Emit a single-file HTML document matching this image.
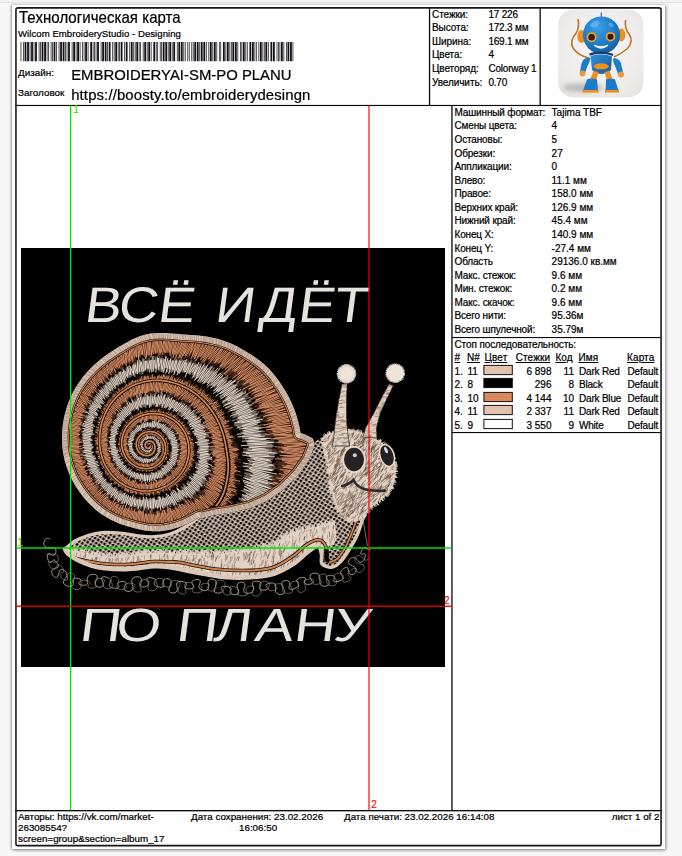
<!DOCTYPE html>
<html lang="ru">
<head>
<meta charset="utf-8">
<title>Технологическая карта</title>
<style>
html,body{margin:0;padding:0}
body{width:682px;height:856px;overflow:hidden;background:#f7f7f7;position:relative;font-family:"Liberation Sans",sans-serif;color:#000}
.topstrip{position:absolute;left:0;top:0;width:682px;height:2px;background:#f2f2f2;border-bottom:0.8px solid #e4e4e4}
.page{position:absolute;left:12px;top:5px;width:653px;height:844px;background:#fff;box-shadow:1px 1px 3px rgba(0,0,0,.45),-1px 0 2px rgba(0,0,0,.32)}
.ln{position:absolute;background:#0a0a0a}
.t{position:absolute;white-space:nowrap;line-height:1;-webkit-text-stroke-width:0.22px}
.u{text-decoration:underline}
svg{position:absolute;left:0;top:0}
</style>
</head>
<body>
<div class="topstrip"></div>
<div class="page"></div>

<svg width="682" height="856" viewBox="0 0 682 856" xmlns="http://www.w3.org/2000/svg">
<rect x="21" y="248" width="424" height="419" fill="#000"/>
<path d="M50.2 539.4C49.8 539.2 48.7 538.1 47.8 538.2C46.9 538.2 45.7 538.6 45 539.6C44.4 540.6 43.6 542.8 43.8 544.2C44.1 545.5 45.2 546.9 46.5 547.5C47.8 548.1 50.2 547.5 51.7 547.7C53.2 547.9 54.6 547.9 55.3 548.6C56 549.3 56 550.7 55.9 551.8C55.8 552.8 55.2 554.4 54.6 554.9C54 555.5 53.1 555.4 52.3 555.2C51.5 554.9 50.6 553.7 49.8 553.5C49.1 553.3 48.3 553.2 47.9 553.9C47.5 554.6 47.3 556.4 47.5 557.7C47.6 559 48.3 560.8 48.8 561.6C49.4 562.4 50.3 562.6 50.9 562.4C51.5 562.3 52 561.2 52.6 560.8C53.1 560.4 53.5 559.8 54.2 560C54.8 560.2 55.7 561.1 56.4 562C57.1 562.9 58.1 564.4 58.4 565.3C58.6 566.2 58.4 566.9 57.8 567.5C57.2 568 55.7 568 54.7 568.5C53.8 569 52.4 569.5 52 570.4C51.5 571.3 51.6 572.8 52.1 573.9C52.5 575 53.8 576.4 54.6 576.9C55.5 577.5 56.6 577.5 57.3 577C58 576.5 58.2 575 58.6 574C59 572.9 59 571.3 59.6 570.5C60.2 569.8 61.1 569.4 62.1 569.5C63.2 569.7 64.8 570.6 65.6 571.5C66.4 572.5 67 573.9 67 575.1C66.9 576.2 66 577.3 65.5 578.4C64.9 579.5 63.7 580.7 63.5 581.7C63.4 582.7 63.7 583.9 64.5 584.7C65.4 585.4 67.4 586.1 68.7 586.3C70 586.4 71.8 586.1 72.6 585.5C73.4 584.9 73.4 583.7 73.4 582.7C73.5 581.7 72.7 580.4 72.9 579.7C73.1 578.9 73.6 578.4 74.5 578.2C75.4 578 77.2 578.2 78.2 578.5C79.2 578.7 80.2 579.1 80.7 579.5C81.2 579.8 81.2 580.2 81 580.6C80.9 581 80.3 581.3 79.9 581.8C79.5 582.2 78.9 582.7 78.8 583.1C78.8 583.6 79 584.2 79.7 584.5C80.5 584.9 82.2 585.4 83.5 585.3C84.7 585.3 86.7 585.1 87.3 584.2C87.9 583.3 86.9 581.3 87.1 580C87.2 578.6 87.6 577.1 88.2 576.2C88.8 575.3 89.6 575 90.6 574.7C91.5 574.4 92.9 574.2 93.9 574.3C95 574.4 96.1 574.8 96.7 575.4C97.2 575.9 97.3 576.8 97.2 577.8C97.1 578.8 96.3 580 95.9 581.1C95.6 582.3 95.1 583.6 95.3 584.5C95.5 585.5 96.3 586.4 97.3 586.8C98.2 587.3 99.9 587.4 100.9 587.1C101.9 586.9 102.9 586.1 103.2 585.2C103.5 584.3 102.9 582.8 102.6 581.7C102.4 580.6 101.5 579.2 101.6 578.4C101.8 577.5 102.5 576.9 103.5 576.7C104.5 576.6 106.5 576.9 107.7 577.5C108.8 578 110 579.1 110.3 580.1C110.7 581 110 582.3 109.8 583.3C109.7 584.3 108.9 585.4 109.3 586.2C109.7 586.9 111 587.6 112.2 587.9C113.5 588.2 115.8 588.3 116.9 588.2C118.1 588 118.9 587.5 119.1 586.9C119.3 586.4 118.3 585.5 118.1 584.8C118 584.1 117.6 583.3 118.1 582.7C118.6 582.2 120.2 581.8 121.3 581.6C122.4 581.4 123.9 581.5 124.7 581.8C125.5 582.1 126 582.6 126 583.2C126.1 583.9 125.4 584.8 125 585.6C124.7 586.5 124 587.6 124 588.5C124.1 589.3 124.6 590.2 125.4 590.7C126.2 591.2 127.9 591.5 129 591.4C130.2 591.2 131.6 590.7 132.2 589.9C132.8 589.1 132.9 587.9 132.8 586.6C132.7 585.4 131.9 583.8 131.9 582.5C131.8 581.2 131.8 579.7 132.4 578.8C133.1 577.8 134.6 577.1 135.8 576.8C137.1 576.6 138.9 576.8 139.9 577.2C140.9 577.7 141.5 578.7 141.7 579.6C141.8 580.6 141.1 581.9 140.9 583C140.7 584 140.1 585.1 140.5 585.8C140.8 586.4 141.8 586.9 142.8 587C143.9 587 145.7 586.7 146.6 586.3C147.6 585.8 148.4 584.9 148.6 584.1C148.7 583.3 148 582.3 147.6 581.5C147.3 580.6 146.4 579.7 146.6 579.1C146.7 578.5 147.3 578.1 148.3 577.8C149.2 577.6 151.1 577.6 152.2 577.9C153.3 578.1 154.6 578.6 155 579.1C155.5 579.7 155.1 580.5 155 581.3C154.8 582 154 583 154.1 583.8C154.3 584.5 154.8 585.4 155.7 585.9C156.7 586.5 158.6 587 159.9 587.2C161.1 587.3 162.6 587.3 163.3 586.9C164 586.6 164.1 585.9 164 585.2C164 584.5 163.2 583.4 163.1 582.5C163 581.7 162.9 580.6 163.5 580C164 579.3 165.4 578.8 166.5 578.7C167.6 578.6 169.2 578.9 170.1 579.5C170.9 580.1 171.3 581.1 171.3 582.2C171.3 583.3 170.4 584.8 169.9 586.1C169.5 587.4 168.7 588.9 168.8 590C168.9 591 169.6 592 170.6 592.5C171.5 593 173.3 593.2 174.3 592.9C175.4 592.6 176.6 591.9 177.1 591C177.6 590.1 177.3 588.7 177.2 587.5C177.1 586.4 176.4 585 176.6 584C176.7 583 177.2 582.2 178.2 581.8C179.1 581.4 180.9 581.3 182.2 581.5C183.5 581.6 185.1 582.2 185.8 582.8C186.5 583.3 186.6 584.2 186.5 584.8C186.4 585.5 185.5 586.3 185.3 586.8C185.2 587.4 185 588 185.6 588.3C186.2 588.7 187.5 588.9 188.7 588.9C189.8 588.9 191.5 588.7 192.3 588.4C193.2 588 193.6 587.3 193.6 586.6C193.7 585.9 192.8 585 192.6 584.1C192.3 583.3 191.7 582.3 192 581.6C192.3 580.9 193.3 580.2 194.3 579.9C195.3 579.6 197.1 579.5 198.1 579.6C199.1 579.8 200.1 580.2 200.4 580.9C200.6 581.5 200.1 582.4 199.8 583.4C199.6 584.3 198.8 585.5 198.9 586.5C199 587.5 199.5 588.6 200.5 589.3C201.4 590 203.3 590.5 204.6 590.5C205.9 590.5 207.4 590.2 208.1 589.4C208.8 588.7 208.7 587.5 208.7 586.3C208.7 585.1 207.9 583.5 208 582.4C208.1 581.3 208.5 580.2 209.3 579.7C210.1 579.2 211.9 579 213 579.4C214.1 579.7 215.6 580.5 216.2 581.5C216.7 582.5 216.4 583.9 216.1 585.1C215.8 586.4 214.6 587.8 214.3 589C214.1 590.1 213.9 591.1 214.4 591.8C215 592.5 216.5 593 217.6 593.1C218.8 593.2 220.4 593 221.2 592.6C222 592.2 222.3 591.4 222.3 590.7C222.3 590.1 221.5 589.1 221.4 588.5C221.3 587.8 221.2 587.2 221.8 586.8C222.4 586.5 223.9 586.3 225.1 586.3C226.3 586.4 228.2 586.6 229.3 587C230.3 587.3 231 587.9 231.2 588.4C231.4 589 230.8 589.7 230.6 590.4C230.4 591 229.8 591.8 230 592.4C230.2 593 230.8 593.7 231.7 594.1C232.6 594.5 234.2 594.8 235.3 594.7C236.4 594.7 237.7 594.4 238.2 593.9C238.8 593.3 238.8 592.5 238.6 591.5C238.5 590.6 237.7 589.4 237.5 588.4C237.2 587.3 236.7 586.2 237 585.2C237.4 584.3 238.5 582.9 239.6 582.5C240.7 582 242.8 582 243.7 582.5C244.6 582.9 244.9 584 245 585.1C245 586.2 244 587.8 243.9 589C243.8 590.2 243.6 591.5 244.3 592.2C245 593 246.5 593.4 247.8 593.4C249.1 593.4 251.1 592.9 252 592.1C253 591.4 253.5 590.2 253.7 589.1C253.8 588 253.1 586.7 252.8 585.6C252.6 584.6 252.1 583.5 252.4 582.8C252.7 582.1 253.6 581.5 254.6 581.3C255.6 581.1 257.4 581.1 258.4 581.4C259.5 581.6 260.5 582.2 260.9 582.8C261.3 583.5 261 584.4 260.7 585.2C260.5 586 259.7 586.9 259.6 587.6C259.5 588.4 259.6 589 260.2 589.4C260.8 589.8 262.2 590 263.3 590.1C264.4 590.1 265.9 589.9 266.7 589.7C267.4 589.4 267.7 588.9 267.7 588.4C267.6 588 266.7 587.3 266.5 586.7C266.2 586.1 265.7 585.4 266.1 584.8C266.5 584.3 267.6 583.7 268.7 583.4C269.9 583.1 271.8 582.8 272.9 583C274.1 583.2 275.2 583.8 275.6 584.5C276.1 585.3 275.7 586.6 275.7 587.8C275.7 588.9 275.2 590.4 275.5 591.5C275.9 592.5 276.8 593.6 277.9 594C278.9 594.5 280.9 594.6 282 594.3C283.1 594 284.2 593.1 284.5 592.2C284.8 591.3 284.2 589.9 283.7 588.7C283.3 587.5 282.1 586 281.8 584.8C281.6 583.7 281.7 582.5 282.4 581.8C283 581 284.6 580.5 285.7 580.5C286.8 580.4 288.3 580.8 288.9 581.4C289.6 582 289.7 583.1 289.7 584.1C289.7 585.1 288.9 586.4 288.9 587.2C289 588 289 588.8 289.7 589.1C290.4 589.4 291.9 589.3 293.1 589.1C294.3 588.8 296 588 296.9 587.4C297.7 586.7 298.3 585.8 298.4 585C298.5 584.2 297.8 583.3 297.6 582.6C297.3 581.8 296.6 581.1 296.8 580.4C296.9 579.7 297.4 579 298.4 578.5C299.3 578 301.4 577.5 302.6 577.4C303.7 577.3 305 577.5 305.4 577.9C305.8 578.3 305.3 579.1 305.1 579.9C304.9 580.6 304.1 581.7 304.3 582.4C304.4 583.1 305 583.8 306 584.1C306.9 584.5 308.7 584.5 309.7 584.3C310.8 584.1 311.9 583.6 312.2 583C312.6 582.3 312.1 581.4 311.7 580.5C311.4 579.6 310.3 578.4 310.1 577.5C309.9 576.5 310 575.4 310.6 574.7C311.3 573.9 312.8 573.3 314 573.1C315.2 572.9 316.9 573.1 317.9 573.7C318.8 574.2 319.4 575.3 319.7 576.5C320 577.6 319.7 579.2 319.8 580.5C319.8 581.8 319.8 583.3 320.3 584.2C320.8 585.2 321.9 585.9 322.9 586.1C324 586.4 325.7 586.2 326.7 585.8C327.8 585.3 328.9 584.5 329.2 583.6C329.4 582.7 328.7 581.5 328.2 580.5C327.7 579.5 326.4 578.6 326.3 577.8C326.2 577.1 326.6 576.4 327.5 576C328.3 575.5 330.3 575.2 331.4 575.3C332.5 575.4 333.7 575.8 334.1 576.4C334.6 577 334.2 578 334.1 578.8C334.1 579.6 333.5 580.6 333.8 581.1C334.2 581.6 335 581.9 336.1 581.8C337.1 581.7 339 581.2 340.1 580.7C341.2 580.2 342.4 579.3 342.8 578.6C343.3 578 343 577.2 342.7 576.5C342.4 575.9 341.4 575.2 341.1 574.5C340.7 573.7 340.4 572.9 340.7 572.1C340.9 571.3 341.5 570.3 342.4 569.5C343.3 568.7 345.1 567.5 346 567.3C346.9 567.1 347.6 567.5 348 568.3C348.4 569 348.1 570.7 348.5 571.7C348.9 572.7 349.4 574 350.2 574.4C351 574.7 352.6 574.5 353.5 574C354.5 573.4 355.7 572.1 356.1 571.1C356.4 570.1 356.1 568.9 355.5 568C354.8 567.1 353.3 566.5 352.2 565.8C351.2 565.1 349.7 564.6 349.1 563.8C348.5 563.1 348.2 562.1 348.5 561.2C348.8 560.3 349.9 559 350.9 558.3C351.9 557.7 353.4 557.2 354.4 557.4C355.4 557.7 356.3 558.9 357.1 559.6C358 560.4 358.7 561.9 359.5 562.2C360.4 562.5 361.6 562.2 362.5 561.5C363.4 560.8 364.4 558.9 364.9 557.8C365.4 556.7 365.5 555.3 365.3 554.7C365.1 554 364.3 554 363.8 553.9C363.2 553.9 362.3 554.3 361.8 554.2C361.3 554.2 360.7 554.3 360.7 553.5C360.8 552.7 361.5 550.6 362.1 549.6C362.7 548.6 363.5 547.6 364.3 547.5C365.1 547.3 365.9 548.3 366.7 548.7C367.6 549.1 368.5 549.7 369.1 549.8C369.8 550 370.4 549.6 370.7 549.5" fill="none" stroke="#c9b6a6" stroke-width="0.8" stroke-linejoin="round"/><path d="M46.4 554.7C46.8 554.7 47.9 554.8 49 554.7C50.2 554.6 51.9 554 53.3 554.1C54.6 554.1 56.3 554.2 57.1 555.1C57.9 556 58.4 558.1 58.3 559.3C58.2 560.6 57.4 562 56.5 562.5C55.7 562.9 54.2 562.1 53.1 561.9C52 561.8 50.6 561.2 49.9 561.5C49.1 561.8 48.6 562.8 48.8 563.8C48.9 564.8 49.7 566.5 50.6 567.4C51.4 568.3 52.8 569.1 53.7 569.1C54.6 569.1 55.4 568.1 56 567.4C56.6 566.8 56.8 565.4 57.3 565C57.9 564.6 58.5 564.5 59.4 565C60.2 565.4 61.5 566.7 62.3 567.6C63.1 568.5 63.9 569.8 64 570.5C64.2 571.2 63.7 571.6 63.2 572C62.7 572.5 61.5 572.6 61 573.2C60.5 573.7 60 574.6 60.2 575.5C60.5 576.4 61.5 577.8 62.5 578.7C63.4 579.5 65 580.4 65.9 580.5C66.7 580.6 67.3 580 67.6 579.2C67.9 578.4 67.4 576.8 67.6 575.8C67.7 574.8 67.8 573.8 68.4 573.4C69.1 572.9 70.3 572.7 71.3 573C72.2 573.2 73.7 574 74.3 574.8C74.8 575.7 74.9 576.9 74.5 578.1C74.2 579.3 72.8 580.8 72.2 582.1C71.7 583.5 70.9 585 71.2 586.2C71.5 587.3 72.8 588.5 74 589C75.2 589.6 77.3 589.7 78.5 589.4C79.7 589.1 80.5 588.1 80.9 587.2C81.4 586.4 81.1 585.2 81.1 584.3C81.1 583.3 80.9 582.4 81.1 581.8C81.3 581.1 81.7 580.6 82.4 580.4C83.1 580.1 84.2 580 85.2 580.1C86.2 580.3 87.7 580.6 88.5 581.1C89.3 581.6 90 582.3 90 583.1C89.9 583.8 88.5 584.8 88.3 585.6C88 586.4 87.7 587.3 88.5 587.7C89.3 588.1 92.1 588.1 93.3 588C94.5 587.9 95 587.6 95.5 587.2C96 586.9 96.1 586.3 96.1 585.7C96.1 585.1 95.5 584.3 95.3 583.6C95.1 582.8 94.6 581.9 94.8 581.2C95 580.5 95.5 579.8 96.4 579.3C97.3 578.8 98.9 578.5 100.1 578.4C101.3 578.3 102.9 578.5 103.6 578.9C104.3 579.3 104.4 580.1 104.4 580.9C104.3 581.7 103.4 582.9 103.3 583.9C103.2 584.9 103.1 586.1 103.7 586.9C104.4 587.7 106 588.5 107.2 588.7C108.5 588.9 110.4 588.7 111.2 588.1C112.1 587.4 112.4 586.1 112.3 584.9C112.3 583.6 111.3 581.8 111.1 580.6C111 579.3 110.9 577.9 111.5 577.2C112.2 576.5 114 576.2 115.1 576.5C116.2 576.7 117.9 577.6 118.4 578.6C118.9 579.6 118.6 581.1 118.3 582.4C118.1 583.7 116.9 585.2 116.9 586.3C116.9 587.4 117.4 588.4 118.3 588.9C119.3 589.4 121.5 589.6 122.8 589.5C124.1 589.4 125.5 588.8 126.1 588.3C126.7 587.8 126.5 587.1 126.4 586.5C126.3 585.9 125.6 585.3 125.6 584.8C125.7 584.3 125.9 583.8 126.6 583.5C127.3 583.2 128.8 583.1 130 583.1C131.1 583.2 132.8 583.4 133.7 583.7C134.5 584.1 135 584.7 135.1 585.3C135.1 585.9 134.4 586.7 134.1 587.5C133.8 588.3 133.2 589.2 133.4 589.9C133.5 590.6 134.3 591.3 135.2 591.6C136.1 592 137.9 592.2 138.9 592C139.9 591.9 140.9 591.4 141.2 590.7C141.5 590 141 588.9 140.7 587.8C140.5 586.7 139.5 585.3 139.5 584.2C139.5 583.1 139.8 581.8 140.7 581C141.5 580.3 143.3 579.7 144.5 579.6C145.7 579.5 147.3 579.9 148.1 580.5C148.8 581.1 148.9 582.3 148.9 583.4C148.9 584.5 148 586 148 587.1C148 588.2 148.1 589.3 148.9 589.9C149.6 590.5 151.3 590.8 152.6 590.7C153.8 590.6 155.6 589.9 156.4 589.2C157.2 588.4 157.5 587.1 157.5 585.9C157.5 584.8 156.5 583.3 156.3 582.3C156.1 581.2 155.7 580.1 156.2 579.5C156.6 578.8 157.9 578.4 159 578.4C160.1 578.3 161.8 578.6 162.7 579.1C163.5 579.5 163.9 580.3 163.9 581C164 581.6 163.1 582.4 162.8 583.1C162.5 583.8 161.9 584.6 162.1 585.1C162.3 585.7 163.1 586.2 164.1 586.5C165.1 586.8 166.9 587 168 587C169.2 587 170.4 586.8 170.9 586.4C171.5 586.1 171.2 585.5 171.2 584.8C171.1 584.2 170.4 583.4 170.5 582.8C170.6 582.1 171 581.4 171.9 581C172.7 580.6 174.5 580.4 175.7 580.5C177 580.6 178.6 581 179.3 581.6C180.1 582.2 180.2 583.2 180.1 584.3C180 585.3 179 586.7 178.7 587.9C178.4 589.1 177.9 590.5 178.3 591.5C178.7 592.5 179.8 593.5 180.8 593.9C181.8 594.3 183.5 594.4 184.4 594.1C185.3 593.8 185.9 592.9 186 591.9C186.2 590.9 185.5 589.4 185.2 588.2C185 586.9 184.4 585.5 184.7 584.5C185 583.6 185.8 582.8 186.9 582.5C187.9 582.2 189.8 582.4 190.9 582.8C192 583.2 193.1 584.2 193.5 585C194 585.9 193.5 587.1 193.3 588C193.2 589 192.3 590.1 192.4 590.8C192.5 591.6 193 592.2 193.9 592.5C194.8 592.9 196.6 593 197.8 592.8C199.1 592.6 200.7 592.2 201.4 591.6C202.2 591 202.3 590.1 202.2 589.2C202.2 588.4 201.3 587.4 201.2 586.6C201.1 585.8 201 585 201.5 584.5C202.1 584 203.4 583.6 204.5 583.5C205.6 583.3 207.3 583.4 208.1 583.6C208.8 583.9 209.2 584.3 209.1 584.9C209.1 585.4 208.1 586.1 207.7 586.8C207.4 587.5 206.8 588.3 207.1 589C207.4 589.7 208.5 590.4 209.6 590.7C210.7 591.1 212.6 591.3 213.7 591C214.7 590.8 215.6 590.2 215.9 589.3C216.3 588.5 215.7 587.1 215.6 586C215.6 584.8 215.2 583.3 215.6 582.4C216.1 581.4 217.3 580.6 218.5 580.3C219.7 580 221.7 580.1 222.8 580.6C223.9 581.2 224.9 582.2 225.2 583.3C225.4 584.5 224.7 586 224.4 587.4C224.1 588.8 223.2 590.3 223.2 591.5C223.3 592.6 223.8 593.7 224.7 594.3C225.6 594.9 227.3 595.2 228.4 595.1C229.4 595 230.6 594.4 231.1 593.7C231.5 593 231.1 591.9 230.9 591C230.7 590.1 229.8 589 229.7 588.3C229.7 587.6 229.8 587 230.5 586.7C231.1 586.5 232.6 586.5 233.7 586.7C234.9 586.9 236.4 587.4 237.2 588C238 588.5 238.4 589.2 238.5 589.9C238.6 590.6 238 591.4 237.8 592.1C237.6 592.8 237.2 593.5 237.4 594C237.7 594.6 238.4 595.1 239.3 595.4C240.2 595.7 241.8 595.9 243 595.9C244.2 595.8 246.1 595.5 246.7 595C247.4 594.4 247 593.5 246.8 592.6C246.7 591.7 245.7 590.5 245.8 589.6C245.9 588.7 246.6 587.7 247.5 587.1C248.4 586.5 250.3 586 251.4 586C252.5 586 253.6 586.4 253.9 587C254.2 587.6 253.7 588.6 253.4 589.6C253.2 590.6 252.3 592 252.3 593C252.3 593.9 252.7 595 253.4 595.5C254.2 596 255.9 596.2 257 596C258.2 595.8 259.7 595.1 260.3 594.2C261 593.4 261 592 261 590.8C260.9 589.6 260 588.1 259.8 586.8C259.6 585.6 259.3 584.3 259.7 583.4C260.2 582.5 261.3 581.8 262.4 581.4C263.6 581.1 265.4 581.1 266.5 581.4C267.6 581.7 268.7 582.4 269.1 583.2C269.5 584 269.2 585.2 269.1 586.1C269 587.1 268.3 588.2 268.4 589C268.5 589.7 269 590.4 269.9 590.6C270.7 590.9 272.4 590.8 273.5 590.6C274.6 590.4 275.9 589.9 276.4 589.4C276.8 588.9 276.6 588.3 276.3 587.7C276 587.1 274.9 586.5 274.6 586C274.4 585.5 274.2 584.9 274.7 584.6C275.3 584.2 276.7 583.8 277.8 583.7C279 583.6 280.7 583.7 281.6 584C282.5 584.4 282.9 585 283 585.8C283.2 586.6 282.4 587.8 282.5 588.8C282.5 589.8 282.4 591 283.1 591.7C283.8 592.5 285.3 593.1 286.6 593.3C287.9 593.5 289.9 593.3 290.9 592.9C291.9 592.5 292.5 591.8 292.6 590.9C292.7 590.1 291.9 588.9 291.5 587.8C291.2 586.8 290.4 585.5 290.5 584.5C290.7 583.5 291.4 582.4 292.3 581.9C293.2 581.3 295 581 296 581.1C297.1 581.3 298.2 581.9 298.6 582.7C299 583.6 298.8 584.9 298.6 586.1C298.5 587.3 297.8 588.8 297.8 589.8C297.9 590.8 298.1 591.7 298.8 592.1C299.4 592.5 300.8 592.6 301.8 592.3C302.9 592 304.4 591.2 305.1 590.4C305.7 589.5 305.9 588.1 305.8 587C305.7 585.9 304.5 584.6 304.3 583.6C304.1 582.6 303.8 581.6 304.4 580.9C305.1 580.2 306.6 579.6 307.9 579.3C309.2 579 311.1 579 312.1 579.1C313.1 579.3 313.6 579.8 313.8 580.4C314 580.9 313.3 581.7 313.2 582.3C313.1 582.9 312.9 583.6 313.4 583.9C313.9 584.3 315.1 584.5 316.2 584.4C317.2 584.4 319 584.1 319.8 583.7C320.7 583.3 321.4 582.7 321.5 582.1C321.5 581.5 320.8 580.8 320.3 580C319.8 579.3 318.9 578.5 318.7 577.7C318.5 577 318.7 576.1 319.3 575.5C319.9 574.9 321.3 574.2 322.3 574C323.3 573.8 324.7 573.8 325.4 574.2C326.2 574.6 326.6 575.3 326.8 576.3C327 577.4 326.4 579 326.5 580.4C326.7 581.7 326.8 583.5 327.7 584.4C328.6 585.3 330.5 585.8 331.9 585.8C333.3 585.7 335.3 585 336.1 584.2C336.9 583.4 336.9 582.1 336.7 581C336.5 579.9 335.2 578.6 334.8 577.6C334.5 576.6 334.1 575.5 334.6 574.8C335 574.1 336.4 573.4 337.6 573.2C338.7 573 340.5 573.1 341.4 573.6C342.3 574 342.9 575 343.1 575.9C343.4 576.9 342.9 578.3 342.9 579.3C342.9 580.2 342.8 581.2 343.2 581.7C343.7 582.2 344.7 582.3 345.6 582.1C346.6 581.9 348 581.3 348.9 580.7C349.8 580.1 350.7 579.3 350.9 578.6C351.1 578 350.3 577.2 349.8 576.5C349.4 575.9 348.1 575.5 348 574.8C347.8 574.1 348.2 573.2 348.8 572.3C349.5 571.4 351.1 570.1 352.1 569.4C353.1 568.7 354.2 568.1 354.9 568.1C355.6 568.1 355.8 568.7 356.1 569.3C356.5 569.9 356.5 571.1 357 571.6C357.5 572.1 358.3 572.6 359.1 572.5C360 572.3 361.4 571.6 362.3 570.8C363.1 570 364.1 568.8 364.2 567.8C364.4 566.8 364 565.8 363 565.1C362.1 564.3 359.8 564 358.5 563.3C357.2 562.7 355.5 562.1 355 561.1C354.5 560.1 354.9 558.2 355.5 557.3C356.1 556.3 357.5 555.3 358.5 555.3C359.6 555.2 360.7 556.4 361.7 557.1C362.7 557.9 363.7 559.3 364.6 559.8C365.5 560.3 366.4 560.3 367.1 560C367.9 559.7 368.7 558.5 369.1 558.2" fill="none" stroke="#a99787" stroke-width="0.6" stroke-linejoin="round"/>
<defs><pattern id="mesh" width="5.4" height="5.2" patternUnits="userSpaceOnUse" patternTransform="rotate(-12)"><path d="M0 0L2.7 2.6L0 5.2M5.4 0L2.7 2.6L5.4 5.2" stroke="#d2beae" stroke-width="1.3" fill="none"/></pattern>
<clipPath id="bodyclip"><path d="M64 549C65.2 546.7 71 543.2 75 541C79 538.8 83.6 536.9 88 535.5C92.4 534.1 96.2 533 101.5 532.6C106.8 532.2 113.6 532.4 120 533C126.4 533.6 134.3 535.4 140 536C145.7 536.6 149 537 154 536.7C159 536.4 164.8 535.6 170 534C175.2 532.4 180 529.9 185 527C190 524.1 195.4 518.8 200 516.5C204.6 514.2 207.2 514.4 212.3 513.4C217.4 512.4 224.6 511.5 230.8 510.3C237 509.1 243.5 508.1 249.3 506.2C255.1 504.3 260.2 502.1 265.7 499C271.2 495.9 277 492 282.1 487.7C287.2 483.4 292.4 478.2 296.5 473.4C300.6 468.6 304.2 463.4 306.8 459C309.4 454.6 310.4 449.7 311.9 446.7C313.4 443.7 314 442.8 316 441C318 439.2 321.3 437.3 324 436C326.7 434.7 328.5 433.8 332 433C335.5 432.2 340.9 431.3 345 431C349.1 430.7 351.9 430.2 356.5 431.3C361.1 432.4 368 435.6 372.6 437.7C377.2 439.8 380.4 441 383.9 444.2C387.4 447.4 391.6 452.7 393.5 457C395.4 461.3 395.5 465.4 395.5 470C395.5 474.6 394.6 480.7 393.5 484.5C392.4 488.3 390.8 489.9 388.7 492.6C386.6 495.3 383.6 498.2 380.6 500.6C377.7 503 373.7 504.6 371 507C368.3 509.4 366.1 512.5 364.5 515C362.9 517.5 362.8 519 361.7 522C360.6 525 359.3 529.8 358 533C356.7 536.2 355.8 538.2 354 541.5C352.2 544.8 349.3 549.4 347 553C344.7 556.6 342.3 560.8 340 563.4C337.7 566 335.3 567.8 333 568.5C330.7 569.2 327.8 568.2 326 567.5C324.2 566.8 322.6 566.1 322 564C321.4 561.9 322.6 557.7 322.5 555C322.4 552.3 322.2 549.5 321.5 548C320.8 546.5 319.8 545.9 318.5 546C317.2 546.1 316 547.2 314 548.5C312 549.8 310.3 551.1 306.7 554C303.1 556.9 298.1 562.2 292.6 565.7C287.2 569.2 281 572.9 274 575C267 577.1 258.2 578 250.4 578.6C242.6 579.2 234.8 579.2 227 578.6C219.2 578 210.4 576.2 203.5 575C196.6 573.8 191 572.6 185.4 571.5C179.8 570.4 175.2 569.2 170 568.5C164.8 567.8 159.3 567.3 154 567.5C148.7 567.7 143.2 569 138 569.5C132.8 570 128.5 570.5 123 570.5C117.5 570.5 110.2 570.1 105 569.5C99.8 568.9 96.5 568.3 92 567C87.5 565.7 82 563.5 78 561.5C74 559.5 70.3 557.1 68 555C65.7 552.9 62.8 551.3 64 549Z"/></clipPath>
<clipPath id="headclip"><path d="M323 438C323.2 435.1 325.5 435.3 327 434.5C328.5 433.7 329 433.6 332 433C335 432.4 340.9 431.3 345 431C349.1 430.7 351.9 430.2 356.5 431.3C361.1 432.4 368 435.6 372.6 437.7C377.2 439.8 380.4 441 383.9 444.2C387.4 447.4 391.6 452.7 393.5 457C395.4 461.3 395.5 465.4 395.5 470C395.5 474.6 394.6 480.7 393.5 484.5C392.4 488.3 390.8 489.9 388.7 492.6C386.6 495.3 383.6 498.2 380.6 500.6C377.7 503 373.7 504.6 371 507C368.3 509.4 366.3 513 364.5 515C362.7 517 362.2 518 360 519C357.8 520 354.2 521.8 351 521C347.8 520.2 343.7 517 341 514C338.3 511 336.7 507.3 335 503C333.3 498.7 332.1 493.5 331 488C329.9 482.5 329.4 476 328.5 470C327.6 464 326.4 457.3 325.5 452C324.6 446.7 322.8 440.9 323 438Z"/></clipPath><clipPath id="footclip"><path d="M62 549.5C64.8 547.7 70 550.1 75 551C80 551.9 86.2 554.1 92 555C97.8 555.9 104.8 556.3 110 556.5C115.2 556.7 118 556.4 123 556C128 555.6 134.8 554.6 140 554C145.2 553.4 149 552.7 154 552.5C159 552.3 164 552.8 170 553C176 553.2 183.3 553.3 190 553.5C196.7 553.7 203.8 554.1 210 554C216.2 553.9 222 553.4 227 553C232 552.6 235.3 552.1 240 551.5C244.7 550.9 250 550.4 255 549.5C260 548.6 265.8 547.5 270 546C274.2 544.5 276.7 542.6 280 540.5C283.3 538.4 285.8 535.4 290 533.5C294.2 531.6 300 530.2 305 529C310 527.8 315.2 527.2 320 526C324.8 524.8 331.3 519.7 334 522C336.7 524.3 337 535.7 336 540C335 544.3 330.3 545.3 328 548C325.7 550.7 323.7 552.3 322 556C320.3 559.7 321.7 566 318 570C314.3 574 312.7 577 300 580C287.3 583 267 587.7 242 588C217 588.3 175.3 583.8 150 582C124.7 580.2 105.3 580.3 90 577C74.7 573.7 62.7 566.6 58 562C53.3 557.4 59.2 551.3 62 549.5Z"/></clipPath></defs>
<path d="M64 549C65.2 546.7 71 543.2 75 541C79 538.8 83.6 536.9 88 535.5C92.4 534.1 96.2 533 101.5 532.6C106.8 532.2 113.6 532.4 120 533C126.4 533.6 134.3 535.4 140 536C145.7 536.6 149 537 154 536.7C159 536.4 164.8 535.6 170 534C175.2 532.4 180 529.9 185 527C190 524.1 195.4 518.8 200 516.5C204.6 514.2 207.2 514.4 212.3 513.4C217.4 512.4 224.6 511.5 230.8 510.3C237 509.1 243.5 508.1 249.3 506.2C255.1 504.3 260.2 502.1 265.7 499C271.2 495.9 277 492 282.1 487.7C287.2 483.4 292.4 478.2 296.5 473.4C300.6 468.6 304.2 463.4 306.8 459C309.4 454.6 310.4 449.7 311.9 446.7C313.4 443.7 314 442.8 316 441C318 439.2 321.3 437.3 324 436C326.7 434.7 328.5 433.8 332 433C335.5 432.2 340.9 431.3 345 431C349.1 430.7 351.9 430.2 356.5 431.3C361.1 432.4 368 435.6 372.6 437.7C377.2 439.8 380.4 441 383.9 444.2C387.4 447.4 391.6 452.7 393.5 457C395.4 461.3 395.5 465.4 395.5 470C395.5 474.6 394.6 480.7 393.5 484.5C392.4 488.3 390.8 489.9 388.7 492.6C386.6 495.3 383.6 498.2 380.6 500.6C377.7 503 373.7 504.6 371 507C368.3 509.4 366.1 512.5 364.5 515C362.9 517.5 362.8 519 361.7 522C360.6 525 359.3 529.8 358 533C356.7 536.2 355.8 538.2 354 541.5C352.2 544.8 349.3 549.4 347 553C344.7 556.6 342.3 560.8 340 563.4C337.7 566 335.3 567.8 333 568.5C330.7 569.2 327.8 568.2 326 567.5C324.2 566.8 322.6 566.1 322 564C321.4 561.9 322.6 557.7 322.5 555C322.4 552.3 322.2 549.5 321.5 548C320.8 546.5 319.8 545.9 318.5 546C317.2 546.1 316 547.2 314 548.5C312 549.8 310.3 551.1 306.7 554C303.1 556.9 298.1 562.2 292.6 565.7C287.2 569.2 281 572.9 274 575C267 577.1 258.2 578 250.4 578.6C242.6 579.2 234.8 579.2 227 578.6C219.2 578 210.4 576.2 203.5 575C196.6 573.8 191 572.6 185.4 571.5C179.8 570.4 175.2 569.2 170 568.5C164.8 567.8 159.3 567.3 154 567.5C148.7 567.7 143.2 569 138 569.5C132.8 570 128.5 570.5 123 570.5C117.5 570.5 110.2 570.1 105 569.5C99.8 568.9 96.5 568.3 92 567C87.5 565.7 82 563.5 78 561.5C74 559.5 70.3 557.1 68 555C65.7 552.9 62.8 551.3 64 549Z" fill="#050303"/>
<g clip-path="url(#bodyclip)">
<path d="M64 549C65.2 546.7 71 543.2 75 541C79 538.8 83.6 536.9 88 535.5C92.4 534.1 96.2 533 101.5 532.6C106.8 532.2 113.6 532.4 120 533C126.4 533.6 134.3 535.4 140 536C145.7 536.6 149 537 154 536.7C159 536.4 164.8 535.6 170 534C175.2 532.4 180 529.9 185 527C190 524.1 195.4 518.8 200 516.5C204.6 514.2 207.2 514.4 212.3 513.4C217.4 512.4 224.6 511.5 230.8 510.3C237 509.1 243.5 508.1 249.3 506.2C255.1 504.3 260.2 502.1 265.7 499C271.2 495.9 277 492 282.1 487.7C287.2 483.4 292.4 478.2 296.5 473.4C300.6 468.6 304.2 463.4 306.8 459C309.4 454.6 310.4 449.7 311.9 446.7C313.4 443.7 314 442.8 316 441C318 439.2 321.3 437.3 324 436C326.7 434.7 328.5 433.8 332 433C335.5 432.2 340.9 431.3 345 431C349.1 430.7 351.9 430.2 356.5 431.3C361.1 432.4 368 435.6 372.6 437.7C377.2 439.8 380.4 441 383.9 444.2C387.4 447.4 391.6 452.7 393.5 457C395.4 461.3 395.5 465.4 395.5 470C395.5 474.6 394.6 480.7 393.5 484.5C392.4 488.3 390.8 489.9 388.7 492.6C386.6 495.3 383.6 498.2 380.6 500.6C377.7 503 373.7 504.6 371 507C368.3 509.4 366.1 512.5 364.5 515C362.9 517.5 362.8 519 361.7 522C360.6 525 359.3 529.8 358 533C356.7 536.2 355.8 538.2 354 541.5C352.2 544.8 349.3 549.4 347 553C344.7 556.6 342.3 560.8 340 563.4C337.7 566 335.3 567.8 333 568.5C330.7 569.2 327.8 568.2 326 567.5C324.2 566.8 322.6 566.1 322 564C321.4 561.9 322.6 557.7 322.5 555C322.4 552.3 322.2 549.5 321.5 548C320.8 546.5 319.8 545.9 318.5 546C317.2 546.1 316 547.2 314 548.5C312 549.8 310.3 551.1 306.7 554C303.1 556.9 298.1 562.2 292.6 565.7C287.2 569.2 281 572.9 274 575C267 577.1 258.2 578 250.4 578.6C242.6 579.2 234.8 579.2 227 578.6C219.2 578 210.4 576.2 203.5 575C196.6 573.8 191 572.6 185.4 571.5C179.8 570.4 175.2 569.2 170 568.5C164.8 567.8 159.3 567.3 154 567.5C148.7 567.7 143.2 569 138 569.5C132.8 570 128.5 570.5 123 570.5C117.5 570.5 110.2 570.1 105 569.5C99.8 568.9 96.5 568.3 92 567C87.5 565.7 82 563.5 78 561.5C74 559.5 70.3 557.1 68 555C65.7 552.9 62.8 551.3 64 549Z" fill="url(#mesh)"/>
<g clip-path="url(#footclip)"><path d="M62 549.5C64.8 547.7 70 550.1 75 551C80 551.9 86.2 554.1 92 555C97.8 555.9 104.8 556.3 110 556.5C115.2 556.7 118 556.4 123 556C128 555.6 134.8 554.6 140 554C145.2 553.4 149 552.7 154 552.5C159 552.3 164 552.8 170 553C176 553.2 183.3 553.3 190 553.5C196.7 553.7 203.8 554.1 210 554C216.2 553.9 222 553.4 227 553C232 552.6 235.3 552.1 240 551.5C244.7 550.9 250 550.4 255 549.5C260 548.6 265.8 547.5 270 546C274.2 544.5 276.7 542.6 280 540.5C283.3 538.4 285.8 535.4 290 533.5C294.2 531.6 300 530.2 305 529C310 527.8 315.2 527.2 320 526C324.8 524.8 331.3 519.7 334 522C336.7 524.3 337 535.7 336 540C335 544.3 330.3 545.3 328 548C325.7 550.7 323.7 552.3 322 556C320.3 559.7 321.7 566 318 570C314.3 574 312.7 577 300 580C287.3 583 267 587.7 242 588C217 588.3 175.3 583.8 150 582C124.7 580.2 105.3 580.3 90 577C74.7 573.7 62.7 566.6 58 562C53.3 557.4 59.2 551.3 62 549.5Z" fill="#e3d3c6"/>
<path d="M185.6 556l2.1 -4.4M202.3 558.1l-0.1 -5M236.5 570.9l-0.3 -4.2M84.9 571.3l0.9 -3M334.3 582.4l1.5 -5.3M103.8 520.5l0.6 -3.2M113.6 535.9l-0.6 -4.8M182.8 574.6l1 -5.5M199.6 562.4l0.6 -4.1M338.2 584.4l2.2 -5.4M148.2 534.3l0.1 -3.3M273.7 545.7l1.7 -4.2M328.5 574.1l-0.5 -3.8M313.8 550.1l2.1 -4.1M79.8 560.2l1.4 -3.8M83 542l2.7 -5.4M93.2 535.4l-0.2 -3.2M282.7 531.7l1 -4.7M113.6 567.6l-0.3 -5.6M92.6 547l0 -4.1M331.7 572.7l0.3 -6.5M117.9 545.8l2.2 -5.1M88.1 583.3l0 -4M276.3 540.7l0.2 -3.3M85.2 558l0.1 -5.4M163 549.2l2.2 -4.4M220.9 575.3l-0.1 -3.6M314.3 572.2l0.1 -3.8M267.1 581.6l-0.1 -6.8M306.8 558.3l0.4 -3.4M70.8 582.5l0.1 -5.8M131.5 572.7l1 -4.1M109.3 566.1l-0.4 -3.9M216.1 574.6l1 -4M317.1 533.1l-0.5 -4M184.9 524.1l-0.1 -4.5M219.9 529.7l0.6 -6.5M333.8 562.6l1.6 -5.1M99.7 523.5l-0.9 -6.6M256.6 582.4l-0.7 -5.5M194.8 568.2l0.4 -7M80 556.1l2.1 -6.3M265.2 566.2l2.3 -6.2M157.2 564.8l2.7 -5.9M175.8 571l2.1 -4.9M234.4 545.1l1.2 -5.3M80.9 561.8l3 -5.8M263.1 545.4l1.7 -5M183.6 574.6l-0.5 -6M68 558.4l0.6 -3.9M254.7 553.1l1.6 -6.5M131.5 521.6l0.3 -5.7M115.5 531.4l2.3 -5.1M183.6 577.9l0.4 -5.7M114.4 548.7l2.4 -6.2M306 544.7l1 -4.2M96.9 552.7l2.4 -5.9M259.1 580.6l0.1 -3.7M186.2 537.9l0 -4.7M235 552.8l0.4 -6.3M335.1 548.5l-0.3 -3.1M303.6 523.2l1.6 -5M146.8 570.4l-0.5 -3.5M186.6 521.4l1.5 -3.7M98.8 523.3l1.2 -4.6M235.2 563.1l2.5 -6.4M251.4 532.6l0.6 -3.7M62.4 550l1.1 -3.5M135.5 542.6l1.5 -4.9M231.7 569.5l0.7 -6.1M312.5 526.2l2.5 -5.3M95.5 550.2l1.7 -6.4M164.3 557.2l2.5 -5.7M323.9 549.5l1 -3.7M261.4 573.2l1.5 -5.7M118.1 578.7l3.2 -6.1M210.1 571.9l0.4 -6.6M299.8 542.7l-0.4 -4.7M213.8 568.7l0.5 -3.1M285.9 523.8l1.3 -3.5M153.9 570.2l-0.2 -3.6M203.5 567l2.2 -5.3M324.1 551l1.5 -3M121.9 554.7l0.3 -5.9M237.9 553.9l2 -4.8M146 545.4l2.5 -6.1M117.2 574.7l2.3 -4.5M219.9 533.3l1 -4.9M228.3 522l2.3 -4.5M171.6 571.7l1.1 -4.9M253 524.5l0.9 -4.6M327.9 579.5l0.1 -4.9M94.3 548.8l2.4 -6.1M193.5 541l-0.1 -5.5M318.5 527.7l1.1 -2.9M113.7 534.6l1.2 -4.1M159.7 560.6l-0.4 -5.9M94.3 552.6l0.1 -3.8M208.3 548.3l0.4 -4.6M208.2 531l-0.1 -5.5M237.7 554.4l2.1 -5M298.9 535.8l2 -5.9M312.6 541.6l0.4 -6.7M120.4 583.5l1.4 -3.2M127 566.2l0.1 -3.4M292.4 546.6l1.2 -3.3M173 563.7l-0.5 -3.8M250.3 577.9l1.6 -3.1M201.1 569.3l1 -5.7M113 524.1l-0.2 -3.1M214.1 552.7l0.8 -3.5M110.4 534.3l2.6 -6.4M319.9 527.5l-0.7 -6.8M189.2 569.4l0.3 -4.9M203.9 547l0.7 -3M256.4 574.4l-0.1 -4.8M267 545.8l-0.1 -3.7M202.2 521.8l2.5 -5.7M256.7 575.3l1.2 -4.5M226.5 553l2.9 -5.5M131.3 579.2l2 -5.8M286.8 546.9l2.7 -5.9M253.8 569.3l1.5 -4.4M262.2 524.9l0.4 -4.9M62.3 543.4l1.4 -5.3M124.4 580.6l1.2 -4.2M244.3 556.7l0.9 -4.5M339.1 562l1.8 -5.8M333.7 522.3l1.5 -5.8M132.1 545.6l-0.4 -3.8M165.1 527.6l0.1 -6.6M212.8 552.9l2.4 -4.7M338 560.4l1.2 -3.1M227.7 569.9l-0.7 -6.7M104.9 550.7l-0.2 -5M230.1 523.9l2.1 -4.2M207.3 558.3l0.4 -4.1M243.3 556.8l0.2 -5.9M142.9 520.5l0 -3.2M103.5 569.6l0.7 -6.6M268 524.2l3.1 -6M80.3 578.4l0.6 -4.9M331.9 536.9l1.3 -6.6M260.9 550.8l2.9 -5.6M228.4 527.7l1.2 -4.7M116.7 523l0.7 -3.4M183.7 562.7l0.6 -4M222.1 547.3l1.8 -4.8M338.7 580.8l1.3 -3.8M90.9 577.7l1.9 -5.2M159.8 537.9l1.5 -5M225.1 560.3l1.2 -3.6M128.3 583.7l2.7 -5.9M71 524.2l0.1 -4.7M234.2 526.2l0.7 -3.2M83.6 564l1.1 -5.4M164.5 550.8l0 -4.4M268.7 573.4l-0.3 -3.5M285.9 559.7l1.3 -3.6M178 536.6l1.6 -4.2M242.9 583.9l0.3 -5.2M268.6 579.2l0.6 -4.4M87.3 575.7l-0.3 -3.3M217.4 551l1.2 -4M277.2 525.7l0 -5.6M82 540.2l1.8 -5.5M139 530.1l0.5 -5.9M161.8 528l1.6 -5M316.2 580.3l2 -4.3M284.7 539.8l0.3 -4.6M321.7 577.5l0.1 -4.4M162.1 543.5l0.5 -4.5M113.7 556.5l1.8 -4.8M294.3 557l-0.2 -6M307 538.5l-0.6 -5M211.1 556.8l2.5 -5M284.6 525.1l1.2 -6M82.5 526.4l2.1 -6.3M83.9 561.6l-0.3 -6M241.7 536.7l0 -6.1M205.8 569.1l0.5 -4.3M330.7 563.6l0.9 -5.1M260.9 565.4l2 -4.2M290.1 563.5l2.4 -5.7M292.2 577.4l2.5 -5M205.8 565.6l1.7 -4.4M176.6 530.7l2.2 -6.6M165.2 531.1l-0.1 -4.7M142 582.2l-0.4 -4.2M91.5 561.2l1.3 -3.5M76.7 550.6l1.5 -6.5M70.2 526.9l-0.1 -3.9M125.5 565.8l0.9 -3.8M111.9 539l-0.2 -6M146.4 555.4l1.8 -4.6M132 576.8l1.8 -4M212.9 581.2l0.6 -3.8M73.1 580.8l1.6 -4.2M207.6 554.5l0.2 -7M244.4 535.6l-0.6 -4.8M163.2 571.6l1.6 -5.2M103.9 530.1l0.3 -4M302.5 554.4l1.8 -6.7M134.8 555.3l-0.3 -6.1M59.2 573.5l2.4 -5.8M82.6 536.9l1 -3.2M193.2 550.4l2.4 -4.8M299.2 539.6l1.6 -4.4M316 525.6l1.4 -3.6M212.3 554.8l-0.3 -6.3M147.4 540l-0.4 -4.2M190.6 566.6l0.5 -5.7M89.1 546.6l1 -6.8M292.6 562.1l-0.6 -4.5M258.3 535.6l1 -4.7M62.3 583.3l1.4 -3.6M232.2 539.2l0.5 -5.1M143.2 542.4l0.6 -5.6M131.1 532.8l1.4 -4.1M323.9 556.1l1.3 -4.1M291.6 525.6l-0.2 -3.4M249.8 565.6l-0.1 -4.6M294.5 557.9l-0.3 -3.9M103.8 527.6l0.4 -3.3M317.3 548.1l1 -5.5M274.5 572.7l0.4 -4.3M175.1 521.9l0.6 -5.8M334.2 571.2l1.5 -5.2M65 542l0.4 -5.6M89.2 545.2l1.1 -6.1M291.2 560.2l-0.2 -6.1M312.6 555.6l0.4 -5M98.5 565.9l2.3 -4.5M260.4 574.9l-0.1 -6.8M235.8 532.6l-0.3 -4M221.2 566l0.5 -6.7M161.3 551.1l-0.4 -6.9M97.4 578.4l1.1 -5.1M215.4 538.1l2.9 -6.3M289.1 559.6l-0.4 -6.3M140.8 578.1l0.1 -5.3M292.3 531.5l0.7 -3.2M67.4 532.5l3.1 -6M243.5 540.5l1.7 -5.7M166.3 557.3l1.1 -2.9M116 550.2l-0.2 -4.5M219.1 531.1l0.8 -4M218.6 540.8l0.8 -3M246.7 529.7l2.4 -4.8M190.9 547.1l1.4 -5.6M271.7 569.6l1.2 -6.9M294.4 575.1l0.6 -4.7M218 578.4l1 -5M180.9 577.5l0.2 -3.2M262.3 578.2l1.7 -5.1M270.1 539.1l0.8 -3.2M94.4 548.9l0.8 -4.5M74.2 564.4l0.8 -3.9M145.7 545l0 -3.3M314.3 583l1.8 -6.2M178 572.5l0 -6M218.9 578.9l-0.5 -6.2M94 553.8l1.3 -2.7M128.2 538.8l0.2 -3.2M310.4 572.4l0.5 -4.4M224.3 524.2l-0.8 -6.5M144.7 553l3 -6.2M192.2 534.6l0.3 -6.7M310.3 532.6l1.7 -4.1M190.9 532.2l2.8 -6.4M116.6 561.7l-0.1 -6.5M73.3 526.8l1.3 -4M311.5 575.3l1.1 -3.4M254.6 579.7l0.5 -3.3M121.9 539.5l1.1 -3.6M109.8 536l1.7 -5.9M163.2 562.8l2.2 -4.9M122.9 539.8l2.4 -5.1M137.8 562.4l-0.6 -6.9M183 553.4l0.6 -3.1M227.9 539.3l0.1 -6.2M83.8 538.1l1.3 -3.8M138.2 556.4l-0.1 -6.6M336.1 523.1l0.9 -5.9M167.4 579.3l0.6 -3.7M215.4 562.1l0.5 -5.6M278.7 554.2l1.1 -6.3M250.8 553l1.6 -3.3M277.8 530.5l0.9 -3.8M182.3 570.4l2.1 -5.8M126.1 552l0 -5.3M199 523.1l1.4 -5.7M220.4 575.7l-0.1 -3.6M64.7 552.1l0.6 -4.7M133.9 572.4l-0.6 -6.6M218.6 554.6l1.4 -3.7M101.2 540l-0.5 -4.2M233.9 554.3l0.1 -5.4M84.8 572.5l-0.1 -4M103.6 565.1l2.3 -5.7M76.9 546.2l0.3 -3.8M331.2 523.7l1 -6M335.7 530.2l0.9 -5.9M70.3 535l1.5 -3.3M169.8 538.7l0.4 -3.3M68.6 584.6l2 -5.6M124 536.1l0.8 -3.9M189 579.8l0.4 -4.3M335 559.4l-0.5 -4.6M241.7 524.6l0.4 -5.8M301.1 558l2 -4.4M169.7 575l0.6 -6.1M120.4 542.8l-0.1 -5.2M105.9 533.5l0 -4.9M145.1 549.1l2.7 -5.1M301.4 532.7l0.3 -3.3M253.5 542.8l0.1 -3.1M110.6 538.1l0.7 -6.7M260.1 537l0.3 -3.6M321.3 543.8l2 -5.6M313.8 521.6l0.3 -4.5M83.1 577.5l0.4 -6.1M205.2 523.5l0.4 -3.9M71.1 529.2l0.7 -3M147.1 546.9l0.7 -3.5M257 537.4l1.8 -5.4M101.1 534l0.2 -5.8M172.7 544.5l1.5 -3.6M141.8 541.7l0 -3.2M66.2 561.4l1.3 -6.1M332.2 540.3l1.9 -6.4M119.6 565.4l1.9 -6.6M302.7 534.6l0.9 -3.2M180 545.4l-0.5 -4.5M151.8 551.6l0.1 -3.6M172.8 551.2l-0.2 -5.7M127 526.3l0.4 -4.7M101.4 557.8l1.5 -5M255.8 521.7l0.5 -4.4M77.9 546.4l-0.5 -5M223.9 550l0.3 -4M65.5 542.6l2.1 -4.8M133.4 563.2l-0.1 -4.9M232 581.7l0.5 -5.3M323.2 570l1.4 -5.3M175 547.8l0.2 -6.3M305.7 543.9l1.3 -2.9M97.9 552.7l0.2 -4.4M333.6 529.5l-0.1 -3.9M250.8 535.6l-0.7 -5.1M169.8 536.1l1 -5.5M212.8 561.1l1.3 -6.2M331 542.6l0.5 -6.5M146.9 566.6l1.7 -5.5M330 573.5l-0.2 -5.5M197.2 556.1l0.4 -4.1M269.7 554.2l0 -4M150.7 531.1l0.6 -3.4M77.9 525.3l-0.4 -5.8M90.7 549.2l1.7 -4.6M104.9 574.9l1.3 -3M130.3 552.6l1.6 -4.3M259.8 536.2l1.3 -4.1M152.3 569.5l2.4 -5.8M218.1 547.5l1.6 -5.2M292.8 571.5l-0.3 -4.5M247.5 534.3l-0.1 -3.1M223.1 579.8l1.6 -3.2M251.9 547.1l1.2 -4.4M321.7 584.2l-0.6 -5.8M93 523.7l0.2 -5.9M338.1 527.2l0.2 -3.1M211.7 551l0.4 -4.2M284 574l0.2 -4.6M231.9 569l2.1 -4M253.7 554.6l1.3 -3.4M108.2 526.7l1.7 -3.6M196.6 527.2l0.2 -3.1M217.9 529.2l1 -4M123.5 550.9l0.4 -4M73.5 524.1l1.7 -3.9M81.4 533.1l1.1 -6.9M116.2 575.8l0.8 -4.6M286.2 545.9l-0.5 -5.2M243.8 561.2l0.2 -6.8M301.6 584.8l0.9 -6.3M263.2 531.1l-0.5 -3.6M93 525.8l0.5 -6M147.1 552.8l-0.5 -3.8M328 521.8l1.2 -6.1M281.5 568.2l0.7 -6.2M291 568.6l1.6 -3M325.5 545.7l1.2 -3.8M314.3 521.4l0.9 -3.8M167.9 544.6l1.7 -6M161.9 560.9l0.3 -4.1M313.6 540.7l-0.3 -4.3M266.8 534l1.7 -4.9M250.6 531.1l-0.3 -3.6M158.4 548.1l-0.7 -5M172.3 541.9l1.3 -6.7M117.1 577.4l0.4 -6M89.9 584.6l0.9 -6.8M120.9 545.9l1.1 -3.5M135.6 563.3l1.9 -3.9M110.5 542.5l1.7 -3.2M237.2 544.1l1 -3.7M231.5 577.3l2.1 -5.1M201.6 557.5l-0.4 -6.3M252.5 549.3l1.3 -4.5M167.1 535.3l1.2 -5.1M203.7 522.4l1.2 -4.6M225.4 557.7l1.6 -3.3M190.6 583.6l1.4 -4M265.9 584.5l0.7 -6.4M95.1 583.3l0.7 -3.9M293.9 562.4l2.7 -5.7M282.6 552.2l1.5 -2.9M303.6 566.7l0.1 -6.2M186.4 554.1l1.5 -3.5M138.5 561.8l-0.5 -5.2M280.4 552.5l0.1 -6.2M298.7 570.6l1.4 -6.5M282.9 529.4l0.3 -3.4M69.1 543l2.5 -5.8M92.5 532.8l0.7 -6.4M233.1 579.2l-0.7 -6.9M116.7 561l2.4 -5.4M115 562.3l0.4 -3M154.6 540.2l1 -4M228.9 564.2l-0.1 -3.5M254.4 549.6l-0.2 -3.5M323.3 558.9l0.3 -3.8M337.8 564.4l1.4 -4.2M147 546.9l-0.3 -5.5M178.6 572.9l0.6 -4.8M201.6 581.2l0.5 -5.8M125.7 558.3l0.3 -6.5M139.5 575l1.4 -4.6M320.6 545.4l1.7 -5.1M185.3 524.2l0.5 -4.1M183.3 582l0.3 -5.8M248 535.4l0.4 -3.5M310.4 536.3l0.5 -4.3M289.1 574.9l1.2 -5M88 577.6l-0.4 -4.4M164.2 566.4l1.2 -4.2M311.8 581.5l-0.7 -5.5M191 543.3l0.6 -4.2M246.3 559.8l3.1 -6.2M336.9 545.9l2.1 -5.2M256.5 584.3l-0.5 -4.8M172.4 563.5l0 -7M118.8 544l-0.2 -4.6M267.8 526.1l-0.2 -5.6M234.4 568.6l0.1 -6.2M264.8 570.1l-0.3 -4.9M63 576l2.9 -5.9M66.3 543l1 -5M91 571l0.3 -5M95 556l-0.2 -3.3M202.7 538.7l1.4 -3.7M175.9 523.9l0 -4.8M215.6 549l1.3 -3.2M296.9 530.2l2.3 -4.5M172.5 560.3l2.7 -6.3M175.9 521.8l-0.3 -6.3M265.7 566.2l-0.2 -5.1M67.8 528.5l0.3 -6.9M240.3 574.6l-0.5 -4.6M82.2 538l-0.5 -6.7M151.2 552.4l1.8 -6.3M324.4 557.6l1.2 -6.5M169.8 539.1l1.3 -3.8M162.6 547.7l0.7 -4.4M180.9 550l-0.7 -6.3M76.8 554l0.9 -4.5M122.1 526.5l0.4 -4.2M194.7 535.1l1.6 -4.7M61.8 545.4l1.4 -2.7M225.9 582.2l0.5 -5.4M162.6 539.9l1.3 -5.2M147.7 552.8l1.1 -5.9M74.8 526l0.1 -4.1M281.9 547.4l1.8 -4.2M140.3 565l-0.6 -6.9M292.6 542.1l0.4 -6.3M281 562.1l-0.6 -6M72.7 561.3l1.4 -6.6M237.5 522.1l2.6 -5.4M221.6 520.6l1.5 -4.4M249.6 582.5l1.4 -3M278.1 548.3l1.5 -4.3M185.5 548.1l-0.3 -4.3M265.9 525.7l-0.4 -6.3M246.7 554.8l-0.2 -3.5M146.1 582.3l1.4 -6.5M118.5 547.7l1.2 -6.2M94.3 575.5l0.5 -3.1M180 545.4l1.9 -6.4M197.9 565.2l0.6 -6.1M89.6 568.2l-0.2 -5.3M116.7 542.4l-0.2 -4.4M225.3 553.9l0.6 -5.3M295.3 543.3l1.1 -4.8M334 540.9l1.2 -3.8M132.7 566.7l0.9 -3.9M77.7 573.7l0.6 -5.8M180.4 560.9l1.5 -6.7M314.4 549.1l0.6 -3.9M270.7 527.7l0.3 -6.4M69.3 565.2l1.1 -5.1M151.9 530.4l2.7 -5.4M284.9 526.1l1.3 -3.6M115.4 553.9l0.8 -3.4M272.8 558.3l2.8 -6.1M251.7 543.9l2.6 -5.3M140.8 574.8l1.3 -3.9M129.4 521.3l0.8 -3.9M142.2 536.6l-0.3 -4.9M136.2 538.8l0.2 -5M303.4 531.2l2.5 -5.9M229.8 555.2l1.6 -4.9M244.1 578.7l1.4 -3.8M74.9 581l0.5 -6.1M125.1 549.9l0.6 -5.9M323.7 552.5l0.9 -4.3M125.3 582.2l-0.5 -6.7M243.3 524.1l1.4 -3.1M217.3 527.5l2 -3.8M303.7 523.5l0.9 -3.1M67 557.1l2.6 -5.1M299.2 569.9l0.6 -3.3M207.1 532l0.8 -4.3M199 532.9l1.4 -4.5M195.6 525.6l0.9 -5.2M332.4 556l-0.2 -4.2M152.5 566l3 -6.2M324.7 580.3l2.6 -6.2M65 552.1l1.3 -5.6M230.8 558.7l1.4 -3M205.6 581.1l-0.4 -3.4M303.5 580.8l-0.4 -3.1M291.8 564.7l1 -5.2M272.3 571.3l-0.5 -3.2M281.5 582.6l1.7 -4.3M154.3 543.2l-0.8 -6M133 557.6l0.8 -4.3M248.9 550.4l0 -6.5M109.1 530.1l0.1 -4.9M279.4 542.1l0.1 -5.6M132.8 554.7l0.1 -6.5M111.6 535l0.2 -4.3M262.5 563.6l1.8 -4.8M82 568.8l0.1 -3.9M175.8 583.6l0.4 -4.4M314.9 583.2l0.4 -3.5M280.9 571.1l0.4 -6.1M165.6 539.3l1.4 -5.8M193.6 572.9l-0.7 -5M165.8 523.8l1.5 -3.2M116.1 577.2l3 -6M155.9 580.5l-0.3 -5.9M324.9 533.2l-0.3 -5.7M306 566.7l2.1 -4.3M164.1 529.1l0.2 -6.8M79.9 531.4l0.3 -3.2M146.1 532.3l-0.3 -5.1M210.4 556.7l1.7 -4.8M325.2 524.9l0 -3.3M145.6 569l2.1 -4.5M104.4 541.2l0.9 -4.1M281.6 582.9l0.8 -5.4M296.9 551.2l-0.1 -6.8M333 521.7l1.5 -4.3M74.6 531.4l-0.2 -5.9M119.3 522.4l0 -6.2M199.5 561.6l0.6 -3.7M64.5 539.5l-0.5 -4M232.8 544.4l0.9 -5.4M147.7 543.3l2.2 -4.9M176.4 554.7l0.6 -4.3M314.4 535.8l2.8 -5.8M306.3 531.8l1.2 -6.8M140.2 530.8l1.2 -3.7M222.5 529.9l1.8 -3.7M86.9 564.6l0.4 -5.2M198.8 579.3l0.8 -4.4M60.4 552.4l0.2 -5.3M237.1 550.1l-0.4 -5M194 560.9l1.9 -3.7M183.3 525.3l1.4 -3.7M292.1 572.4l0.1 -6.6M200.4 548.6l1.4 -6.6M197 552l0.3 -6.4M200.9 541.8l-0.1 -3.9M292 572.4l3.1 -5.9M250.9 572l1.9 -5.9M283.6 531.2l1.5 -3.9M128.7 579.4l-0.6 -5M155.3 571.9l1.6 -6.4M321.4 562.1l-0.6 -5.6M89.8 582.8l1.7 -3.9M110.9 565.7l2.3 -6.6M233.9 527.6l1 -3.1M301.8 570.2l2.3 -6.1M218.7 580.8l1.3 -4.8M167.9 542.4l-0.5 -3.6M282 535.6l1.6 -5.9M254.3 553.1l0.2 -4.1M111.5 562.7l1.9 -6.5M151.7 579.2l1.7 -3.8M325.2 560.4l2.7 -5.4M152.9 538.3l0.9 -4.9M69.4 575.6l1 -4.8M268.5 536.6l-0.1 -5.3M127.7 540.6l-0.3 -3.2M158.3 554.2l2.5 -5M176 546.5l0 -4.9M328.2 528.7l0.8 -5.7M272.6 556.8l1.8 -6.5M312 537.5l1.4 -6.8M207.2 531.6l1.1 -3M102 556.2l0.2 -5.9M262.6 541.1l1.9 -5.3M257.4 548.9l0.5 -3.4M192.3 580.6l1.3 -2.9M79.2 537.5l1.4 -4.5M95.1 548.2l1.3 -5.8M172.1 562.2l1.6 -5.2M73.1 565.1l-0.2 -3.2M192.8 521.3l-0.4 -4.5M189.8 527.6l2.8 -5.7M196.1 559.1l0.4 -6.9M93.6 540.7l0 -6.5M202.1 547.5l0.7 -6.5M131.4 570.9l1.4 -4.6M162.1 548.1l0.6 -4.2M234.5 547.4l0.3 -6.1M186.5 550.5l1.9 -4.4M163.9 578.2l2.8 -5.5M171.7 562.9l1.3 -4M262 581.5l1.5 -5.5M181.8 562.9l0 -6.1M210.7 583.6l0.4 -5.8M64 546.5l1.4 -3.8M231.4 535.6l0.8 -6.9M115.3 579.1l-0.5 -5.3M289.7 574.3l0.6 -5.3M258.5 569.3l1.7 -5M129.9 565.7l1.1 -5.1M335.6 528.8l1.5 -4M263.4 581.5l0.2 -5.3M208 552.4l-0.2 -5.5M310 563.6l0.3 -6.2M177 529.6l1.2 -4.7M207.6 584.8l1.5 -6.7M158.9 568.7l-0.4 -4.2M252.9 564.3l1.7 -4.2M136.3 542.5l0.6 -3M165 562.2l-0.2 -4.2M304.3 579.6l0.1 -3.7M91.9 526.3l2.1 -5.6M133.6 550.8l0.9 -3M289.3 575.9l0 -5.8M255 541.3l1.6 -3.5M192.3 541.2l0.9 -6.2M218.7 558.7l1.8 -3.5M122.5 561.1l-0.3 -6.8M155.1 549.3l0.8 -6.3M316.4 563.5l-0.1 -4.4M256.5 534.8l2.6 -5.9M123.4 544.3l0 -5.9M73.5 565.7l-0.6 -6.3M212.2 556.9l-0.3 -3.2M158.1 584.2l1.5 -6.3M77.9 527.4l-0.7 -5.7M108.6 538.2l1.6 -5.6M150.2 550.5l0.2 -5.2M159.6 543.1l0.1 -4.2M132.9 521.7l0.3 -5.4M134.3 527.5l1.9 -4.5M202.1 540.7l2.4 -5.5M233.6 562.6l1.5 -4.8M175.3 545.4l0.9 -4.8M207 555.2l2.3 -6.2M122.6 521l0.2 -3.1M282.9 559.6l0.1 -3.8M302.4 574.3l1.6 -5.5M268.2 549.7l0.6 -5.2M305.2 584.3l2.7 -5.7M79.7 536.1l2.3 -4.6M203.2 540.2l2 -4.7M336.6 524.2l1.4 -2.7M101.1 544.6l0.9 -3.3M217.1 581.1l0.8 -6M225.8 557.7l-0.1 -4.9M312.1 563.5l0 -4.8M211.6 542.2l1.2 -5.4M64.5 533.9l1 -3.7M80.1 570.2l0.5 -6.8M215.9 526.4l1 -3.9M287.5 565.9l1.1 -3M69.7 571l-0.2 -3.8M67.8 531.8l1.1 -6.7M149.3 536.3l1.4 -3.5M237.1 558.8l1.4 -2.9M216.9 544.4l1.5 -3.7M259.6 533.2l1.2 -6.8M126 538.4l2.4 -5.2M78.4 532l0 -4.2M295.2 565.4l2.6 -5M235 544.9l1.5 -4.7M76.2 552l0.5 -5.1M72.6 521.8l2.1 -4M151.6 530.7l1.5 -6.5M110 553l1.1 -6M218.3 536.2l-0.1 -5.9M82.1 575.2l-0.4 -3.7M190.2 574.9l1.5 -5.8M273.4 567.4l-0.7 -6.3M101.5 529.9l-0.4 -3.1M305.7 544l-0.3 -3.2M296.3 557.9l1.3 -2.9M91.6 538.1l-0.1 -3.4M116.2 560.8l-0.1 -3.7M210.1 544.7l-0.2 -5.3M202 544.4l0.5 -3.1M232.1 531.9l0.2 -3M308.3 558.2l0.6 -5.1M322.9 529.4l0.6 -5.8M163.5 564.7l1.3 -2.9M138.7 539.6l2 -5.8M255.9 579.5l-0.1 -4.6M299.1 570.4l-0.5 -6.9M267.1 576.1l0.5 -5.4M327.7 578.7l1.5 -6.4M338.8 575l1.8 -6.6M99.9 545.6l0.8 -3.4M278.1 524l1 -4M150.4 559.2l-0.1 -4.8M300 583.4l0.1 -4.5M253.5 531.9l1.5 -3.5M216.1 541.2l-0.4 -3M60.4 542.5l0.2 -7M237.9 524l1.2 -3.7M193.5 567.4l2.6 -6.2M177.6 540.4l0.5 -4.2M267.1 549.4l1 -3.5M279.2 582.6l-0.1 -5.5M105.2 522.1l0.4 -3.7M263.6 557.9l1.9 -6.6M76.6 526.7l-0.6 -4.8M290.2 564.9l1.3 -6.3M163.8 526.7l0.8 -3M124.3 521.5l-0.1 -3.3M208.1 529.3l1.5 -6.1M155.6 528.5l1.6 -5.7M306.8 556.6l1.4 -6.3M249.5 583.4l0.2 -6.1M237.5 550.4l-0.6 -4.9M133.3 559l0.9 -5M75.8 529.2l1.4 -5.6M337.2 571.1l0.2 -4.8M201.2 572.8l0.7 -6.6M195.2 545.7l0.7 -4.4M339.7 522.6l0.4 -3.3M249.9 530l-0.2 -4.7M228.3 568.9l0.6 -4.1M163 576.4l0 -3M308.1 550.7l-0.2 -3.5M309.6 568.8l-0.6 -5.7M119.5 548.1l0.8 -3.1M322.1 542.5l-0.3 -6.1M89.9 522.7l1.3 -4.7M312.2 570.2l0 -3.2M228.8 551.4l0.3 -6.7M118.7 562.5l-0.6 -6.7M325.5 560.5l0.4 -5.9M313.3 571.4l-0.6 -5M97.8 555.9l2.9 -5.8M129.6 555.2l0.2 -3.7M268.1 568.9l0.3 -4.7M254.7 566.3l0.5 -3.4M85.9 531.2l1.8 -4.6M240.3 543.2l0.3 -3.7M333.1 559.7l-0.3 -5.8M226.5 559.8l1.8 -5.1M305.1 582.8l0.6 -5.6M164.6 547.1l0.5 -5.6M157.5 543.4l2.4 -5.7M249.1 574.8l0.6 -5.5M130.6 541.3l-0.5 -6.2M317.8 539.1l0.3 -3.5M99.1 560.4l1.4 -3M131.3 569.8l0 -6.5M158.8 550.4l-0.1 -4.2M178.4 537.3l1 -3M238.7 571.2l0.2 -3.8M92.6 525.5l1.9 -5.1M63.7 549.1l1 -4.2M69.5 548.4l0.6 -6.9M159.7 579.5l2.1 -4.9M95.5 572.3l-0.4 -5.2M87 525.7l0.4 -3.6M336.3 558.1l2.8 -6.2M271.7 562.3l1 -6M247 530.4l0.9 -4.6M203.6 566.2l1.5 -5.1M281 572.6l-0.3 -3.6M72.3 530.2l1.9 -3.8M182.5 549.8l0.9 -4M276.8 542.1l2.4 -5.7M60.6 556.3l-0.5 -6.5M78.5 537.6l1.8 -5.1M246.4 546.3l0.7 -3.7M189 536.1l1 -3.3M98 533.3l1 -5.2M60 583.3l1.7 -4.2M103.6 572.5l1.7 -3.3M270.9 572.1l1.7 -3.5M93.7 531.8l0 -6.6M314.9 550.5l-0.3 -4.4M126.6 562.4l1.9 -5.8M182 549.5l0.7 -4.4M186.8 563.9l1.3 -4.1M219 529.5l-0.5 -4.5M160.8 522.4l-0.4 -4.7M324.1 573.7l-0.5 -4.2M163.4 540.6l-0.3 -5.4M295 544.1l-0.1 -3.4M64.2 569.9l0 -5.9M281.5 525.5l-0.1 -4.3M275.2 567.6l0.2 -4.8M158.7 550.1l1.4 -3.8M286.1 580.2l1.6 -6.6M321.8 530.6l1.8 -3.4M285.2 528.1l0.2 -4.8M295 564.9l-0.1 -6.6M302.5 552.7l-0.4 -4.1M140.7 547.2l2.4 -4.8M289.4 525.5l0.1 -5.9M155.5 534.2l-0.3 -3.2M175.2 555.6l0.6 -5.2M140.8 521.2l1.2 -4.2M197.6 543.8l0.1 -3.2M143.1 538.6l-0.2 -3.1M193.7 521.3l1.8 -4.1M184.5 553.3l-0.4 -3.4M279.5 555.8l0.7 -4.3M269.2 553.2l2.2 -5.9M309.6 566.8l1.4 -4.7M208.8 558.1l1.2 -6.2M299.4 523.9l1.8 -5.2M227.8 578.6l-0.5 -4.9M165.2 581.3l-0.2 -5.2M99.9 569.2l1 -5.9M146.2 576.5l-0.5 -3.9M264.6 576.2l1.4 -3.9M82.2 564.9l1 -3.1M322 554.2l-0.6 -4.9M153.3 527.8l2.7 -6.2M94.7 549.4l0.2 -5.7M90.5 541.8l0.6 -4.9M180.4 559.2l2.9 -6.1M314.1 573l0 -4M188.2 561.3l1.1 -4.3M337.9 539.7l-0.4 -3.3M118 566.2l1.2 -2.9M125.2 536.6l2.3 -6.2M132.2 527.6l3.1 -6.1M259.7 551.1l2 -5.7M202.1 538.1l1.1 -5.5M151 562.4l-0.3 -6.9M117.7 535.5l3 -6.1M317.9 574.7l2.4 -5.8M217.7 525.8l2 -6M294.9 523.7l-0.6 -5.9M195.5 577.3l2.2 -4.2M248.5 562.7l1.3 -4.3M237.8 525l2.4 -5.4M284.8 550l-0.1 -4.8M250.7 554.6l-0.2 -3M171.4 535.6l0 -3.9M175.2 565.1l2.4 -5.2M65.1 576.4l1.4 -5.8M231.7 542.3l0.2 -3.3M245 524.6l1.9 -6.4M245.8 560l2.5 -6.4M287.3 582.9l0.5 -3M230.9 561.4l2.1 -5M160.7 520.9l2.1 -5.1M334.7 558.8l2.3 -5.6M336.5 549.7l1.9 -4.2M62.9 542.3l0.6 -6.9M170.1 537.2l1 -3.2M145.7 546l-0.3 -5.4M178.2 572.8l0.5 -6.9M114.8 553.5l0 -3.1M144.3 577.8l0.2 -4.9M206.4 536.6l0.6 -3.2M156.7 539l2.2 -5.7M255 558.8l2.3 -5.5M74.4 529.4l2.1 -6M337.1 570.2l-0.2 -5.3M235 560.1l-0.4 -6.9M201.9 537.2l2.1 -4M79.5 562.8l0.1 -3.9M144.5 559.7l0.3 -5.6M312.1 584.5l2.7 -6.1M131.1 573.4l-0.4 -5.3M80.4 525.9l1.5 -3.1M261.2 554.8l-0.9 -6.1M76.1 577.1l1.8 -4.6M184.5 521.3l0.9 -3M206.8 578.9l1 -3.3M261.7 565.9l0.4 -6.1M221.7 546.5l0.8 -4M140.2 577.9l0.5 -6.1M163.2 533.6l-0.9 -6.8M270.1 582.4l0.7 -3.2M105.1 523.8l1.3 -5.3M327.5 538.9l0 -3.9M100.8 522.1l0.8 -4.6M162.9 582l0.4 -6.3M209.4 527.3l-0.7 -5.4M304.2 523.1l1.2 -3.8M251.8 573.2l1.2 -3.8M102.3 582.9l2.8 -6.1M211.2 524.6l0.6 -6.6M79.1 540.1l-0.7 -6.5M158.9 525.2l0.3 -3.8M180.9 559.1l0.9 -3.3M209.2 524.7l0.9 -6.2M133.5 572.9l0.1 -4.6M281.4 520.7l1.1 -5M259.6 580.5l1.1 -3.7M115.6 551.4l0.2 -5.2M84.9 564l0.4 -3.2M92.5 580.9l2.5 -6M169.2 584l-0.2 -5.9M324 533.1l-0.5 -3.5M82.8 571.8l1.2 -4.8M92.2 560.9l-0.2 -3.5M225.2 562.1l2.2 -5.9M98.5 539.9l-0.2 -5M67.1 576.5l1.8 -6M195.6 579.3l2.4 -5.9M285.5 533.4l0.2 -3.2M273.1 550.1l1.9 -3.7M179.4 576.1l2.7 -5.4M307 579.8l0.2 -5.5M76.7 563.6l2.2 -4.5M101.1 556.8l-0.5 -4.8M81.3 547.5l2.2 -5.5M298.8 548.9l0.4 -3.2M280.7 556.2l0.4 -3.6M188.5 523.7l-0.2 -3.3M178 529.3l2 -5.1M302.8 555.5l-0.2 -4.1M294.4 558.1l1.5 -5.3M73 533.9l0.8 -6.3M324.1 557.4l0.1 -3.2M215.6 545.9l1.6 -3.5M117.7 522.1l-0.8 -6.2M304.3 530.5l-0.7 -5.3M127.8 560l2.5 -5.4M138.3 559.8l0.3 -6M131.4 576.8l1.9 -6.3M156.3 581l0.9 -3.9M241.2 539.4l-0.2 -3.2M231.2 536.5l-0.5 -6.1M99.7 568.5l0.1 -4.5M319.8 574.2l2.6 -6.4M228.4 580.4l1.3 -5.2M150.2 544.2l0.9 -3.9M239.2 575.2l1.2 -3.7M67.3 544.6l0.8 -6.3M212.5 553.7l1.2 -5.1M249.5 555.6l0.8 -3.9M93.2 549.2l2.8 -6.2M141.7 557.1l0.9 -4.7M110.1 570.5l-0.3 -3.9M138.1 532.7l-0.1 -3.3M205.9 531.6l1.4 -5.2M234.4 550.8l1 -4.1M189.9 565l0 -5.9M223.3 582.9l1.3 -5M274.9 538.8l0.4 -4.7M265.8 567.4l-0.2 -6.8M333.7 552.1l2.6 -4.9M168 526.2l-0.7 -5.3M260.4 559.6l1.6 -4.5M267.1 559.2l1.3 -5M247 556.7l-0.5 -5.7M255.9 547.6l2.2 -4.4M106.4 552.6l0.3 -3.6M308.2 531.1l1.1 -3.5M205 585l-0.5 -6.4M60.7 582.7l2 -4.4M238.6 549.6l-0.2 -4.4M183.7 576.2l-0.4 -5.1M191.1 555.9l1.9 -5.1M150.1 581.1l1 -4M213.6 576.3l-0.6 -5.6M196.6 538.4l-0.2 -3.9M182 547l1 -4M232.5 551.2l2.2 -5.8M126 582.6l0.9 -4.3M130.9 566.5l0.8 -5.7M131.6 576.3l0.2 -6.5M182.2 546.1l1.1 -5M212.1 556.6l2.6 -5.4M86.1 582.8l-0.4 -3.2M289.4 537.5l-0.4 -3.7M198.9 573.8l-0.5 -3.6M63.4 523.9l0.3 -5M330.2 562l2.1 -4.9M314.9 563.3l0.1 -4.5M193.2 527.3l2.1 -4.5M115.3 551.4l1.5 -3.8M224.5 525.7l0 -3.7M201.5 564.9l0 -5.8M223.1 568l2 -3.8M338.7 549l0.7 -3.7M83.9 560.9l-0.2 -3.1M83.6 554.7l-0.1 -4.1M274.9 549.4l-0.3 -5.7M338.2 560.4l0.7 -5.1M256.1 573.5l1.4 -3.7M278.6 527.1l-0.3 -5M111.5 557.3l0.3 -6.8M180.3 572.4l2.1 -4.3M275 551.2l0.4 -3.5M243.8 579l1.2 -4.1M206.7 543.8l0.6 -6.1M61.6 550.6l0.6 -3.5M264.8 536.2l0.5 -4M226.6 547.8l1.3 -4.5M279.6 555.7l-0.4 -5M129.7 539.3l2.2 -4.4M266.4 529.7l0.9 -3.4M122.5 529.4l-0.8 -6.6M330.5 544.5l-0.8 -5.9M245 522.5l1.1 -3.1M124.6 569.7l1.3 -3.7M201.7 571.7l1.2 -5M111.8 524.9l-0.1 -5.1M226.2 550l1.4 -5.1M239.8 546.7l1.9 -4.7M305.4 583.9l2.3 -5.7M253.2 555l0.1 -3.4M244.5 536.4l1.3 -5M230 547.6l0 -4.2M255 576.8l0.3 -4.2M184.6 548.4l1.5 -5.8M273.9 573.1l2.1 -6.5M185.1 548.6l1.1 -4.1M291.7 547.2l1.1 -5M161.9 521.1l0.2 -4.9M324.9 529.9l2.9 -6.3M281.9 539.1l-0.8 -6.5M77.9 539.7l2.5 -5.1M290.7 573.9l-0.1 -5M85.9 545.3l1.1 -6.2M141.1 562.7l-0.2 -4M75.7 558l1.3 -5.7M176.7 580.5l1.6 -5M304.5 532.1l0.2 -5.2M227.4 580.7l0.9 -3.1M324.4 550.9l-0.1 -6M235.5 574.7l0.8 -3.9M191.5 550.5l0.4 -5.3M101.9 535.7l-0.2 -3.1M206.7 568.5l0.7 -6.6M230.2 563.4l0.3 -6.6M157.4 575.5l0.1 -6.8M250.7 531.1l1.1 -3.4M167.8 544.4l0.3 -4.4M105.2 546.7l-0.5 -6.2M158.6 567l0.9 -6.8M305 566.2l2.5 -6.2M320.1 546l0.8 -3.2M161.7 540.5l0.8 -2.9M270.9 525.2l0.6 -4.9M295.9 561.3l-0.3 -5.7M125.4 560.9l0.8 -6.8M185.5 538.8l0.4 -6.8M157 536.3l1.1 -5.6M323.2 526l0.4 -5.9M198.2 563.8l0.9 -3.2M74 531.2l0.2 -3.7M140.6 527.8l-0.6 -5.1M272.4 531.2l-0.5 -5.9M81.9 529l0.7 -4.1M279.4 552.6l0.8 -4.4M67.4 573.7l0.7 -6.3M89.3 547.4l0.7 -3.5M79.3 581l3 -6.3M211.8 567.3l1.2 -4.8" stroke="#9c8676" stroke-width="0.7" fill="none"/>
<path d="M192.4 561.7l0.9 -3.3M63 544.7l0.2 -5.4M252.8 558.9l1 -4.9M100.8 549l-0.2 -5.7M76.7 572.9l-0.5 -5M153.8 545.3l1.2 -2.8M76.7 578.2l0.6 -3.2M336.5 580.7l-0.3 -4.3M97.4 539.7l0.9 -3.4M255.2 524l-0.2 -5.4M171.6 547l1 -4.3M166.8 522.8l1.8 -5.6M333.2 562.5l0.3 -4.1M253.4 563l-0.3 -3.7M160.9 552.8l1.6 -4.2M67.6 572.9l0.6 -4.5M121.9 548l0.6 -5.3M88.8 555.7l-0.1 -5.1M70.1 538.1l0.4 -4.9M74.6 549.3l0 -3.8M192.9 582.3l0.9 -5.8M106.8 578.9l0.3 -3.6M269.8 578.3l-0.5 -3.8M275.8 541.4l0 -3M69.8 560.3l2.8 -5.3M200.8 522.2l0.3 -5.4M292.9 561.2l0 -4.6M193.6 561l0.1 -5.8M310.3 531.2l0.2 -5.6M137.5 580.9l0.9 -5M257.2 533.6l0.1 -3.8M251.5 565.2l-0.3 -5.7M177.3 536.4l0.8 -5.9M215.5 560.6l2.5 -5.3M272.3 547.5l1.3 -5.6M280.8 557.2l0.3 -4.1M266.4 556.6l-0.7 -5.1M311.9 571.7l2.4 -5.2M209.6 570.1l0.3 -3.3M157.8 540.3l2.2 -4.6M211.8 560.1l-0.3 -4.6M256.1 545.3l0.1 -4.2M150.7 563.5l-0.2 -3.3M146.7 564.9l1.6 -4.7M322 543.6l-0.5 -4.4M183.7 531.4l1.1 -3.9M126.1 540.3l1.3 -2.7M160.9 538l-0.1 -4.3M121.3 579.3l0.9 -5M104.8 550.4l1.3 -5.4M128.9 549.9l2.1 -5.1M123 554.4l1.4 -3.9M247.5 562.5l2.1 -4.2M250 542.3l1.2 -3.8M199.9 542.8l0.2 -3.4M123.2 554.4l0.1 -3.1M284 538.4l2.1 -4.3M168.1 575.7l1.6 -3.6M94.3 561.3l1.8 -4.5M279.1 546.2l0.9 -3.7M173.7 544.4l0.4 -4.2M286 530.8l0 -3.8M332.2 554.2l-0.6 -5.5M304.4 573.1l0.4 -5.2M144.5 529.3l2.2 -5.1M119.4 576.3l-0.5 -3.9M63.7 531.5l-0.2 -5.1M143.1 532.1l-0.1 -3.9M301.6 559.4l-0.4 -5M209.7 549.1l0.9 -4.9M283.6 552.5l1.1 -4.3M237.3 545.1l0.5 -4.5M259.2 537.8l1.9 -4M298.4 564.4l2.2 -4.5M178.9 546.5l1.3 -5.1M295.1 527.9l-0.3 -3.3M83.8 523.5l-0.5 -3.7M91 564.7l1.4 -5.7M328.3 567.2l1.4 -2.8M123.5 579.1l0.6 -3.6M271.5 547l0.8 -3.9M127 526.4l1.4 -5.7M335.4 568.8l1.8 -3.7M142.9 579.5l1.2 -4.9M63.1 535.2l0.8 -5.1M291.1 568.5l0.3 -4.1M301.2 583.1l0.6 -3.5M234.7 554.1l0.3 -3.7M168 559.5l-0.3 -4.6M326.6 567.8l0.1 -4.3M88.2 566.9l0.9 -3.4M213 558.2l0.9 -4M145.8 542.5l1.9 -3.5M200.8 549.5l-0.1 -4.2M117.2 540.6l0.4 -4M322.5 539.5l0.3 -5M170.8 552.6l0.9 -3.1M248 527.2l0.1 -5.4M337.1 563.3l-0.1 -4.3M139.1 573.6l0 -3.6M238.2 560.9l1 -4.3M327.6 549.2l1.8 -3.8M189.5 543.5l1.6 -5M126.3 553.8l1.4 -4.3M244.8 559.4l1.2 -3.9M144.7 522l2.2 -4.9M168.6 581.5l1.4 -3.1M294.2 546.8l0.2 -3.8M176 523l-0.4 -3.3M146.2 530.9l-0.3 -5.5M165.6 552.2l1.4 -5.6M99.8 535.2l2.2 -5.3M320.7 553.6l0.3 -3.6M314.4 569.6l1.1 -5.3M132.3 553.7l1.4 -3M231.8 532.4l2.1 -5.1M240.6 548.1l-0.6 -4.4M160.8 546.5l-0.5 -5.7M205.1 556.6l2.2 -5.3M213.1 554.7l1.6 -3.8M311.3 521.7l1.6 -4.3M234.3 583.5l0 -4.2M283.4 568.4l1 -5.2M249.1 575.6l1.1 -3.9M140.4 524.8l-0.2 -3.1M332.8 528.7l0.8 -3.3M330.6 554.8l-0.2 -5.5M300.8 582.7l0 -4.2M244.5 538.6l1.1 -5M269.8 572.6l1.3 -3.6M271.6 547.3l-0.1 -3.1M234.4 543.1l-0.4 -4.5M175.7 541.1l1 -4.5M207.5 583l1.6 -3.5M303.5 539.6l1.4 -2.9M148.4 580.1l1.4 -4.9M116.5 527.2l1.4 -2.9M108.2 547.9l1.8 -4.7M339.2 570.7l0.8 -5.7M147.4 523.8l2.5 -5M244.9 550.6l0 -3.7M78.4 526.8l0.9 -5.6M320.4 553l1.2 -4.2M276.1 565.7l2.6 -4.9M249.9 558l-0.1 -4.4M185.4 530l-0.1 -4.2M109 560.9l0.4 -6M251.3 553.1l0.6 -4.1M115.1 581.9l2.1 -4.5M241.7 528.9l0.7 -3.4M150.9 557.4l-0.1 -3.7M263.8 550.6l1.4 -3.2M84.2 580.5l1.2 -4.9M214.7 529.5l2.1 -4M314.5 529.7l0.2 -4.6M129.3 574.6l0.1 -3.2M104.4 537.9l2.5 -5.1M247.8 548l-0.6 -5.5M94.9 533.6l0.7 -5.5M110.6 523.4l1.3 -2.7M265.5 528.8l0.2 -3.6M182 579.1l1.7 -4.3M84.4 531.9l0.2 -5.4M316.3 522.6l0.4 -5.9M102.2 525.9l0.2 -5.7M133.8 566.6l-0.3 -5M106.4 558.8l1.8 -5.3M181.8 583.9l0.7 -5.8M316 583.8l-0.3 -3.8M254.9 577.3l0.1 -5.3M193.7 519.8l-0.3 -3M123.2 580.4l1.6 -5.4M315.8 545.5l1.5 -4.7M253 525.5l1.4 -3.2M183.8 564.6l1.8 -5.2M147 538.6l1 -3M304.4 540.1l0.4 -3.9M259.9 530.7l-0.2 -3.2M96 559.2l1.4 -2.7M189.3 542.8l0.2 -4M90.2 546.7l0.1 -3.2M96.8 580.2l1.8 -5.7M287.9 566.9l0 -3.3M335 563.4l1.1 -3.3M281.8 554.1l-0.3 -3.6M331.1 559.5l-0.3 -3.2M269.8 542.2l0.5 -3.4M109.7 551.6l0.5 -3.5M102.3 548.1l-0.2 -3.2M191.8 523.8l1.7 -5M257.6 581l-0.2 -4.3M175.5 524.1l1.2 -2.9M334.5 562.7l1.5 -2.8M309.4 581.9l1.6 -4.5M240.6 551l1.8 -4.4M212.7 546.2l1.2 -4.6M323.1 570l0.3 -5.1M124.9 551.4l1 -5.1M80.4 529.8l-0.1 -4.9M106.9 555.8l1.7 -3.9M122.3 558.4l0.5 -4.3M109.7 564.7l0.5 -5.9M197.8 564.4l2.5 -5.4M66.2 580.3l-0.4 -5.8M280.1 536.6l1.4 -4.5M186.3 560.6l0.7 -4.9M254 520.8l1.3 -4.9M302.3 554l0.7 -3.4M115.1 578.1l-0.6 -5.7M94.2 544.1l0.8 -3M185 570.9l0.4 -3.5M76.9 581.2l-0.4 -5M238 538.4l1.1 -4.9M117.5 535.3l1.5 -3.3M195.9 549.7l1.9 -5.2M273.5 559.7l0.7 -3.2M220.1 547.7l1.4 -3.9M93.4 544.6l1.7 -4.2M247.2 523.5l0 -3.8M194.7 527.4l1.8 -3.6M59.8 535.7l0.8 -4.8M286.8 526l2.5 -5M204 561.1l0.2 -3.4M62 581.5l1.8 -4M228 550.1l1 -3.2M270.6 531.6l1.1 -4.7M297.5 560.1l-0.2 -5.4M163.7 556.8l2.1 -5.5M89 549.9l0.3 -5.5M170.6 578.3l1.5 -4M273.8 563.4l-0.3 -3.9M97.8 573.2l0.4 -3.9M261 583.7l-0.3 -5.1M123.1 571.1l1.7 -5M222.6 527.4l1.3 -3.1M222.4 581.6l0.1 -4.4M249.1 561.5l0.3 -4.2M311 566.3l-0.2 -5M297.8 558.2l1.6 -3.5M141 575.1l0.1 -3.4M100.8 576.1l1.3 -3.3M267.3 532.1l0.8 -2.9M221.1 568.4l0.9 -4.8M92.2 549.2l1.4 -3.9M267.3 558.8l1.9 -4.9M144.6 572.4l1.6 -4M260.8 546.4l0.9 -3.9M188.3 539.9l2 -4.4M231.6 553.2l0.5 -3.5M240.9 548.8l0.3 -4.5M95.9 561.4l1.4 -3.8M104.7 581.9l1 -3.8M85.3 557.5l0 -5.7M260.5 537.3l0.4 -3.2M122 555.7l1.7 -3.9M329.7 537.1l-0.4 -5.5M165.4 538.3l0.7 -4.8M121 527.2l1.2 -4.8M216.1 530.2l1.7 -3.9M211.9 576.9l-0.2 -4.5" stroke="#4a3a30" stroke-width="0.6" fill="none"/>
</g>
<path d="M69.6 551.8L71.4 547.1M73.6 552.2L75.9 547.7M61.7 550.9L63.6 547.2M70.8 551.9L69.5 546.4M67.9 551.7L68.4 548.4M69.7 551.8L69.3 549.3M65.1 551.3L67.1 546M64.4 551.2L63.3 546M70.5 551.9L69.6 549.1M73.5 552.3L73.1 549.1M74.9 552.5L74.5 546.9M74.1 552.4L75.3 548.2M64.2 551.2L65.9 545.7M74.7 552.4L74.3 546.8M67 551.5L66.4 548.5M62.5 551.1L63.3 547.6M62.1 551L62 546.1M65.9 551.5L66.4 546.1M65.7 551.4L66.9 547.4M63.2 551L61.4 545.4M72.2 552.1L70.6 546.9M72 552.2L72.7 548.4M62.4 551L61.9 548.4M90.6 556.2L92 553.3M90.7 556.2L91.2 550.4M80.4 553.8L82.3 549.9M76.1 552.8L78.5 548.2M88.7 555.7L90.3 553.5M76.1 552.8L77.3 549.3M89.8 555.9L91.8 552.9M84.2 554.7L84.4 551.1M78.1 553.2L77.9 550.4M86.8 555.3L86.4 549.3M75.4 552.6L77 546.9M81.4 554.1L82.5 550.9M88.8 555.8L89.5 551.7M76.2 552.7L75.2 547.1M83.5 554.5L83 549.1M86.9 555.3L88.9 549.9M88.1 555.6L88.6 552.8M77.5 553.1L77.7 547.6M81.9 554.1L85 549M91.3 556.4L92.2 552.4M87.3 555.4L87.5 551.2M81.7 554.1L82.1 551.1M91.3 556.4L93.3 550.8M83.7 554.5L83.2 550.8M78.8 553.4L81.6 548.9M80.5 553.8L82.8 549.1M86.1 555.1L88.3 550.8M81.1 554L81.3 549M82.7 554.3L84.7 549.5M79.5 553.6L81.5 548.1M84.5 554.8L85.2 552.3M96.4 556.9L96.7 552M106.2 557.6L107.8 553.1M97.8 557L99.2 552.4M106.3 557.6L107.7 554.2M106.9 557.6L109.3 553.3M109.1 557.9L109.5 553.6M94.3 556.6L96.8 551.7M100.2 557.2L101.5 552.4M104.7 557.5L105.7 554.6M102.4 557.4L102.5 552.5M102.9 557.4L104 552.3M105.3 557.5L104.7 555M100.2 557.1L99.4 552.4M104.8 557.5L103.3 553M100.9 557.1L99.9 554M94.7 556.7L94 553.1M95.4 556.8L95.5 554.2M98.6 557.1L99.4 552.5M96.8 556.8L94.8 551.5M99.3 557.1L99.3 553.6M94.1 556.7L94 551.3M93 556.5L91.8 552M101.6 557.3L102.1 553.7M109.2 557.9L109.3 552.6M106.7 557.7L106.5 553M94.4 556.7L95 552.2M109 557.9L110 552.1M98.8 556.9L96.9 551.7M93.7 556.6L94.5 552.2M93.9 556.6L95.9 552.3M99 557L98.4 553.1M97.3 556.9L97.2 551M122.4 557.5L122.7 551.8M113.4 557.9L113.2 551.9M114.8 557.7L116.2 554.3M116.5 557.8L116.3 554.3M111.7 557.9L111.3 553.3M113.4 557.8L114.7 552.7M110.5 558L109.5 553.7M122.5 557.5L121.2 552.4M112.9 557.8L114.1 554.9M113.9 557.9L113.6 553.2M118.1 557.7L118.9 553.1M111.9 557.9L110.8 552.9M117.3 557.7L116.5 554.1M117.1 557.7L116.5 553.6M120.3 557.5L118.4 553.4M112.8 557.8L114.1 553.9M122.2 557.4L120.2 553.5M120.1 557.6L120.2 553.6M119.3 557.6L119 552.9M122.1 557.5L121.5 553.7M121.4 557.5L120.7 554.4M120.4 557.5L121.1 554.9M119.4 557.6L118.5 553.7M136.9 555.8L134.5 550.6M131.3 556.5L130.8 552.1M128.7 556.8L128.6 553.8M137.3 555.8L136.4 553.2M136.9 555.9L137 550.6M123 557.4L124.5 552.6M140.7 555.3L138.3 551M137.3 555.8L137.3 552.5M139.8 555.5L137.7 550.9M128.6 556.8L126.2 551.6M134 556.2L132.4 552.5M134.2 556.1L133.1 553.7M130.2 556.6L128.8 554.1M132.5 556.3L133.5 551.3M125.7 557.2L124.6 553.3M132.8 556.2L133.9 552.2M129.3 556.7L129.4 554.1M125.7 557.2L125.2 552.5M138.5 555.7L138.4 551.2M128 556.9L126.5 552.7M136.4 555.9L134.6 552M126.9 557L127.2 553.2M126 557.1L126.1 552.1M125.1 557.2L122.9 552.9M125.6 557.2L124.1 552.9M138.3 555.7L137.2 551.7M136.4 555.9L136.6 553.3M123.5 557.3L124.3 554.4M135.2 556L133.8 553M139.3 555.5L140.1 550.8M142.3 555.2L141.2 550.7M143.3 555.1L143.3 551.5M145.5 554.8L143.9 551.3M151.4 554.2L152.2 549.5M146.2 554.8L145.7 549.4M148.1 554.6L148.6 550.1M146.3 554.7L144.9 552.2M142.5 555.2L143.1 552.6M147.5 554.6L144.8 550.1M146.6 554.8L146.6 549.2M146.7 554.7L144.8 551M142.5 555.2L141.8 552.2M146 554.8L143.8 549.7M144.1 555L142.8 551.8M144.2 555.1L143.8 551.8M140.8 555.4L139.5 549.8M153.1 554.1L153.3 549.2M147.2 554.6L144.8 549.4M149.3 554.5L149.5 551M150.7 554.3L149.6 551.4M141 555.3L139.5 552.4M145.9 554.9L144.6 549.1M144.8 555L143.6 551M150.8 554.3L148.9 549.7M143 555.1L144.3 550.4M163.7 554.2L165.4 550.6M153.7 553.9L154.4 551.3M160.5 554.2L160.6 551.6M170 554.5L169.6 550.2M154.9 553.9L156 551.4M162.4 554.2L160.4 548.7M158 554.1L157.8 551.4M155 554L154.9 550.6M159.4 554.1L158.5 551.6M169.5 554.5L169.6 551.4M160.9 554.1L159.5 550M158.9 554.2L159.1 551.3M168.2 554.4L169.8 550M157.3 554.1L157.5 551.5M161.9 554.2L161.6 549.8M163.4 554.2L165.4 549.5M158.5 554.1L159.7 550.2M157.8 554.1L157.4 551.2M154.9 554L156.5 549M159.5 554.1L158.5 551.3M158 554.1L157.9 551.3M163.7 554.2L162.6 551M165.6 554.3L164.9 551.7M159 554.1L157.9 550.5M160.4 554.2L161.3 550.7M162.6 554.3L163.6 548.7M166.2 554.4L166.1 549.9M166.4 554.3L168.4 549.9M184.8 554.8L183.9 550M186.7 554.8L185.6 551.2M171.6 554.5L171 551.5M184 554.7L182.8 551.5M185.8 554.8L184.2 550.7M171.2 554.5L170.9 551.6M187 554.9L187.7 549.1M174.8 554.6L174.4 550.6M176.5 554.7L176.7 552.1M187 554.8L185.4 550.1M180.3 554.7L180.9 551.7M178.5 554.7L180.1 549.1M171.8 554.4L173.2 551.1M179.3 554.7L179.2 550.7M185.3 554.9L185.6 549.1M189.9 554.9L188.4 550.6M186.8 554.8L185.4 551.1M189.4 555L189.7 552.4M179.7 554.7L179.4 549.2M174.7 554.6L173.9 551.2M180.9 554.7L181.8 551.1M175.1 554.6L174.4 550.9M189.2 554.9L190.9 549.8M182.8 554.7L181.7 551M187.2 554.8L185.6 550.9M173.1 554.6L173.7 551.8M187.6 554.9L188.5 551.8M176 554.6L177.6 550M182.6 554.8L182.1 549.5M170.1 554.5L170.5 550.2M173.9 554.6L173.4 550.8M170.7 554.5L170.4 550.9M179.6 554.7L179.3 549.8M189.1 554.9L191.1 549.9M183.8 554.8L184 550M185.8 554.9L186.2 551.1M203.8 555.3L203.1 551M191.7 555L191.4 552.2M201.3 555.3L202.4 550.2M196.4 555.1L195.4 549.5M204 555.3L204.6 552.6M202.9 555.2L205 549.8M203.4 555.3L204.7 550M202.2 555.3L202.3 552.1M207.3 555.3L208.7 552.3M201.5 555.1L199.9 551.6M197.6 555.2L198.1 552.1M207.8 555.4L208.5 549.8M197.5 555.2L198 552.3M201.2 555.3L200.8 550.3M208 555.4L207.5 552.2M194.8 555L196.5 550.7M193 555L194.2 550.5M194.4 555.1L194.6 552.4M206.3 555.4L207.5 549.9M198.3 555.2L198.5 551.2M208.3 555.4L207.8 551.9M202.5 555.3L201 549.6M190.5 555L190.7 552.1M202.4 555.3L201.7 552.2M201.6 555.3L202.5 550.6M204.6 555.4L204.6 552.6M206.9 555.4L206.1 549.6M206.4 555.3L208.3 550.9M194.1 555L195.7 550.4M199.9 555.2L199.2 552.4M193.5 555L192.8 552.3M201.9 555.3L202.7 552.5M204.3 555.3L205.8 550.2M203.6 555.2L206 550M203 555.2L201.1 549.7M192.4 555L191.8 552.4M216.2 555.1L216.6 551M222.8 554.7L222.4 552M219.8 554.8L218.4 551.3M220 554.9L220.4 551.1M217.9 554.9L219.8 549.4M211 555.4L211.7 550.3M215.1 555.2L214.9 552.3M215.6 555.1L217.1 550.2M216.6 555.1L216.4 551.6M221.8 554.8L221.9 549.5M214.7 555.2L215.6 551.6M219 555L218.7 552.3M214.7 555.1L212.7 550.7M214.7 555.2L214.5 552.4M227 554.5L226.3 550.2M226.2 554.5L225.6 551.8M223.5 554.7L224 552.2M216.5 555.1L215.8 552.6M217.9 555L217.7 551.2M210.4 555.4L211.5 552.3M218.1 554.9L216.4 551.1M214.6 555.2L215.2 549.4M218.9 555L218.5 552.3M223.2 554.7L223.3 550.7M225.3 554.6L225.5 549.8M210.3 555.4L210.8 552.9M216.7 555L217.9 549.6M225 554.5L226.4 550.9M223.4 554.6L221.4 549.4M222.8 554.6L224.1 550.9M240.2 553L239.6 549.8M231 554L229.7 550.1M236.3 553.4L235.1 550.7M233.3 553.8L232.7 551.1M239.2 553L237.1 547.8M226.8 554.4L228.3 549.2M235.3 553.5L234.3 550.7M239.7 552.9L236.8 547.9M229.9 554.1L228.6 550.3M236.6 553.4L237.1 549.6M228.5 554.2L229.8 550.1M236.8 553.3L235.5 550.8M235.7 553.5L234.8 549.8M232.8 553.7L234.1 549.4M230.6 554.1L229.2 549.8M234.7 553.5L232.6 549M234 553.6L231.5 549.3M237.2 553.3L236.8 549.4M235.7 553.4L233.1 548.8M233.8 553.7L233.3 551.1M231.9 553.9L231.2 551.5M232.5 553.8L233.7 549.1M231.7 553.9L232 549.6M253.6 551.1L255.3 545.5M244.2 552.4L244.9 549.4M241.1 552.8L241.3 548.8M247.6 551.9L248.5 548.1M244.3 552.4L244.9 548M242.3 552.7L241.8 549M248.7 551.8L248.2 548.7M241.3 552.8L240.5 550.1M242.7 552.6L240.7 547.1M244 552.4L244.4 547.2M244 552.5L243.8 547.1M246.3 552.1L244.7 547.7M244.2 552.4L243.2 547M254.1 551.1L252.8 548.2M240.9 552.9L240.5 547.8M239.9 553L240.3 550.3M248.2 551.8L245.4 547M248.7 551.8L248.9 548.9M249.7 551.7L248 547.4M255 550.9L253.6 548.4M251 551.4L249.6 549M246.6 552L247.6 547.4M250.8 551.6L250.8 548.8M252.5 551.3L252.8 548.4M244.7 552.2L242.8 549.3M251 551.4L252 547.2M247.5 552L246.4 549.1M259.7 549.9L256.9 544.8M257.2 550.4L255.1 547.3M261.5 549.5L261.1 544.9M258 550.3L257.3 547.4M265.6 548.6L264.9 544.6M269.3 547.7L268.1 544.9M262.2 549.3L262.8 544.9M263.8 549L262.4 544.4M267.4 548.1L265.2 543.2M257.1 550.5L256 547.3M268.5 547.9L268.1 544.5M265.4 548.5L262.3 543.6M267.4 548.1L265.4 545M264.7 548.8L263.9 543.4M256.2 550.7L254.3 545.2M265.2 548.6L263 544.1M261.9 549.3L259.9 546.3M256.4 550.7L254.9 545.9M268.6 547.8L267.6 545.3M257.7 550.4L257.8 544.6M269.3 547.6L266.9 544M262.1 549.2L260.2 546.6M264.3 548.8L262.4 545.8M262.4 549.2L263.4 543.5M262 549.4L262 546.5M257.6 550.3L255.1 546.7M270.2 547.5L269 543.3M272.9 546L272.5 541.6M275 545L273.5 542.1M279.7 542.3L278.3 538.8M279.5 542.4L278.7 538.9M276.5 544L274.1 542.2M280.2 542.1L278 538.6M279.9 542.3L277.7 538.3M273.8 545.6L270.5 541.7M275.3 544.8L273.2 540.1M271.8 546.7L270.8 543.6M277.4 543.5L277.2 540.6M272.5 546.2L270.1 544.2M274.7 545L273.9 540.4M272.8 546.1L269 542.8M276.7 544L274.7 541.3M271.6 546.7L267.9 543.3M278.3 543.2L276.7 539.8M276.7 544L275.9 539.8M280.1 542.1L278 539.4M279.6 542.4L278 539.9M285.4 538.5L280.6 535M287.2 537.3L285.1 532.6M281.1 541.6L277 537.4M289.5 535.7L286.4 532M289.4 535.7L286.1 532.2M287.9 536.7L286.2 532.9M287.3 537.1L283.2 533.9M285.5 538.4L284.6 536.1M289 535.9L284.4 533M286.6 537.6L283.2 535.2M282.5 540.5L280.7 534.9M283.1 540.2L280.6 535.4M285 538.8L281.4 535.6M283.4 539.9L282.3 537.7M286.7 537.7L283.8 533.5M284.9 538.8L283.5 535.6M284.3 539.3L282.6 535M285.7 538.2L281.6 535.5M283.8 539.6L279.5 536.3M281.1 541.5L280.2 539.1M282 540.9L279.5 537.7M302.4 531.3L301.3 527.3M290.5 534.9L290.2 529.6M299.6 532.2L298.6 526.8M301 531.8L300 526.4M290.1 534.9L290.9 529.4M293.6 534L292.5 531.5M292.4 534.2L290.1 531.2M293.8 533.9L293 531.6M295.1 533.5L293.2 528.9M292.4 534.3L292.7 528.4M300.9 531.8L299.7 528.8M297.7 532.6L295.2 529.6M297 532.9L296.4 527.8M303 531.1L302.7 526.2M303.1 531.1L302.9 525.4M296.5 533.1L295.7 528.4M303.7 530.9L302.1 526.2M293.6 534L291.8 530.8M301 531.7L298.3 527.3M298.6 532.5L296.4 527.5M292 534.4L290.2 530.2M293.1 534L290.8 531.3M293.1 534L290.8 530.8M289.9 535L290.4 530.6M302.4 531.2L302.7 527.6M292.2 534.3L290.2 532M291 534.7L290.7 530.1M297.7 532.8L295.9 527.7M319 527.7L318.3 523.2M307.9 529.9L306.9 526.1M317.9 527.9L316.7 524.9M317.5 528L317 525.3M308.5 529.8L307.9 525M306.8 530.2L305.4 525.3M309.7 529.5L310 524M310.4 529.4L308 525.2M312.9 528.9L312.7 526.2M319.6 527.5L316.9 523.6M313.1 528.9L312.1 524.9M307.6 530L306.8 526.6M306.7 530.2L304.7 525.7M309.9 529.5L308.9 526.9M319.8 527.5L317.9 524.5M311 529.2L307.9 524.3M310.2 529.5L310.1 526.2M311.7 529.1L312.1 526.3M310.3 529.5L309.1 524.7M318.7 527.7L317.6 525.3M309.2 529.6L309.4 526.2M312.8 529L312.1 525.3M318 527.9L317 523.6M315.3 528.5L314 524M311.8 529.2L311 526.3M318.6 527.8L317.5 524.4M314.7 528.5L312.6 524.5M327.2 525.4L324 521.4M321.4 527.1L321.8 521.9M321.2 527.2L320.7 524.5M324.9 526L321.9 522.3M327 525.5L325.7 522.7M329.7 524.7L329.8 520.4M331.7 524.1L331.9 519.5M323.1 526.7L321.4 522.9M328.7 525L328.8 522.1M325 526L325.6 520.8M333.1 523.7L333.2 519.9M334.1 523.5L333.9 520.6M330.9 524.4L329 520.8M322.3 526.8L322.7 522.9M325.9 525.9L325.3 522.5M326.6 525.7L325.1 521.3M324 526.4L324 523.7M329.6 524.8L328.7 521.6M328 525.2L328.3 520.9M331.5 524.3L330.1 521M328.4 525L328.7 522M321.3 527.2L319.4 523.4M328.1 525.2L326.8 522.9M334.6 523.3L332 518.8M327.2 525.4L325.7 523.3M323.3 526.6L320.8 521.2" stroke="#e3d3c6" stroke-width="0.8" fill="none"/>
</g>
<path d="M70 556.5C71.7 557 76.3 558.6 80 559.5C83.7 560.4 87.5 561.2 92 562C96.5 562.8 101.8 563.6 107 564C112.2 564.4 117.8 564.6 123 564.5C128.2 564.4 132.8 564 138 563.5C143.2 563 148.7 561.8 154 561.5C159.3 561.2 165.7 561.8 170 562C174.3 562.2 172.5 561.3 180 562.5C187.5 563.7 203.3 567.7 215 569C226.7 570.3 240.6 570.7 250.4 570.4C260.2 570.1 267 569.4 274 567C281 564.6 287.2 560 292.6 556.3C298.1 552.6 302.8 547.3 306.7 544.6C310.6 541.9 313.4 540.6 316 540C318.6 539.4 320.3 539.8 322 541C323.7 542.2 325.2 544.8 326 547C326.8 549.2 326.9 551.7 326.7 554C326.4 556.3 324.9 559.8 324.5 561" fill="none" stroke="#1a0d06" stroke-width="3.6"/>
<path d="M70 556.5C71.7 557 76.3 558.6 80 559.5C83.7 560.4 87.5 561.2 92 562C96.5 562.8 101.8 563.6 107 564C112.2 564.4 117.8 564.6 123 564.5C128.2 564.4 132.8 564 138 563.5C143.2 563 148.7 561.8 154 561.5C159.3 561.2 165.7 561.8 170 562C174.3 562.2 172.5 561.3 180 562.5C187.5 563.7 203.3 567.7 215 569C226.7 570.3 240.6 570.7 250.4 570.4C260.2 570.1 267 569.4 274 567C281 564.6 287.2 560 292.6 556.3C298.1 552.6 302.8 547.3 306.7 544.6C310.6 541.9 313.4 540.6 316 540C318.6 539.4 320.3 539.8 322 541C323.7 542.2 325.2 544.8 326 547C326.8 549.2 326.9 551.7 326.7 554C326.4 556.3 324.9 559.8 324.5 561" fill="none" stroke="#cf8652" stroke-width="2"/>
<path d="M329 562.5C330.3 561.9 334.3 561.4 337 559C339.7 556.6 342.7 552 345 548C347.3 544 349.2 539.3 351 535C352.8 530.7 354.3 525.8 356 522C357.7 518.2 360.2 513.7 361 512" fill="none" stroke="#1a0d06" stroke-width="3.2"/>
<path d="M329 562.5C330.3 561.9 334.3 561.4 337 559C339.7 556.6 342.7 552 345 548C347.3 544 349.2 539.3 351 535C352.8 530.7 354.3 525.8 356 522C357.7 518.2 360.2 513.7 361 512" fill="none" stroke="#cf8652" stroke-width="1.8"/>
<path d="M318.5 544.8C317.8 545.2 316 546 314 547.3C312 548.6 310.3 549.9 306.7 552.8C303.1 555.7 298.1 561 292.6 564.5C287.2 568 281 571.6 274 573.8C267 575.9 258.2 576.8 250.4 577.4C242.6 578 234.8 578 227 577.4C219.2 576.8 210.4 575 203.5 573.8C196.6 572.6 191 571.4 185.4 570.3C179.8 569.2 175.2 568 170 567.3C164.8 566.6 159.3 566.1 154 566.3C148.7 566.5 143.2 567.8 138 568.3C132.8 568.8 128.5 569.3 123 569.3C117.5 569.3 110.2 568.9 105 568.3C99.8 567.7 96.5 567.1 92 565.8C87.5 564.5 82 562.3 78 560.3C74 558.3 70.2 555.7 68 553.8C65.8 551.9 65.5 549.8 65 549" fill="none" stroke="#dcc8b9" stroke-width="4.4" stroke-linejoin="round" stroke-linecap="round"/>
<path d="M65 549C66.7 547.7 71.2 543.2 75 541C78.8 538.8 83.6 536.9 88 535.5C92.4 534.1 96.2 533 101.5 532.6C106.8 532.2 113.6 532.4 120 533C126.4 533.6 134.3 535.4 140 536C145.7 536.6 149 537 154 536.7C159 536.4 164.8 535.6 170 534C175.2 532.4 180 529.9 185 527C190 524.1 197.5 518.2 200 516.5" fill="none" stroke="#dcc8b9" stroke-width="3.2" stroke-linejoin="round" stroke-linecap="round"/>
<path d="M364.5 515C364 516.2 362.8 519 361.7 522C360.6 525 359.3 529.8 358 533C356.7 536.2 355.8 538.2 354 541.5C352.2 544.8 349.3 549.5 347 553C344.7 556.5 342.3 560.1 340 562.4C337.7 564.7 335.2 566.3 333 567C330.8 567.7 328.4 567.2 326.5 566.5C324.6 565.8 322.3 564.9 321.5 563C320.7 561.1 321.8 557.4 321.5 555C321.2 552.6 320.2 549.6 320 548.5" fill="none" stroke="#dcc8b9" stroke-width="3.4" stroke-linejoin="round" stroke-linecap="round"/>
<path d="M324.2 548.5L328.5 550L329 563L324.6 561Z" fill="#000"/>
<path d="M323 438C323.2 435.1 325.5 435.3 327 434.5C328.5 433.7 329 433.6 332 433C335 432.4 340.9 431.3 345 431C349.1 430.7 351.9 430.2 356.5 431.3C361.1 432.4 368 435.6 372.6 437.7C377.2 439.8 380.4 441 383.9 444.2C387.4 447.4 391.6 452.7 393.5 457C395.4 461.3 395.5 465.4 395.5 470C395.5 474.6 394.6 480.7 393.5 484.5C392.4 488.3 390.8 489.9 388.7 492.6C386.6 495.3 383.6 498.2 380.6 500.6C377.7 503 373.7 504.6 371 507C368.3 509.4 366.3 513 364.5 515C362.7 517 362.2 518 360 519C357.8 520 354.2 521.8 351 521C347.8 520.2 343.7 517 341 514C338.3 511 336.7 507.3 335 503C333.3 498.7 332.1 493.5 331 488C329.9 482.5 329.4 476 328.5 470C327.6 464 326.4 457.3 325.5 452C324.6 446.7 322.8 440.9 323 438Z" fill="#e4d4c6"/>
<g clip-path="url(#headclip)">
<path d="M307.5 441.8l3.2 -5.6M319.2 442.2l2.5 -6.3M320 501.9l2.5 -2.7M354.2 475.3l4.1 -6.9M314.3 431.4l4.2 -2.7M324 463.8l3.7 -6.8M325.1 451.5l3.6 -4.4M392.9 512l1.9 -3.6M382.6 528.2l1.3 -6.5M384.9 495.1l2.5 -6.5M372.3 448.5l2.7 -3M310.6 463.2l2.2 -4.4M362.9 512l6.7 -4.2M396.6 507.2l1.7 -3.5M362.9 482.7l2.4 -2.5M323.3 520.7l4.2 -5M314 468.9l5.1 -3.5M395.4 450.2l3.8 -5.9M346.9 506.7l2.2 -2.8M316.4 526.2l1.1 -3.8M336 499.5l4.3 -3.3M351.8 507.5l2 -4.4M362.8 492.1l0.7 -3.5M317.7 501.9l5.5 -5.6M374.1 455.6l5.9 -5.3M338.3 431l2.1 -3.9M322.8 435.9l2 -7M311.8 490l1.4 -3.7M381 459.8l1.7 -5M368.5 480.9l4 -3M353.4 501l3.6 -5.5M349.1 444.4l1.9 -6.6M373 522.5l4.1 -4.2M322.3 514.1l1.4 -4.9M319.6 467.6l2.2 -4.6M370.7 484.3l2.6 -6.4M373.5 512l1.2 -5.9M387.4 456.7l2.4 -6.6M338.8 468.9l3.8 -3.1M324.4 451.9l3 -5.8M340.7 505.6l1 -4.1M362 478.1l4.4 -6.3M332.4 448.4l1.1 -5.3M334.5 475.9l0.5 -3M340.6 505.7l3.2 -6.9M358.6 468.9l3.1 -2.7M361.1 512.8l2.8 -3.7M315.8 486.6l1.6 -4.6M354.9 522.3l3.9 -4M383.7 461l3.1 -5.6M356.1 452.8l3.6 -6.1M329 501l1.7 -7.6M366.6 461.5l6 -3.6M311.3 455.6l4.5 -6.6M320 434.1l1.4 -2.9M343.8 482.3l2 -3.1M308.7 509l2.9 -4.6M348.1 497.2l5.8 -4.1M372.9 462.8l1.1 -3.3M383 436.5l4.7 -5.9M335 469.4l4 -6.6M368.9 513.5l1.4 -6.5M346 469.5l5.2 -4.2M387.8 501.8l4.2 -2.9M357.1 506.5l2 -3.1M359.2 514.5l2.9 -2.2M340.5 453.9l3.5 -6.9M344.9 461.1l2.1 -4.8M367.6 463.5l1.4 -3.9M330.3 520l2.1 -6.4M316.4 508.2l2.7 -6.3M346 439l1.8 -6.8M355.3 478.5l3 -5.7M349.9 435.8l2.9 -3.5M382.8 483l2.7 -2.4M368.7 490.1l5.9 -4.5M356 487.5l3.2 -2.9M355.2 507.3l3.7 -4.4M384.4 525.1l1.3 -3.1M360.9 444l4.6 -2.8M354.6 509.2l3 -2.2M347.8 447.2l2 -3.1M385.1 466.1l3.7 -6.5M380.3 463.5l3.6 -5.2M323.4 442.5l3 -2.3M370.2 502.1l3 -3.6M384.3 508.7l1.8 -7.3M364.7 458l1.1 -3.3M380.1 512.8l1.8 -3.5M313.9 470.1l1.4 -3M334.2 510.9l1.2 -4.9M353.9 445.5l0.7 -3.3M318.3 525.5l5.2 -3.9M387.6 463.3l2.8 -6.8M361.4 520.7l2.4 -4.5M371.9 516.5l1.4 -4.1M306.8 484.5l4.9 -3.2M320.2 497l2.4 -2.6M388.9 494.6l2.7 -3.9M321.5 475.7l2 -3.7M362.9 495l6.6 -4.2M348.7 500.5l2.5 -4.5M358.5 526.8l1.1 -5.2M336 508.3l4.5 -2.9M313.1 488.7l4.1 -5M375.8 476.1l4.2 -5.4M307.7 454.3l5.5 -5.6M391 456.8l3.8 -2.3M347.2 445.5l3.2 -3.8M368.8 524.8l1.8 -6M361.4 458.6l1.6 -7.5M369.6 492.9l2 -7.2M342.3 475.7l3.2 -4.1M391.4 476.3l4.8 -4.9M390.2 448.1l3.5 -6.9M361.1 465.6l2.9 -2.1M328.9 436.7l3.7 -3.9M334.1 474.1l2.5 -6M375.1 466.4l2.6 -1.9M358.1 445.8l1.6 -5.6M315.1 437.6l1.4 -4.7M381.8 459.6l1.9 -6.6M381.1 527.5l0.8 -3.7M344.8 528.1l4.5 -5.9M326.7 475.6l2.9 -3M352.5 510.9l5 -4.1M381.2 527.2l2.7 -3.2M325.6 435.2l4.9 -3.3M360.5 515.3l3.5 -3.5M359.8 438.2l1.8 -4.4M377.9 494.7l3.2 -3.8M339.1 468l1 -4.7M388.8 510.4l2.1 -5.1M373.6 450.2l2.8 -5.2M324.2 520.8l1.4 -7.3M366.7 470.3l3 -6.7M371.3 450.2l1.5 -3.1M363.2 472.5l2.8 -5.9M328 444.3l5.7 -4.8M378 485.3l5.3 -5.1M309.9 460.3l3.1 -5.9M336.7 506.4l3 -7.1M344.8 488.5l4.7 -5.3M357.2 451.2l3.1 -4.9M312.9 512.7l3.3 -6.9M339.7 522.9l3.6 -3.4M370.4 430.9l1.5 -5.7M333.8 469.8l3.8 -3.8M361.7 501.8l2.8 -2.2M382 502.4l1.2 -3.2M322.9 439.9l5 -6.2M350.5 458.8l2.5 -7.5M355.1 452.8l4.2 -2.9M395.9 479.9l1.5 -3.6M308 510.8l3 -6M381.8 470.1l3.8 -5.4M365.1 465.7l1.5 -4.2M307.6 492.8l4.6 -5.1M345.3 502.6l4.5 -5.7M356.2 495.5l2.6 -3.1M313 510.3l3.9 -4M388.2 447.7l4 -3.8M317.1 442.6l0.8 -3.9M377.3 477.5l1.2 -5.3M394.4 507.6l2.3 -4.9M340 451.8l2.1 -2.3M348.3 521l4.7 -4.2M381.3 524.8l3.1 -7.1M387.6 479.1l1.6 -5.4M351.5 528.7l2.5 -6.1M374.8 490.3l3.1 -6.9M328.7 513.7l4.6 -3.3M312.2 456.6l0.9 -3.8M338.8 485.3l2.5 -2.1M373.9 439.8l2.2 -2.1M338.8 519.8l2.6 -1.9M342.1 520.1l1.7 -5M330.5 458.5l2.1 -3M319.6 525.6l4.5 -4M318.2 443.3l4 -4.6M307.9 524.4l2.1 -3.8M363.9 520.1l2.6 -4.9M309.3 476l6.3 -4.4M337.5 513.5l3.9 -2.3M381.8 457.5l6.4 -3.9M393.1 470.3l4.6 -4.7M358 435.6l4.8 -5.1M363.2 518.1l5.3 -3.3M339.4 479.7l1.3 -3.9M394 474.4l4.1 -6.2M378.3 434.8l2.9 -4.9M327 505.7l4.8 -5.5M318.9 448.9l2.4 -5.1M330.1 479.8l1.5 -2.9M380.1 482.7l4.6 -3.2M383.2 490.9l4.4 -6.3M338 526.8l4.9 -6M314.9 484.1l3.1 -6.4M389.2 513.7l1.7 -2.9M393.4 450.1l4.7 -3.7M372.9 499.6l1.8 -4.6M339.8 499.8l5.5 -5.7M355.7 464.8l1.4 -5M361.2 497.4l0.8 -3.9M363.7 506l3.1 -2M371.5 474.4l4.1 -5M343.3 488.3l2.6 -1.6M355.9 527.2l3.4 -2.5M377 520l2.9 -5M333.5 528.8l2.1 -6.1M395 525.1l4.1 -3.1M391.2 514.1l2.5 -4.2M336 461.8l3.2 -4M392.6 430.1l3.3 -3.9M395.4 527.9l4.8 -4.6M340.8 499.7l2.7 -6.6M358.9 453l1.7 -4.6M338.2 494.5l1.7 -2.7M334 474.4l6.6 -3.9M362.8 524.4l1.2 -3.8M320.4 455.7l2.3 -5.2M386.7 465l2.4 -4.8M391.4 478.8l3.9 -2.3M355.1 492.2l5.2 -5M317.8 451.5l1.8 -6.6M351.7 479.8l1.4 -6.9M393 430.8l4.7 -2.8M316.1 433.3l5 -4.9M344.3 516.8l1.3 -7.2M321.2 448.3l2.1 -4.2M387 480.5l3.7 -6M345.5 461.1l2.7 -5.3M389.4 521.1l0.9 -4.7M368 479.2l5.6 -5.3M310.9 499.2l2.3 -5.8M322.6 443.7l5 -3.8M364.9 471.6l1.3 -3.1M392.2 506.9l2.5 -2.3M308.3 476.7l1.6 -5.9M334.8 506.8l1.7 -5.2M344.2 452.6l1.8 -3.5M333.7 474.1l3.1 -5.5M386.2 480.1l1.9 -5.2M321.1 512.6l0.8 -4.3M390.7 486.4l1.4 -2.8M323.4 513.2l1.5 -6.3M322.2 504l1 -3.5M325.1 523.9l1 -5.3M389.2 497.3l1.2 -6.2M335.3 451.4l1 -3.4M356.1 503.8l5.1 -3.6M346.2 521.1l2.4 -7.2M394.2 483l4.5 -4.1M368.6 496.9l4.5 -4.6M350.5 448.5l2.1 -4.1M368 443l3.8 -3.8M389.7 470.7l2.7 -2.5M319.2 512.8l3.3 -2.7M345.1 505.9l1.6 -6.2M367.6 522.9l5.9 -3.5M317.9 510.2l1.4 -4.2M379.5 479.6l3.8 -6.4M381.2 459.7l6.3 -4.9M367.8 452l3.5 -4.7M333.1 502.7l1.1 -3.7M392.5 464.5l2.1 -6.6M379.3 472.5l1.7 -2.5M306.6 518.3l5.6 -3.5M368.5 470.6l2.8 -6M378.7 437.7l0.9 -3.2M370.8 478l1.3 -5.4M390.1 505.4l4.5 -4.3M323.7 484.6l4.1 -6.5M309.9 432l0.7 -3.3M333.9 493l5.2 -4.7M313.8 470.5l3 -3.6M331.7 446.4l1.6 -3.1M396.5 499.7l2.8 -1.8M316 493.3l4.3 -2.6M335.8 468.9l0.7 -3.9M318.7 443.8l5.3 -3.3M381.4 471.5l2.9 -3.9M348.5 506.8l2.6 -2.7M330.2 494.4l3.3 -4.6M310.1 459.3l4 -6.4M394.6 438.3l2 -3.4M343.1 488.7l4.3 -4.1M363.3 487.8l1.3 -3.7M351 437.8l3 -5.4M385.5 525l2.3 -2.9M358.1 498l2.5 -6.7M322.2 493.3l6.1 -3.9M374.1 459.9l3.8 -6.4M351.4 449.4l1.5 -3M393.2 466.5l1.8 -2.7M363 446.5l2.4 -6.4M350.8 484.2l1.3 -3.1M335.3 467.5l5.4 -3.8M346.9 484.4l4.8 -4.7M375.2 457.9l2.2 -3.8M341.1 510.2l1.7 -2.7M371.7 464l5.4 -5.3M388.6 486.8l1.4 -7.4M312.1 480.8l0.7 -3.3M384 496.2l2.6 -3M328.6 458.9l3.2 -2.7M359.9 514l1.3 -4.9M328.6 488.9l3.5 -7M336.3 514.8l2.8 -4.7M373.9 501l2.8 -3M347.8 437.8l1.9 -5M386.8 516l2.6 -6.1M394.6 496.9l4.2 -3.1M378.7 490.1l3.2 -4.2M359.9 479.1l2 -2.5M371.5 449.7l2 -7.2M381.6 508.1l2 -3.2M340.7 442.2l2.3 -3.6M345.2 517.2l3.2 -2M359.3 513.9l4.9 -2.9M374.3 442.3l2.8 -6M384.2 443.2l5.8 -4.3M314.6 492.6l3 -6.5M340.9 517.5l3.1 -3M350.4 486.3l3.7 -6.2M317.9 516.1l3.8 -2.5M367.5 490.9l3.2 -2.2M383 503.3l4 -3.7M355.8 432.6l1.8 -6.1M388.2 505.8l1.3 -4.4M356.7 476.5l5 -4M385.8 515.5l5.2 -4.6M391.5 451.3l3.9 -6.4M337.1 465.2l1.6 -6.1M385.4 447.8l1.4 -3.5M380.1 450.8l6.3 -4.5M364.4 521.5l4.4 -3.2M357.7 443.9l6.3 -4.4M316.5 451.8l1.7 -6.3M328 429.1l3.6 -2.2M356.4 499.2l2.5 -1.7M315.6 465l4.6 -5.4M386.4 517.7l2.9 -3M385.6 495.6l2.8 -3.3M330.6 522.7l3.3 -4.4M329 456.1l2 -6.4M361.4 464.7l2.5 -5.3M336.2 511.6l4.3 -2.6M377.6 468.1l3.9 -2.3M372.1 490.3l3.2 -2M328.5 483.1l4.9 -4M325.3 482.5l5.7 -4.8M360.7 479.8l2.3 -5.3M336.9 505.9l5.8 -4M319.2 519.7l1.4 -7.1M330.1 445.1l1.6 -4.8M365.6 440.2l1 -4.5M359.3 456.4l1.2 -3.5M323 524.3l2.1 -2.5M379.6 467.9l3.7 -4.2M318.1 483.8l3.5 -6.8M342.4 452.6l1.7 -3.2M309 487.5l5.4 -3.6M337.6 437.5l2.3 -6.5M366.2 484.2l3.1 -3.6M347 441.8l2.7 -5.4M385.4 449.8l3.2 -4.4M384.2 494.7l1.6 -2.8M387.7 451.9l4.8 -5.3M393.4 498.5l3.2 -4.3M361.5 441.5l2.9 -1.9M390.4 524.4l1.2 -4M380.6 432.9l4.2 -3.3M379.8 488.5l3.2 -2.8M364.3 451.2l2 -2.5M387.5 510.2l1.3 -2.8M369.2 441.8l3.1 -2.9M374.3 522.4l5.7 -3.5M345.5 485l1.3 -4.4M352.8 462.2l3.8 -2.5M369.8 518.8l5.5 -4.8M380.6 496.5l0.6 -3.2M321.5 485.9l5.1 -3.2M337.7 505.5l1 -5.4M327.3 461.4l2.3 -3.9M321.4 517.1l2.3 -3.9M361 518l3.1 -4M393.5 461.5l2 -3.7M315.1 457.2l4.3 -3.9M387.7 445.9l1.8 -6.1M324.6 520.9l2.7 -1.7M345.3 501.8l2.4 -2.5M336.6 496l5.6 -3.5M354.7 507.3l1.6 -4.6M311.1 463.4l4.1 -5M363.6 441.2l3 -7.3M344.5 479.6l4.9 -3.5M387.2 445.8l3.5 -4.2M351.9 500.6l2.9 -2.1M330 445l2.3 -7.4M327.2 460.1l2.2 -2.6M395.7 504.7l1.2 -3.6M317.3 476l3.5 -4.3M390.3 467.9l3.7 -3.3M334.9 487.3l4.3 -5.8M337.6 462.7l3.5 -4.3M342.9 512.5l1.5 -4.2M316.4 430.9l6.4 -4.6M321.6 515.2l4.9 -3M319.6 507.7l5.2 -3.3M376.6 521.3l4 -6.6M374.4 473.9l2.9 -2.9M387.1 508l3.8 -3M312 509.2l1.4 -3.3M372.6 446.7l3.5 -3.2M323.1 525.4l3.9 -6.6M373 482.1l1.8 -3.4M373.2 440.4l3.9 -3.2M330.4 506.6l5.4 -4.1M307.4 453.8l3.5 -5.1M373.3 440.2l6.1 -3.6M360.7 489.9l2.8 -3.6M334.3 465.8l3.9 -3M339.4 479l2.6 -4.5M366 490.8l2.8 -3.3M342 489l4.4 -5.2M337.5 465.2l1.3 -3.1M338.8 511.8l5.5 -5.4M371.9 505.2l2.1 -2.9M385.2 487.1l3.6 -3.6M362.6 525.2l1.9 -4.3M367.3 509.8l1.7 -7.2M369.1 479.4l1.4 -3M328.3 515.9l2.7 -6.1M333.4 485.8l1.9 -2.4M359.7 494.8l1.3 -2.8M351.1 493.2l3.9 -2.3M317.7 474.8l1.6 -7.3M379.5 515.3l1.8 -4.8M389.1 507l2.2 -2.8M387.4 437.1l1 -4.3M339.6 459.9l1.7 -7.3M372.9 502l3.3 -2.8M362.9 493.1l2.3 -2.6M361.8 465.1l4.1 -3.3M311.8 527.8l4.9 -4.8M313.1 491l3.2 -6.7M352.6 438.6l3.7 -4.2M358.2 481.1l4.5 -6.5M352.9 488l3.1 -1.9M333.9 455.8l3.7 -3.7M352.2 499.8l2.1 -3.3M362.1 446.8l0.9 -4.6M360.3 501.8l3.2 -4.1M307.6 499.7l2.1 -2.4M320.4 452.4l2 -3.5M352.1 503.4l1.9 -3.8M335.7 519l4.5 -5.1M336.4 466.9l2.3 -2.9M311 473.6l1.4 -4.9M316.8 460.7l2.9 -7M318 475.8l3.5 -2.6M351.9 513.9l3.6 -6.7M347.1 498.1l3.2 -7.3M314.1 450.4l1.8 -6.6M348.6 480.5l4.1 -5.5M325.7 482.2l0.9 -3.3M342 506.1l4.5 -4.2M330.2 462.2l3.5 -5.7M328.1 445.3l4.3 -5.9M323 469.4l4.6 -3.6M379.5 491.2l4.3 -4.6M363.4 522.4l3.7 -4.7M358.9 500.6l3.3 -5.1M382.2 526.2l1.5 -3.2M375 452.6l4.3 -6.6M373.5 509.6l6.2 -4.2M351 506.8l2 -4.3M385.9 478.1l2.7 -6M333 485.9l2.7 -2.3M384.2 520l4.3 -6.1M363.5 434.9l1.7 -5.1M346.9 513.7l4.2 -2.5M358.6 470.3l1.5 -3M360.3 456.6l3.4 -6.5M336.2 501.4l3 -4.6M388.4 436.3l3 -3.5M335.5 513.2l1.2 -5.5M375.2 452l4.9 -4.4M392.7 432.6l1.5 -5.2M324.7 525.9l4.7 -5.4M362.9 510.8l1.8 -2.8M396.3 526.8l3.3 -7.2M321 485l4.6 -3.9M334.2 465.3l5.8 -3.7M344.8 487.3l2.8 -2M369.8 464.8l2.5 -2.2M347.5 473.4l2.7 -1.7M349.4 465.6l2.2 -2.2M382.1 461.2l3.4 -4.8M368.6 516.4l1.2 -3.1M382.7 516.4l1.3 -3.9M350.2 467.5l5.2 -4.6M394.5 506.5l3.6 -5.8M385.5 520.6l4.7 -3.9M352.6 502.6l0.6 -3.1M340.8 443.6l3.6 -6.8M332.2 439.6l2.9 -4.2M349.3 524.6l1.7 -3.9M331.8 453.7l1.3 -5.3M387.5 521.8l2.4 -4.2M312.8 523l3.1 -3.6M343.6 528.7l4.3 -6.2M351.7 435.8l3 -5.5M347.3 457.2l3.3 -6.1M389.6 492.7l4.7 -5.7M340.1 454.7l3.6 -5.5M370.6 511.2l5.3 -3.7M367.5 469.1l4.3 -2.9M391.6 458.3l1.2 -3M343.3 433.9l3.3 -3.1M374 484.5l4.3 -4.7M372.8 475.6l2.9 -2.1M349.7 503.4l1.6 -6.4M332 496.9l5 -4.1M307.5 442.3l2.9 -5.8M353.6 464.5l4.7 -5M358.4 507.5l2.6 -5.8M315.3 482.9l2 -6.9M333.7 481.7l1.9 -5M308.8 429.8l4.4 -3M377.1 504.8l4.4 -3M314.6 524.8l3.6 -4.1M317.7 466.5l5.8 -3.8M392.6 435.1l3.3 -2.7M305.8 525.2l4.8 -5.4M317 449.2l2.8 -6.6M307.8 512.6l3.3 -2.4M355.9 524.2l5.3 -3.3M328.3 480.1l5.7 -4M389 433.5l1.9 -3.6M373.5 508.2l1.7 -2.5M329.3 463.6l3.3 -3.6M323.7 466.3l4.5 -3.7M332.1 519.5l1.3 -4.9M386.5 510.2l2.5 -4.9M344 466.2l0.7 -3.1M342.7 466.3l2.5 -2M335.8 475.3l1.9 -2.4M359.1 459.8l1.3 -4.9M357 436.9l2.9 -4.4M310.6 448.7l3.3 -3.6M392.5 445.5l3 -7.3M315 446.5l5.4 -4.2M325.2 479.3l4.5 -2.9M389.7 462.2l3.6 -5.1M314.9 490.5l2.7 -5.2M346.5 447.3l1.8 -3M379.7 450.9l5.7 -5.3M323 497.2l5.2 -3.6M372.7 470.1l0.8 -3.1M333.2 516.4l5.2 -3.5M371.8 491.2l2.1 -4.2M307.9 525.8l4.2 -4.3M365.5 475.7l4.2 -5.8M380.9 515.3l1.5 -2.6M341.5 464.9l3.9 -3.7M363.8 524.7l1.3 -3.8M355.4 431.1l1.4 -5.4M320.8 438.8l2.5 -5.9M387.2 441.8l4.5 -2.9M324.2 487.2l4.2 -6.2M358.5 525.3l3.8 -5.6M310.9 525.6l1.4 -2.9M364.4 450.2l3.3 -5.3M380.6 510.9l2.2 -7.5M388.7 514l3.9 -5.3M366.3 460.5l0.8 -3.1M341.1 454.6l1.8 -5.5M349.4 465.5l6.2 -3.7M372.2 466.8l1.8 -4M351.7 512.7l4.1 -4.3M321.8 492.7l4.9 -6.3M392.4 485.3l4.4 -5.2M326.3 508l4.5 -2.7M356.2 448.1l4 -6.7M342.2 509l3.6 -2.2M333.1 489.4l4.4 -3.5M381.4 489.2l4.9 -3.9M371.5 462.8l2.8 -2.1M324.5 460.8l5.5 -4.2M369.6 479l3.7 -2.9M367.1 491.6l4.1 -2.8M362.7 507.8l3 -6.4M373.9 505.6l1.7 -5.8M340.4 525.6l2.9 -6.4M364.3 516.1l1.5 -6.8M387.4 482.6l2.7 -2.9M342 508.8l4.1 -3.5M358.8 441.5l2.1 -2.6M311.3 499.7l3 -3.3M321.3 526.5l0.6 -3.4M330.1 476.7l2 -4.4M392.3 511.8l2.3 -6.4M306 521.4l4 -4.9M340.4 488.6l4.2 -2.6M307 460.9l2 -4.8M312 504.1l2.3 -2.3M334.9 492.5l4.6 -4.6M367.1 479l3.4 -3M335.5 503.8l4.1 -3.1M328.7 467.2l3.1 -2.7M377.1 515l4.2 -2.4M372.3 502.8l4.2 -3.8M386 501.7l3.4 -2.5M368.8 523.8l4.5 -4.4M386.1 489l3.2 -4.9M381.8 445.5l1.5 -3.9M368.2 429.6l3.3 -2.8M391.2 446.8l5.2 -4.7M344.9 504l2 -3.7M371.7 446.5l4.7 -5M326.2 514.3l2.7 -6.4M357.4 451.6l4 -5.2M343.1 488.2l3.6 -4M336 474.7l3.7 -6.8M310.4 481.5l2.9 -4.8M316.2 515.7l1.8 -3.6M392.4 469.9l1.4 -4M373.4 479.2l5.2 -3.2M328.7 491.7l1.1 -5.8M381.8 438.4l3.9 -4.2M342.4 433.9l2.7 -4.8M317.1 521.1l3.3 -3.6M347.4 455.8l4.4 -5.5M371.1 430.9l4.4 -4.1M334.9 438.4l1.7 -2.8M364.7 436.2l1.8 -4M330.7 484l0.9 -3.3M311.1 507.6l3.7 -4.7M395.5 453.6l1.4 -6M338.2 525.7l3.5 -4.1M319.4 472.7l4 -6.4M311.9 489l2.5 -5M365.3 506.1l2.3 -5.3M352.1 513.6l0.8 -3.8M312.6 463.1l2.3 -2M370.2 494.6l4 -3.1M391.8 503.7l1.5 -6M337 482.6l3.7 -6.1M376.9 496.3l1.9 -4.3M368.7 476.5l3.4 -2.7M350 463.4l4.1 -6.5M394 494.6l1.2 -6.7M373.1 466.2l3.8 -3.7M325.1 459.6l4.3 -4M321.6 518.2l1.3 -3.1M347.2 437.8l1.1 -3.3M383.2 495l3.2 -3M349.9 486.3l4.3 -6.5M347.1 509.5l1.6 -6.3M365.4 468.2l2 -6.4M356.6 491.9l0.9 -2.9M310.5 441.8l4.5 -6.4M344.7 455.2l4.4 -2.7M331.9 437.4l2.8 -4.4M339.3 497.2l2.4 -2.9M362.4 459l5.7 -3.4M316.7 441.2l1.5 -3.5M344.7 523.3l5.1 -4M387.6 454.8l3.5 -5.3M334.4 527.7l3.2 -5.2M320.7 482l2.7 -4.1M342.4 503.3l5.1 -3.6M372.9 502.5l4.9 -4.6M371.9 510.5l3 -2.9M391.3 504l2.6 -1.9M388.1 516.5l5.2 -3.3M383.9 478.6l2.3 -4.7M335.4 493.8l3.5 -3.7M367.7 493.2l2.2 -2.1M388.2 505.8l3.2 -6.3M365.6 475.4l3.1 -4.7M358.5 498.4l3.6 -2.9M371.8 434.3l2.7 -2.8M350.9 431.3l3.8 -3.6M372.7 521.6l5.2 -3.8M337.1 460.8l1.5 -6.9M356 491.1l1.1 -4.6M368.9 491.5l4.1 -4M326.8 473.8l3 -6.6M310.7 503.2l2.7 -6.7M328.2 484.8l5.4 -3.3M313.1 518.1l3.6 -2.8M392.4 514.6l2.6 -3.5M342.4 523.8l3.4 -2M350.3 466.6l5.7 -5.6M345.4 520.3l3.4 -6.6M380 464.7l3.4 -2.1M326.1 508.3l1.5 -4.1M390.1 508.9l4.7 -5.7M327.7 503.7l1.1 -3.5M348.7 432.2l3.2 -6.6M384.1 513.9l1.6 -4.5M312.6 435.3l2.7 -5.8M392.9 499.5l2.3 -6.5M331.7 478.1l5 -5.8M319.7 526.8l1.7 -2.9M321.5 512.4l0.9 -3.5M380.9 512.1l3.1 -1.9M361.7 441.4l4.7 -4.3M326.2 518.2l4.2 -5.7M368 468.1l2.1 -2.8M350.5 506.1l3.5 -3M313.8 471.7l3.7 -2.8M346.3 440.5l2.7 -1.7M328.4 520.6l2.3 -1.9M379.8 504.1l2.1 -2.9M312.6 462.2l3.5 -5.2M327.6 509.5l3.1 -1.9M316.4 526.9l3 -2.3M320.9 499.6l3.5 -3.4M392.2 494.9l4.1 -4.3M335.8 442.8l2.8 -6.3M337.4 505.1l4.2 -3.6M380.9 442.4l3.3 -2.6M348.1 510.6l3.7 -5.8M391.8 522.1l3.2 -2.6M342 453.3l3.9 -3.7M351.9 434.1l2.8 -4.6M328.9 443.9l3.9 -4.9M335 499.6l1.3 -6.4M352.1 497.2l3.9 -2.7M341 497.6l3 -3.9M380.3 525.5l3.4 -6.7M308.9 434.2l2.2 -3.4M309.3 500.9l1.9 -4.2M365.5 464.8l4 -3.5M371 435.2l5.7 -5.5M378 511.4l2.2 -4.3M362 434.2l4.6 -3.6M368.1 447.6l3.1 -6.3M369.5 451.3l3.8 -4.6M319.4 474.4l3.5 -4.8M343 511.7l2.1 -6.6M349.9 470l0.7 -3.6M389.3 443.1l3 -4.3M380.4 503.2l3.2 -3.8M377.7 489.4l1.2 -4.2M385.8 500.9l2.5 -3.8M344.5 473.4l2.4 -7.6M334.4 484.4l3.1 -2.1M345 518.3l2.3 -6.6M366 527.5l1.9 -3.7M314.1 444.1l3.5 -5.3M350.7 431.2l5.8 -4.2M367.5 485.4l2.6 -1.6M326.8 508.5l4 -5.8M333 475.6l2.6 -2.3M306.2 504.9l3.9 -5.4M331.4 430.2l1.5 -2.9M328.2 463.9l3.3 -2.3M390.6 446.5l3.4 -4.6M387.2 457.9l1.6 -4.1M371.7 471.4l6.3 -4.9M361 484.6l4.8 -4.5M367.7 443.2l3.1 -4M389 482.5l3.1 -3.5M308.6 433l1.9 -2.9M374.6 497.6l2.5 -2.6M323.3 479.9l2 -5.4M334.8 436.2l1.3 -3.1M396.6 432.1l0.7 -3.4M369.5 528.8l3.1 -6M338.6 468.2l3 -2.1M380.4 524.5l4.2 -2.7M342.9 502l3.3 -1.9M344.4 470.7l2.1 -7.4M363.6 505.1l6.3 -4.7M315.2 517.7l4.7 -3.6M362.3 450.6l1.8 -4.1M324.9 465.6l0.8 -3.7M381.7 432.9l3 -6.9M310.4 501.7l3.2 -5.9M347.6 456.1l2.2 -5.4M372 528l3.2 -5.9M327.7 439.2l2.9 -6.5M368.8 481.8l1.4 -5M372.9 495.9l3 -4M335.9 513.8l3.6 -5.7M335.9 462.6l3.8 -2.5M378.5 459.5l1.7 -3.6M328.9 430.3l5.6 -4.4M373.9 523.2l4.4 -5.1M321.3 501.3l2.8 -1.7M389.6 462.4l3 -2.2M346.1 507.3l2.4 -3.4M364.4 494l3.9 -2.3M319 480.5l2.8 -1.6M316.6 445.9l3.7 -3.9M361.7 527.5l2.7 -5.5M379.9 527.5l4.5 -4.8M307.8 518.8l1.5 -6.3M336.5 430.2l2.6 -3.5M312.7 475.3l3.3 -5.8M349.9 495.9l1.1 -3M359.8 444.4l5 -5.4M310.2 447.9l2.2 -3.6M342 463.4l3.9 -4.2M327.4 511.2l1.5 -6.6M372.9 467.9l2.7 -2.3M309.4 505.8l2.5 -3.8M310 458l4.5 -3.1M374.3 447.6l2.8 -3.3M324.2 513l1.9 -3.1M312.9 491l2.7 -2.8M317.5 495.6l2.3 -2.8M328.3 511l5.5 -5.2M339.5 522.1l3.1 -7.1M377.5 490.9l2.1 -2.2M393.4 505l5.2 -4.7M377.6 476.7l0.9 -4.5M385.1 438.7l2.4 -3M317.9 511l2.7 -5.2M329.5 514.7l4.1 -3.7M322.8 526.2l5 -3.2M369.9 463.3l1.7 -3.3M394 507.9l1.5 -4.4M385.2 503.6l6.1 -5M347.9 468.6l3.5 -4.1M336.3 461.3l3.7 -3.3M353.1 495.9l4.6 -3.9M382.1 454.3l1.8 -3.5M351.8 508.7l2.8 -3M341.8 464.1l1.9 -5.7M360.7 477.8l3.9 -4.8M383.3 490.4l5.8 -5.4M380.2 478.3l2.7 -1.7M369 466l2.7 -3.2M373.6 468.1l2.4 -2.9M345 439.4l2.5 -4.9M389.1 478.7l1.8 -3.3M378.5 513.9l4.5 -3.1M307.1 486.2l5.4 -3.9M360.9 438.6l5.8 -4.6M334.2 451.7l0.6 -3.5M392.7 439.1l2.1 -5.9M340.7 478.2l4.5 -5.5M320.8 506.1l3 -3.2M331.8 507.5l3.7 -2.2M331.6 463.8l3.4 -6.2M319.5 486.2l1 -3.7M343.4 431.7l4 -3.8M363.1 523.7l2.4 -5.5M355.7 453.4l4.1 -4.7M369.1 475.8l5.2 -3.8M393.7 475.4l4.9 -6.2M322.4 520.5l2.9 -4.7M371.1 494.7l4.9 -6M321.5 514.9l1.8 -3.9M318.6 455.7l4 -5.2M314.3 516.5l3.1 -4M311.2 519.6l3.8 -3.9M314.2 509.5l3.5 -7.1M386.2 453.3l3.8 -3.7M349.4 507.7l3.5 -3.2M313.4 444.7l2.5 -6.1M327.6 476.1l1.9 -3.6M317.1 440.8l6.1 -3.6M311.6 480.7l2.7 -1.6M372.6 450.9l1.4 -4.4M388 500.6l1.1 -3M378.7 470.6l3.2 -5M358.1 443.7l0.9 -4.5M395.8 462.2l2.1 -6.1M378.2 526.3l2 -4.8M377.2 503l4 -3.4M359.8 473.3l2.5 -6.4M345.9 498.1l4.8 -4M340.5 516.8l1.8 -4.7M355.5 482.5l2.5 -2.2M320.3 507.9l2.9 -3.1M352.2 524.6l4.3 -5.9M342.1 459.1l2.4 -2.4M342.7 518.4l4.8 -5.2M393.1 436.9l1 -3M360 501.8l5.3 -5.6M346.7 459.3l3 -4.6M333.1 491.4l4.7 -6M349.1 492.7l0.9 -3M309 446.4l1.6 -3.5M356.8 510.1l3.5 -6M322.2 525.4l2.8 -7.4M351.1 456.6l1.9 -5M359.1 432.5l4.3 -4.1M315.2 438.8l2.3 -4.8M319.4 449.7l2.8 -2.2M305.9 449l4.9 -3.3M307.5 448.7l2.9 -3.2M307.8 483.4l2.3 -4.9M328.4 498l3.7 -3.3M366.9 439.1l3.5 -7.2M390.4 443l1.3 -3.6M373.1 443.3l2.5 -2.8M361 491.1l2.3 -6.8M377.5 525.1l2.8 -4.7M355.8 452.5l2.2 -6.8M385 453.3l3 -5.9M351.6 451.2l3.3 -6.7M384.6 465.7l2.3 -5.1M378.8 463.9l1.7 -4.4M339 442l1.9 -7M346.4 514.2l2.9 -5.5M354.6 443.8l4.6 -4.9M372.9 464.5l1.4 -4.9M393.2 509.1l2.1 -2.4M357.2 444.4l1.1 -3.4M390.8 437.6l1.3 -5.8M352.7 504.6l2.9 -4.7M376 524.7l2 -2.5M339.5 521l2.3 -5.4M373.1 458.1l3.9 -5.9M340 501.2l4.8 -3.8M312.3 481.1l2.1 -6.8M364.4 476.4l3.1 -6M332 464.3l2.8 -4M327.2 458.6l2.4 -5M379 520.8l3 -4.5M346.6 445.7l2.3 -3M362.6 494.4l1.3 -4.2M392.2 503l1.3 -4.6M321.5 490.9l2.6 -2.8M382.8 511.2l1.5 -2.8M327.5 489.3l2.9 -2.4M307.2 485.4l2.6 -6.3M370.9 497l1.1 -3.5M360 450.4l2.9 -1.9M328.9 521.2l1.6 -7M339.3 483.5l2.1 -3.2M318.7 501l2.3 -3.2M359.1 481.7l1.8 -4.3M337.2 439.8l5.4 -3.3M345.5 491.1l1.2 -3.9M311.4 521.5l3.8 -3M340.5 495.6l2.8 -3.8M311.6 488.1l5 -2.9M357.2 515.5l1.3 -4.1M347.4 504.2l3.6 -3.9M339 465.1l1.5 -5.7M328.1 515.1l3.5 -6.2M313.6 509.7l4 -4M387 452.3l1.8 -5M307.9 524.2l2.4 -3.5M374.9 503.7l5.6 -3.7M315.8 503.3l4.3 -6.5M324.4 483.1l2.7 -1.8M314.2 443.1l4 -2.4M333 471.4l2.6 -2.4M322.4 523.1l3.9 -6.7M356.2 465.5l1.9 -2.9M355.8 513.1l3 -5M324.3 439.7l2.3 -2.1M317.5 448.1l1.3 -4.8M325.3 436.1l3.3 -2.3M348.7 518l2.8 -7.4M352.3 471.9l2.4 -3.8M336.7 459.8l2.2 -3.8M380.2 448.9l4.4 -2.8M354.1 489.7l3.2 -3.9M372.7 489.8l3.7 -5.8M327.8 441.4l1.3 -4.1M348.2 467l2.5 -3.6M384.4 469.5l5.3 -4.6M332.6 511.4l6.5 -4.4M327.8 507.9l2.4 -5.1M368.3 503.1l5.6 -5.2M385.3 473.9l1.9 -4.1M364.7 474.9l4.1 -6.5M344.6 498.5l2.3 -4.5M352.6 520.3l1.3 -3.7M310.9 521.1l1.8 -3.4M365 457.4l3.5 -5.4M361.4 493.4l2.7 -5.8M384.1 466.2l0.8 -4.4M374.7 447.5l3.1 -4M335.7 473.4l2.8 -2.2M351.2 513.9l4.4 -6M308.6 443.6l2.7 -3M358.3 455.7l1.5 -3.8M309.4 482.6l2.4 -3.7M306.7 520.3l4.5 -3M376 492.1l3.5 -4.7M332 447.5l1.9 -4.9M349.3 450.7l4.6 -3.2M344.2 505.3l2.9 -7.3M373 471.1l2.4 -6.4M321.5 430.6l0.6 -3.1M315.4 517.1l2.8 -6.7M340.3 445.1l2.2 -7.3M367.7 455.4l3.1 -3.8M391.2 526.9l3.3 -5.2M323.5 453.8l5.9 -4.3M353.7 440.6l4.6 -6.5M342.1 471.4l1.4 -6.9M327.4 520.4l2.1 -2.6M370.9 511.9l2.8 -4.5M379.4 526.9l1.1 -3.3M312.9 507.4l3.4 -5.4M382.6 495.9l2.5 -6.5M369 474.1l1.1 -4.9M394.7 466.7l2 -2.3M341 456.7l3.4 -5.3M355.4 469.6l2.5 -7M343.9 440.6l2.2 -5.2M313.4 450.5l1.8 -7.3M346.7 496.6l4.1 -3.9M355 504.6l2.2 -6.4M315.1 438.2l5.1 -5.5M384.4 516.7l4 -6.1M342.4 455.7l2.7 -5.7M395.8 460l1.7 -4.8M307.1 439.7l2 -5.1M348.1 501.3l3.3 -5.6M321.5 480.3l1.9 -4.3M391.2 523.2l5.7 -4.3M388.3 437.8l2.8 -2.5M379.2 475.4l4 -6.8M350.3 496l1.8 -2.6M376.4 476.1l3.7 -6.8M393.1 517.6l6.7 -3.9M356.1 525.3l2.4 -6.8M391.2 518.3l2.8 -3.5M311.8 477.1l2.5 -1.9M389.4 479.3l3.3 -5.7M311.7 455.9l2.2 -3.7M358.7 455.3l2.8 -6.1M360.7 527.6l1.7 -5.9M366.6 450.8l4.4 -5.7M381.2 453.1l1 -4.3M329.9 461.1l3.7 -3M376.4 464.7l6.4 -4.1M348 487.9l5.9 -3.8M310.9 512.6l5 -3.7M377.9 443.2l2.4 -3.6M340.6 458.7l1.4 -6.8M359.2 453.2l5.4 -3.9M349.7 470.7l4.3 -4.1M370 501.2l1.4 -3.5M322 510l4.1 -2.4M329.2 510.3l4.3 -3.3M312.6 472.2l4.3 -4.9M361.1 505.3l2 -2.3M386.1 495.6l6.6 -4M359.3 452.9l2.1 -3.6M395.8 430.7l2.9 -5.2M361.4 447.9l2.1 -5.5M327.6 480l3.8 -4.1M335 465.2l4.4 -5.6M348.9 511.1l3 -5.8M345.4 464.3l3 -6.3M321.4 528.2l2.7 -5.2M392.1 467.7l2.3 -5.3M384.2 451.4l1.5 -3.2M390.1 452l0.8 -3.5M374.4 462l3.7 -6.5M329.2 521.9l5.6 -3.5M309.8 473.7l1.6 -6.4M381.4 449.4l3.6 -6.2M391.1 434.1l2.4 -2.4M322.2 436l2.8 -1.8M389 522.5l4.2 -3.8M353 435l1.5 -3.9M376.5 490.6l1.5 -4.3M381.4 508.9l1.4 -7.4M344.2 480.9l2.9 -2.3M327.2 450.8l5.6 -5.7M310.7 458.7l1.6 -7.6M350.9 488.4l3.7 -7M375.8 459.2l1.7 -3.1M343.1 523.1l4.6 -6M324.5 464.3l1.4 -6.2M370.8 459l1.8 -7.3M372.4 499l1.4 -3.3M380.1 477.2l3.8 -3.2M319.7 489.9l5.8 -4.8M346.3 483.2l3.8 -5.8M315.9 503.6l5 -4.9M372.3 477.1l2.4 -3M315.8 456.3l6.6 -4.2M391.2 527.1l2.5 -4.8M356.9 466.9l6.2 -3.7M393.1 434.2l4.2 -3M318.9 475.7l5.9 -3.7M347.1 463.7l1 -5.7M338.9 475.2l4 -5.7M331.4 444.9l1.9 -5.7M382.2 496.4l1 -3.1M313.4 430.5l1.3 -3.4M344.4 516.6l3.5 -3.5M381.8 506.4l2.4 -6.4" stroke="#8c7464" stroke-width="0.7" fill="none"/>
<path d="M313.6 451.9l2.8 -6M352 501l1.3 -4.9M381.1 481l5.5 -3.5M340.1 429.3l2.6 -2.4M306.3 501.6l5 -3.9M393.4 449.5l0.8 -3.4M395.5 440.4l1 -2.9M311.6 433.4l1.7 -3.2M334.9 522l2 -5.9M372.5 486.1l3.8 -4.7M360 452.3l1.8 -3.6M343.2 526.2l1.7 -2.8M349.4 510.1l3.1 -4.9M315.1 435.3l2.2 -2.3M334.7 467.2l1.1 -3M306.2 523.7l4.8 -4.9M350.1 523.2l4.4 -3.3M354.4 479.9l1.6 -4.2M371.1 448.7l4 -3.1M361.2 509.9l2.4 -2.6M329.6 431.4l1.3 -6.7M359.8 524.3l3.2 -2.8M394.1 519.8l1.8 -2.8M335.9 445.8l1.6 -2.9M371.1 526.9l2.1 -5.7M358.7 476.6l3.7 -2.6M380.3 432.4l3.2 -2M306.3 516.3l4.1 -4M376.4 467l1.2 -4.1M393 526.4l1.7 -4.4M348 519.7l1.1 -6.2M330.3 483.4l0.9 -3.2M384.7 479l5.5 -3.4M373.5 438l4.4 -5.4M352.1 437.7l2.3 -6.6M394.6 454.8l2.6 -5.3M351.3 447.6l4.7 -2.8M339.1 432.6l3.5 -4.9M321.6 438.9l4.8 -4.6M340.2 476.2l3.4 -3.8M318.9 456.7l1.3 -3.6M314.8 469.3l2.3 -6M335.4 523.7l3.1 -2.6M320.4 486.2l2.9 -4.3M317.3 481.7l3.6 -3.2M329.5 521.6l2.9 -6.3M369 429.7l1.9 -3M377.9 472.6l1.7 -6.6M378.9 488.8l2 -2.6M395 459.6l2.9 -4M348.5 431.2l4.1 -2.9M341.1 514.1l4.7 -3.5M389.1 464.4l1.2 -4.2M360.1 507l4 -3.8M361.1 494.5l1.9 -2.4M356.6 457.6l1.3 -5.3M381.8 457.7l3.8 -4M368.2 514.6l2.3 -2.4M362.1 464.6l2.9 -4.9M322.2 490.4l2.8 -1.8M383.1 500l3.1 -5.2M312.8 445.1l4.7 -2.8M321.7 442.9l2.8 -4.4M395.5 448l3.2 -3.6M357.3 523.3l1.7 -6.1M373 457.1l1.7 -5.8M384 464.4l1.5 -5M367.5 464.6l1.7 -2.9M319.4 451l2.6 -2.3M325.1 475.4l1.4 -3.7M373.3 452.2l2.1 -2.6M353.6 498l2 -3.2M309.9 456.4l1.7 -2.9M345.7 480.6l1.3 -5.5M392.3 499.5l3.4 -5.3M390.5 522.7l5.1 -3.3M392.1 504.2l1.6 -3.2M351 498.9l1.8 -4.1M314.2 435l2.5 -5.9M311.7 445.7l3.4 -6M327.1 434.4l0.9 -4.3M308.1 495.5l0.9 -3.7M314.4 456.2l0.9 -3.5M324 452.5l3 -3.3M324.1 431.1l5.1 -3.8M392.2 499.4l2.3 -3.7M323.8 474l3.5 -5.8M324 498.4l4.1 -3.9M362.4 434.6l1.5 -4.8M360.8 523.6l2.9 -2.5M320.7 507.1l1.2 -6.5M314.5 487.7l2.6 -2M316.1 491l2.2 -2.1M348.4 507.3l3.4 -3M307.3 490.4l2.8 -3.8M360.2 487.4l2.9 -4.3M357.4 504.6l2.3 -2M377.6 453.5l2 -3.3M334.8 468.5l1.9 -2.9M333.2 475l2.5 -4.5M311.8 484.4l4.9 -3.4M357.3 508.6l1.8 -3.2M361.9 454.7l2.4 -5.6M352.8 447.9l2.1 -5.5M365 517.5l3 -2.8M368.5 516.4l5.4 -3.9M320 455.4l2 -5.9M369.6 484.9l1.6 -4.4M367.8 432.8l4.7 -3.4M387.3 522.7l2.5 -3.4M340.9 477.4l2.6 -3.1M332.9 479.3l2.2 -2.1M387.6 493.8l3 -4.3M381.3 471.6l1.5 -3M337 436.5l2.2 -5.1M338.5 519.9l3.5 -5.3M324 525.8l5.3 -4M379.5 481.9l1.9 -6.1M392 474.6l4.1 -3.7M376.1 518.4l2.4 -2.6M346.4 483.8l2.1 -5.4M336.1 439.2l2.8 -5.2M363.7 462.2l3 -4.9M383.7 440.7l1.6 -4.4M326.9 447.3l1.5 -3.2M309.9 472.2l2.9 -4.6M390.7 521.8l2.3 -3.4M361.5 474.1l4.3 -5.2M374 526.6l4.7 -3.9M395.5 502.1l4.2 -3.9M393.8 482.5l2.7 -4.7M323.9 506.9l2.6 -3.6M367.5 499.2l2.8 -3.2M353.9 430.5l1.6 -2.7M360.5 438.5l2.3 -5.7M370.9 453.1l1.4 -6.7M344.9 436.2l3.7 -5.1M360.2 458.2l2.6 -3.6M392.1 508.6l1.9 -5.1M379.8 450.5l1.6 -5M363.9 471.7l3.2 -4.3M369.9 439.3l1.6 -3.2M325.9 519.9l4.2 -4.8M343.6 452l1.5 -5.9M384.4 502.5l2.2 -5.6M386.2 461l4 -5.7M324.1 493.7l4 -3.5M389.7 479.1l1.4 -4.2M334.8 480.5l3 -5.5M363.3 507.6l2.1 -2.5M322.5 441.8l3.2 -3.1M379.9 517.1l4.5 -3.4M327.6 438.5l3.5 -5.1M386.8 437.8l1 -4.5M360.4 461.8l4.2 -4.3M381.7 522.2l2.2 -6.4M312.9 488.8l2.6 -2.3M331.1 496.6l1.8 -2.9M312 489.2l1 -3.4M331.2 482.5l1 -4.2M331.8 454.4l3.6 -3.3M377 520.3l3.3 -2.1M368.6 444.2l1.1 -5.4M354.4 446.7l2.5 -5.3M361.7 439.6l2.5 -1.9M343.8 489.5l1.4 -3.4M354.5 518.5l1.1 -3.3M335.1 525.2l1.1 -5.3M365.5 523.8l1.7 -5.7M344.2 517.2l4.6 -3M363.1 442.3l2.9 -6M364.7 456.3l2.1 -5.9M377.8 492.3l3 -2.4M350.2 514.8l3.3 -3.1M341.6 514.1l2.6 -2.7M337.4 454.3l2.2 -4.3M308.6 430.5l3.5 -3.3M307.7 474.3l2.9 -3.2M324.5 515.1l3.9 -3.2M367 495.5l2.7 -3.4M341.3 452.5l1.5 -2.9M379.3 459.1l0.7 -3.7M380.7 487.2l1.1 -3M342.7 483.9l2.3 -2.7M375.1 512.7l4.1 -5.5M327.9 454.7l2.3 -6.2M383.7 450.4l3.2 -3M378.8 459.2l3.6 -4.1M360.7 513.6l2.6 -3M339.5 456.6l2.8 -3.8M350.9 460.8l3.7 -3.1M348.9 473.5l2.5 -3.6M349.2 431.5l2.2 -3.2M342.7 440.9l1.1 -4.3M362.4 429.3l3.1 -2.1M333.5 454.6l5.4 -3.5M393.6 502.2l2.6 -2.2M332.1 517.6l1.9 -3.1M341.6 475.9l4 -4.1M350.9 452.9l3.6 -4.4M340.7 527l1.8 -2.8M340.9 482.1l2.8 -5.4M369.9 473l4.5 -4.3M327.7 529l1.2 -6.7M375.5 510.7l1.1 -6.3M325.9 455l4 -2.9M392.7 497.3l4.4 -3.2M393.6 492.3l2 -3.6M354.8 453.7l5.8 -3.4M387.3 505.3l4.4 -3.3M396.5 441.8l1.7 -4.6M317 434.8l4.1 -4.4M390.9 500.1l3.4 -2.4M330.2 476.1l0.6 -3.3M335.6 487.7l3.9 -2.8M359.2 448l4.9 -3.3M342.9 431l3.3 -3.1M375.4 450.9l4.4 -3.2M353.4 470.5l1.8 -4M337.4 484l0.9 -3.4M380 445.4l1.2 -6.6M328.4 505.6l3 -6.2M317.8 454.3l2.5 -2.7M337.5 470.3l4.3 -3.5M350 457l1.6 -6.7M338.8 441.1l1.8 -3M342 450.8l3.3 -3.8M393.5 522.9l2.3 -4.8M318.3 526.3l3.8 -2.9M373.7 450.3l0.6 -3M335.8 479.4l1.5 -3.6M370.9 452.3l1.8 -3.9M309.5 521.1l2.2 -2.4M310.7 452.8l1.2 -3.8M374.2 513.2l2.3 -2.1M371.5 497.2l2.4 -2.9M360.5 442.8l3.7 -5.1M373 511.2l3.5 -2.3M327.2 463.7l2.9 -2.8M317.8 490.5l2.4 -2M357.7 464.4l2.7 -5M381 464.9l1.3 -3.7M393.4 445.7l2.7 -3.6M375.8 469.8l5.2 -4.6M316.1 485.8l5.2 -3.6M384.6 495.5l2.5 -3.3M355.9 439.5l3.1 -3.8M388.9 522l2.4 -3.8M384.9 470.4l2.4 -2.9M381.8 492l1.6 -2.5M340.5 513.5l5.3 -4.4M332 476.9l2 -5.6M343.4 434.1l2.1 -3.1M381.8 504.3l1.1 -5M356.7 472.1l1 -4.2M315.7 525.9l0.9 -3.1M333.9 483.5l2.6 -5.3M387 463.8l1.3 -3.1M348.3 462.2l1.3 -5.3M392.2 502.9l2.2 -5.6M361.7 511.7l0.9 -4.7M359.8 449.3l1.3 -3.7M352.7 513l3.2 -3.7M363.1 462.9l2.3 -5M354.2 439.8l3.5 -2.3M328.5 456.8l5.3 -3.9M365.2 431l1.3 -2.9M354.4 450.9l2.2 -5.6M313.1 515.1l2.2 -6.5M367.3 512.5l2.3 -4.8M371.4 518.2l2 -2.8M395.4 442.8l2.9 -3.6M366.2 444.3l1.1 -4.1M322.9 446.5l2.4 -4.5M393.5 492.2l1.6 -6.5M395.3 437.4l3.9 -3.8M367.6 498l2.6 -5.2M380.9 464.3l1.8 -5.9M357 524.3l0.8 -3M366.1 476.7l2.1 -4.8M388.6 459.4l3.2 -2.9M374.9 479.1l1.7 -5.5M349.8 511.7l3.1 -1.9M345.8 507.9l1.1 -3.2M395.1 439.6l3.3 -4.6M364.6 475.1l2.6 -2.9M370.9 464.9l1.2 -3M324.5 515.8l3.9 -5.5M340.5 477.6l4.2 -2.7M331.5 444.8l2.8 -1.6M378.8 459.3l4 -3.2M329.5 523l4.6 -4.4M317.2 512.1l1.5 -4.1M310.5 483.6l4.2 -4.3M306.6 443l3.2 -5.4M329.6 518.6l1.8 -4.3M368.7 450.6l0.6 -3.4M387 515.2l1.1 -2.8M352 520.8l2.6 -1.7M322.5 502.2l3.9 -4.4M372.9 448l3.9 -4.3M383.6 520.3l1.9 -5.5M342 443.7l3.3 -2.6M332.3 495.8l2 -6.2M336.4 461.8l2.5 -2.7M395.1 503.5l0.8 -3.6M380.2 509.4l1 -5.8M347.6 494.5l2.1 -3M386.9 492.4l0.8 -4.1M384.3 518.1l4.6 -3.6M342.7 509.4l4.4 -5.4M333 517.4l2.4 -2.8M334.5 492.1l1.9 -5.4M338.6 445.4l5.1 -4.5M378.8 491.4l2.6 -4.3M373.5 518.5l3.5 -3.2M311.9 510.1l2.9 -6.2M368.2 475.7l2.1 -4.9M386.5 476.8l4.8 -3.6M369.5 495.8l2 -6.4M308.8 516.4l2.2 -5.2M379.5 444.2l1.6 -5.6M357.3 518.7l3.6 -4.1M333.7 449l4.6 -5.2M351 463.6l4.9 -3.3M378.2 502.3l2.7 -6.4M351.5 481.4l1.9 -3.6M373.2 496.1l4.4 -3.2M333.5 468.4l4.5 -5.1M318.9 437.9l1.8 -3.6M340.2 443l2.8 -2M384.5 497.7l4.7 -3.1M315.4 435.8l4.5 -2.9M387.3 487.6l3.5 -5.5M376.2 484.7l3.3 -5.4M364.8 469.7l2.4 -4M324.5 449.4l5.2 -3.6M321.4 444.9l3.2 -4.2M346.9 462.6l1.3 -6M316.4 471.6l2.1 -3.9M317.9 430.7l4.7 -3.1M380.1 515.1l3 -2.2M370.3 456.3l1.4 -2.7M329.7 500.9l1.2 -6.8M358.5 445.4l5.1 -3.4M357.7 468l2.8 -3.1M381.8 452.9l3.8 -4.8M318.9 440.5l2.6 -3M363.6 500.2l4.8 -4.3M314.7 484l2 -2.2" stroke="#4a3a30" stroke-width="0.6" fill="none"/>
</g>
<path d="M327.2 436.3L324.4 433.3M324.9 438.3L323.6 436.4M326 437.4L323.1 434.7M326.7 436.7L325.5 434M326.9 436.6L324.8 434.1M326.7 436.8L325 434.7M326.9 436.5L325.6 433.9M331.1 434.8L329.3 431.1M327.5 435.9L327.4 431.8M330 435.1L328.7 433M330 435L330.3 432.1M330.2 435.1L329.8 432.4M328.7 435.5L329 431.1M329.8 435.2L329.3 431.5M343.3 432.7L340.9 428.9M337.2 433.7L336 430.3M339.4 433.3L339.8 430.8M338.8 433.4L338.8 430.9M336.3 433.9L335.9 431.2M333.5 434.2L334 431.5M340.9 433.1L341.2 430.8M331.9 434.4L332.5 431.5M340.4 433.2L339.7 430.3M336.6 433.7L337.4 431.2M332.6 434.4L332.8 431.2M337.7 433.6L336.1 429.5M344.7 432.5L344.7 428.3M343.4 432.7L343.8 429.5M342.6 432.9L342 429.5M341.9 432.9L340.3 430.1M341.9 433L341.5 430.1M343 432.7L341.6 430.4M334 434.2L333 430.7M347.4 432.5L348.6 429.4M347.4 432.5L348.5 429.5M352 432.7L352 429.8M350.6 432.6L350.4 430M348.7 432.6L348.2 428.5M352 432.6L353.7 428.5M349.5 432.6L349 429M349.2 432.6L350.1 429.3M356.4 432.7L355.2 430M350.7 432.5L349.8 430.3M353.6 432.7L354.1 430.2M348.7 432.5L350.1 428.4M345.1 432.4L346.2 429.9M351.7 432.6L352.5 429.5M354.4 432.7L354.4 429.4M346.6 432.5L345.7 429.5M352.6 432.6L351.6 429.1M366.6 436.8L366.6 434.3M365.9 436.6L368.1 434.1M366.6 436.8L366.8 433M369.2 438L370.4 435.8M370.2 438.3L373 435M362.9 435.4L365.2 432.3M357.7 433.3L360.6 430M363.1 435.5L364.4 431.7M361 434.6L360.9 430.7M369.1 437.9L369.9 433.5M370.7 438.5L372.3 436.6M360.5 434.5L361.9 430.3M371.3 438.7L371.4 436.3M369 437.9L370.5 434.5M356.6 433L357.3 430.4M356.5 432.9L359 429.2M371.4 438.8L372.4 435.1M357.7 433.3L357.8 429.4M364.8 436.2L366 433.1M357.1 433.2L358.1 430.9M356.9 433L357.1 429.5M360.4 434.5L361.5 432.1M362.5 435.3L362.9 432.5M365.1 436.3L366.4 432.2M358.9 433.8L359.4 430.9M378.2 442.7L380.5 439.3M374.1 440.3L375.3 437.5M376.4 441.4L379 439.6M377.8 442.4L380.3 439.6M379.3 443.3L380.9 439.5M379.8 443.5L380.8 439.2M379.5 443.3L379.9 440.1M372.8 439.4L373.5 435.5M380 443.7L381 441.4M371.9 439L374.4 436.5M374 440.1L376.7 437.9M374.9 440.7L377.1 438.2M381.4 444.5L383.1 442.4M372.7 439.4L374.8 437.9M372.2 439.1L375.1 435.9M379.3 443.3L381.7 440.2M375.5 441L376.3 437.9M381.3 444.4L384.1 441.5M374.6 440.5L375.7 437.1M390 454.6L393.9 453.8M389.3 453.9L392.8 452.4M384.1 446.7L385.8 443.6M386 449.3L388.4 448.6M382.7 444.9L386.9 443.9M387.3 451.1L389.4 447.5M384.5 447.3L385.7 445.3M383.1 445.5L385.3 442M388.7 453L390.4 450.6M386.5 449.9L389.1 449.3M386.3 449.9L389.3 447.9M388.9 453.3L391.2 450.8M384.3 447.1L386.9 443.8M386.9 450.8L390.4 448.5M391.8 457.2L395.1 454.8M383.9 446.7L386.7 444.4M390.8 455.9L393.9 454.3M390.3 455.1L393.4 454M391.1 456.1L393.6 455.4M391.2 456.4L394.1 453.4M385.2 448.5L387.1 446.7M391.4 456.5L392.9 453.7M385.5 448.9L387.7 447.6M390.5 455.3L392.8 451.6M392.8 461.6L395.3 462.2M393.7 467.5L397.1 468.3M393.1 464L397 463.4M392.7 461.5L397.2 462.2M393.2 464.7L397.4 464.6M393.8 468.1L395.9 466.9M392.2 458.4L395.8 458.5M392.5 459.7L395.5 458.1M393.6 466.7L397.1 464.7M394.1 470.4L397.5 468.7M392.7 461.5L395.3 461.6M394 469.5L396.4 468.4M393.3 465.1L397.4 465.3M392.9 463L395.5 462.9M392.9 463.1L397 462.7M393.5 466.6L397.9 466.4M394.1 469.7L396.5 468.1M393.8 468.1L396.1 468.7M393 463.4L395.3 462.6M392.6 480.1L395.7 480.9M393.8 471.4L397.9 471.5M392.4 481.7L394.9 482.4M393.1 477.2L396.2 476.3M393 478L397 477.2M393.3 475.7L395.3 476.9M392.1 483.9L395.8 484.3M393.9 470.6L396.4 471.4M392.6 480.9L396.6 482.8M393.1 476.1L396 476.6M393.5 474.3L396.6 475.9M393.2 476.1L397.4 477.5M394 470.3L397.8 471.3M392.9 478.3L395 479.4M393 477.4L396.5 476.9M393.9 470.7L396.3 470.4M393.4 474.8L396 474.1M392.7 479.9L396.1 481.6M393.6 472.8L397.4 473.7M393.8 471.3L398 471.3M393.8 472L396.2 473.3M391.2 485.5L393.8 487.2M390.3 487.1L394 487.8M390.2 487.1L393.1 489.2M389.4 488.5L391.7 490.3M387.6 491.5L390.3 493.5M388.1 490.8L390.8 491.7M387.5 491.7L390.1 493M390.5 486.7L394.2 489.1M387.8 491.3L390.3 492.1M389.2 488.8L391.6 490.7M389.6 488.3L392 488.8M389.9 487.7L393.3 488.5M390.8 486.1L393 486.9M390.8 486.1L393.4 488M381 498.2L383.1 501.4M385.6 493.6L387.4 496.4M380.1 499.2L382.7 500.2M387.6 491.7L389.1 494.7M386.5 492.6L389 495.8M380.4 498.9L384.2 500.7M380.9 498.3L383.3 499.4M384.1 495.2L387.2 496.5M385.1 494.1L387.5 495.3M386.6 492.6L388.6 493.8M385.2 494L387 496.6M382.5 496.6L385.2 498.6M382.4 496.8L384.8 498.1M386.5 492.8L389.8 494.5M385.9 493.3L387.9 495.6M382.5 496.6L384.8 499.4M386.3 492.9L388.7 496.5M375.9 501.9L377.5 504.7M379.1 499.9L380 503.5M376 501.9L378.5 504.2M370.9 505.3L372.9 507.7M373.4 503.7L374.1 506.7M375.6 502.1L378.1 504.8M373.7 503.5L376.4 505.5M371.3 505L372.6 507.3M373.1 503.8L375.3 506.3M375 502.7L378.8 505.1M371.3 505L373.3 508M374 503.2L375.1 506.8M370.2 505.7L372.5 508.3M376.3 501.7L378.7 505.2M378.7 500.1L381.6 502.3M376.6 501.5L378.3 504.8M374.7 502.7L376.7 506.3M363.4 514.1L367 515.9M365.2 511.9L366.7 514.7M365.6 511.4L368.6 512.6M364 513.4L367 514.2M364.3 513L366.6 513.7M369.7 506.2L372.4 508.7M366.7 510L370.1 512.6M368.2 508.1L372.5 509.6M370 506.1L371.3 508.5M367 509.5L369.6 511.2M367.6 508.9L370.3 511.7M368.3 508L369.9 510.2M366 510.9L369.1 512.3M363.9 513.5L365.6 516.5M365.2 512L368.7 513M359.1 518L362.8 519.9M363.3 514.1L365.4 517.2M362.3 515.1L366.3 517.2M360.8 516.3L363.4 518.5M360.8 516.4L362.3 519.2M359.9 517.1L361.7 518.6M361.2 516L362.9 518.3M363.4 514L365 515.9M362.5 514.8L364.4 516.7M354.5 518.7L354.9 522.4M355.7 518.5L355.3 521.7M352.5 519.2L351.8 523.5M353.9 518.8L354 521.6M357 518.1L357.9 521M359 517.7L360.5 520.6M357.9 518L357.9 521.2M354.1 518.8L354.2 521.8M355.9 518.4L356.8 521.3M357.7 518.1L357.2 520.7M354.5 518.7L354.9 522.4M354.6 518.8L356.8 521.7M359 517.7L359.9 521M351.5 519.6L350.3 522.1M341.6 512.8L340.8 516.8M347.5 516.8L346.7 519.8M349.3 518.1L345.6 520.6M348.7 517.7L347.6 521.5M345.7 515.5L344 517.3M346 515.6L343.1 519.1M342.9 513.5L341 515.6M350.2 518.8L348.1 520M351.4 519.5L350 522.2M350.1 518.6L347 521.4M348.3 517.4L345.6 519.6M351.6 519.7L348.6 521.9M345.5 515.4L344.2 518.6M350 518.5L348.8 520.9M348.6 517.6L347.4 521.4M350.5 518.9L348.4 522.3M350.2 518.7L349.3 522.7M340.1 509.2L337.3 510.7M340.9 510.8L337 512.6M340.3 509.6L337.2 511.7M338.8 506.8L336 509.2M337.3 504.2L334.8 504.5M339.5 508.2L337.2 510.8M339.3 507.8L336.5 509M337.8 505.3L336.2 507.2M337 503.6L334.4 504.6M337.5 504.8L335.1 508M338.1 505.8L335.5 509.1M342.4 513.4L338.4 514.8M338.1 505.6L334.5 507.2M340.7 510.6L339.1 512.7M338.5 506.6L334.8 506.9M340.8 510.4L338.6 511.9M336.8 503.4L334.1 503.9M338.2 505.9L335.5 508.8M333.3 490.9L330.1 491M336.3 502L333.4 502.6M335.1 498.1L332.3 500M335.3 498.5L332 500M332.5 487.7L329.6 489M334.8 496.4L331.4 497.9M332.6 488L329.9 488.5M332.8 489.2L330.3 490.6M334.5 495.4L330.3 495.2M332.8 489.3L329.7 491.5M332.5 488.3L330.4 489.9M334.2 494.5L332.3 495.9M335.6 499.4L331.6 501.4M332.9 489.5L329.1 491.6M336.1 501.2L333.3 501.6M333.7 492.6L330.7 492.7M336.1 501.4L333.9 502.2M333.9 493.3L329.7 492.8M332.8 489.1L328.5 489.9M334.7 496.2L332.4 496.7M332.8 488.8L328.9 490M333.9 493.6L330 493M333.6 492.4L330 491.9M330 471L327.8 470.3M331.7 482.3L329.5 483M332.2 485.9L329.9 485.6M331.6 481.4L329 481.2M332 484.1L329 484.7M331.6 481.6L328 483.2M330.4 473.1L327.2 473.7M331.6 481.5L327.5 483.1M331.3 479.8L328.7 481.1M332.4 487.8L328.7 487.3M331.7 482.5L328.5 482M332.4 487.1L329.5 486.9M331.9 483.4L329 483.7M331.6 482.3L329.3 483.7M329.9 469.8L326.1 471.2M332.2 485.7L328.8 486.1M330 470.5L327.2 471.9M330.3 472.2L327.8 473.2M331.9 484.4L327.8 483.3M331.5 481.2L327.9 481.1M331.3 479.4L327.4 480.6M330.5 474.1L328.1 475.3M332.1 485.6L329.5 484.9M331.7 482.8L328.5 484.8M330.3 472.4L326.4 472.3M330 470.3L327.7 470.1M332 485L328.3 487.4M329 464.1L325.6 464.7M327.6 455.9L325.2 455.5M329.9 469.8L325.6 469.4M329.8 469L327.6 470.1M329.6 467.8L327.2 468.8M328.3 460L325.2 461.3M327 452L323.5 452.6M327.5 455.3L323.9 454.7M327.5 455.3L324.4 454.8M328.1 458.3L325.8 459.1M327.9 457.7L324.1 457.6M327.7 456.4L323.8 455.6M329.2 465.6L325 464.9M327.6 455.3L324.8 455.5M327.3 453.9L323.5 455.6M329.7 468.5L326.6 470.3M328.3 459.9L326 461.1M327.1 453.4L324 455.3M328.4 460L325.5 460.6M327.5 455.6L323.9 457.9M329.8 469.1L326 471.1M327.5 454.9L323.8 455.3M328.1 458.8L324.9 458.4M327 452.2L324.3 453.3M328.7 462.2L325.6 462.5M327.1 453.4L324.2 452.8M329.2 465.1L326.1 465M325.3 442.4L321 442.7M326.1 447.3L322.4 448.8M326.9 452.1L324 451.4M327 451.8L322.8 451.8M325.2 442.1L321.9 443.6M325.8 445.5L321.3 444.9M325.9 445.7L322.7 446.5M326 446.3L323.1 447.6M324.5 438.4L322.4 439.5M325.5 443.5L321.3 443.5M326.6 450.4L323.3 449.6M324.8 440.2L322.1 439.5M324.5 438.2L321.9 437.9M326.5 448.8L324.1 449.5M324.4 437.6L320.9 439.4M324.9 440.2L321.9 440M325.6 444.1L321.9 444.8M325.4 443.3L321.8 442.6M325.7 444.8L321.6 445.5M326.8 451L323.2 450.4M325.9 445.9L322.7 446.1" stroke="#e4d4c6" stroke-width="0.8" fill="none"/>
<defs><clipPath id="antclip"><path d="M332.5 446L334 435.6L335.4 421L339 399L342 384L347 384L346.6 399L346.6 421L348 435.6L349.5 446ZM362.5 437L364 434L365.5 428L373.5 413.7L380.9 399L389 384L393.3 385.5L386.7 399L380 413.7L376.5 428L377 438Z"/></clipPath></defs>
<path d="M332.5 446L334 435.6L335.4 421L339 399L342 384L347 384L346.6 399L346.6 421L348 435.6L349.5 446ZM362.5 437L364 434L365.5 428L373.5 413.7L380.9 399L389 384L393.3 385.5L386.7 399L380 413.7L376.5 428L377 438Z" fill="#e0cfc1" stroke="#2a1c14" stroke-width="0.8"/>
<g clip-path="url(#antclip)">
<path d="M338.4 427.1l4.9 -0.5M341.7 434l5 -0.2M361.2 396.7l4.3 -1.4M366.7 384.8l3.9 -0.1M342.4 382.8l6 0.2M385.7 422.5l4.1 -1.3M360.6 387.8l4.5 0.1M337 436.5l6.5 -1.8M357.5 418l4.8 -1M340.4 382.5l3.9 0M378.2 394.1l6.6 0.2M376.9 432.2l5.9 -0.7M336.2 412.4l3.8 -0.1M388.7 440.7l4.4 -0.8M357.5 406.2l4.5 0.2M328.3 386.6l7 -0.4M359.8 413.8l5.9 -0.7M341.9 421.7l5.5 -0.7M338.6 392.2l6.6 -1.3M351.2 421l3.3 -0.7M332.1 435.4l4.5 -0.2M371.7 426l6.8 0M354.2 447.2l5.4 0.1M386.3 413.7l3.9 -0.7M384.8 391.9l6 -1.8M379.5 412.9l3.2 -0.1M345.2 400l3.6 -0.6M331.1 403l6.9 0M375.9 413.3l6.7 -1.5M362.9 430.1l3.7 -1.2M382.6 434.1l5.4 0M356 419.6l4.2 -0.1M363.7 398.8l3 -0.1M372.7 445.7l5.1 -1.6M370.5 438.1l4 -0.4M355 445.2l3.5 0M334 387.1l4.6 -1.4M337.5 439.1l3.5 -0.3M363.6 402.3l3.8 -0.5M338.1 393l5.7 -1.1M363.1 383.4l6.5 -0.4M378.8 434.5l4.6 -1.5M331.4 432.7l5.7 -1.5M345.1 427.7l3.1 -0.6M353.6 401l4.2 0M361.5 417.3l3.4 0.1M366.2 414.8l6.9 -0.4M347.9 427.9l5.2 -0.7M332 435.3l4.4 0.1M349.4 448l3.2 -0.9M332.4 435.5l4.8 -0.2M368.6 381.6l4.8 -0.4M362.2 406.8l3.8 -0.7M330.4 410.2l5.7 -1.3M382 429.5l3.9 -0.6M352 413.4l6.8 -0.6M332.7 413l5.8 -0.8M385.8 433.3l6 -0.6M371.2 438.6l5.7 -0.4M343.5 442.8l5.4 -1M382.9 445.5l3 0.1M348.9 401.5l3.5 -0.6M363.2 386.1l6.6 -1.4M375.7 412.4l6.6 -1.9M373.7 394.5l5.5 -1.1M372.8 397.7l4.3 0.1M344 438.2l5.5 -1.5M341 421.1l4.4 -1M389.4 412.2l5.4 -0.9M346.5 392.2l4 -0.7M339.5 446.3l6 -1.9M389.3 428.7l4.8 -1.5M330.6 421.5l4 -0.3M328.5 417.6l4.1 -1.2M358.2 441.1l3.5 -0.7M380.7 436.1l3.2 -0.4M340.4 407.6l3.9 -0.5M379.7 437.3l6.5 0.1M328 420.5l6.3 -1.9M377.7 432l3.1 -0.8M381.4 421.5l4.9 -0.5M380.7 403.5l4.3 -1M348 422.6l3.3 0M332.6 414.9l3.7 -0.3M345.4 384.7l4.8 -1.5M373.3 424.9l3.3 -0.9M388.6 417.1l5.7 -1M375 416.6l6.1 -1.8M341.6 383.2l5 -1M369 392l5 -0.3M337.4 438l6.6 -0.2M371.5 394.9l6.6 -0.3M362.9 441.7l4.6 0.1M390.6 443.8l3 -0.1M350.2 422l6 -0.6M370.1 391l5.1 0.1M385.6 394l5.2 0.2M379 430.3l4.4 0M333 408.2l5 -1.3M382.3 405l3 -0.8M355.2 420.3l5.4 -1.7M341.4 387.3l5.1 0M387.2 415.5l3.8 -1.1M355 423.7l6 -0.3M370.7 397.6l4.5 -0.7M359.9 398.4l4.8 -0.6M329.3 436.3l6.2 -0.7M376.4 429.6l4.5 0.1M353.3 380.5l5.3 -0.4M366.1 448.3l3.8 -0.9M376.9 435.5l3.2 -0.5M352 436.5l4.8 -0.7M352.8 423l5.7 -0.6M385.1 431.5l3.9 -0.7M379.7 433.9l3.8 0M383.9 441.2l4.1 -1.2M369.8 390l4.1 -0.1M373.2 400.6l3.7 -0.9M360 429.2l5.6 -1.4M350.3 424.5l3.7 -0.7M337 384.1l4.6 -0.3M336.6 440l3.1 -0.3M375.4 420.8l4.9 -0.8M390.7 405.7l5.5 -0.5M351.4 403.7l5.5 -0.3M357.2 415.7l6 -1.4M329.4 424l3.8 -0.6M366.3 420.3l4.8 -1.4M338.8 434.8l4.2 -0.9M342.5 383.7l3.5 -0.9M369.5 438l3.4 -0.8M362.3 388.4l6 -1M341.8 427.8l3.3 -0.4M344.2 421.3l3.7 -1.1M365.3 436l5.6 -0.7M327.3 401.2l6.5 -1.3M351.2 434.1l4.8 -1.5M387 432.7l3.7 -0.4M388.1 385.4l6.1 0.1M375.4 416.6l4.2 -1.1M370.8 425.2l6.1 -1.1M331.5 400.1l4.1 -1.2M380.3 431.8l4.1 -1.1M335.5 425.3l3.9 -0.6M351.9 439.3l5.7 -1M369.2 412.5l4.4 -0.5M341 414.1l4.2 -0.9M340.4 442.4l3.7 -0.6M329.9 394.6l4.3 0M371.6 395.9l4.8 -0.4M376.6 416.3l4.1 -0.8M366.8 436.7l4.9 -0.4M349.9 440.7l3.6 -0.1M371.4 432.8l6.8 -0.5M385.9 396.7l4.3 0.1M352.9 447l4.4 -1.2M368.3 399.2l6 -1.4M367.2 430.7l6.5 -0.2M386.5 435.9l5 0.1M373.5 414.9l5.6 0.1M356.7 425.5l3.4 -0.7M353.9 389.8l3.2 -1M357.3 432.7l5.3 -1.6M335 415.2l4.7 -1M374.1 408.6l5.8 -1M334.5 403.9l6.3 -0.4M392.5 397.7l4.2 -0.4M374.2 438.1l4.2 -1.2M388.7 404.3l6.2 -0.6M346.3 433.9l4.2 -1.3M339.5 403.9l3 -0.7M380.4 392.1l5.2 -0.6M384.2 437.8l3.7 -0.4M378.1 386.6l4.2 0M343.6 395.3l6.1 -1.1M384.4 430.9l4 -0.2M348 401.2l6.4 -1.1M392.4 385.6l6.7 0.2M358.5 427.2l3.7 -0.2M367.3 446.8l6.6 0M332.3 429.1l6.6 -1M338 418.2l6 -1.7M375.9 382.5l3.5 -0.7M368.7 423.8l6.5 -2M391.5 410.2l4.4 -0.5M367 407.6l5.9 -1M340.4 400.4l3.9 -0.2M332.3 442.6l4.5 -1.2M348.2 398.3l5.1 -1M336.1 416.7l3.2 -1M341.3 396.7l4.1 -0.8M382.2 425.2l6 -0.9M372.3 401.7l6 -0.6M361.9 431.5l6.7 -0.6M344.9 425.6l5.1 0.1M387.7 386.6l4.1 -0.3M377.5 409.1l4 -0.5M344.2 439.1l5.5 -0.5M335.7 399.9l3.8 0.1M362.9 427.7l5.2 -0.7M391.7 433.7l4.6 -1.1M355.7 426.7l4 -0.3M373.7 410l4 -1.3M351.4 393.7l6.9 -0.6M389 422.9l5 -0.1M366.6 441.4l4.3 -1.3M353.1 403.5l3.2 -0.5M373 445.5l3.6 -0.9M349.1 434.9l5.9 -1.4M338.6 420.6l5.7 -0.4M333.1 445.1l4.9 -0.1M384.5 421.4l4.4 -1.2M382.4 412.1l3.5 -1.1M339.9 420.1l4.8 -0.4M353.9 446l5.6 -1.1M341.8 415.4l3.3 -0.9M349.5 388.3l5.5 -1M364.6 434.3l3.3 -0.5M374.6 407.5l6.9 -0.4M362.1 397.5l4.9 -0.9M348.3 387.4l5.5 -1M380.8 431.8l6.2 0M354.2 424.7l5.9 -1.8M374.7 398.3l4 -0.6M379.1 409.2l6.7 -0.3M378 406.5l6.7 -1.3M386.7 393.5l6 -1.1M376.5 399.8l6.8 -1.1M332.7 398.9l6.6 -0.5M389.1 412.1l6.9 -0.3M348.8 396.1l6 -1.4M337.3 417.2l3.8 0M369 416l5.1 0.1M360.6 441.5l3.6 -0.2M379.6 407.1l6.9 0.2M360.6 408.8l4 -1M342 391.5l3.2 -0.2M366.9 420.8l5.3 -0.3M388.6 399.9l5.1 -1.5M344.9 447.2l5.8 0M382.8 396.9l4.5 -0.7M350 405.8l5.6 -0.8M328.3 417.6l6.6 -1.8M363.6 420.7l5.7 -1.2M374.8 442.1l4.1 -0.5M369.4 383.5l4.2 -0.2M375.7 389.2l3.7 -0.4M330.1 398l4.6 -0.1M362.5 433.7l4 0.1M373.6 433.2l4.4 -0.2M358.9 433.9l4.8 -1.1M369.1 438.5l5.5 -1.3M341.6 391.1l5.5 -0.8M369.8 445.1l5 -1.3M359.9 397.6l3.6 0M344.4 383l5.6 -0.5M342.9 442.9l3.8 -0.4M389 438.7l6.3 -1.3M335.2 404.2l6.7 -1.1M346.7 407l6.1 -1.5M339.6 438.1l5.1 -1M385.1 398.5l5.5 -0.7M366 407.9l4.2 -0.4M337.6 380.9l5.3 -0.5M380.4 390.9l4.8 -0.4M362.3 436.9l4.7 -0.6M370.1 390.1l5.1 0M329.3 412.7l6.9 0.1M356.1 398l4.1 0.1M328.4 397.2l5.6 -0.9M332.2 402.9l4.4 -0.3M338.7 428.8l5.7 -0.9M358.5 435.7l6.8 -0.9M381 429.5l5.4 -0.8M351.7 385.2l6.2 0M377.2 438.8l6.9 -0.8M359.1 447.3l4.3 -1.3M364.6 436.1l6.1 -0.8M352 426.1l5.4 -0.2M329.4 425.3l4 -1.3M334.7 432.7l5.7 -1.5M331.4 394.3l6.7 -0.5M332 422.3l5.4 -1M332 382.1l6.3 -1.9M359.6 422.4l5.5 -1.5M386.3 393.6l6.4 -0.3M393.3 418.7l4.4 -0.4M378.8 401.4l5.5 -0.5M393.5 434l3.6 -1M351.6 407.1l4 -0.3M364.2 411.3l5.5 -1.1M355.5 447.5l6.4 -1.8M369.4 412l5.4 -1.6M380.5 404l5.1 -0.3M333.5 438.9l4.8 -1M378 439.6l4.5 -0.1M383.6 390.7l4.7 -0.6M384 429.4l6.2 -0.5M350.8 410.8l4.2 -1.2M340 430.6l6.4 -1.8M367.3 411l4.6 -1.3M365 389.7l4.4 0.1M356.7 399.8l4 -0.8M383.7 385.4l5.3 -1M360 402.3l3.2 -0.5M347.9 409.7l4.7 -0.2M354.9 425l5.1 -1.1M340.1 422.3l5.6 -0.7M385.8 434l3.9 0.1M390.6 410.7l4.7 -0.9M388.7 445l4.2 -0.1M334.9 394.1l5.8 -0.5M332.2 380.2l4.3 0.1M329.7 412.5l6 -1.7M363.2 421.6l3.5 0M341.8 433.7l4.7 -0.5M350.1 422.1l6.8 0.1M389 446.9l3 -0.8M382.3 397.1l4.8 -0.6M392.4 410.6l3.7 -1M386.3 436.4l6.6 -1.8M351.3 429.8l6.4 -0.8M359.1 382.4l6.4 -0.8M354.9 436.5l4.4 -0.7M350.3 396l6.8 -1M366.8 432.8l4.3 -1.1M365.2 407.1l6.2 -2M336.4 424.7l4.2 0.1M344.4 403l6.9 -0.9M337.5 396.7l4.1 0M372.5 429.6l3 -1M377.7 442.6l4.9 -0.3M334.6 416.4l4.1 -1.2M330.3 415.3l4.1 -0.6M342.9 385l3.3 -1.1M392.4 382.4l4.8 -0.3M365.7 400.6l6.2 0.2M354.9 409.3l3.6 0M385.1 422.4l5.1 -0.6M366.8 386.7l4.3 -1M342.3 386l4.7 -0.3M376.9 406.6l4 0.1M362.1 408.8l3.5 -0.1M364.1 411l3.9 -0.4M362.5 447.9l6.6 -1.9M391.4 411.2l4.8 -1.4M390.5 380.2l6.1 -0.3M336 421.4l3.3 -0.9M361.9 400.5l5.1 -0.4M342.2 443.5l5.9 -1.9M346.2 441.4l4.8 -0.5M340.8 438.3l6.8 -0.1M366.1 442.9l5.7 0M349.3 421.7l6.1 -1.2M363.5 439l6 0M341.3 403.4l4.2 -1.2M338.7 400.5l3.5 -0.1M388.6 442.8l3.9 -0.2M345.8 411.4l6.7 -0.7M329.8 385.9l3.1 -0.1M386.5 392.6l4.9 0.1M367.7 436.2l4.7 -0.1M358.3 434.1l4.1 -0.9M385.3 440l4.4 -0.1M351 387.1l3.2 -0.1M338.6 382.2l6.9 -1.1M331.8 397.8l5.7 -1.3M350.2 392.1l6.6 -0.5M337.6 384.9l6.6 -1.2M330.9 389.7l6 -0.5M358.1 383.3l3.4 -0.4M333.2 383.8l3.4 0M359.1 436.4l4.4 -1.1M379.9 419l5 -1.3M394.1 435.6l3.1 0.1M330.6 415.2l6.5 -2.1M346.9 417.4l4.7 0M377.6 391l5.8 -0.9M358.7 392.6l4.4 -0.1M388.5 401.4l3.5 -0.1M372.2 444.9l4.6 -0.4M392.8 445.8l3.9 -0.1M334.3 422.1l3.1 -0.9M363.6 444.9l6.1 -1.4M391.7 444.5l3.4 -1M391.2 446.1l3.6 -0.9M375.3 387.1l3.5 -1M366.4 405.3l3.6 -0.1M386.5 434l5.3 -1M372.3 388.3l4.8 0.1M362 438.6l3.9 -1.2M329.2 430.8l5.7 -1.4M375.1 448.3l4.5 -1.2M379.3 410.9l5.5 -1.4M380.7 410.7l3.5 -0.6M353.4 437.8l6.7 -1.3M350.3 412.5l6.6 -0.3M384 409l3.5 -0.5M363.5 436.2l4.1 -1M330.9 411.4l6.9 -1M371.9 443l4.6 -1.1M373.6 385.4l5.5 -0.6M330 393.9l3.6 -0.1M368.9 409.2l6.4 -1.2M353.6 439.9l5.2 -0.1M334.7 402.7l4.1 0.1M366.1 393.8l5.7 -0.3M385.8 421.2l6 -1.7M365.9 444.4l4.3 -0.6M356.5 418.4l5.5 -0.4M383.8 417.2l6.2 -1.5M373.8 391.2l6.3 -1M365.1 388.3l5.9 -0.1M340.4 427.2l5.3 -0.1M389.9 417.4l5.4 -1.7M381.4 442.5l6.8 -0.3M381.3 412.7l3.5 -1.1M329.9 443l6.6 -0.2M379.7 411l3.1 -0.4M338.5 407.8l4.1 -1.2" stroke="#8a7262" stroke-width="0.55" fill="none"/>
<path d="M389.9 390.6l6.7 -2.1M340 388.4l4.4 -0.4M386.6 395.7l4.3 0.1M366.3 443.6l6.7 -0.5M374.1 383.3l5.4 0M347.8 393l5.3 -0.1M389.3 432.6l5.3 0.1M372.8 422.4l6.7 -1.5M347.8 433.1l5.6 0.1M337.5 436.3l3.7 -0.3M330 417.2l6.4 -2M360.6 415.7l5.6 -1M387.9 401.4l5.2 -1M347.3 420.8l4.7 -0.6M371.1 416.9l6.7 -2M350.2 409.9l6.6 -1.2M391.2 415.1l3.3 -0.6M386.9 391.9l4.4 -0.5M350.1 404.7l3.1 -0.8M363.4 434.3l3.8 -0.3M372.7 384.1l6.2 -1.1M388.3 411.4l5 -0.1M361.6 419.7l6 0.2M359 429.7l4.4 -0.4M378.4 436.1l6.7 -0.7M329 414.2l4.3 -0.4M339.3 427.4l4 -0.7M331.1 446.1l3.4 -0.7M342.4 397.4l3.7 0M346.3 386.9l3.8 -0.6M349.5 429.9l6.3 0.1M331 405.7l3.1 -0.1M340.5 413.9l5.9 -1.1M375.5 412l3.8 -0.9M345.8 384.6l3.6 -0.3M386.3 424.6l4.8 -1.4M368.3 383.1l3.1 -0.4M377.1 380.6l6.9 -0.6M384.1 396.1l3.5 -0.5M351.1 438.8l3 -0.1M352.1 424.3l6 -1.6M385.8 418.1l6.3 -1.2M362.1 393.2l3.6 -0.8M382.2 414.9l6.3 -0.4M391.1 393.5l6.4 -1.1M378.4 406.5l3.8 -0.3M338.7 383.8l3.9 -0.7M361.6 446.6l5.1 -1.3M384.1 421.1l6 -0.8M328.3 444.7l6.2 -0.5M382.7 387.2l3.6 -1.1M361 443.8l4.6 0M367.7 431l6.7 -1.4M389.1 429.4l6.2 0M371.1 402.3l3.9 -0.8M332.3 443.3l3 -0.6M348.7 387.4l4.3 -0.7M339.4 412.8l4.4 -0.7M380.4 401.3l6.5 -0.8M390 406.5l6.5 -2M362 395.3l3.8 -1.1M347.2 390.5l6.7 -2M381.1 388.2l6.1 -0.9M361.1 385.1l4.4 -0.9M387.6 420.1l5.5 -0.8M330.4 426.8l5.7 -0.2M352.2 400l3.2 -1M338.3 410.9l3.9 -0.2M359.6 423.4l3.1 -0.3M388.8 420.2l3.9 -0.8M373.2 443.9l4.5 -0.9M363.5 392.5l6.6 -1.1M363.6 436.7l6.3 -1.4M378.8 395.7l5.7 -0.7M365.3 421.5l5.1 -1.2M350 434.9l6.8 -1.3M366.6 395.8l3.5 -0.6M376.5 383.3l4.2 -0.4M378.4 388.8l5.8 -0.4M342.6 389.4l5.5 -1M344.1 381.1l6.2 -1M338.6 444.2l3.6 -0.5M334.8 405.5l3.7 -0.5M333.2 414.6l4.7 -1.1M357.8 427.6l3.9 -0.4M340.2 438.9l3.3 -1M331.3 436.6l6.6 -0.8M368.4 403.3l5.9 -1M343.7 434.9l3.1 -0.5M349.5 419l6.4 -1.7M388.2 414.8l5.8 0M362.2 390.7l6.7 0.1M357.2 406.9l5.3 -1.6M383.8 407l5.3 -1.2M379.6 392.1l5.4 -1.2M329.6 436.2l6.2 -1.3M358.4 391.8l3.3 -1M344.4 431.6l5.5 -0.2M348 425.3l4.5 -0.3M333.6 412.3l3.6 -0.9M353.7 385.1l4.1 0M386.2 431.1l6.3 -2M381 415.7l4.9 0M328.5 390.9l6.3 -1.3M383.1 388.3l3.4 -0.7M343.3 404.2l3.5 -0.6M370.9 396.5l4.9 0M356.4 432.5l4 -0.8M335.2 400.7l5.8 -1.4M351.8 428.4l3.2 -0.7M348.2 406.7l3.8 0M340.6 391.4l6.7 -1.5M389.1 396.2l4.7 -1.4M365.6 388.1l6 -1M327 429.1l6.1 -0.5M360.4 411.8l3.5 -0.5M362.4 396.6l3.1 -0.6M338.5 384l3.9 -0.5M365 414.6l3.4 -0.8M366.8 426.2l5 -0.4M365.2 382.3l6.1 -1.3M351.8 387.6l6.2 -1.1M333.3 388.1l6.4 -0.9M354.1 396.9l3.4 -0.2M346.3 420.7l6.4 -0.1M349.8 398.4l3.4 -0.6M346 432.1l4.1 0.1M331.7 430.2l6.2 0.1M354.3 430.7l6 -0.3M360.6 448l3.9 -0.2M355.3 386.6l6.2 -1.1M360.4 415.7l3.3 -0.1M350.5 413.3l5.7 -0.8M389 434.9l5.7 -0.7M362.9 447.3l5.3 -0.6M353.9 408.6l4.5 -0.2M386.7 429.4l5.8 0.1M364.9 405.8l5.4 -1.7M378 429.3l3.1 -0.2M372 399.6l6.4 -1.1M354.9 412.3l3.6 -1.1M342.3 394.8l3.2 -0.4M332.4 386.1l6.9 -0.4M376.5 415.8l5.9 -1.6M335.4 385.7l6.4 -0.9M347.1 439.4l6.7 -1.4M375.6 438.7l6.3 0.2M340 415.4l5.8 -0.7M343.3 419.6l3.7 -0.8M357.5 434.9l4.4 -0.5" stroke="#f3e8de" stroke-width="0.6" fill="none"/>
</g>
<circle cx="346.5" cy="373.8" r="8.6" fill="#efe4d9"/>
<path d="M356.1 374L353.6 374.6M356 375.5L353 374.7M356.1 375L353.3 374.2M355.7 376.6L352.6 375.3M355.8 376.3L352.9 376.4M356 375.4L352.7 375.5M355.3 377.5L352.1 377.4M354.8 378.7L353.1 377M354.9 378.6L352.8 377M354.1 379.8L352.3 378.1M354.6 379.1L352 376.6M354.1 379.7L352 378.7M353.5 380.4L350.7 378.9M353.1 380.8L350.3 378.8M353.8 380.2L351.3 378.1M352 381.8L350 379.5M352.6 381.3L351.1 379.3M351.5 382.1L350.4 379.4M350.3 382.7L349.3 379.3M351.3 382.1L349.5 380.4M350.7 382.4L350.3 378.9M348.4 383.3L348.2 380.8M349.3 383L348.9 379.5M348.8 383.2L347.7 380.2M347.2 383.4L346.1 379.9M347.2 383.4L347.4 380.1M346.9 383.4L347.8 380.6M345.7 383.4L346.4 380.9M346.2 383.5L346 379.9M344.6 383.3L345.7 380.7M344 383.1L344.1 379.8M344.9 383.3L344.8 381M344.1 383.1L344.2 380.7M342.5 382.6L343.2 380.2M343.2 382.9L343.6 379.6M341.5 382.1L343.4 379.6M340.5 381.2L343 379.7M341.1 381.6L341.7 378.3M340.7 381.5L343.1 378.8M340 380.9L341.5 378.1M339.9 380.7L341.3 377.6M339.8 380.8L341.7 378.3M338.2 378.7L341.7 377.7M338.5 379.2L340.9 378.4M338.3 378.8L341.6 377.8M338 378.4L340.6 376.6M337.7 377.8L340.3 375.8M337.9 378.2L340.4 376.2M337.5 377.2L339.9 375.5M337.1 375.9L340.7 376M337.3 376.6L340.7 376.4M336.9 374L339.2 374.3M336.9 375.3L340.3 374.5M336.9 374.4L339.4 374.9M336.8 373.3L340.3 373.7M336.8 373.4L340 373.8M336.8 373.9L340.2 373.5M337.1 371.7L340.1 373.2M337.1 371.4L339.6 372.1M337.2 371.2L340.4 372M337.7 370L340.9 370.6M337.7 369.8L340.1 371.7M337.9 369.4L341.1 370.7M338.7 368.1L340.8 369.3M338.7 368.3L340.4 371.3M338.6 368.2L341.6 369.8M339.8 366.8L341.7 368.3M339.3 367.5L342.3 369.1M339.7 367L340.8 369.2M340.5 366.2L343 368.7M341.8 365.4L342.5 367.9M341.7 365.4L343.2 368.6M343.5 364.7L343.6 368.2M342.5 365.1L343.1 368.5M342.7 365L342.9 367.5M344.5 364.4L344.2 367.5M344.2 364.4L344.5 367.1M344.3 364.4L344.5 367.1M346.6 364.1L346.2 366.7M345.6 364.2L346.7 367.1M345.6 364.2L346.4 366.8M347.3 364.3L348 366.8M347.6 364.2L347.9 367.9M347.5 364.2L346.6 367.1M348 364.2L347.9 367.4M350.1 364.9L348.4 367.2M348.3 364.4L348.8 367.6M350 364.8L349.2 367.4M349.6 364.7L349.4 367.6M351.1 365.3L348.6 368M352.4 366.2L349.8 368.7M351.7 365.8L351 368.6M352.8 366.5L350.1 368.7M353.9 367.7L350.7 368.9M353.3 367.1L352.1 370.3M353.7 367.4L351.6 369.6M353.9 367.8L352.5 370M354.1 368L352.3 370.6M355 369.2L351.6 370.2M355.3 369.7L352.7 371M355.3 370.1L351.7 370.3M355.5 370.2L352.8 371.5M355.7 371.2L353.4 372.6M355.9 371.7L353.5 372.9M355.8 371.3L353.5 371.9M355.9 371.9L352.8 373.5M356.2 373.8L353.5 373.3M356.1 373L352.7 374.3" stroke="#e6d8cb" stroke-width="0.7" fill="none"/>
<path d="M404.8 373.9L402.5 374.2M404.8 373.9L401.6 373.1M404.8 374.5L402.4 374.5M404.7 375.1L402.2 374.4M404.7 375.2L402.3 374.2M404.5 375.9L402 375M403.6 378L401.8 376.5M404 377.1L401.2 376.7M403.8 377.4L401.1 377.1M403.4 378.4L400.7 376.1M402.8 379.1L400.2 377.2M402.7 379.4L400.4 377.6M401.3 380.6L399.9 377.8M402.3 379.6L399.2 378.4M402.6 379.3L400.2 378.2M401.3 380.7L399.5 379M400.7 381.1L398.9 379M400.6 381.1L400 378.5M399.5 381.8L397.4 379.5M399.1 382L397.8 379.9M398.6 382.3L397.4 379.3M397.1 382.7L397 379.2M398.3 382.4L397.3 380.2M397.4 382.5L397.8 379.9M395.3 382.9L395.4 380.1M396.2 382.8L395.8 379.3M396.3 382.8L396.2 380.2M394.2 382.7L395.5 379.9M393.9 382.7L395.2 380.4M394.9 382.8L394.2 380.5M392.9 382.5L394.5 379.8M393 382.6L393.3 380.2M391.5 382.1L393.4 379.7M390.4 381.6L391.8 379.7M391.2 382L391.9 379M391 381.9L391.9 379.6M389.4 380.8L392.3 378.7M390.3 381.5L391.3 378.7M389.4 380.9L390.9 377.7M388.6 380.2L390.1 377.4M387.9 379.5L390.5 377.9M388.5 380.2L389.9 378.3M387.5 378.9L390.9 377.9M387.4 378.8L388.9 376.5M387.4 378.7L389.4 375.7M386.3 377L388.7 376.5M386.3 377L388.5 375.9M386.3 376.8L388.9 376.5M385.9 375.8L388.4 375.2M385.9 375.6L388.2 374.5M385.7 375.1L388.8 374.1M385.6 374.4L388 373.6M385.7 374.6L388.6 373.6M385.6 374.3L388 374.3M385.6 372.3L388.9 373.7M385.5 372.8L388.1 373.4M385.7 372.2L387.9 373.3M386 370.3L388.6 371.7M385.9 370.8L388.5 370.6M385.8 370.8L388.6 371.5M387 368.3L389.1 370.8M386.1 369.8L388.9 370.7M386.5 369L389.1 369.5M387.1 368L389.7 369.1M387 368L390.1 369.9M387.3 367.8L390.3 368.4M389.4 365.5L390.7 368.8M388.5 366.3L391.6 367.9M388.3 366.5L390.3 368.1M389.7 365.4L390.2 368.2M389.3 365.5L391.4 368.2M390.2 365.1L390.8 368.7M390.8 364.7L393 367.1M390.9 364.5L392.3 367.9M390.7 364.8L393.2 367M393.3 363.8L393.1 366.8M391.7 364.2L393.9 367.2M392.5 363.9L392.8 367M394.5 363.6L393.9 366M394.2 363.6L394.1 366.7M394.3 363.6L394.5 366.7M396.9 363.7L396.2 366.2M395.9 363.6L395.2 366.3M396.1 363.6L395.3 366.2M397.7 364L395.8 366.3M398 364L398 366.4M397.8 364L395.8 367M399.3 364.5L399 367.3M399.8 364.7L398.2 367.5M399.3 364.6L399.3 367.8M401.3 365.7L399.4 367.7M400.8 365.4L400.1 367.8M400 364.8L398.8 367.6M401.8 366.2L400.2 369.1M402.2 366.5L400.3 368.4M402 366.5L400.6 369.6M402.6 367.1L401.2 369.5M403.1 367.7L401 370.1M403.3 367.9L400.9 369.8M403.8 369L401.4 369.2M404.3 370.1L401.3 370.5M403.7 368.8L401.9 370.5M404.5 370.8L401 370.8M404.5 370.8L401.4 372.6M404.5 370.7L402.1 370.8M404.9 373.1L402 373M404.8 372.3L401.2 371.5M404.9 373.5L401.5 372.7" stroke="#e6d8cb" stroke-width="0.7" fill="none"/>
<circle cx="395.2" cy="373.2" r="8.6" fill="#efe4d9"/>
<ellipse cx="354" cy="459.5" rx="11.8" ry="13.4" fill="#ead9ca"/>
<ellipse cx="354" cy="459.5" rx="10" ry="11.8" fill="#262223"/>
<circle cx="354.8" cy="455.3" r="2" fill="#cfcfcf"/>
<ellipse cx="387" cy="455.5" rx="7.8" ry="12" transform="rotate(-18 387 455.5)" fill="#ead9ca"/>
<ellipse cx="387" cy="455.5" rx="6.2" ry="10.6" transform="rotate(-18 387 455.5)" fill="#232021"/>
<ellipse cx="386" cy="450" rx="1.5" ry="3.4" transform="rotate(-25 386 450)" fill="#d8d8d8"/>
<path d="M342 486Q349 484.5 353.5 480Q357 487.5 366 489.5Q376 491.5 385 490.6" fill="none" stroke="#2e2a2a" stroke-width="2.6" stroke-linecap="round"/>
<path d="M362.5 517L367.5 546" stroke="#9a9a9a" stroke-width="0.7"/>
<clipPath id="shellclip"><path d="M199 517.6L196.4 519.1 193.7 520.6 191 522 188.3 523.4 185.5 524.6 182.7 525.8 179.9 526.8 177 527.8 174.1 528.6 171.2 529.4 168.2 530 165.2 530.5 162.3 530.9 159.3 531.2 156.3 531.3 153.3 531.2 150.3 531.1 147.3 530.8 144.4 530.4 141.5 529.8 138.6 529.2 135.7 528.5 132.9 527.8 130.1 527 127.3 526.2 124.5 525.3 121.8 524.4 119.1 523.4 116.4 522.3 113.7 521.1 111.1 519.9 108.6 518.5 106.1 517 103.6 515.5 101.2 513.9 98.8 512.2 96.6 510.4 94.3 508.5 92.2 506.6 90.1 504.6 88.1 502.5 86.2 500.4 84.3 498.2 82.5 495.9 80.7 493.6 79 491.2 77.4 488.8 75.8 486.4 74.3 483.9 72.9 481.3 71.5 478.7 70.2 476.1 69.1 473.4 67.9 470.6 66.9 467.8 66 465 65.2 462.2 64.4 459.3 63.8 456.3 63.2 453.4 62.8 450.4 62.4 447.4 62.2 444.4 62.1 441.4 62 438.3 62 435.2 62.2 432.2 62.4 429.1 62.7 426 63.1 422.9 63.6 419.9 64.2 416.8 65 413.7 65.8 410.7 66.7 407.6 67.7 404.6 68.8 401.6 70.1 398.6 71.4 395.6 72.8 392.7 74.4 389.8 76 387 77.8 384.2 79.7 381.4 81.6 378.7 83.7 376.1 85.9 373.5 88.1 371 90.5 368.5 92.9 366.1 95.5 363.8 98.1 361.5 100.8 359.3 103.6 357.1 106.4 355 109.4 353 112.4 351 115.5 349.1 118.6 347.1 121.8 345.2 125.1 343.2 128.5 341.4 132 339.6 135.5 337.9 139.2 336.5 143 335.2 146.9 334.3 150.8 333.6 154.7 333.2 158.7 333 162.7 333 166.7 333.1 170.7 333.4 174.7 333.7 178.8 334.1 182.9 334.4 187.1 334.7 191.4 334.9 195.8 335.2 200.2 335.7 204.6 336.3 209.1 337.1 213.6 338 218.2 339.1 222.7 340.4 227.1 342 231.5 343.8 235.8 345.8 240 348.1 244.2 350.5 248.4 353 252.6 355.6 256.8 358.5 260.8 361.5 264.7 364.7 268.4 368.2 271.8 372 275.1 375.9 278.2 380 281.1 384.2 283.9 388.6 286.5 393 289 397.6 291.3 402.3 293.4 407.1 295.3 412.1 296.9 417.1 298.3 422.2 299.6 427.4 300.5 433 305 434.5 312.6 438.3 314.4 443 314 447.3 308.8 460.2 298.2 475 283.6 489.5 266.8 501 250 508.3 231.2 512.5 212.6 515.6 200.3 518.5Z"/></clipPath>
<g clip-path="url(#shellclip)" stroke-linecap="butt" fill="none">
<path d="M199 517.6L196.4 519.1 193.7 520.6 191 522 188.3 523.4 185.5 524.6 182.7 525.8 179.9 526.8 177 527.8 174.1 528.6 171.2 529.4 168.2 530 165.2 530.5 162.3 530.9 159.3 531.2 156.3 531.3 153.3 531.2 150.3 531.1 147.3 530.8 144.4 530.4 141.5 529.8 138.6 529.2 135.7 528.5 132.9 527.8 130.1 527 127.3 526.2 124.5 525.3 121.8 524.4 119.1 523.4 116.4 522.3 113.7 521.1 111.1 519.9 108.6 518.5 106.1 517 103.6 515.5 101.2 513.9 98.8 512.2 96.6 510.4 94.3 508.5 92.2 506.6 90.1 504.6 88.1 502.5 86.2 500.4 84.3 498.2 82.5 495.9 80.7 493.6 79 491.2 77.4 488.8 75.8 486.4 74.3 483.9 72.9 481.3 71.5 478.7 70.2 476.1 69.1 473.4 67.9 470.6 66.9 467.8 66 465 65.2 462.2 64.4 459.3 63.8 456.3 63.2 453.4 62.8 450.4 62.4 447.4 62.2 444.4 62.1 441.4 62 438.3 62 435.2 62.2 432.2 62.4 429.1 62.7 426 63.1 422.9 63.6 419.9 64.2 416.8 65 413.7 65.8 410.7 66.7 407.6 67.7 404.6 68.8 401.6 70.1 398.6 71.4 395.6 72.8 392.7 74.4 389.8 76 387 77.8 384.2 79.7 381.4 81.6 378.7 83.7 376.1 85.9 373.5 88.1 371 90.5 368.5 92.9 366.1 95.5 363.8 98.1 361.5 100.8 359.3 103.6 357.1 106.4 355 109.4 353 112.4 351 115.5 349.1 118.6 347.1 121.8 345.2 125.1 343.2 128.5 341.4 132 339.6 135.5 337.9 139.2 336.5 143 335.2 146.9 334.3 150.8 333.6 154.7 333.2 158.7 333 162.7 333 166.7 333.1 170.7 333.4 174.7 333.7 178.8 334.1 182.9 334.4 187.1 334.7 191.4 334.9 195.8 335.2 200.2 335.7 204.6 336.3 209.1 337.1 213.6 338 218.2 339.1 222.7 340.4 227.1 342 231.5 343.8 235.8 345.8 240 348.1 244.2 350.5 248.4 353 252.6 355.6 256.8 358.5 260.8 361.5 264.7 364.7 268.4 368.2 271.8 372 275.1 375.9 278.2 380 281.1 384.2 283.9 388.6 286.5 393 289 397.6 291.3 402.3 293.4 407.1 295.3 412.1 296.9 417.1 298.3 422.2 299.6 427.4 300.5 433 305 434.5 312.6 438.3 314.4 443 314 447.3 308.8 460.2 298.2 475 283.6 489.5 266.8 501 250 508.3 231.2 512.5 212.6 515.6 200.3 518.5Z" fill="#0a0605"/>
<path d="M147.6 446.3L147.5 446.4M147.6 445.6L147.4 445.6M147.9 445L147.8 444.8M148.5 444.6L148.5 444.3M149.3 444.7L149.4 444.5M149.9 445.1L150.2 444.9M150.1 445.8L150.5 445.8M150.3 446.8L150.8 447.1M149.8 447.9L150 448.3M148.8 448.5L148.7 449.2M147.6 448.6L147.4 449M146.5 448.2L146.2 448.6M145.7 447.5L145.1 447.8M145.1 446.5L144 446.7M144.9 445.4L144.5 445.4M145 444.3L144.3 444M145.3 443.2L144.9 442.8M146 442.3L145.5 441.7M146.8 441.6L146.7 441.2M147.8 441.1L147.8 440.6M148.9 440.8L148.9 440.1M150 440.8L150.2 440.2M151.1 441L151.6 440M152.2 441.5L152.3 441.2M153 442.1L153.7 441.6M153.8 442.9L154.4 442.6M154.4 443.8L155.1 443.7M154.9 444.9L156 444.7M155.1 446L155.8 446M155.3 447.1L155.9 447.3M155.3 448.3L155.9 448.5M155.1 449.5L156.1 449.9M154.8 450.6L155.8 451.5M154.3 451.6L155.1 452.5M153.6 452.7L154 453M153 453.5L153.2 454.4M151.9 454.4L152.5 455.2M151.1 455L151.1 455.4M150 455.4L150.1 456.3M148.8 455.8L149 457.5M147.7 455.9L147.7 457.4M146.6 456L146.5 456.9M145.4 455.9L145.3 456.6M144.3 455.7L144.1 456.5M143.3 455.4L142.4 456.9M142.2 455L141.8 455.6M141.2 454.4L141 454.8M140.3 453.8L139.6 454.5M139.4 453.1L138.8 453.5M138.6 452.1L137.5 453.1M137.9 451.4L136.7 451.9M137.3 450.4L136.5 450.7M136.8 449.4L135.5 449.8M136.4 448.4L135.5 448.4M136.1 447.1L134.8 447.5M135.9 446.1L134.4 446.2M135.8 445L135.1 445M135.8 443.8L133.7 443.7M135.9 442.9L135 442.4M136.2 441.6L135.2 441.5M136.5 440.5L134.7 440M136.8 439.5L135.9 439M137.3 438.5L135.6 437.5M137.8 437.7L137.1 436.8M138.5 436.6L137.4 435.7M139.3 435.7L138.4 435.2M139.9 435L139.3 434M140.8 434.3L140.4 433.5M141.6 433.7L140.7 431.5M142.8 432.9L141.7 431.4M143.6 432.5L143.6 431.8M144.8 432L144.1 430.6M145.6 431.7L145.6 430.5M146.8 431.4L146.8 430.3M147.9 431.2L147.9 429.8M149.1 431L149.1 429.8M150.3 431L150.2 429.4M151.3 431L151.6 429.4M152.5 431.2L152.5 430.6M153.4 431.3L154.1 429.9M154.4 431.6L155.6 429.6M155.6 432L156.9 429.7M156.6 432.4L157.6 431M157.8 433.1L159.1 430.5M158.6 433.5L159.6 432.3M159.5 434.1L160.5 433.2M160.3 434.8L161.7 433.7M161.2 435.7L162.8 434.2M162.1 436.6L164.2 434.6M162.7 437.4L164.8 435.9M163.3 438.1L164.3 437.9M164 439.3L164.9 438.6M164.4 440.1L167.4 439.2M165 441.3L166.3 440.6M165.3 442.2L167.7 441.7M165.7 443.3L168.5 442.8M165.9 444.2L167.4 444.4M166.1 445.6L168.9 445.2M166.3 446.7L168.2 446.5M166.4 447.6L168.9 448M166.4 448.6L168.1 449.3M166.4 449.9L168.9 450.6M166.2 451.2L168.3 451.5M166.1 452.2L169.4 453.4M165.9 453.2L169 454.8M165.6 454.4L167.1 455.1M165.2 455.6L166.7 456.1M165 456.4L166.2 457.6M164.5 457.5L166.1 459M163.8 458.7L165.4 459.7M163.2 459.7L164.6 460.5M162.7 460.6L163.6 461.4M162.2 461.4L163.2 463.1M161.4 462.3L162.3 463.8M160.4 463.3L161.4 464.2M159.7 464L160.3 464.9M158.7 464.8L159.6 465.9M158.1 465.3L158.3 466.6M156.8 466.1L157.9 467.7M156.1 466.6L156.8 469M155 467.2L155.4 468.4M154.1 467.6L154.5 470.7M153 468L153 469.5M151.9 468.4L152.1 470.7M151 468.7L150.7 470.9M149.6 468.9L149.8 472.2M148.6 469.1L148.4 470.7M147.6 469.2L147.1 470M146.2 469.3L146 471.9M145 469.2L145.1 470.5M144 469.2L143.7 470.8M142.7 469.1L142.2 472.2M141.9 469L141 471M140.8 468.7L139.7 470.9M139.5 468.4L138.6 470.8M138.7 468.2L137.4 469.7M137.2 467.6L136.7 469.6M136.3 467.2L135.8 468.4M135.4 466.8L134.6 467.9M134.5 466.4L132.7 468.1M133.2 465.6L132.3 467.3M132.5 465.2L131.6 465.9M131.6 464.5L130.3 465.5M130.6 463.8L129.1 465.1M129.9 463.1L127.3 465M129 462.3L127.8 463.1M128 461.2L127.6 462.1M127.5 460.8L126 461.2M126.8 459.9L125 460.5M126.1 459L124.8 459.2M125.3 457.7L124.3 458.6M124.7 456.7L123.7 457.7M124.2 456L122.5 456.5M123.8 455.1L121.1 455.5M123.3 454L122 454.1M122.8 452.7L119.8 453.8M122.4 451.5L120.9 452.4M122.1 450.7L119 451.2M121.8 449.6L118.7 450M121.5 448.3L120.8 448.7M121.3 447.5L118.6 447.4M121.2 446.1L118.5 446.4M121.1 445.2L119.7 445M121 444.2L118 443.5M121 443L118.9 442.5M121 441.5L118.6 441.6M121.1 440.6L119.6 440.4M121.1 439.6L118.6 438.7M121.3 438.4L118.4 437.5M121.6 437.2L120.4 437M121.9 435.9L120.4 435.9M122 435.2L120.8 434.3M122.5 433.8L120.1 433.2M122.7 433.1L121.7 432.1M123.1 432L121 430.4M123.6 431L122.2 429.7M124.1 429.9L122.6 428.6M124.5 429L122.2 426.7M125.1 428L123.4 426.1M126 426.6L123.9 425.7M126.6 425.8L124.4 424.4M127 425.2L125.7 423.4M127.8 424.2L127.2 423.4M128.6 423.3L126.9 421.5M129.3 422.5L127 419.5M130.4 421.5L128.8 420.4M130.8 421L130.4 419.6M131.6 420.3L129.9 416.6M132.9 419.3L131.3 417.5M133.8 418.7L131.7 415.7M134.6 418.1L133.6 416.3M135.8 417.4L134.5 415.9M136.7 416.9L135.1 414.3M137.4 416.5L136.5 413.4M138.5 415.9L137.5 412.9M139.3 415.5L139.1 413.6M140.5 415L139.6 411.3M141.6 414.6L141.2 412.6M142.8 414.2L142.1 412.4M143.7 413.9L143.4 410.9M145 413.6L144.5 411.8M146.3 413.4L145.4 411.2M146.8 413.2L147.3 411.3M148 413L148.3 411.6M149.1 412.9L149.5 410.9M150.2 412.7L150.8 409.6M151.3 412.7L151.9 411.5M152.6 412.6L153 410.5M153.5 412.6L154.3 411.1M154.8 412.6L155.8 409.2M156 412.7L156.8 409.4M157 412.8L157.7 411.5M158.2 412.9L159.8 408.2M159.4 413.1L160.1 411.2M160.6 413.4L162 408.9M161.5 413.5L162.5 411.7M162.8 413.9L164 410.6M163.6 414.1L165 412.3M164.8 414.5L166.7 411.3M165.9 414.8L167.1 413.1M166.9 415.2L168.8 412.8M167.9 415.6L169.4 414.1M169.4 416.4L171.2 412.5M170.2 416.8L171.4 414.7M170.9 417L172.8 415.6M172.3 418L174.6 414.4M172.9 418.3L175.3 416.2M174.2 419.2L175.5 417.1M175 419.7L178.1 416.5M175.9 420.5L178.9 417.3M176.6 420.9L178.7 419.6M177.5 421.7L180.8 419.3M178.5 422.7L179.8 421.3M179.4 423.6L182.1 420.9M180.1 424.2L183.8 421.5M181 425.3L182.6 423.4M181.5 425.8L183.4 424.9M182.3 426.9L184 425.6M182.9 427.6L186.6 425.8M183.7 428.9L187.4 426.3M184.1 429.3L188.9 427.8M184.9 430.8L188.9 428.4M185.5 431.7L187.8 430.3M185.8 432.3L188.6 431.8M186.5 433.9L190.2 431.8M186.9 434.5L191.4 433.3M187.3 435.6L191.5 434.4M187.7 436.4L189.1 436.6M188 437.3L190.2 437.7M188.5 438.8L191.8 438.2M188.8 439.7L190.2 439.8M189.1 441.1L193.2 440.3M189.3 442.2L193.8 441.5M189.5 442.8L191.5 443.4M189.7 444.6L191.9 443.8M189.9 445.3L192.9 445.4M190 446.4L194.4 446.7M190 447.8L192.5 447.5M190.1 448.4L193.4 449.3M190.1 449.7L195.2 450.6M190.1 450.8L195 451.9M190.1 451.9L193.7 453M190 452.9L191.5 453.9M189.9 454.3L195.6 455.6M189.8 455.4L193.9 456.6M189.6 456.6L192.9 457.5M189.4 457.6L192.9 458.8M189.1 459L194.6 460.3M188.8 460.1L191.2 460.4M188.6 461L193.7 463M188.2 462.3L192.5 463.5M188 463.1L192 465M187.7 463.9L189.4 465.4M187 465.6L192.1 467.2M186.5 466.6L190.7 467.9M186.2 467.5L188.8 468.5M185.8 468.2L189.8 470.8M185.2 469.5L188 470.8M184.9 470.1L190 474.2M184.1 471.4L186.5 472.7M183.3 472.5L186.5 473.9M183.1 472.9L185.2 475.3M182.3 474L186.5 477.6M181.6 475L184.1 476.9M180.9 475.9L185.1 479.6M180.4 476.5L181.3 478M179.8 477.2L181.3 480.1M178.7 478.3L180.9 480.7M177.6 479.4L181.2 482.2M176.9 480.1L178.9 481.6M176.6 480.4L179.2 485.1M175.7 481.2L177.8 485.2M174.2 482.3L177.8 485.9M173.4 482.9L175.2 484.6M173 483.2L173.2 484.7M171.5 484.2L174 486.9M170.9 484.7L172.2 487M169.9 485.3L171.5 488.2M169 485.8L169.5 487.1M168 486.4L169.6 490M167.4 486.8L167.5 489.2M165.6 487.6L168 491M164.8 488L166.3 490.9M164 488.4L164.9 491M163 488.8L164.2 492.9M161.9 489.2L162.1 490.6M160.6 489.6L161.4 491.4M159.6 489.9L160.4 492.6M158.3 490.3L159.9 494.4M157.8 490.5L157.6 492.7M156.1 490.9L157.5 494.3M155.2 491.1L156 494.6M154 491.3L154.8 493.6M152.7 491.5L153.7 493.7M151.9 491.6L152.3 494.4M150.9 491.7L150.9 494.3M150.2 491.8L149.4 496.5M148.7 491.9L148.6 493.2M147 491.9L147.9 493.7M146.7 492L145.9 494.7M145.6 492L144.7 493.8M144.6 491.9L143.4 493.8M143.4 491.9L142.3 494M142.3 491.8L140.9 495.2M141 491.6L140.3 492.9M139.5 491.4L139.1 495M138.8 491.3L137.8 493M137.3 491L136.8 493.8M136.4 490.8L135.3 494M134.9 490.4L134.5 493.7M134.5 490.4L132.5 493.6M132.9 489.9L132 493.2M132 489.6L130.5 493.1M130.5 489L130.3 491.6M129.9 488.8L128.8 490.8M128.5 488.2L127.5 491.9M127.4 487.8L126.3 491.6M127.1 487.6L124.8 490.2M125.3 486.7L124.3 490.4M125 486.6L122.9 488.9M124.1 486.1L121.5 488.6M122.4 485.1L121.1 488.5M122 484.9L119.9 486.8M120.8 484L119.7 485.7M119.5 483.1L118.6 486M119.3 483L117.5 484M118.4 482.4L116.2 483.6M117.4 481.5L114.4 484.1M116.1 480.4L114.8 482.7M115.7 480.1L113.8 481.2M114.7 479.2L113.4 480.3M113.9 478.4L110.8 481M113 477.4L110 480.4M112.5 477L109.6 478.5M111.7 476.1L108 478.4M111.1 475.4L109.7 475.3M110.3 474.5L108.8 474.5M109.5 473.4L106.4 475.1M108.8 472.6L105.6 474.1M108.2 471.7L105.6 472.5M107.6 470.9L105.6 471M106.6 469.2L105.5 470.7M106 468.3L105 469.6M105.6 467.6L104.3 468.3M105 466.4L103.4 467.7M104.5 465.7L102.7 466.3M104.1 464.9L101.9 465.1M103.3 463.1L101.6 464.9M103.1 462.6L99.3 463.9M102.5 461L100.7 462.7M102.1 460.1L98.4 462.1M101.9 459.9L100.5 459.3M101.4 458L99.2 459.3M101.2 457.5L99.4 457.4M100.7 456L98.9 456.8M100.5 455.1L98.6 455.4M100.1 453.7L98.2 454.6M99.9 453L97.9 453.1M99.7 451.4L97.9 452.3M99.5 450.7L98 450.8M99.3 449.7L97.6 449.5M99.2 448.4L96.7 448.6M99 447L96.1 447.7M98.9 445.9L96.5 446.4M98.8 445L94.7 445M98.7 444.2L97.3 443.5M98.7 443.2L96.9 442.1M98.7 441.5L95.2 441.4M98.7 440.1L95.7 440.6M98.6 439.3L96.8 439.1M98.7 438.1L96.7 438M98.6 437.4L96.8 436.3M98.8 435.6L94.4 435.4M98.8 434.9L96.3 434M99 433.3L97.2 433.6M99 432.5L95.2 431.5M99.2 431.2L94.9 430.3M99.3 430.2L96.4 429.3M99.6 428.6L97.4 428.9M99.5 428.4L98.7 427M99.9 426.8L97.7 426M100.1 425.8L97.1 424.4M100.2 425L98.4 423.2M100.6 423.5L96.6 421.5M100.9 422.6L99.2 421.2M101.3 421.2L99.1 420.2M101.4 420.4L98.9 418.2M101.9 419.1L99.5 417.6M102.3 418.1L100.5 416.7M102.6 417.1L101.3 415.6M103 416L102 414.7M103.6 414.8L102.1 413.6M103.8 414L102.2 411.7M104.4 412.8L101 409.7M105.3 411.3L103.7 411M105.6 410.6L102.7 408.1M106.4 409.2L103 407.5M107.1 408.1L103.4 406.4M107.4 407.4L106 406.5M107.7 406.7L106 404.3M108.7 405.3L106 403.6M109 404.7L107.2 402.2M110.2 403.3L107.2 401.6M110.2 402.9L109.9 401.5M111.2 401.7L108.2 398.4M112.4 400.5L108.6 397.8M112.5 400L110.9 397.4M113.4 399L111.8 397M114.2 398.1L112.5 396.1M115.1 397.3L112.1 393.6M115.4 396.7L115.1 394.8M116.1 395.9L114.4 391.4M117.8 394.6L116.2 393.9M118.2 394.1L117.1 392.2M118.9 393.4L118.2 391.3M120.3 392.4L118 389.7M121.3 391.6L118.8 388.8M121.9 391.1L120.1 387.9M122.8 390.4L122 389.1M123.2 390L123.3 387.6M124.7 389L123.7 387.4M125.3 388.5L125 386.5M126.1 388L126.1 385.1M127.4 387.3L126.5 384M128.4 386.7L128.2 385.5M130 386L128.5 384.4M130.7 385.5L129 381.1M131.4 385.1L130.8 381.9M132.6 384.5L132.1 382.6M133.3 384.2L133.5 381.5M134.8 383.6L134.1 381M136.2 383.1L134.7 380.3M136.5 382.8L136.7 380.1M138.2 382.3L137 378.4M138.9 382L138.7 379.2M140.4 381.6L139.2 377M141.2 381.3L141.1 380M142 381L142.3 377.6M143.6 380.7L142.9 376.8M144.6 380.5L144.1 375.3M145.8 380.2L145.3 375.4M147.3 380L146.2 376.7M147.7 379.8L148.1 375.4M148.7 379.7L149.5 376.6M150.7 379.5L149.7 374.9M151 379.4L151.9 374M152.3 379.3L152.8 374.8M153.4 379.2L153.9 377.5M155.1 379.2L154.6 376.9M155.4 379.1L156.6 376.8M157.2 379.2L157.2 375.8M157.8 379.1L159.2 374M159.7 379.3L159.5 374.6M160.6 379.3L160.6 377M161.1 379.3L162.5 376.5M162.5 379.4L163.9 374.7M164.4 379.7L164.3 374.3M165.4 379.8L165.8 373.9M166 379.9L167.1 376.3M166.6 379.9L169.5 374.6M169 380.5L169.1 375M169.2 380.4L170.9 376.6M170.8 380.8L171.2 377.8M171.6 380.9L172.8 378.1M172.3 381.1L174.1 379.2M174.2 381.7L174.8 378.1M175.3 382L176.4 377.1M175.6 382L177.6 379.6M177 382.5L178.6 379.4M177.8 382.6L180.2 379.8M178.7 383L181.1 381M180.3 383.6L183.5 377.4M181.9 384.3L182.3 380.8M182.1 384.3L185.3 380.1M183.9 385.2L184.6 381.9M185 385.7L185.4 382.6M185.3 385.7L189 380.7M186.6 386.4L190 380.8M187.6 386.9L191.1 381.3M189.1 387.8L189.1 385.3M189.6 388L192.3 383.9M191.1 388.9L193.4 383.2M191.8 389.3L193.2 386.3M192.4 389.6L196.9 384.2M193.2 390.2L197.4 385.8M194 390.6L196.3 389.4M194.9 391.3L198.8 388.2M196.7 392.6L197.7 389.5M197.5 393.2L202.3 386.5M198.1 393.7L202.3 388.9M198.7 394.1L202.7 390.7M199.7 394.9L202.3 392.6M200.6 395.6L205.3 391.4M201.2 396.1L206.1 392.8M202.1 396.9L204.7 395.6M203.2 398L207.4 394.1M204.1 398.8L208.5 394.7M205.2 400L208.4 395.8M206.1 400.9L210.6 395.3M206.1 400.7L209.8 399.1M207.4 402.3L211.9 397.9M208 402.9L211.5 400M209 404.1L212.2 400.3M209.7 405L211.1 402.7M210.3 405.6L216.3 400.9M211.2 406.8L213.9 403.4M211.6 407.2L214.8 405M212 407.7L216 406.2M212.6 408.4L218.2 406.6M213.6 409.9L217.2 407.7M214.5 411.3L220.4 406.7M214.5 411L217.7 411.1M215.7 413.1L218.6 410.5M216 413.4L220.2 411.8M216.9 415.1L220.4 412.1M217.5 416.1L220.7 413.3M217.8 416.5L221.5 415M218.4 417.6L223.5 415.2M218.6 417.8L222.9 417.7M219.4 419.5L226.4 416.9M220.2 421.2L222.6 418.6M220.5 421.9L223.3 420M221 423L227.6 419.8M221.5 424L230.4 420.3M221.8 424.7L228 422.7M222.4 426.4L226.1 423.7M222.6 426.4L228.2 425.5M223.1 427.6L227.1 426.8M223.4 428.5L228.7 427.9M223.8 429.6L226.8 429.5M224.3 431L231.1 429.4M224.7 432.6L230 430.4M224.9 432.7L231.3 432.4M225.2 433.7L229.9 433.9M225.6 435.5L229.4 434.4M225.8 435.6L234.1 436.1M226.1 436.9L235.5 437M226.4 438L229.1 438.8M226.8 439.9L235.6 438.6M227.2 440.9L231.9 440.2M227.5 441.8L235 441.5M227.7 442.2L230.7 443.6M227.9 443.5L237.6 444.4M228.2 445L231.6 445.2M228.3 446.4L236.8 446.1M228.5 447.8L238.4 447.1M228.7 448.4L233.2 448.7M228.9 448.8L236.8 450.9M229 451.6L238.2 450.4M229.3 451.3L239.2 453.3M229.3 453.8L237.3 452.9M229.5 454.9L235.1 454M229.6 456.1L234.8 455M229.9 456.4L233.6 457M230.1 456.8L241.2 460.1M230.1 458.8L237.1 459.7M230.3 459.4L241.5 462.4M230.4 460.5L236.2 462.7M230.5 461.7L234 463.4M230.6 463L235 464.8M230.5 464.5L240.8 466.9M230.6 465.6L235.9 467M230.6 466.6L233.5 467.8M230.3 468.8L233.8 467.9M230.8 468.3L235 471.4M230.7 469.7L235.5 472.4M230.3 471.8L235.2 472.5M230.2 473.1L241.9 475.8M230.3 473.6L234.9 475.5M229.9 475.5L235 475.8M230.1 475.5L236.8 479.2M230 476.5L234.5 479.8M229.8 477.8L236.5 481.6M229.6 478.9L239.4 484.3M229.3 480.4L233.8 482.7M228.9 481.9L235.2 484.1M228.5 483.4L232.7 483.8M228.2 484.7L235.2 486.1M227.9 485.9L234.9 487.2M228 486.4L235.8 489.9M227.5 487.9L233.3 489.4M227.7 488.2L237.3 494.1M227.7 488.7L230.2 492.3M226.4 491.5L236.7 495.1M226.4 492.1L234.3 495.8M226.4 492.6L232.7 497.2M226 493.5L232.3 498.5M225.4 494.9L231.6 499M224.9 496.1L229.5 498.9M224.2 497.6L233.5 502.3M223.6 498.7L227.5 499.6M223.9 498.5L226.6 502.3M222.6 500.6L228.2 503.1M221.9 501.9L228.9 504.7M221.6 502.5L228 506.1M221.6 502.6L228.1 509.2M221 503.5L225.3 508.6M220.2 504.5L223.6 508.5M219.1 506L224 509.4M218.4 506.8L223 510.2M217.5 507.8L221.9 510.5M217.2 508L220 511.4M215.6 509.7L223.1 514.1M216 509.2L219.8 515.2M214 511.1L220.1 514.8M213.7 511.2L217.2 514.9M212.9 511.8L215.8 515.2M211.5 512.9L217.8 518.1M210.6 513.6L214.9 516.7M209.6 514.3L214.2 517.6M209.7 513.9L212 519.2M207.9 515.4L215 522.5" stroke="#4a2a18" stroke-width="1.4"/>
<path d="M147.6 446.3L147.5 446.4M147.6 445.5L147.4 445.5M148.1 444.8L147.9 444.7M148.8 444.6L148.9 444.3M149.6 444.9L149.9 444.5M150.1 445.6L150.5 445.5M150.3 446.6L150.7 446.7M149.9 447.8L150 448.1M148.7 448.5L148.7 449M147.3 448.5L146.9 449.4M146.2 448L145.4 448.6M145.3 447L144.3 447.3M144.9 445.7L144.1 445.7M144.9 444.5L144.5 444.3M145.3 443.2L144.9 442.9M146.1 442.2L145.6 441.7M147 441.4L146.9 440.9M148.2 440.9L148.2 440.3M149.6 440.8L149.6 440.2M150.7 440.9L151.3 439.9M151.9 441.4L152.6 440.6M153 442.1L153.8 441.4M153.9 443.1L154.3 442.7M154.5 444.1L155.2 443.9M155 445.3L155.5 445.3M155.2 446.7L155.8 446.6M155.3 447.9L155.9 448.1M155.2 449.2L155.8 449.7M154.8 450.5L155.5 451.2M154.3 451.7L154.7 452.4M153.6 452.9L154.2 454.1M152.6 453.9L152.9 454.5M151.6 454.7L151.7 455.6M150.4 455.3L150.4 455.9M149.1 455.7L149.1 456.4M147.8 455.9L147.8 456.7M146.6 456L146.2 456.9M145.1 455.9L145 456.7M143.9 455.6L143.2 457.2M142.8 455.2L142.2 455.9M141.5 454.6L141 455.5M140.4 453.9L139.6 454.9M139.4 453L139 453.6M138.6 452.2L138.1 452.4M137.8 451.1L136.8 451.8M137.1 450L136.2 450.5M136.6 449L135.8 449M136.2 447.6L135.6 447.8M135.9 446.3L135.4 446.5M135.8 445.1L135.1 445.2M135.8 443.7L134.2 443.8M136 442.5L135.4 442.6M136.2 441.3L135.7 441.2M136.6 440.2L136.2 439.9M137.1 438.8L135.8 438.4M137.6 437.9L136.9 437.2M138.4 436.7L137.8 436.3M139.2 435.8L138.3 435M140.1 434.9L138.9 433.4M141.1 434L140.6 433.5M142.2 433.3L141.4 432.2M143.1 432.7L142.7 431.2M144.2 432.2L143.9 430.2M145.6 431.7L145 430M146.7 431.4L146.8 430.8M148.2 431.2L147.8 428.8M149.4 431L149.2 428.8M150.5 431L150.7 430.6M151.8 431.1L152 430.2M153.1 431.3L153.4 430.2M154.4 431.6L154.5 430.8M155.7 432.1L155.8 431M156.7 432.5L157.7 430.8M158 433.2L159.2 430.9M158.9 433.7L160.5 431.9M159.8 434.4L161.9 432.8M160.8 435.2L161.7 434.8M161.8 436.3L163.3 435M162.6 437.2L163.8 436.4M163.4 438.3L163.8 437.9M164 439.2L166.8 438.2M164.6 440.4L166.6 439.8M165.1 441.7L167 441M165.5 442.8L167.1 442.6M165.9 444.2L168.9 443.5M166.1 445.2L167.7 445.3M166.3 446.4L168 446.7M166.3 447.9L168.2 447.9M166.4 449.1L167.7 449.3M166.3 450.5L168.9 450.9M166.1 451.8L167.7 452M165.9 453.1L168.6 453.8M165.6 454.3L167 454.7M165.3 455.4L166.8 456.4M164.8 456.7L167.6 458.3M164.3 457.8L166.7 459.8M163.7 459L164.5 459.6M163.1 460L164.6 461.8M162.2 461.2L163 461.8M161.3 462.2L162.7 463.4M160.5 463.2L162.3 465.3M159.5 464.1L161.3 466.4M158.6 464.9L160.1 467.4M157.5 465.7L158.4 466.9M156.5 466.4L157.1 467.6M155.6 466.9L156 469.5M154.4 467.5L154.5 469.1M152.9 468L153.4 469.1M151.8 468.4L152.3 471.1M150.4 468.8L150.9 470.3M149.5 469L149.1 471.7M148.3 469.2L147.8 470.3M146.8 469.3L146.6 471.7M145.3 469.3L145.5 470.3M144.2 469.2L143.9 470.7M142.9 469.1L142.5 470.8M141.8 469L141.1 470.1M140.3 468.6L139.8 470.5M138.9 468.2L138.8 469.7M137.8 467.9L136.7 470.6M136.6 467.4L136.3 468.4M135.5 466.9L134.9 468.2M134.5 466.4L133.5 467.5M133.5 465.8L131.6 467.6M132.1 464.8L132 465.6M131.4 464.4L129.8 465.4M130.4 463.6L128.7 464.5M129.3 462.6L128.7 463M128.5 461.8L127.5 462.1M127.6 460.9L126.3 461.2M126.6 459.5L124.7 461.2M125.8 458.5L125 459.4M125.1 457.4L123.4 458.8M124.6 456.7L123.4 456.8M124 455.4L122 456.1M123.4 454.3L121.1 454.9M122.9 452.9L120.7 453.8M122.5 452.1L121.2 451.8M122 450.4L119.1 451.3M121.8 449.6L119.6 449.4M121.5 448.2L118.9 448.1M121.3 446.7L120.2 446.9M121.1 445.4L119.7 445.7M121 444.1L118 444.3M121 442.8L119.1 443M121 441.5L119.9 441.7M121 440.7L119 439.7M121.2 439.4L119.3 438.4M121.4 437.9L120.3 437.5M121.6 436.8L119.6 435.6M122 435.2L120 434.7M122.3 434.2L119.8 432.8M122.8 432.8L121.7 432.6M123.3 431.7L122.1 431.2M123.8 430.5L122 429.6M124.5 429.2L123.5 429.1M124.9 428.3L124 427.5M125.7 427.1L124.4 426.3M126.2 426.3L125.2 424.8M127.2 425L126.5 424.8M127.8 424.2L125.4 421.3M129 422.9L127.6 422.3M129.8 422.1L128.9 421.6M130.6 421.3L129.6 420.1M131.5 420.4L130.1 418.4M132.7 419.5L130.9 417.6M133.4 418.9L131.7 415.3M134.9 418L133.6 417M135.8 417.4L134.5 415.4M136.9 416.8L135.9 415.1M138 416.2L137.2 414.4M138.8 415.7L138.5 412.8M140 415.2L140.1 413.6M141.6 414.6L140.2 410.5M142.8 414.2L142.2 412.6M143.8 413.9L143.8 412.8M145.3 413.5L144.7 412M146.1 413.3L146.3 410M147.7 413.1L147.4 411.2M148.8 412.9L149 411.3M149.8 412.8L150.7 409.8M151.6 412.7L151.4 410.8M152.7 412.6L153.2 408.8M153.9 412.6L154.4 410.6M155.2 412.7L155.8 410.7M156.3 412.7L157.2 411.7M157.8 412.9L159 409M158.9 413L160.2 410.6M160.1 413.2L161.3 411.6M161.7 413.6L162.2 412.2M163.1 414L163.5 411.9M164.1 414.3L164.5 413.4M165.1 414.5L166.6 413.1M166.3 414.9L169.1 411.4M167.7 415.5L169.1 413.7M168.6 415.9L171.9 412.4M170.2 416.8L171.7 414.2M171.3 417.4L172.4 415.6M172.5 418.1L174.7 414.7M173.5 418.7L176.3 415.3M174.5 419.3L175.8 418.1M175.8 420.4L176.7 418.5M176.4 420.8L177.6 420.3M177.8 422.1L179.5 419.6M178.7 422.9L179.9 421M179.4 423.5L181.1 422.3M180.1 424.2L183.3 422.7M181.1 425.4L182.6 424.5M181.8 426.1L185.3 424.8M182.8 427.5L184.4 426.4M183.5 428.5L185.1 427.6M184.3 429.8L186.5 428.2M184.7 430.3L187.1 430.1M185.5 431.6L187.3 431.3M186.2 433.2L190.1 431.2M186.6 433.9L190.1 433.2M187.3 435.6L188.4 434.5M187.6 436.2L189.5 436.3M188.1 437.6L190.3 437.1M188.5 438.8L190.3 438.5M188.9 440.2L192.9 439.3M189.2 441.6L190.4 440.9M189.4 442.5L192.2 442.4M189.6 443.7L194.3 443.7M189.8 444.9L194 445.3M190 446.3L191.8 446.5M190.1 447.5L193.5 447.9M190.1 448.5L193 449.6M190.1 450.5L191.9 450.2M190 451.9L193.9 451.6M190 453.1L194.3 453.2M190 453.8L194.5 455.3M189.9 455L193 456.5M189.6 456.4L191.8 457.4M189.5 457.5L193.4 459.4M189.1 459.1L194.4 460.8M188.9 460L191.6 461.8M188.4 461.7L190.7 462.3M188.1 462.8L192.5 464.7M187.8 463.7L192.5 466.6M187.1 465.4L190.1 466.3M186.6 466.5L188.8 467.3M186.1 467.6L190.6 469.9M185.8 468.4L187.5 470.3M185 469.8L187.3 471.3M184.5 470.7L186.1 472.3M183.9 471.8L184.8 473.1M183.2 472.8L186.4 476M182.1 474.3L183.5 474.7M181.5 475.2L183.8 477M180.5 476.4L182.7 477.3M179.9 477.1L182.4 479.5M178.9 478.2L181.3 480M178.3 478.7L179.4 480.7M177.1 479.9L179 481.6M176 480.9L177.7 481.8M175.5 481.3L176.5 483.3M174.4 482.2L177.5 486.8M173.1 483.1L174.9 484.9M171.9 484L173.7 485.1M171.5 484.3L172.1 486.7M170.4 485L170.7 486.8M169.3 485.6L170.5 489.6M167.7 486.5L170.2 490.8M166.7 487.1L167.3 487.9M166 487.5L166.4 490.4M164.6 488.1L164.6 489M163.6 488.5L163.5 490.3M162.3 489.1L162.7 491.4M160.8 489.6L161.4 490.9M159.3 490L160.4 490.9M158.6 490.3L159.2 494.4M157.5 490.6L157.4 493.1M155.8 490.9L156.5 492.3M154.5 491.2L155.1 492M153.6 491.4L153.8 495.4M151.9 491.6L152.7 493.4M151.3 491.7L150.6 492.7M150.1 491.8L149.3 495.5M148.1 491.9L148.7 494.8M147.4 492L146.7 496M146.1 492L145.4 494.1M144.6 491.9L144.4 493.6M143.1 491.8L143 495.5M142.2 491.7L141.4 494.2M140.4 491.5L140.6 494.4M139.3 491.4L139.4 492.6M138 491.1L138.1 492.5M137 490.9L135.9 494.7M135.4 490.5L135.3 493M134.2 490.2L134.1 492.4M133.3 490L131.8 493.5M132.2 489.6L130.4 493.2M130.6 489.1L130.3 490.8M129.3 488.6L128.2 492.5M128.1 488L127.1 491.8M127.2 487.7L125.5 491.1M125.7 486.9L124.7 490.7M125 486.6L124.2 487.7M123.8 485.9L122.8 487.5M122.5 485.2L122 486.7M121.9 484.8L120.3 485.9M120.4 483.8L118.5 487M119.2 482.9L117.9 485.8M118.8 482.6L117.2 483.3M117.5 481.6L115.2 484.1M116.7 480.9L113.5 483.6M115.7 480.1L114.2 481M114.7 479.2L113.2 480.2M113.3 477.8L112.7 479.7M112.7 477.2L109.9 479.9M111.6 475.9L110.9 477.7M110.9 475.2L109.5 476.8M110.5 474.8L108.6 474.9M109.2 473L107.1 475.5M108.6 472.2L106.9 473.7M107.7 471L104.8 473.6M107 469.8L105.1 472M106.3 468.8L104.8 470.6M105.8 468L104.5 468.7M105 466.5L102.1 468.9M104.6 465.7L102.5 466.9M104.1 464.8L102.3 465.2M103.4 463.2L101.2 464.7M103.1 462.7L99.9 462.9M102.5 461.4L100.8 461.4M102 459.9L101.1 460.3M101.6 459L100 458.8M101.1 457.1L97.7 458.8M100.9 456.7L98 456.4M100.5 455.4L98.9 454.9M100.1 453.3L98.5 454.6M99.9 452.8L95.8 452.8M99.6 451.6L95.5 451.3M99.4 450.5L97.7 449.7M99.2 448.4L96.1 449.2M99 447.6L96.6 447.3M98.9 446.1L98.2 446.2M98.8 445.4L97.1 444.3M98.8 443.3L95.3 443.8M98.7 442.4L95.6 442M98.6 441.2L94.6 440.4M98.7 439.4L96.6 439.8M98.7 438.2L94.4 438.1M98.7 437.2L97.6 436.9M98.8 435.6L97.9 436M98.9 434.5L97.9 434.4M98.8 433.7L95.1 431.8M99.2 431.7L97.4 431.8M99.2 430.7L96.1 429.7M99.4 429.5L97.7 428.7M99.7 428L95.7 426.8M99.9 426.9L99 426.4M100 425.9L98 424.2M100.6 424L98.9 423.9M100.9 422.7L97.9 422M101.3 421.4L99.8 421.6M101.6 420.3L99.1 419.5M102.1 418.9L98.1 417.6M102.1 418.3L100.9 416.7M103 416.4L100.3 415.8M103.4 415.3L102.4 415.4M103.5 414.7L101.8 412.4M104.1 413.4L101.5 410.7M104.6 412.3L104.4 411.1M105.2 411.1L103.5 408.7M106.1 409.6L104 408M106.6 408.6L105.9 407.6M107.7 407L103.8 404.8M107.8 406.5L106.3 404M109.1 404.8L106.9 404M109.5 404L107.9 402.4M110.1 403.1L108.3 400.4M110.6 402.3L110.2 400M112.2 400.6L110.3 399.7M112.9 399.7L111.8 399.2M114 398.5L112.1 398M114.8 397.6L112.3 395.8M115 397.2L113.5 393.6M116.6 395.7L114.9 394.8M117.4 395L115.8 393.4M118.4 394L115.9 391.1M119.6 393L117.7 392M119.7 392.7L118.4 388.3M120.9 391.8L120.9 390.4M122.5 390.7L121 389.3M123.1 390.1L122.2 387.5M124 389.4L124 387.7M124.9 388.8L125.1 386.5M126.1 388L126 385.4M128.1 387L125.7 383.6M128.5 386.6L128.3 384.6M129.9 385.9L128.9 382.7M130.8 385.4L130.7 383.2M131.6 384.9L131.9 381M133.6 384.1L132.2 380.1M134.9 383.6L133.6 380.8M135.7 383.2L135.3 380.1M136.6 382.8L137 380.7M138.9 382.1L137.2 380.2M139.3 381.8L139.3 379.4M140.8 381.4L140.3 378.6M142 381.1L141.5 376.2M142.9 380.8L143.4 379.4M144.5 380.5L144.2 375.9M146.4 380.2L144.9 376.2M146.8 380L147.2 375.8M148.6 379.8L148 376.1M149.5 379.6L149.7 378.3M151.1 379.5L150.8 377.5M152 379.3L152.6 374.4M154 379.3L153.1 377.2M155.3 379.3L154.5 376.4M156.1 379.2L156.1 378.2M157.2 379.2L158 375.7M158.6 379.2L159.2 375.5M160 379.3L160.4 376.2M161.2 379.3L162 374.8M162.2 379.4L163.9 374.3M164.1 379.7L164.4 375.3M164.9 379.7L166 376.6M166.7 380L167.1 375.5M167.3 380L169.1 376.1M168.9 380.4L169.4 378.6M169.9 380.5L172.2 375.2M171.2 380.8L173.2 376.3M173.1 381.4L172.8 379.4M174.5 381.8L174.5 378M175.6 382.1L175.5 379.7M176 382.1L179 377.4M177.5 382.6L178.5 380.9M178.7 383L180.8 379.2M179.8 383.4L181.3 381.5M181.4 384.1L183.1 379.8M182.9 384.7L182.9 382.2M183 384.6L186.5 381.4M184.3 385.2L187.8 381.6M186.4 386.4L187.2 382.8M186.7 386.4L188 385.8M188.6 387.5L189.9 383.8M188.8 387.5L190.8 386.9M190.9 388.8L191.9 385.5M191.3 388.9L194.2 386.2M192.6 389.8L195.3 386.5M193.6 390.4L195.6 388.5M194.8 391.2L197.8 387.6M195.7 391.8L198.1 389.7M196.7 392.6L199.3 390.4M198.4 394L200.8 389.3M198.7 394.1L201.2 392.2M200.4 395.6L204.3 389.6M201 396.1L203.8 392.7M201.8 396.7L205.1 393.8M202.5 397.3L206.3 395.1M203.7 398.4L208.4 394.5M204.4 399.1L207.6 397.4M205.6 400.3L208.2 398.1M206.6 401.3L210.7 397.7M207.4 402.3L210.6 399.5M208.5 403.5L212.5 399.3M209.4 404.6L214.3 399.4M209.5 404.4L215.5 402.2M211 406.5L217.7 400.8M211.8 407.5L217.6 402.4M212.5 408.5L218.5 403.6M212.9 408.8L220.3 405.2M213.5 409.6L217 408.9M214.7 411.7L216.8 409.2M215.5 412.8L219.4 409.3M216.2 413.9L222 409.5M216.7 414.7L222.1 411.4M217.5 416.2L223.8 411.7M218 416.9L224.4 413.4M218.4 417.5L221.4 416.8M219.2 419.2L224.2 416.4M219.8 420.3L224 418M220.4 421.8L224.8 418.8M220.9 422.6L226.1 420.2M221.4 423.7L228.8 420.9M221.8 424.5L226.6 423.4M222.3 425.9L224.3 425.2M222.7 426.7L229.3 425.7M223.2 428.1L225.3 427.8M223.7 429.3L232.7 427.6M224.1 430.5L227.4 430.2M224.5 431.8L228.5 431.2M224.8 432.3L227.9 433.4M225.3 434.4L229.3 433.6M225.7 435.9L229.7 434.6M226 436.7L232.3 436.1M226.3 438.1L233.1 437.2M226.6 438.5L230.3 439.7M227.1 440.5L231.1 440.2M227.5 442.2L232.8 441M227.7 442.7L232.2 443.2M228 443.8L230.8 444.7M228.2 445.4L230.8 445.7M228.4 446.7L232.8 447M228.6 447.6L237.9 448.9M228.8 449.5L239.3 449.7M229 451.3L236.7 450.4M229.3 451.1L232.8 453.1M229.5 452.6L237.4 454.6M229.6 454.8L238.4 455.2M229.8 455.5L238 457.2M230 456.8L235.6 458.3M230.2 457.8L233.6 459.7M230.1 460.1L234.5 460M230.4 460.9L235 462.1M230.5 462.2L233.5 463.2M230.4 463.9L235.5 464.5M230.7 464.3L236.3 467.1M230.6 466.2L236.8 468M230.6 467.5L235.7 469.1M230.6 468.8L240.5 471.9M230.5 470.4L236.7 471.9M230.5 471.2L234.4 473.2M230.4 472.8L234.2 474.2M230.4 473.4L234.3 476.4M230.1 475.3L233 476.7M229.7 477.1L234.7 478.1M229.4 478.6L240 481.3M229.3 479.7L233.5 480.5M229.4 480.2L235.3 483.7M229.3 481.2L233.6 484.8M228.7 483.2L234.9 486M228.2 485.1L236.6 487.5M227.8 486.5L230.3 485.8M227.5 487.8L236.8 490.5M227.3 488.9L236.3 492.1M227.3 489.5L231.7 492.1M226.9 490.8L230.6 493M226 492.8L234.1 495.5M225.8 493.7L231.6 496.1M225.9 494L230.4 498.3M225.1 495.6L226.7 496.8M224.1 497.6L229.3 499M224.1 498L232.4 503.9M223.1 499.7L226.8 500.7M223.2 499.9L226.3 503.6M222.6 501L225.4 504.5M221.8 502.2L225.7 506.4M221.5 502.9L223.5 506.9M220.5 504.2L222.5 507.3M219.2 505.8L222.6 508.2M218.7 506.4L221.2 509.3M218.3 506.9L218.7 509.8M216.4 508.9L224.4 514.6M216.3 508.9L220.8 514.9M214.8 510.3L220.5 515.4M213.3 511.6L221.6 517.4M212.3 512.4L216.7 514.5M212 512.5L217.7 518.9M210.7 513.5L217.5 520.1M210.3 513.6L211.9 517.5M208 515.4L211.7 516.7M207 516L214.9 522.4" stroke="#e89c72" stroke-width="0.85"/>
<path d="M147.1 446.5L146.6 446.7M147 445.5L146.4 445.4M147.4 444.6L146.7 444.1M148.1 444L147.7 443.1M149 443.7L149.1 442.7M149.9 444L150.3 443.1M150.6 444.5L151.7 443.7M151 445.3L152.3 445M151.4 446.2L152.6 446.4M151.5 447.3L152.6 447.8M151.2 448.4L152.6 449.6M150.4 448.8L151.6 451M149.8 449.8L150.3 451.9M148.8 450.5L149 452.3M147.8 450.5L147.5 452.4M147 450.1L146.1 452.3M146.3 449.6L144.8 451.6M145.4 449.3L143.6 450.9M144.4 448.9L142.5 450.2M143.5 448.2L141.4 449.3M143.2 447.3L140.8 448M142.8 446.4L140.8 446.5M142.5 445.3L140.2 445.3M142.5 444.4L140.2 443.8M142.8 443.4L140.8 442.6M143.2 442.4L140.7 441.1M143.4 441.4L142 440.2M144.2 440.7L142.2 438.6M144.8 439.9L143.8 438.4M146.1 440.1L144.4 436.8M146.8 439.7L145.8 436.5M147.6 438.6L147 435.7M148.6 438.9L148.5 436.1M149.6 438.3L149.8 435.9M150.5 438.4L151.2 436.2M151.5 438.5L152.7 435.9M152.6 438.8L153.9 436.4M153.5 439.3L154.9 437.2M153.8 440.4L156.2 437.9M155 440.6L157 438.9M155.7 441.3L158.5 439.5M155.6 442.5L159.3 440.5M156.8 443.1L159.3 442M157.4 443.9L160 443.3M156.9 445L161 444.5M157.2 445.9L161.3 445.9M157.8 447L160.4 447.1M158.3 448.1L160.9 448.5M157.5 448.7L160.1 449.9M157.1 449.7L160 451.1M157 450.8L160.3 452.6M157.5 452.2L159.5 453.8M156.9 453.2L158.8 454.8M156.1 453.9L158.3 456.1M155.5 454.6L158.1 458.1M155 455.7L157.1 459.1M154.1 456.4L155.8 459.2M153.3 456.6L154.6 460M152.3 456.9L153.7 461.6M151.5 457.8L152.4 461.6M150.7 458.9L151 461.5M149.7 459L149.7 462.5M148.7 458.7L148.5 462.2M147.5 458.9L147.3 462.5M146.5 458.9L146 462.1M145.5 458.6L144.8 462.7M144.7 458.5L143.2 462.6M143.3 458.8L141.9 462.9M142.7 457.8L140.6 462.3M141.4 458.1L139.3 461.8M141.1 457.2L138.7 460.1M140.1 456.5L137.5 459.9M138.7 456.6L136.4 459.3M138.1 455.9L135.4 458.4M136.9 455.5L134.3 457.7M136.5 454.5L132.8 457.1M136.1 453.7L131.9 456M134.9 453.2L131.6 454.6M135.1 452L131.2 453.4M133.9 451.1L130.9 452.5M133.5 450.4L129.2 451.4M134.2 449.2L128.4 450.3M132.5 448.3L128.9 449.1M132.3 447.5L129 447.5M132.2 446.4L128.5 446.3M132.7 445.2L128.2 445.2M131.7 444.2L128.3 443.9M132.5 443.2L128.8 442.7M132.1 442L127.5 441.1M132.2 441.1L128.4 439.9M133.4 440.2L129 439M132.9 439.2L128.8 437.1M133.2 438.2L129.5 436M134.3 437.4L129.4 434.8M134.6 436.3L129.8 433.6M134.5 435.1L130.5 432.2M134.9 434L132.2 432M135.7 433.3L133 431M137.2 433.4L133.6 429.9M137.2 432L135.1 429.4M138.6 432.2L135.5 428M138.9 430.5L135.8 426.4M140.4 431.2L136.8 425.3M140.4 429.1L138.7 425.9M141.8 430L140 425.3M142.2 428.3L141 424.5M143.1 428L141.8 422.7M144.2 428L143.1 422.1M145.2 426.7L144.4 423.3M146.1 426.9L145.7 421.9M147.3 427.4L147 423.1M148.3 426.8L148.2 422.2M149.2 427.9L149.6 422.5M150.4 426.4L150.8 421.9M151.5 426.4L151.8 422.7M152.2 427.5L153.7 421.1M153.3 427.3L154.8 421.5M154.6 426.2L156.4 421.3M155.7 427L157.3 421.6M156.8 427L158.6 422.3M157.1 428.2L160 422.9M158.3 428.3L161.1 423.4M159.1 428.6L162 424.6M160.5 428.7L163.7 423.8M161.3 429.7L164 425.4M162.2 430.1L165.6 425.5M162.2 431.6L166.5 426.5M163.6 431.6L167.7 427.1M163.6 432.8L168.3 428.3M164.9 432.6L169.6 429.4M165.2 434.1L169.9 430.2M166.1 434.3L171.3 431.2M166 435.6L173.2 431.5M167.4 435.8L172.7 433.3M169.2 436.1L173.4 434.3M168.4 437.7L174.2 435.2M169.4 438.2L174.8 436.6M170.5 438.9L176.5 437.3M169.7 440.2L176.2 438.8M170.4 441L178.3 439.7M171.2 442L177.2 441.1M170.9 443.1L176.8 442.4M172.6 444.1L177.6 443.5M171.5 445L177.4 445M170.9 445.9L178.4 446.4M171.9 447.2L179.1 447.4M171.7 448.3L177.9 448.5M171.4 449L178.2 450.2M171.8 450.4L179.4 451.3M171.1 450.9L177.7 452.7M171.3 452L179.1 454.4M169.8 452.9L178.8 455.2M171.5 454.2L178.6 457M169.7 454.8L177.1 457.5M169.3 455.4L177.3 459.4M170.9 457.3L177.8 461.1M170.8 458.3L175.8 461.7M169.1 458.9L176 462.8M169.7 460.3L174.4 463.6M169.7 461.3L174.6 465.7M167.3 461.1L173 465.6M166.9 462.1L172.3 466.6M167.6 463.8L172.3 468.8M166.1 463.9L171 469.1M166.3 465.5L170.2 470.2M164.4 465.3L169.2 470.4M163.6 465.6L169.1 472.7M164.1 467.8L167 472.3M162.8 468.2L166.9 473.8M161.5 468L166.3 475.5M160.9 468.8L164.6 475M160.4 469.9L163.8 476.9M159.3 469.7L162.7 477.8M158.4 469.9L161.3 478.1M157.6 470.3L160.1 478.8M157.2 473.3L158.7 477.7M155.6 472.2L157.9 478.7M154.9 473.4L156.5 478.6M154 472.4L155.3 481M153 472.5L153.7 479.4M152 473.5L152.9 481.5M151.1 474.2L151.4 481.9M149.7 473.3L150.5 480.8M148.9 473.6L149 479.9M147.8 475.6L147.7 480.2M146.7 473.3L146.7 480.4M146 474.5L144.7 482.4M144.7 475L143.8 481.2M143.6 475L142.3 482M142.4 474.4L141.9 479.7M141.9 473.4L139.7 481.4M140.2 474.5L139.4 479.4M139.7 474.2L137.4 479.4M138.6 473.2L136.5 479.3M137.5 473.4L134.8 479.8M136.6 472.7L134.1 478.5M135.1 473L133.5 477.3M134.5 471.8L132.2 477.5M133.4 472.1L130.9 476.7M132.6 471.7L129.9 475.5M131.2 471.2L128.7 475.7M130.4 470.5L128 474.7M129.4 470L126.5 474.7M128.7 469.6L125.5 473.4M127.6 468.8L124.9 472.6M127.1 467.8L122.7 473.3M126.4 467.2L122.4 471.5M125.1 466.9L121.8 470.3M125 465.6L121 469.4M123.8 465.4L120.4 468.1M123.1 464.4L118.6 468.1M124.1 462.8L118.5 466.2M123.6 462.1L117.5 465.3M123 460.9L116.4 464.9M121.4 460.9L116.2 463.2M120.2 460.4L116 461.9M119.7 459.5L113.5 461.6M119.8 458.2L114.4 460M118.7 457.3L112.7 459.5M120.3 455.9L112.9 457.9M118.4 455.4L111.6 457M117.5 454.6L112.8 455.3M118.4 452.9L110.9 454.9M118.1 452L111 453.5M117 450.9L111.3 452.5M118.3 449.9L110.2 451.1M117.3 449.1L111 449.6M117.7 448.2L110.9 448.2M116.1 447.1L108.4 447.3M115 446.4L109.2 445.6M115.4 444.9L110.2 444.8M114.9 443.5L109.9 443.9M115.8 442.6L109 442.4M115.2 441.7L110.2 441.1M115.2 440.9L110.4 439.5M116.9 439.9L109.7 438.4M114.8 438.2L108.3 437.1M115.5 437.3L110.4 436.2M115.4 436.6L110.4 434.4M116.4 435.1L110.8 434M117.8 434.6L111 432.6M117.8 434.1L109.9 430.2M116.5 432.3L109.9 429M118.8 431.6L111.6 429.1M117.2 429.6L110.6 427.2M117.2 428.6L110.6 425.5M118 428.4L113.4 424.9M118.2 426.8L113.3 424.1M119.7 426.4L112.4 422.1M120.6 425.8L114.9 422.3M120.5 425L114.7 419.9M120.8 423.3L115.4 419.5M121.9 423L116.3 418.5M121.5 421.8L116.3 416.3M121.4 420.1L116.7 415.1M123.4 420.3L118.3 415.1M125.1 420.3L118 413.4M123.6 417.9L120.1 412.9M124.5 417.4L120.8 411.6M125.9 417.2L121.7 411.1M126.1 415.5L122.1 409.9M127.5 415.2L123.1 409.7M128.3 414.9L124.1 408.5M128.5 413.2L123.9 405.8M130.1 413.7L125.7 406.8M130.6 413.5L126.6 404.5M130.9 410.6L126.6 403.2M132.3 410.8L128.8 404.8M132.6 409.4L129.6 403.1M134.6 411.1L130.6 402.8M134.9 409.2L131.9 402.3M136 409.7L132.4 399.5M136.5 408.3L134.4 400.8M138.3 410.1L134.9 399M138.9 408.3L136.5 400.2M139.5 406.8L137.3 397.5M140.7 407L138.3 396.3M142.1 408.4L139.4 395.7M142.2 405.2L141.2 395.3M143.5 406.9L142.7 397M145 407.1L143.4 396.5M146 408.1L144.6 394.2M146.3 405.9L146.6 394.1M147.7 405.6L147.5 395.6M148.7 404.4L148.7 396.5M149.8 405.6L149.9 395.7M150.9 407.3L151 395.9M151.6 405.3L153 394M152.9 404.8L153.8 396.6M154.1 405.6L155 393.1M155.2 403.8L156.2 396.3M156 404.1L158.1 394.3M156.4 407L159 396.8M158.1 404L160.6 395.5M158.9 406.7L161.1 396.6M160.9 403.8L162.2 396.7M160.8 405.7L165 394.5M162.2 406L164.9 397.4M162.3 407.5L166.7 397.6M164.5 405.8L168.4 395.1M164.9 408.2L169.5 395.2M166.6 406.1L169.9 398.2M167.2 407.2L171.5 398M169.2 406.5L171.4 400M169.8 407L173.6 399M169.5 410L174.1 400.3M171.3 408.8L175.5 400.6M172.8 408.1L177 400.9M173.3 408.5L177.8 402.8M172.6 411.2L179.7 402.5M174.6 410.1L182.5 400.9M175.5 411.1L182.1 402.8M176.6 411L184.3 402.8M178.5 411.6L182.8 405M177.2 413.9L184.5 405.8M177.4 414.7L186.8 405.7M180.9 412.4L188 406.5M179.1 415.8L187.5 408.6M180.4 415.8L190.8 407.4M181.8 416L190.8 409M183.7 415.9L191.8 409.7M183 418.2L190.6 411.7M185.7 417.1L193.2 411.5M185.2 419L195.4 411.2M186.6 419.2L194.6 413.5M188.1 419.6L195.8 414.1M187.9 420.5L195.9 416.1M187.4 422.8L196.9 416.1M187.4 423.7L199.4 416.4M190.5 422.9L200 417.8M189.4 424.9L198.4 419.8M190.1 425L199.3 421.6M193 425.8L200.8 421.1M192 427.4L201.3 422.3M192.3 428.1L200.8 424.3M194.2 427.9L202.8 425.5M194.4 429.4L204 425.9M194.8 429.9L203.9 427.9M195.3 431.5L206 427.7M192.7 432.8L202.9 430.7M195.2 433.9L206.5 430M194.6 435.2L204.4 431.8M195.2 435.3L208 433.2M196.6 436.6L205.6 434.4M195.8 438L208.8 434.9M196.5 438.7L209.3 436.3M198 439.4L205.4 438.4M197.8 440.2L208.9 439.5M197.7 441.5L209.4 440.5M196.9 442.4L207.3 442.2M196.6 444L208.3 442.6M196.8 444.6L207.9 444.4M197.4 445.3L209.5 446.1M198.9 446.9L211.1 446.6M198.3 447.6L209.2 448.3M199.8 448.5L212 450M200.7 450.1L209.1 450.5M200.6 451.3L209.2 451.6M197 451.3L209.1 453.7M196.7 453.1L211 454.2M199.8 454.2L209.6 455.8M199.3 455.6L209.3 456.4M196.6 455.3L212.3 459.4M198.8 457.5L208.7 459.1M199.9 458.9L209.3 460.4M200.6 459.7L208.6 462.1M198.2 460.7L207.9 462.5M198.4 461.6L208.3 464.3M199.1 462.7L208.1 465.8M195.1 462.5L208.2 467M196 464.2L207.6 467.7M195.5 465L211 470.4M195.3 465.5L208.9 471.7M196.8 468L210 472.6M197.2 469.3L206.6 472.6M197.4 470.2L207 474.6M197.2 471.1L206.9 476.1M195 471.5L205.6 476.5M196.2 473.5L205 477.4M195.6 473.8L206.2 480.4M192.7 473.3L204.9 480.9M194.1 475.4L206.7 483.5M193.5 476L204.9 484.2M190.5 475.4L202.7 484M192.7 477.9L203.3 486.4M191.5 478.5L202.2 487M192.1 480L199.9 487.2M192.2 481.4L199.8 488.6M190.6 481.5L198.5 489.1M187.5 480.7L199.7 491.1M188.4 482.5L196.6 490.6M187 482.6L195.7 491.4M187.4 484L195.7 493.7M187.2 486.6L193.9 492.2M183.2 483.9L195.6 495.6M183.1 484.4L193.2 496M184.1 487.8L192.4 496.1M182.7 486.8L191.7 498.6M181 486.4L188.8 496.9M182.2 489.3L187 496.9M181.1 490.4L187.2 498.2M180.1 489.8L184.3 497.5M178.2 489.6L185.4 500.7M178.4 491.6L182.4 498.6M177.3 492L181.3 499.1M175.1 491.1L181.5 500.9M175.5 492.6L179.8 502M174.6 494.1L179.2 502.5M173.9 493.8L176.2 500.8M171.7 491.9L176.2 503.4M170.6 493.6L175.4 502.8M170.6 496.1L175 505M169.6 496.3L174 506.3M168.9 496.5L171.1 503.2M168 497.5L170.2 503.9M165.9 496.4L170.6 507.1M165.2 497.6L168.6 505.1M164.3 497.9L168.2 508.4M162.6 496.4L166.6 506.8M162 497.3L165.2 507.7M161.5 498.9L163.9 508.6M159.9 498.4L162.7 506.9M158.9 496.5L161 507M157.7 496.8L160.1 507.6M157.5 500L158.6 508.2M156 499.5L157.7 508.9M155.2 500.4L156.2 507.8M154.2 497L154.5 508.3M152.9 497.6L153.8 509.3M152.3 500.4L152.2 508.7M151.3 498.8L150.7 508.2M149.4 499L150.6 508.6M148.5 498.8L149.2 508.3M147.3 500.3L148 508.9M146.6 498.9L146.4 509.9M146 499.5L144.6 508.8M144.2 497.7L144.5 507.5M143.8 499.3L142.4 506.4M142.9 500L140.6 509.2M141.5 499.7L140 507.6M140.5 500.3L138.7 506.3M140 496.8L137 509M138.4 498.7L136.4 506.5M136.5 499.6L135.7 507.3M136.4 497.7L133.8 507.1M135.2 496.6L133.1 506.7M134.1 498.3L131.3 506.4M133.2 497L130.5 505.6M132.2 497.3L128.9 505.5M130.8 498.2L128 504.4M130 497.5L126.9 503.3M128.7 495.4L126.3 504.3M127.7 496.8L124.8 502.5M126.1 496.2L123.4 504.5M125.5 494.9L122.4 503.9M124.2 495.5L120.7 503.9M124.8 493.2L119.9 501.2M122.5 494.1L118.6 502.2M122.4 492.6L117.7 500.6M122.5 490.8L117 499M120.8 490.4L116.7 498.6M118.8 491.3L114.4 500.2M119 490.5L113.1 498.2M117.1 490.6L113.8 495.9M116.8 490.2L110.7 496.8M116.9 487.9L109.8 496.5M114.9 489L109.6 494.4M113.9 488L108.6 494.2M112.7 487.2L107.1 494.8M111.9 487.1L106.5 492.7M110.6 486.8L106.2 491.3M110.5 485.8L104.3 491.1M111.9 483L104.8 488.6M110.1 483.3L102 489.5M108.8 482.5L102.7 487.9M107.2 482.8L101 487.5M106.8 482L101.2 485.5M105.3 480.4L101.6 485M105.9 480L99.4 483.6M105 479.2L98 483.3M104 477.6L98.5 482.5M102.4 477.7L97.7 481.3M102.6 475.8L95.4 481.9M102.4 475.8L93.8 480.1M102.7 474.2L95.2 478M100.2 473.8L94.7 477.5M99.6 473.1L94.2 476.2M100.8 471.6L92.5 475.3M99.7 470.1L92.9 474.6M100 469.2L92.1 473.2M98.7 468.7L92.1 471.8M99.3 467.5L89.5 471.3M97.4 466.7L91.1 469.9M96.1 466.2L88.5 469.4M95.2 465.7L89.8 467.2M95.7 464.2L87.1 467.1M94.7 463.8L86.2 465.6M95.5 462.4L88.1 463.7M95.4 461.2L87.5 462.7M95.6 459.4L87.7 462.1M96.1 458.9L86.4 460.4M96.1 457.7L85 459.6M94 457.3L83.4 458.4M92 456.5L84 457.1M92.9 455.2L85.6 455.6M92.4 453.3L82.9 455.8M92.3 453.2L85.1 453.1M94 452L83.6 451.9M91.8 451L82.8 451M91.3 450L84.1 449.6M93.2 448.1L84.3 449.2M93.1 447.2L82.4 447.8M90.5 446.5L84.1 446.2M90.6 445.2L82.3 445.2M93 444.3L82.8 443.8M91.5 442.8L83 443M90 441.9L82.8 441.5M92.8 440.5L81.6 440.8M92.3 439.9L82.1 439M91.6 438.7L81.2 437.6M90.2 437.4L83.6 436.7M91.1 436.4L83.7 435.6M91.4 435L82.7 434.5M91 434.3L81.8 432.6M91 433.8L84.5 431.2M92.4 431.9L84.7 431.3M91.8 431.3L84 429.1M93.1 430.6L85.3 428.2M93 429.8L84.8 426.4M93.8 428.5L84.7 425.6M91.7 427.2L85.1 423.8M91.6 425.9L84.7 422.5M92 425L84.5 421M92.1 423.2L85.1 420.7M93.2 422.5L85.1 419.3M92.9 421.3L85.5 418.1M95.3 420.9L84.5 416.6M93.6 419.7L85.8 414.9M94.3 418.9L88.2 414.6M97 418L88.3 414.7M95.5 416.4L85.9 411.5M96.9 416L88.4 411.4M96.7 415.2L89.3 410M97.6 414.3L87.1 407.4M96.8 412.8L90.1 407.5M96.1 410L89.5 406.9M99.2 411.3L89.4 404.7M97.8 409.4L89.7 403M97.6 407.8L92.5 403.6M100.5 409L90.6 400.2M100.8 407.2L93.4 401.7M100.6 406.6L93.2 398.9M100.2 404.2L92.2 397.1M100.7 402.9L93.8 397.3M103.2 404L95.8 397.1M102.3 401.9L96.6 395.9M102 399.2L97 395.5M102.5 399.3L97.3 392.9M104 397.9L98.4 393.8M104.9 398.1L98.5 391.2M105.1 396.8L98.3 389.1M107.5 398.2L100.9 389.8M108.5 396.7L101.2 389.5M107.3 393.7L102.4 389M107.5 393.4L102.9 386.2M109.3 394.3L103.8 384.8M111.5 393.4L104.7 386.5M110.3 390.9L105.4 384.4M111.7 390.8L105.2 382.1M113.5 391.4L107.2 383.1M113 389.1L108.7 382.8M112.5 387.5L108.3 378.3M113.8 386L110.1 380.6M116 388.9L110.8 378M115.8 385.4L111 377M116.8 384.4L112.5 377.8M118.4 386.3L113.8 376.3M119 385.5L114.3 373.9M119.9 382.3L114.5 374.4M120.5 384.1L117.7 375M122.2 384L117.6 373.5M122.8 381.8L118.5 373.3M122.2 379.8L120.3 371.9M123.9 379.5L120.6 371M124.2 379.1L122.9 371.5M126.5 380.1L123.2 371.5M126.9 376.8L123.2 368.7M128.3 377.8L125.2 370.7M129 377.6L126 367.8M130.4 377.6L126.6 366.5M130.6 375.4L128.1 365.9M131.8 376.4L129.3 364.5M132.9 374L130.4 366.5M133.3 375.3L132.6 365.9M135 377.2L133.2 363.7M135.5 374.1L134.2 362.9M137.2 374.4L134.8 362.3M138.5 372.4L135.4 362M138.2 372.9L138.1 360.4M140 374.5L138.9 361.7M140.6 371.8L140.2 360.2M142.1 374.4L141.3 361.5M142.8 374.2L142.7 357.9M143.5 371.6L144.3 361.5M145.1 370.1L144.9 360.9M146.1 369.5L146.1 361.5M148 371.7L146.5 360.6M148.8 369.3L147.9 360M150 369.4L149.1 358M150.8 369.9L150.6 359.9M151.5 368.7L152.3 360M152.5 369.4L153.8 355.7M153.6 371.4L154.6 360.8M155.3 368.4L155.6 356.5M156 367.8L157.5 355.9M158 368.8L157.4 357.7M158.6 369.5L159.3 355.7M159.5 371.1L160.3 357.1M160 371.5L161.8 359.9M161 370.2L163.6 358.2M162.7 371.8L163.7 358.5M162.9 372.6L166.2 356.9M163.7 370.9L167.5 360M166.5 368.2L167.9 358M166.9 372.1L168.4 360.2M167.2 371.9L170.7 359.7M170 369.3L171.1 358.7M169.4 373.2L172.8 360M170.6 371.5L175.1 358M171.2 372.7L175.5 361.2M174 370.3L177 357.1M175.3 369.3L177.7 359.7M174.3 373.5L179.6 360.2M176.8 372L179.4 362M177.7 372.8L181.7 358.9M179.1 372.3L182.8 359.7M178.3 373.1L185.5 360.7M180.4 372.3L186.4 360.1M182.3 372.5L187.3 359.1M183.5 371.7L187.6 362.2M185.4 371.8L189 360.3M185.8 371.9L189.9 363.1M186.9 373.1L192 360.6M186.6 373L195.3 360.5M187.9 373.4L194.3 364.2M189.4 374.7L195.4 362.8M189.9 374.1L197 364.6M191.9 374.7L196.8 365.2M192.3 375.1L199.8 364M191.6 378.9L202.2 361.6M194.1 377.7L202.2 363M195 376.7L202.4 366.8M196.3 378.1L203.9 365.1M197.9 377.7L205.4 365.3M198.8 377.8L206.8 365.8M199.9 378.9L206.8 367.1M197.6 381.7L211.1 366M200.1 380.1L213 365.6M200.1 383L210.8 368.7M201.8 381.4L214.6 367.5M204.3 381.4L211.8 371.2M204.4 383L214.3 370.1M206.5 382.3L214.6 371.6M207.6 382L219.6 368.7M209.1 382.7L217.8 371.6M207.8 383.5L220.4 373.2M207 387.2L218.7 375.1M207.6 386.9L220.1 376.9M210.2 385.7L222.3 376.6M212.3 386.2L222.8 376.6M212.9 386.1L225.8 376.7M213.6 387.2L226.1 377.7M212.8 391.2L228.5 375M216.3 389.4L228.4 377M217.3 389.8L226.1 380.7M217.8 389.4L230.7 380.3M218.2 390.6L229.6 382.6M217.7 391.9L235.7 380M220.9 392.7L231.7 382.3M221.4 393.3L232.1 384M222.9 394L233.6 383.9M223.3 394.4L238.7 382.6M220 398L237.7 384.7M222.9 395.9L236.7 388.7M225.8 396L238.5 388.1M225.1 398.7L236.8 389.5M225 399.5L238.4 390.6M222.2 401.3L238.5 393.3M222.2 403.5L243.2 390.7M226.9 401.7L246.1 390.8M230.2 401.2L242.7 394M223.5 405L247.8 394.1M229 403.8L246.5 395.4M230.9 404.3L248.4 395.6M231.4 404.4L250.9 396.9M226.2 408.3L245.7 400.4M228.6 410L244.5 400.4M234 408.3L252.3 398.6M227.9 411.9L250.8 401M232.4 410.6L248.5 403.9M233.9 410.4L247.8 406.5M231.7 413.3L252.6 404.8M232.4 414.3L249.6 407.2M236.2 413.6L251.9 408M234.2 416.2L252.7 408.1M234.6 415.7L253.1 411.2M232.2 417.5L256.9 411.3M236.8 418.7L255.1 411.3M231.9 420.9L256.1 412.7M238.7 420.6L259.1 412.4M237.2 420.8L257.3 415.9M237.8 421.4L259.3 417.1M237.8 423.3L261 416.9M233.8 425.2L255.7 419.7M235.6 426.2L256.3 420.3M237 426.8L258.4 421.2M242.5 426.7L261.4 421.9M243.5 428.2L258.2 423.3M243 428.2L264.3 424.8M243.3 430.3L261.1 425.4M241.9 430.4L261.2 428.1M243 432.3L261.7 428.1M240.3 432.2L263.2 431.1M243 433.6L264.9 431.3M245.2 435.6L257.9 432M242.3 435.7L266.9 433.8M241.9 437.4L259.2 435.1M242.1 438.5L264.3 435.7M247.3 437.8L268.8 438.4M249.8 439.1L266.5 439.3M248.4 439.8L269.5 441M247.4 441.7L274.4 441.1M246.7 443L273 442.2M248.3 443L270.8 444.7M247.7 445.1L272.3 444.6M250.4 446.9L269.6 445M249.6 447.4L272.6 447M243.1 448.7L270.9 447.6M246.2 449.5L274.9 449.5M246.6 450.5L276.8 450.9M243.3 451.2L272.5 452.1M248.9 451.8L274.6 454.5M252.4 452.6L274.9 456.4M244.7 453.9L271.1 456.4M250.8 456.4L271.1 456.5M252.9 456.6L273.4 459.3M252.1 458L270.2 459.7M249.9 457.9L272.1 462.3M246.7 458.4L268.7 463.2M250.2 461.6L271.6 462.8M251 461.6L273.8 465.9M248.9 461.7L276.7 468.5M249.4 464.1L276.2 468.2M251.3 465L274.3 469.8M244.9 465.1L271.2 470.1M251.8 468.6L271.9 470.3M249.6 467.8L268.8 472.6M246.4 469.3L270.6 472.8M249.3 470.2L277 476.6M253.3 472.5L274.2 477.1M250.7 472.2L275.2 479.6M245.5 472.9L268.4 477.8M246.1 474.5L275.5 480.5M244.3 473L272.9 483.7M243.9 475.6L274.9 483.5M250.7 477.8L270.5 484.8M246.9 476.9L274.5 488.4M244.6 477.4L270.4 488.1M250.2 481.2L274.4 489.8M246.1 482.1L268.9 487.8M249.7 482.7L268.4 491.1M249.3 485.1L273 492.5M243.8 483.6L266.9 492M250.4 486.7L268.6 494.9M245.8 487.1L269.2 495.1M244.9 486.2L265.5 496.9M246 487.5L269.4 500.4M243.5 489.2L266.1 498.2M247.9 491L262.5 499.5M243.2 490.5L266.4 502M241 490L266.1 504.1M249.4 495.1L265 505M243.2 494.7L264.8 504.5M241.8 494.7L267.5 507.7M245.7 498.6L261.8 505.4M242.4 496.1L267.1 512.2M241.3 497.6L265.8 511.6M238.7 498.1L261.2 509.5M238.8 498.6L267.8 515.6M241.3 502.5L263 512.7M244 504.8L261.5 514.1M242.1 505.1L261.9 515.5M237 502L265 520.3M243.9 508.4L257.8 516.3M241 507.9L260.2 519.1M240.4 508.5L257.4 519.1M241.2 509.7L256.1 520.5M238.2 510.4L262.5 524.6M239 511.3L258.6 524.6M237.9 511.6L260.2 527.5M235.7 510.6L255.8 526.8M238.5 515.1L258.6 529.1M237.6 516.2L254.1 526.7M238.7 516.8L258.3 533.5M234.4 516.7L257 531.8M232.2 515L253.7 532.2M236.4 519.8L256.2 536M234.9 520.6L252.9 534.2M233.2 520.6L253.3 536.1M234.2 521.3L252.6 539.1M231 519.6L250.9 539.6M229.5 520.1L248 538.1M229.3 520.9L245.7 538.1M231.4 526.6L246.2 537.7M227.1 522.1L244.6 540M225.3 523.5L248.3 543.1M230.6 528.4L241.6 540.7M227.9 526.8L241.9 543.2M223.1 524.9L241.2 542.3M224.9 528.9L242.7 545.1M226 530.4L240.1 545.5M224.4 531.2L238.2 544.1M218.7 525.8L238.2 546.7M220.6 529.3L237.9 548.4M220.2 531.1L236.3 547.7" stroke="#75665b" stroke-width="1.4"/>
<path d="M147.2 446.5L146.6 446.7M147.1 445.2L146.4 444.8M147.9 444L147.4 443.1M149.2 443.7L149.4 442.8M150.5 444.2L151 443.6M151.1 445.3L152.2 445.1M151.8 446.8L153.1 447.2M151 447.9L152.3 449.2M150.3 449.2L151 450.9M149.1 449.7L149.4 452.5M147.8 450.4L147.4 452.1M146.3 450.4L145.2 452.3M145.1 449.7L143.6 451.2M144.3 448.6L142.3 449.7M143.5 447.5L141.5 448.1M142.4 446.3L140.8 446.4M143.3 445L140.1 444.5M142.5 443.3L140.1 442.5M143.4 442.2L141.5 441.1M144.1 441L142.5 439.6M145.2 440.3L143.9 438.2M146.5 440.1L145.4 437.3M147.6 439.1L146.9 435.6M148.8 438.5L148.9 436.3M150.1 438.9L150.7 436.4M151.6 438.7L152.5 436.5M153 439L154.4 436.7M154.2 439.7L155.7 438.2M155.5 440.7L157.3 439M156.3 441.8L159.1 440.1M156.4 443.3L158.8 442.3M157.7 444.3L160.7 443.8M158.2 445.7L160.8 445.7M158.2 447.3L160.6 447.4M157.2 448.3L160.9 449.6M158.2 450.4L161.3 451.6M157.7 451.7L159.6 452.8M156.9 452.8L158.9 454.7M155.9 453.8L157.9 456.2M155.4 455.6L156.8 457.7M154.4 456.6L155.7 459.4M153.1 457.9L154 459.6M151.8 457.9L152.5 461.6M150.5 458.7L150.7 461.4M149 459.3L149 462.4M147.5 458.7L147.3 463.4M146.3 458L145.4 462.9M144.9 458.5L143.4 462.9M143.2 458.9L141.9 461.7M141.8 458.4L140.4 461M140.7 457.5L138.8 460.3M139.5 456.9L136.8 459.7M138.1 456.4L135.6 458.4M137.5 454.7L134 457.7M136.4 453.8L133.2 456.1M135.2 453.2L132.1 454.4M134.2 451.9L129.8 453.7M133 450.9L129.2 451.7M132.9 449.1L129.8 450.1M132.3 447.9L129 448.2M132.1 446.6L128.9 446.3M132.5 445L127.5 444.6M132.7 443.6L127.7 442.8M131.7 441.9L128.3 441.2M133.2 440.8L128.6 439.4M134.3 439.7L129.7 438M133.8 438.1L130 436M134.1 436.8L130.9 434.3M135.2 435.8L131.1 432.2M135.8 434.3L132 430.9M136.3 432.7L133.9 430.3M137.7 432.1L134.8 428.8M138.7 431L136.3 427.8M139.7 430.3L137.1 425.2M141.4 430.5L138.8 424.7M141.9 428.1L140.9 424.9M143.5 427.6L141.9 423.4M145.2 428.8L143.7 422.5M146.3 427.3L145.6 423.2M147.7 426.3L147.3 422M149.1 426.2L149.2 423.1M150.7 427L150.7 422.5M151.9 428.4L152.8 420.5M153.3 427L155 420.7M154.4 427.8L156.4 422.7M156.8 426.4L158.6 421M157.1 428.5L160.1 423.1M158.9 428.2L161.7 423.9M160.8 427.9L164 423.7M162 429L165.6 424.4M162.3 430.9L165.9 426.7M163.6 431.3L168.4 427.2M164.2 433L170 427.7M166.9 432.7L171.4 428.8M166.7 434.4L172.7 430.5M168.2 435L173.9 432.2M167.3 437L174.7 433.9M168.1 438.5L175.3 435.1M169 439.3L175.9 437.3M171.3 440.3L175.1 439.1M170.6 442L177 440.3M170.2 443.4L177.5 442.2M171.4 444.7L177.9 443.9M172 446L179.2 445.9M172.2 447.4L177 447.6M172 448.8L180 449.6M172.7 450.5L177.8 451.1M172.2 451.7L177 452.8M171.5 453.1L177.8 454.8M171.4 454.7L176.9 456.2M171.9 456.2L176.9 458.5M170.5 457.2L175.9 459.9M170.6 458.8L175.7 462M168.9 459.2L175.7 464.4M169.3 461.8L174.7 465.2M166.8 461.2L172.8 466.6M167.3 463.6L172.7 468.7M166.8 465.2L170.9 469.5M164.9 465.1L169.8 471M163.2 465.4L168.1 471.5M163.3 468L167.1 473.1M161.7 467.4L165.2 474.1M161.6 470.9L163.8 474.2M160.2 471.3L162.4 475.6M158.7 471.8L161.6 477.9M157.9 472.9L159.3 478.1M156 471.6L157.6 478.6M154.9 473.3L155.8 478.3M153.1 473.1L154.9 480.8M151.7 472.2L152.6 478.7M150.3 474.9L151.3 480.3M148.9 475.7L149.5 481.9M147.7 475.2L147.3 481.9M146.3 475.3L145.4 481.4M144.7 473.4L144.2 481.1M143.1 474.7L142.5 479.7M141.9 474.3L140.1 481M140.8 473.4L138.7 479.1M138.7 474.3L137.2 478.9M137.8 472.6L135.4 478.8M136.1 473.5L133.9 477.3M135 471.9L132.3 477.4M132.8 472.8L129.7 478.2M132.4 471.3L129.1 475.3M131.5 469.4L127.6 475.2M130.1 469.5L125.8 473.9M129.8 467.7L124.7 472.5M126.3 468.8L123.5 471.9M126.6 466.3L122.5 470.7M126 465.2L120 470.3M123.8 465.3L118.4 469M122.8 463.9L116.9 468.2M122.8 462.4L115.9 466.3M120.6 462L116.2 464.1M122 459.2L114.6 463.4M119.6 459.3L115.4 460.5M120.6 456.7L112.5 460.5M117.4 456.8L113.1 457.9M118.8 454.5L113.2 456.4M117.3 453.7L111.6 454.7M117.5 452L109.5 453.5M118.6 450.6L108.9 451.5M116 448.9L111.2 450.1M116.1 447.5L108.6 448.5M115.7 446.3L111.4 446.3M116.2 444.8L110.2 444.7M114.3 443L109.3 443M116.3 441.7L108.1 441.2M114.9 440.2L109.8 439.4M115.1 438.8L108.7 437.3M115.5 437.2L111.3 436.3M115.4 435.8L110.2 434M115.9 434.6L111.1 432.2M118.3 433.6L110.8 430.6M117.1 431.6L111 428.8M116.9 430.1L111.6 426.8M118.9 429.2L112.9 425.9M118.2 427.4L113.9 424.1M120.1 426.7L112.6 421.4M121.1 425.9L113.8 419.8M121.1 423.5L115.5 419.6M121.4 422.1L116.7 418.1M123.1 421.3L117.9 417.4M124.2 420.6L116.8 413.6M124.4 419.3L118.1 411.6M125.6 418.3L120.8 412.2M126.9 417L120.6 409.9M128 416.2L121.1 407.6M129.1 415.5L123.2 407.2M130.5 414.9L124.9 406.8M131.3 413.7L126.7 406.3M131.4 411.3L127.1 402.5M132.5 410.2L128.7 401.5M133.7 409.2L131.4 403.4M134.8 407.6L131.6 399.4M136.6 409.2L134.9 402.1M138.4 410.3L136.3 401.5M139.3 406.2L136.8 398.5M141.2 408L138 396.2M141.8 404.6L140.3 396.6M142.9 405L143 398.8M145 404.5L143.8 397.4M146.3 404.3L145.7 396.7M147.5 404.8L147.8 394.6M149.5 407.7L148.8 396.2M150.8 405.9L150.9 393.3M152.1 403.4L152.9 396.3M153.3 403.7L155.2 394.6M154.9 404L156.3 397.5M155.8 406.6L158.8 394.3M157.1 406.8L160.9 393.5M159.5 404.6L162.4 393.3M160.7 404.1L164.5 394.7M161.8 407.9L165.3 394.7M164 404.1L166.9 398.2M164 408.3L169.3 396.8M165.8 408.3L169.8 399M168.6 406.4L172.4 396.8M167.8 410L173.5 399.9M169.4 410.4L175 400M171.9 408.1L176.5 402.1M173.8 408.8L177.9 401.8M173.3 411.4L179.8 402.8M175.2 411.3L181.3 403.6M175.9 412.2L183.1 404.9M179.3 411.6L185 404M180.8 411.7L187.1 404.8M181.2 413.3L187 407.7M183.1 414.2L188.9 407.5M181.1 416.8L189.8 410.4M184.7 416.6L190.6 410.9M183.5 419.4L194.1 410.3M186.1 418.6L193.7 413.5M187.5 419.1L194.3 415.7M188.6 420.7L196.5 415.6M189.2 421.6L196.3 418.3M189.5 424L199.7 417.3M189.1 425.3L201.9 418.9M189.7 427L200.9 420.8M192.3 426.6L200.4 424M190.3 429.4L202.6 424.4M194.4 429.6L204.9 425.2M192.2 431.9L206.3 426.5M194.8 432L203.7 429.9M193.7 433.7L204.9 431.6M194.2 435.1L207.4 432.7M196.1 436.6L208.2 433.8M198.2 437.3L205.7 436.6M197.4 439.6L205.2 437.5M198.2 440.1L207.1 440M195.1 442.6L208.8 440.6M198.9 443L210.3 443.3M197.9 444.6L208.3 445M199.7 446.2L209.5 446.6M199.7 448L208.1 447.9M197.8 449.2L207.5 449.8M198.8 450.6L207.9 451.7M197 451.7L208.5 453.7M199.4 454.1L209.6 454.8M200 455.2L212 457.6M199.5 456.7L212.3 459.4M197.3 457.5L206.9 460.2M200.2 459.8L206.9 461.8M198.5 460.6L212.1 465.5M198.8 462L208.8 466.6M198 464.3L209.3 467.4M199.8 465.5L211 471.3M198.6 466.8L208.5 472M194.9 467.2L208 473.1M198 470.7L208.6 475M196.2 470.9L204.6 475.5M196.7 472.3L205.8 478.7M194.6 473.9L205.6 479.3M193.3 474.5L202 479.5M193.4 476.3L202.5 481.9M193.3 477.4L201.2 483.8M188.8 476.4L202.6 486.2M188.8 477.4L199.8 487.2M191.1 481.2L199.5 489.1M190.2 482.1L198.2 490.6M189.2 484.4L198.8 492M186.7 483.1L195.4 492.4M187.4 485.9L193.7 493M185.9 487L194.1 495.3M184 486.3L192.6 497.3M184.1 488.5L190.7 498.2M182 489.6L187.4 495.2M181.4 490.8L186.8 497.7M177 487.5L184.2 496.4M176.7 487.9L183.6 500.6M178.1 493.2L180.6 498.6M173.4 489.7L180.6 500M172.4 490.5L178.4 500.1M171.2 491.5L177.7 502M170.6 493.5L177.2 505.1M170.7 496.5L175.1 505.5M167.9 494.3L172.4 502.9M166.1 493.3L171.3 504.9M166.1 497.2L169 504.1M164.8 498.2L167.7 505.3M163.5 497.7L165.6 505.8M162.2 498.3L163.8 505.9M160 496.9L162.9 508.2M159.1 496.3L160.8 510.5M157.6 499.6L159 506.8M156.2 500L157.5 508.4M154.5 498.9L155.8 507.4M153.7 498.6L153.4 508.5M152.2 498.5L151.8 511.5M150.1 497.9L150.8 508.1M149 501L148.7 510M147.1 498.4L147.5 506.6M146.4 497L144.9 507.9M143.9 499.6L144.1 510.7M143.7 496.7L141.6 506.1M140.9 500.1L140.9 506.8M140.2 498.7L138.1 509.2M137.9 499.5L137.7 505.7M137.4 499.4L134.7 506.6M135 498.4L134.4 505.4M134.4 498.7L131.1 506.7M133.4 494.8L130 506.7M131.1 497.5L128.6 504.8M130.6 496L125.9 505.6M128.6 495.3L126 502.6M127.1 494.1L124.1 503.8M125.2 495.4L121.7 503.9M125.6 492.6L120.7 500.6M123.6 493.3L117.6 502.7M121.2 493.7L117.4 500.5M119.9 493.6L114.8 500.4M117.9 492.7L114.6 499M117.6 491.2L113.7 496.5M117.4 488.9L110.5 497.9M115.2 488.7L111 495M115.6 486.9L108.1 494.7M112.8 487.3L106.2 495M111.9 485.5L107.2 492M111.9 483.2L106 490.9M109.3 484.5L103.8 489.8M108.2 483.8L103.2 487.7M106.9 482.4L102 487.1M106.3 481.1L100.2 486.1M106.3 478.9L101 483.6M104.1 478.4L97.4 484.6M102.9 477.5L95.9 483.4M102.1 476L96.4 481.2M101.6 475.2L96.4 478.4M102.8 472.6L94.8 477.6M101.3 471.4L93.2 477M98.7 471.2L93.7 474.7M98.5 469.8L89.8 474.4M96.7 468.7L89.4 473M97.4 467.5L89 470.4M99.4 465.3L90.7 467.6M97.8 464.4L87.6 466.9M98.3 462.7L88.7 464.8M97.5 461.4L86.7 463.7M94.5 460.4L87.7 461.9M95.6 458.3L87.1 460.8M93.6 457.6L86.3 458.8M95.1 456L85.8 456.9M92.1 454.9L82.4 455.8M92.9 452.7L85.7 454.2M91.2 451.5L82.4 452.8M91.5 449.8L81.4 451.2M91.7 448.7L84.6 448.9M93.7 447L82.8 447.4M92.1 445.7L81.2 445.5M91.5 444.5L83.9 443.5M90.3 442.7L82.6 441.9M90.5 441.1L82.6 440.3M92.2 440.2L83.3 438.1M90.5 438.3L82.6 436.5M91.3 436.9L81.9 434.7M92.5 434.9L82.8 433.9M94.2 434.4L81.1 431M93 432.3L83.4 430.2M93.2 430.8L82.2 428.2M91 429.1L82 425.7M93 427.7L82.7 424.6M94.9 426.4L82.9 423.3M93.7 424.8L83.8 421.2M92.6 423.1L87.3 420.5M93.1 421.3L87.1 419M93.2 419.8L86.4 416.7M94.3 418.4L88.1 415.9M94.2 417.6L85.9 411.7M93.3 415.3L89.4 411.8M97.7 415.7L89.4 410.4M98 414.5L88 407.1M96.2 411L89.3 406.5M96.8 409.6L90.7 405.4M97.9 407.9L92.5 405.3M101.3 408.5L91.9 402.9M100.4 407L93.8 401.1M101.8 406.8L95.6 399.8M101.7 403.7L95.5 398.7M103.9 404L94.8 395.5M104.2 402.5L96.2 394.1M102.5 399.3L98.4 393.3M105.3 399.7L100.3 393.2M103.9 395.8L99.9 390.4M107 396L100.7 389.9M109.1 396.7L101 387.2M108.8 394.2L104.2 388.2M108.9 393L105.3 385.7M111 391.1L105.4 385.4M110.8 389.7L106.4 382M113 389.5L107.6 381.7M114.6 388.6L109.2 381.8M115.6 387.7L109.9 379.1M116.1 385.9L111.3 377.8M117.1 385.1L113.2 377.3M118 384.3L115.4 377M120 384.3L115.7 374.5M121 381.1L116.6 374.4M122.1 382.7L118.8 371.8M124.3 382.7L119.9 371.8M125.4 382.7L122.3 371.9M125.7 378.5L122.3 367.4M127.5 377.6L124.6 370.7M127.7 376.3L127 369.4M129.4 374.7L127.5 366.9M130.8 375.1L130 368.3M133 373.1L130 366.3M133.8 375.7L132.9 365M135.4 372.7L133.9 364.6M137.5 374L135.2 364.4M137.8 372.2L137.3 360.2M139.7 371.7L139.1 363.4M142 371.9L139.5 359.8M143.6 371.2L141.2 361.9M144 371.2L143.9 358.8M145.6 370.6L145.6 360.6M147.5 368.3L146.8 360.9M148 368.8L149.7 360.8M149.6 372.4L151.2 359.9M151.7 372.4L152.3 356.4M153 371.7L154.1 360M155.5 368.8L154.8 359.7M155.8 372.5L157.9 356.8M158.3 370L158.5 357.7M159 366.8L161.9 356.8M161.6 369.1L161.9 358M161.7 371.8L164.5 359.2M163.6 372.6L166.1 355.9M165.8 368.1L167.6 358.7M165.7 373.5L169.5 360.2M169.3 369.1L170.7 358.2M168.6 373.9L172.9 360.4M172.4 369.6L173.3 361M172.7 371.5L176.3 359.3M173.8 374.9L176.8 360.9M176 370.6L180.5 358.6M177.5 371.9L180.9 361.1M176.8 375.2L184.3 360.1M178.8 373.9L186.5 359.5M183.3 370.6L185.7 362.2M184.2 372.4L187 363.1M185.1 372.3L191.3 360M184.9 377.4L190.7 363.2M188.8 372.5L193.1 363.1M188.7 374L195.3 364.8M192.2 372.6L196.4 364.3M193.8 374.2L198.8 362.3M192.9 377.4L198.7 366.8M196.6 375.4L201.1 365.3M194.4 380.7L204.9 363.2M195.6 379.6L205.4 367.8M197.7 381.3L208.2 364.3M201.1 378.7L208.1 368.2M199 382.5L212.5 366.7M202.3 382L210.1 370.9M202.4 384.2L212.3 370.9M204.1 383.6L218.2 367.8M207.1 383.1L216.5 371.6M206.8 385.3L216.9 373.9M211.2 382.3L221.3 372.5M211.1 385.2L223.2 372.5M212.8 385.6L223.8 374.3M210.6 388.2L224.2 378.1M216.7 386.4L222.6 379.9M214.3 390.9L224.5 379.8M216 391L227.3 380.1M213 393.7L232 380.4M216.9 392.5L234.8 380.5M215.6 396.4L235.9 380.4M219.8 393.9L234.7 385M219.6 396.7L236.3 385M223.6 395.9L235.9 387.1M220.5 398.9L238.1 388.7M226.4 398.1L236 390.6M222.3 402.4L241.3 389.2M226.4 400L242.5 392.5M227.8 401L246.1 392.5M223.2 406.6L241.9 394.9M225.6 405.2L243.5 398.1M225 408.2L245 398M232.9 405L245.3 400.9M230.5 409.1L246.2 400.8M233.8 408L248.2 403.2M230.6 410.8L248.9 404.9M235.7 411.7L252.5 403.8M235.7 413.2L249.2 407M230.1 416.2L250.2 409.3M238 415.3L251.5 410.1M237.9 417.7L255.5 409.7M237.6 418.4L251.6 413.9M238.9 419.2L257.6 414.3M234.2 423.1L253.7 415.9M234.9 423.3L255.6 418.5M240.8 422.9L263.2 419M241.8 425.8L262.5 419.1M236.7 428L260 421.8M241.8 428.7L257.6 423.9M239 429.1L258.7 427.3M243.4 430.7L261.5 427.6M243.1 432.2L259.1 429.8M237 434.4L261.5 431.3M244.4 434.3L260.1 434M237.6 436.9L261.4 435.1M248.3 437.9L265.3 435.9M245 438.8L271.2 438.3M242.1 441.3L266.1 439.2M246.3 441.2L272.3 442.4M247.3 443.8L276.8 442.5M240.9 445.7L266.7 444M249.4 447.1L273.7 445.8M248.5 447.1L265.6 449.1M251.9 449.4L268.5 450.1M247.9 450L278.2 453.2M242.6 452.5L276.2 453.1M246 453.4L268.9 455.3M248.7 455.5L274.5 457M242.2 454.9L269.5 459.9M251.2 458L271.1 461M253.7 459.4L267.2 462.7M247.8 460.5L274.1 465M252.5 463.3L274.9 466.2M243 463L268.8 467M252.2 465.7L272.8 470.2M242.6 466.1L272.4 470.7M248.9 468.4L277.2 474.2M250.4 469.6L268.8 474.9M244.6 469.7L277.6 478.8M252.8 473.8L269.1 477.9M250 475.2L273.6 480.1M251.5 476.8L267.8 480.8M250 478L276 484.9M246.4 478.8L268 483.7M243.3 477.6L268.6 487.8M242.7 480.1L275.3 490.3M243.3 481.6L269 490.3M247.1 484.7L275.3 494.5M245.8 484.6L270.1 495.7M244 486.3L273.5 497.9M248.7 489.4L266.2 497.4M243.7 488.7L266.3 499.4M249.6 493.8L264.7 499.6M246 493.6L271.8 505.1M245.4 494.9L269.8 506.2M242.2 494.6L264.4 505.8M246.8 498.6L262.6 506.9M244.6 497.9L262.3 510.2M242.1 498.6L257.9 509.1M244.7 501.8L261.5 513.1M241.4 502.9L266.1 516.2M240.4 502.2L257.9 515.3M242 507.1L258.2 515M237 503.7L263.3 522.7M242.5 508.6L256.3 520.7M239.9 510.8L262.8 524.6M240.5 513.2L260.7 525.2M241.9 515.3L254.6 523.9M239.2 513.8L252.8 526.2M238.2 517L256.5 528.9M234.5 514.9L251.9 528.5M230.3 512.6L252.8 532.4M234.6 519.2L252.1 532.7M235.5 520.8L249.2 533.9M228.5 517.9L252.7 537.7M227.1 518.3L246.9 535.1M230.9 524.6L251.6 540.8M227.4 521.4L248 542.1M225 521.5L241.9 538.1M221.6 521.5L246.7 543.4M226.3 525.6L243.9 546.5M225.9 527.4L240.7 545.6M227.2 531.9L240.4 546.8M219.7 525.6L241.3 550.6M224.3 532.1L234.9 546.9M221.7 531.9L236.9 551.4" stroke="#ece3d9" stroke-width="0.9"/>
<path d="M146.4 446.8L145.8 447M146 445.8L145.3 445.7M146 444.7L145.3 444.4M146.4 443.7L145.9 443.2M147.3 443.1L146.7 442.2M148.2 442.7L147.9 441.5M149.1 442.3L149.2 441.2M150.2 442.4L150.5 441.4M151 442.8L151.8 441.8M151.5 443.7L152.8 442.6M152.4 444.2L153.7 443.6M153 445L154.2 444.9M153.2 446.1L154.5 446.1M153.4 447.2L154.8 447.5M153.2 448.2L154.7 448.9M152.6 449L154.3 450.2M152.7 450.4L153.7 451.5M152 451.1L152.8 452.7M151 451.5L151.8 453.6M150.1 452L150.8 454.5M149.3 452.5L149.4 455M148.2 453.1L148.2 455.1M147.2 453.3L146.8 455.4M146.5 452.3L145.5 455.2M145.2 452.8L144.2 454.9M144.3 452.5L142.8 454.5M143.2 452.2L141.7 453.9M142.7 451.3L140.6 453.1M142 450.5L139.8 452.2M140.7 450.2L138.9 451.1M140.5 449.1L138.2 450.1M140.6 448.2L137.4 448.8M140 447.3L137.2 447.6M139.6 446.3L136.8 446.4M139.2 445.2L136.8 445.2M139.1 444.3L136.7 443.8M139 443.2L137 442.5M140.5 442.7L137.2 441.3M139.7 441.3L137.6 439.9M140.5 440.5L138.1 438.8M140.9 439.4L138.8 437.9M141.4 438.5L139.6 436.9M142.1 437.9L140.5 435.7M143.5 437.9L141.3 435M144.2 437.4L142.4 434.2M144.6 436L143.5 433.6M145.5 435.4L144.8 433.1M146.6 435L145.9 432.7M147.4 434.8L147.3 432.5M148.4 434.8L148.6 432.2M149.6 435L149.7 432M150.4 435.8L151.1 432.1M151.3 435.7L152.5 432M152.9 434.8L153.4 432.4M153.2 436.1L154.9 432.8M154.7 435.5L156.1 433.2M155.4 436.5L157 433.8M156.2 437L158.1 434.7M156.9 437.8L159.2 435.2M158.4 437.9L160.2 436.1M158.2 439.1L161 437.4M159.3 439.5L162 438.2M160.4 440.3L162.5 439.2M160 441.6L163.2 440.3M160.8 442.4L163.8 441.4M161.2 443.3L164.4 442.6M160.5 444.5L164.5 443.7M161.7 445.3L164.7 445.1M161.9 446.2L165 446.5M161.6 447.3L165 447.8M161.7 448.4L165.1 449M161.8 449.4L164.9 450.3M161.8 450.5L165.1 451.7M161.8 451.7L164.8 452.7M162.1 452.8L164.4 454.2M161.3 453.7L164 455.4M160.9 454.9L163.7 456.5M160 455.5L162.9 457.5M159.6 456.1L162.3 459.2M159.4 457.5L161.6 460.1M157.8 457.3L160.8 460.9M158 459.4L159.9 461.7M157 459.4L159 463M156.2 460.5L158.1 463.5M155.8 461.4L156.9 464.6M154.1 460.5L156.1 465.1M153.9 462.6L154.7 465.8M152.7 461.6L153.4 466.4M151.9 463.3L152.3 466.9M150.9 463.1L151.1 467.2M149.9 464L149.8 467.4M148.7 464.4L148.8 467.7M147.7 464.3L147.4 467.8M146.6 462.9L146.4 467.8M145.8 462.9L145 467.8M144.6 463.7L143.7 467.8M143.5 463.7L142.5 467.7M142.4 464.3L141.1 467.3M141.4 463.7L139.9 467.2M140.8 462.8L138.6 466.8M139.1 463.2L137.7 466.3M138.8 462.2L136.3 465.6M138.1 461.1L135.4 465.2M137.6 460.3L134.1 464.4M135.4 461.2L133 464.2M135.5 459.5L132.2 463.2M135.1 458.6L131.1 462.4M133.1 459.3L129.8 461.5M132.5 458.2L129.4 460.6M133 456.6L128.5 459.7M131.1 456.8L127.4 458.8M130.4 455.6L127 457.9M129.7 455.1L126.3 456.6M130.2 453.6L125.5 455.8M129.6 452.8L125.3 454.4M129.7 451.9L124.6 453.1M127.6 451.1L124 452.3M127.4 450.2L123.6 451M128.6 449L123.1 449.7M128.5 448.1L123 448.4M128.1 446.9L122.6 447.5M125.9 445.8L122.6 446.3M126.8 444.8L122.2 445M127.9 443.9L122.3 443.8M128 443.2L122.5 442.2M126.6 441.9L122.2 441M127.1 441.1L122.4 439.5M128.2 440L122.5 438.6M126.3 438.6L123 437.2M128.6 438.2L123.1 436M128.7 437L123.6 435M128.1 435.9L124 433.5M128.5 434.8L124.6 432.5M128.4 433.6L125.3 431.4M129.1 432.5L125.6 430.5M131.1 432.9L126.3 429.2M131.3 431.9L127.1 428.1M130.5 429.8L127.6 426.9M131.3 429.2L128.6 426M131.8 428.2L129.3 424.9M132.7 427.5L130 424M133.8 427.2L131 423.2M134.3 426L132 422.6M135.8 426.4L132.9 421.6M136.9 426L133.7 420.8M137.1 423.8L134.5 420.2M137.5 423L135.9 419.5M138.6 423.1L137 418.5M139.9 423L137.8 417.9M141 423.1L139 417.5M142.2 423.5L140.1 416.8M142.3 421.1L141.7 416.7M143.4 421L142.9 416.3M144.5 420.5L143.9 415.8M145.9 421.6L144.9 415.5M146.7 420.9L146.3 415.1M147.7 420.3L147.5 414.7M148.7 419.3L148.9 414.9M149.6 419.4L150.2 414.4M151 419.8L151.1 414.7M151.7 420.3L152.7 414.2M153.1 420.7L153.5 414.5M154.2 418.8L155.1 414.5M154.7 421L156.4 414.8M155.9 420.6L157.6 415M157 419.8L159.1 415.3M158.3 419.4L160.3 415.4M159.4 419.8L161.4 415.7M159.7 421.6L162.7 416M161.3 421.2L163.6 416.3M162 422.4L164.8 416.4M163.5 421.9L165.8 417.1M164.2 422.8L166.9 417.7M165 423L168.4 418.3M165.9 423.5L169.5 418.9M167.6 423.1L170.9 419.1M168 423.8L172.3 419.9M167.9 425.8L173 420.6M169.4 425.4L174 421.8M169.1 427.3L175 422.3M170.5 427.7L176 422.9M170.5 428.7L177 423.9M172.9 428.2L177.5 425.1M173.6 429L178.8 425.6M173.3 430.8L179.3 426.3M173.9 431.5L180.1 427.4M176.3 431.5L181 428.3M176.8 432.4L181.8 429.4M177.3 433.4L182.1 430.5M176.1 434.5L182.9 432.1M177.7 434.8L183.9 433.2M176.4 436.7L184 434.2M176.9 437.7L184.6 435.1M177.4 438.1L185.1 436.8M179.3 439L185.7 437.7M179.9 440.2L186 438.6M180.5 441.2L186.3 439.7M180.1 442.4L186.8 440.8M180 443.3L187.4 442.1M178.2 444.2L187.1 443.7M180.3 444.9L187.7 445.2M178.7 446.2L187.9 446.2M179.6 447.5L187.6 447.1M181 448.4L187.8 448.5M178.9 448.9L187.6 450.2M180.7 450.4L188.1 451.1M182.2 451.7L187.6 452.4M178.8 451.7L187.4 454.1M180.3 453.6L187.6 454.8M180.9 454.5L187.4 456.3M180.8 455.4L186.9 457.8M177.5 455.7L186.6 458.5M180.3 457.6L186.7 460.1M178.5 458.3L186.1 460.9M177.1 458.6L185.9 462.4M178.8 460.2L184.9 463.7M178.2 461.4L184.4 464.4M177.1 461.8L184.6 466.1M176.4 462.2L183.1 467.1M176.4 463.5L182.8 468.2M177.9 466.1L182.4 469.1M176 465.7L181.9 470.6M175.5 467.1L181.1 471.1M175.9 468.1L180.1 472.5M173 467.4L179.5 473.1M174.2 469.9L178.8 474.2M172 469L177.9 475.3M171.1 469.4L177.3 476.6M172.2 472L176.2 477.3M171.2 472.6L175.5 478.3M170.8 473.9L174.6 479M168.2 472.3L173.8 479.8M167.8 474L173.3 480.6M168.1 476.2L171.9 480.8M166.5 474.9L170.6 481.9M166.8 477L169.4 482.8M165.3 477.7L169.1 483.5M165.3 478.9L167.5 484.5M162.9 476L166 484.5M163 479.1L165 485M161.2 478L164.3 485.6M160.2 478.1L163.1 486.1M159.8 480.6L162.3 487M158.8 479.2L160.5 487.6M157.6 480.4L159.8 487.4M157.1 482.1L158.4 487.7M156 481.1L157 488M155.4 482.6L155.7 488.6M153.9 480.1L154.4 488.6M153 481.3L153.4 489.5M151.9 484.2L152.5 489.4M150.6 481.4L151.3 489.5M150 482.7L149.6 489.5M148.3 482.2L149.1 489.6M147.8 484.4L147.3 489.6M146.6 481.5L146.4 489.5M146 482.1L144.5 490.2M144.6 484.4L143.5 489.5M143.7 483.4L142.1 489.7M142.2 483L141.5 489.6M141.5 481.1L140.2 489.5M140.2 483.5L138.7 489.3M139.4 483.2L137.3 489M137.9 482.7L136.7 488.4M137.7 481.3L135 488.1M136.2 481.1L134.3 488.1M136.1 479.5L132.6 487.6M134.1 481L131.6 487.7M133.2 481.2L130.3 486.8M132.5 479.7L129.3 486.5M130.6 480.5L128.7 485.9M130.2 480.5L126.6 485.4M129.5 479.4L125.7 484.6M128.4 479L124.8 483.9M127.1 478.6L123.7 483.9M126.1 478L122.8 483.1M126.4 475.9L121.8 482.4M125 476.2L120.5 481.7M123.9 476.3L119.5 480.5M122.9 475L119.1 480.2M121.9 475L117.9 479M123.2 472.4L116.4 478.5M121.7 472.5L115.9 477.3M120.4 471.6L115.3 477M119.4 471.6L113.9 476M119.2 470.4L113.4 474.7M117 471.1L112.3 473.7M116.3 470.2L111.4 473M116.9 468.5L110.8 471.8M115.9 467.3L110.5 471.3M114.2 467.4L109.5 470.1M116.4 464.9L108.9 468.9M113.4 465.3L107.9 468.2M113.9 463.5L107.6 467.4M113.3 462.9L107 465.9M112.2 461.9L106.4 465.3M112.1 461.5L105.7 463.5M111.1 460.8L105.1 462.4M110.3 459.8L104.7 461.3M111.4 457.9L104.3 460.6M111.7 457L103.4 459.3M110 456.1L103.2 458.4M111.3 455.1L102.9 456.8M108.8 454.4L102.5 455.9M110.7 453L102.1 454.6M107.6 452L102.6 453.8M107.8 451.3L101.4 452.3M107.2 450.7L101.7 450.5M107 449.4L101.1 449.7M107.3 448L100.9 448.7M109.6 446.9L101.1 447.4M107.7 446.3L101.1 445.7M107.9 444.8L100.6 445M106.2 443.8L100.6 443.6M107.7 443L100.4 442.2M109 441.5L101 441.6M107.3 440.9L100.4 439.6M106.7 439.2L101 439M109.2 438.5L101 437.9M109.4 438.3L101.2 435.8M107.1 436.5L101.3 434.8M106.9 435.2L101.2 433.7M106.5 434.2L101.4 432.2M108.2 433.6L101.3 430.9M109.7 432.5L101.6 430.3M109.5 431.6L101.4 428.6M110.3 430.4L101.9 428M109.8 429.7L101.9 425.9M108.6 427.8L102.5 425.2M108 426.2L102.5 423.8M110 426.3L103.1 422.5M110.6 424.8L103.2 421.9M111 424.2L103.3 420.1M110.7 423.4L104.7 418.8M112.7 422.5L104.4 418.3M111.4 420.8L105 416.7M112.1 420.7L106.1 415.2M112.6 419.6L106.5 414M112.6 417.4L106.5 413.6M115.2 418.7L107.3 411.9M114.7 416.6L107.8 411.3M116.4 416.7L108.3 410.1M114.9 414.3L109.2 408.9M114.3 412.5L109.9 407.4M115.1 411.8L110.4 406.1M116.7 411.1L110.7 405.6M118.7 412.5L112.4 404.7M120 411.7L112.5 404M119.9 410.4L113.3 402.6M118.8 407.5L114.1 401.4M119.3 406.3L115.1 400.7M121.9 407.7L115.6 399.6M121.5 405.1L116.7 399.4M122.5 405.8L117.7 397.3M122.9 403.6L118.5 397.3M125.7 406L119.4 396.6M124 401L120.3 395.7M125.6 401.8L121.2 394.5M126.2 400.9L122.6 394.2M127.6 402.2L123.8 393M127.2 398.6L124.6 392.2M128.9 399.4L125.6 391.7M129.5 397.9L126.6 391M130.5 397.6L127.6 390.1M131.3 396.1L128.5 389.6M132.9 396.8L129.4 389.3M134.7 399.1L130.4 388.3M134.2 394.9L132 388M135.3 395.3L133.2 386.8M136.2 394.9L134.6 386.8M137.2 394.8L135.8 386.2M139.1 397.9L136.8 385.9M139.1 393.9L138.2 385.2M140.8 395.7L138.9 384.6M141.9 392.9L139.7 384.7M142.9 393L141 384.5M143.4 393.2L142.9 383.8M144.8 393.8L143.6 383.3M145.9 394.5L145 383.5M146.4 394.5L146.8 382.3M147.5 390.4L147.8 382.6M149.1 394.3L148.4 382.7M149.4 392L150.6 382.1M150.7 393.1L151.4 382.6M152.3 392.6L152.1 382.6M152.6 393.8L154.1 382.2M154.2 390.2L155.1 381.8M155.1 392L156.3 382.5M155.6 393L158 382.4M157.8 392.2L158.1 382.2M158.7 392.4L159.6 381.5M159 392.6L161.6 382.4M160 395.4L162.2 382.1M160.5 394.3L164.3 382.8M162.2 392.8L165.2 383M163.6 392.2L166.2 383.3M164.6 391.2L167.9 383.4M165.8 391.2L169 383.8M166.6 393.7L170 383M167.3 392.8L171.8 383.9M167.9 394.5L173 383.9M168.8 396.9L173.4 383.9M170.1 394.6L175.4 384.7M170.7 397.1L176 385M172 395.9L177.3 385.9M173.4 395.3L178.4 386.6M173.6 396.6L179.9 387M174.4 397.8L180.8 387.5M176.2 397.7L181.5 387.5M175.9 399.9L182.7 388.2M178.7 396.3L184.3 389.1M178.1 400.1L184.9 389.4M180.7 398.9L185.5 389.6M181.3 399.5L186.8 390.4M181.2 401.4L188.3 390.3M184.4 398.1L189.6 391.6M185.4 399.7L190.2 391.6M183.3 402.8L191.9 393M185 403.2L192.2 393.4M187 401.7L193.4 394.7M187.9 402.4L194.9 394.8M189.2 402.7L195.7 395.5M191.1 403L195.7 396.7M191.3 404.3L197.5 396.6M191.6 405.7L197.9 397.8M190.3 407.4L199.4 399.2M192.7 406.8L200.2 399.8M193.3 408.2L200.4 400.7M193 408.9L202.5 401.7M195.5 408L203.4 402.7M196.5 409.8L203.6 402.7M198.2 409.8L204.7 403.5M194.3 413.5L205.1 405.3M198.3 411.7L205.9 406.5M200.3 411.5L207.5 407.1M200.7 413L208 407.7M200.3 413.7L208.7 409.7M202.3 415L208.9 409.6M201.9 416.3L209.5 410.9M202.7 417L210.3 411.9M200.7 418.9L211.2 413.2M203.4 418.2L212.2 414.7M204.3 418.8L212.9 415.9M204.7 420.7L212.9 416.2M204.6 421.2L213.9 418M206.7 421.4L214.4 419.1M203.3 424.9L215.2 419M205.4 425L215.8 420.3M207.2 424.8L217 422M205.4 427.5L216.2 422.4M208.1 426.9L217.1 424.3M208.4 428.5L217.9 424.7M207.5 428.9L219.1 426.8M205.9 430.9L218.9 427.6M208.7 431L218.9 429.1M208.4 431.8L220 430.5M206.4 433.5L221 431.3M210.1 434L220.3 432.5M212.5 434.3L221.2 434M212.9 436.3L221.6 434M211.9 437.3L222 435.5M210.7 438.8L222 436.4M211.6 439.6L222.5 437.9M212.9 440.6L223.2 439M211.6 441.6L222.5 440.4M212.1 442.7L223.8 441.4M209.8 443.2L223.9 443.5M214 444.6L223 444.2M210.7 445.9L223.4 445.1M209.3 447.1L223.7 446.1M210.2 447.1L224.8 448.6M212.5 448.6L224.1 449.4M215.3 449.7L224 450.8M213.3 451.3L224.4 451.2M211.5 452.1L225.2 452.6M214.4 453.5L225.9 453.9M216.1 453.8L224.9 456.1M212.4 455.4L225.3 456.2M210 456.1L226.2 457.6M216.1 457.3L225.1 459.8M214.2 458.4L226 460.7M214.2 459.8L225.9 461.6M214.7 460.4L225.6 463.5M211.4 460.6L225.4 464.9M210.5 461.9L226.1 465.8M214.2 464.5L226.1 466.4M213.3 464.2L226.4 469.1M215.1 466.7L226.4 469.4M214.1 466.6L224.9 471.2M208.7 466.8L225.3 471.6M210.3 468.5L225.7 472.9M210.3 468.8L225.5 475.2M211.4 470.3L225.3 476.4M212.5 471.7L224.7 477.7M211 472.9L224.1 478M208.3 472.1L223.6 480M209.6 474.5L224.2 480.8M212.6 476.1L223.2 482.9M211.6 476.9L223 483.9M209 477.7L223.6 484.5M211.4 479L223.4 487.3M206.9 478.7L222.2 486.8M208.6 480.5L222 488.5M209.2 481.7L222.3 490.5M205.4 481.8L221.5 490M207.5 484.2L221.2 491.5M205.3 484.1L220.7 492.4M208 486.3L220.1 494.5M206.4 486.1L219.3 496M206.1 487L219.1 497.5M202.2 486.2L218.2 497.4M206 489.2L217.6 499.9M205.2 491.5L217 499.2M203 490L215.6 500.9M201.8 490.4L215.1 502M202.7 492.9L214.9 503M200 490.8L213.6 505M198.2 491.2L213 505.2M200.1 495.4L213 505.5M199.6 496.4L211.3 505.7M200.1 496.6L210 508.2M196.5 494.8L208.5 507.9M193.8 494.1L208.5 509M198.2 499.6L206.2 509.1M193.1 494.9L205 510.5M196.3 501.1L205.2 511.4M194.9 500.2L203.1 511.8M193.2 499.6L201.8 512.4M190.3 499.5L201.9 512.3M189.4 498.9L199.8 512.9M190.3 500.9L198.6 514.5M186.8 499.2L198.5 514.7M186.7 500.2L195.1 512.8M187.2 502.4L193.6 513.3M185.5 502.9L193.1 513.4M183.6 500.1L191.3 515.2M183.7 503.2L190.6 515M183.3 504.4L189.9 516.5M182.5 504.1L187.8 516.6M182.1 507.1L187.4 516.6M178.7 503.3L186.5 517M179.3 506.6L185.4 517.7M178.1 506.2L184.3 518.6M177.8 507.6L183 519.4M175.4 506L182.4 519.6M174.8 507.6L181.5 520.1M174.2 508.6L180 520.3M173.3 508.9L178.6 520.5M173 508.4L176.5 521.6M171.3 509.2L176.4 522.2M169.9 508.9L175.3 522.1M169.5 509.8L173.5 522.2M168.7 511L172.5 522.7M168 510.3L170.7 523.3M166.7 509.9L169.7 524.1M165.7 510L168.4 524.1M163.6 510.2L168.4 524M163.7 510.3L165.9 524.8M162 508.1L164.8 524.7M161.7 511.1L163.3 524.3M160.9 513.3L162.2 524.1M160.1 513L160.7 524.9M157.8 509.3L160.2 524.6M158 513.1L158.2 525M156.4 511.6L157.3 525.1M155.8 512L155.5 524.6M153.8 511.8L155.4 524.8M152.5 511.1L154.5 524.9M151.4 510.6L153.2 524.7M150.7 514.1L151.8 524.7M149.4 509.2L150.8 524.5M148.9 513.3L148.9 524.7M147.3 508.6L148.4 524.3M146.8 513.7L146.4 524M146.3 508.7L144.8 523.8M144.8 513.6L143.7 524.4M143.1 512.6L143.3 523.9M142 511.7L142.3 523.2M141.2 511.2L140.8 523.2M140.8 511.4L138.7 523.4M139.4 509L138.3 522.4M139.2 509.6L136.1 522.2M137.4 510.7L135.6 521.6M136.9 510.3L133.7 521.4M134.6 511L133.9 520.9M135.2 508.1L131.2 521.4M133.1 511L130.7 520.1M132.3 507.5L130.2 519.8M131.7 507.9L128.4 519.4M130.3 508.9L127 519.9M128.9 508.3L126.3 519.7M128.7 509L124 518.8M128.6 505.3L123.3 517.9M126 508.6L122.5 517.6M124.4 508.5L121.8 517.3M124.1 507.3L120.3 516.7M124.4 504.8L118.6 516.4M123.7 503.5L117.6 516.1M121.9 504.7L116.7 515.3M119.7 505.8L116.1 515M120.4 501.5L115.2 514.8M119.1 503.2L113.3 514.1M118.6 502.4L112.1 512.8M116.8 502L111.8 512.8M116.1 503.1L109.8 511.4M115.6 501.5L108.9 511.1M115.4 498.5L108.2 511.5M113.3 500.9L107.1 509.6M113 499.4L105.9 509.3M110.2 500.2L105.5 509.3M110.3 499.7L103.6 508.2M109.4 498.1L103.3 507.7M108.6 497.3L102.2 507.2M109 494.8L101.9 506M107.8 495.7L100.2 504.8M106.8 494.8L99.4 504.3M104.8 496.3L98.3 502.9M104.7 493.9L97.8 502.6M106.3 491.9L95.9 501.3M102.6 493.9L95.1 500.9M103.1 492L94.4 499.9M100.9 492L94.1 499.2M101.1 490L93.3 498.6M101.5 488L92.7 497.9M99.1 489.3L91.5 496.4M100.1 487.3L90.4 495.6M96.6 488.3L89.7 495.2M96.7 487.5L88.9 493.5M96.8 486.7L87.9 492M97.7 483.8L87.8 491.6M95.4 485.1L86.1 490.3M94.4 483.9L86.1 489.4M94.4 483.3L84.9 488M93.4 482.5L84.1 487.2M93.9 480.3L83.2 487M91.8 479.9L83.4 486M92.2 479.4L81.6 484.5M92.8 477L81.9 483.9M89.6 478.5L80.8 482.1M90.8 476.1L80.2 481.6M90.9 474.6L79.9 480.8M87.5 475.6L78.9 479.3M87.7 474.2L78.5 478.2M88.2 472.2L78 477.8M87 472.3L77.5 475.9M86.1 471.8L77 474.4M85.5 470.3L76.4 474M85.4 469.6L75.3 472.6M84.7 467.8L75 472.4M86.8 466.8L75 470.2M86.6 465.6L74.6 469.1M84.1 464.6L74.2 468.9M85.7 463.2L73.8 467.5M83.7 463.1L73.2 465.8M85 462.3L72.1 464M81.5 461.1L72.4 463.8M81.1 459.9L72.4 462.8M82.2 459L71.1 461.4M83.3 458.4L71.2 459.3M84.4 456.5L70.3 459M80.1 456.7L70.6 456.9M83.2 454.7L70.3 456.4M82 453.6L69.6 455.4M83.7 453.2L69.9 453.2M81.8 452.1L69.4 452.3M83.4 450.6L69.2 451.4M79.1 449.4L69.4 450.7M83.1 449L69.2 448.5M79.2 447.3L68.8 448.2M78.8 446.3L68.1 446.9M83.1 446L68.2 444.7M79.8 444.4L68.7 444.2M80 443.7L68.9 442.5M78.8 442.7L68.7 441.2M82.7 441.8L68.6 440M81 440.4L68.5 439.1M82.5 440L67.9 437.1M79.9 438.1L68.5 436.7M79.5 436.9L67.8 435.5M78.9 436L68.6 434M79.6 434.2L68.5 433.7M79.7 433.1L68.8 432.5M80.8 432.8L69.1 430.7M79.1 431.6L69 429.2M82.9 430.8L68.2 428.4M81.7 430.2L69.2 426.5M81.1 429.2L69.3 425M80.5 426.8L69.5 425.1M81.3 426L69.6 423.7M80.3 425.5L70 421.6M81 425L69.8 419.7M80.1 422.3L70.2 420M83.4 422.5L70.4 418.6M82 421.2L70.8 417.1M83.3 420.5L70.4 415.7M83.2 419.6L71.5 414.6M84.9 418.8L71.5 413.7M84.9 417.5L71.9 412.7M85.1 416.2L72.1 411.7M82.1 414.9L72.4 409.1M82.4 413.4L73 408.5M83.8 413.2L73.4 407M83.7 411.1L73.5 406.6M84.1 410.3L73.5 405M86.1 410.7L74.8 403.6M85 409.2L75.4 402.3M84.1 407.4L76.3 401.4M88.2 407.8L76.1 400.9M89.6 407.3L76.5 399.8M86.5 403.9L76.3 398.4M85.9 402.9L77.3 396.8M89.7 404.2L78.2 395.8M90.1 403.1L78.3 394.7M89.5 401L79.3 394.2M88.7 399.1L79.9 393.1M91.4 399.6L80 391.9M90.8 398L81 390.9M93 398L80.8 389.7M90.1 394.9L82.4 388.5M93.2 395.7L82.9 387.9M91.2 393.8L84.3 385.9M93.7 393.2L83.7 385.3M94.1 391.9L84.4 384.6M95.1 392.9L86.5 383.2M97.5 392.8L86.4 382.6M97.3 390.7L87.1 382M95.8 388.6L88.3 380.3M96.8 388.5L89.3 379.1M97.4 387.4L90.1 378.3M97.1 385.5L91 377.3M100.6 387.1L91 376.6M99.3 383.8L91.8 375.5M100.4 382.9L92.5 375M101.4 383.4L94 373.9M101.5 382.6L95.4 372.7M102.8 380.8L95 372.2M104.4 381.5L96.2 371.4M104.4 380.4L97.7 370.4M106.5 382.3L98.9 369.3M106.8 380.5L99.5 368.6M105.7 377.7L100.5 366.8M107.4 376.7L101.1 367.2M106.6 375.3L103 365.8M108 375.4L103.9 365M110.5 374.6L103.4 365.1M111.9 376.9L105.3 363.7M110.6 372.2L106.3 363M114.6 376L106.5 362.9M114.6 375.9L108.5 361.6M114.9 372.2L108.3 360.4M114.1 371L110.9 359.6M115.8 372L111.8 358.7M116.6 369.2L112 358.4M117.8 369.7L113.2 357.5M117.9 367.9L114.8 357.5M119 367.4L115.5 356M121.5 370L116.2 355.6M122.3 369.5L117.3 354.9M124.1 369.2L117.6 354.6M123.9 364.8L118.7 354.3M124.5 364.7L120.2 353.3M124.9 364.6L121.8 351.8M126 364.9L123.2 351.8M127.8 363.6L122.9 350.4M127.7 363.5L125.4 349.8M129.7 364.8L125.8 349.5M131 363.7L126.5 349.3M130.1 360.4L128.9 347.6M132 360.2L129.1 347.1M133.1 362.5L130.7 346.4M134.7 363.4L131.5 346.5M135.5 361.4L132.5 345.7M136.1 358L133.7 345.7M136.8 356.4L135 344.7M138.2 358.4L135.9 343.5M138.9 360.5L138 344.1M139.5 355.8L139 342.6M140.3 358.2L140.9 342.4M141.2 354.1L141.9 342.1M143.6 355.7L141.7 341.7M144.9 356.9L142.7 341.6M145.3 356.3L144.6 341.1M146.8 359.8L145.5 340.8M147.5 354.8L147 340.7M149 354.8L147.6 340.1M149 357.6L150.1 340.2M150.1 357L151.2 338.9M151.2 358.9L152.4 339.7M152.9 355.2L153.1 338.7M154 354L154.2 339.1M155.4 353.2L155.2 338.6M155.8 352.7L157.3 338.4M157.5 352.7L157.8 339.4M158.5 358.1L158.4 339M158.9 355.7L160.8 338.4M160.5 352.8L161.7 339.4M160.1 356.4L164.1 339.6M161.4 358.5L164.6 339.3M163 351.9L166.5 339.4M164.5 357.2L166.2 339.2M165.2 354.5L168.5 338.9M167.6 353.3L168.4 339.1M168.1 353L170.5 338.8M168.9 351.8L172.3 339.5M169.7 351.7L173.8 340M170.4 358.5L173.7 339.9M171.6 358.9L174.6 340.1M173.6 355.4L175.9 339.9M174 355.7L178.2 339.1M175.7 355.7L178.7 339.4M175.4 356.4L181.1 340.3M177.1 356.4L181.9 339.5M176.3 359.2L184 340.5M178.5 354.9L185.7 340.3M178.9 360L186.1 339.7M182.8 353.1L187.1 339.4M180.8 359.7L188.7 340.7M184.3 353.9L190 340.3M185 357.7L190.1 340.5M183.8 359.5L193.3 340.4M187.2 357.9L192.8 340.1M188 358.3L194.6 339.5M187.4 361.4L195.6 341.1M189.9 355.5L198.6 341.1M190.6 359.8L198.2 340.8M190.5 361.5L199.5 341.9M192.7 357.5L201.9 342.1M196 355.9L202.1 341.8M193.8 362.9L203 341.8M195.7 360L205.1 342.3M198.7 358.6L205.6 341.9M198.7 356.7L208.9 343.3M200.4 359.6L208.1 342.7M202.3 358.2L210.2 341.9M203.1 358.2L211.7 342.8M200.4 362L214.2 344.2M201.5 364.1L214.5 343.6M204.8 361L215.9 343.7M204 363.4L216.9 345.1M208.3 358.4L219.5 344.2M208 362.8L218.9 344.5M210.4 361.4L220.3 344.7M210.5 360.9L222.1 346.9M209.1 364.6L224 346.4M211.5 363.4L225 346.8M212.1 365.5L225.1 347.3M213.4 363.2L227.5 348.8M215.3 362.5L229.7 348.2M215 366.1L229.3 348.8M214.9 366.1L231.2 350.5M219 363.3L232.4 350.5M219.4 365.2L233.7 350.1M219.7 366.4L234.3 351.4M222.7 366L235.2 350.5M221 367.7L236.3 353.3M224.6 367.9L236.6 351.8M224.7 367.3L238.3 354.2M222.5 372.4L238.9 353.8M227.9 368.7L239.9 354.3M222.4 374.4L242.2 355.1M228.2 370.9L242.3 355.9M227.3 373.4L244.3 355.5M225 375.7L245.8 357.4M229.1 373.2L246.3 358.6M228.2 375.6L248.2 358.4M229.4 375.2L250 359.4M229.5 377.9L249.2 359.9M233.3 376.5L249.8 360.4M236.6 374.4L252.2 360.9M231.9 379.3L252.7 362.5M237.8 377.3L252.8 362.4M239.6 374.6L256.2 364.4M237.3 378L257.1 364.9M236.3 382L257.5 363.8M235.8 382L257.9 367.1M242 380.6L259.2 365.5M240.3 382.7L259.8 367.1M239 384.7L261 367.8M237 387L261.5 369.4M238.8 385.2L263.5 371.8M241.5 384.8L264.4 372.5M239.4 388.9L265.3 371.4M244.3 386.1L267.2 372.9M246.7 385.6L267.1 374.7M242.8 388.6L269.1 375.7M250.7 386.7L268.2 375.7M242.7 390.9L269.8 378.3M253 388.7L269.5 377M248 391.4L271.7 378.6M248.7 391L272.2 381.3M252.5 391.6L272 381M253.4 393.3L272 381.3M251.5 394.4L274.3 382.7M250.2 396.1L274.2 384.2M252.9 395.5L275.5 385.5M253.5 397.1L276.3 385.7M255.8 397.9L276.2 386.2M251 400.3L277.8 387.9M255.4 400.6L277 388.4M255.7 399.7L278.4 391.4M251.3 403.5L279.2 391.3M251 404.2L281 392.6M256.5 403.8L281.6 392.8M259.1 402.7L280.8 395.9M254.3 407L282.8 394.7M263.6 405.3L281.5 396M259.9 405.4L283.9 399.2M257.5 407.9L285.3 399.4M254.4 410.6L284.5 400.1M261.8 408.5L285.5 402.1M262.2 409.8L285.9 402.9M256.1 412.1L286.2 404.9M263.6 412.3L286.9 404.3M264.3 411.8L288.9 406.7M258.5 416.5L286.9 406M264.9 415.3L288.3 407.7M267.6 414.5L288.5 410.3M265 417.6L288.8 409.9M259.4 418.7L291.2 412.2M266.5 419.3L291.3 412M260.9 420.9L292 414.1M262.9 421.9L291.1 414.9M267.8 422.5L292.1 415.4M267.4 423L291.9 417.5M271 423.5L292 418.6M260.9 425.7L292 420.7M268.6 426.6L293.7 420.3M266.6 426.9L293.4 422.9M272.1 428.1L292.9 423.1M266.1 429.8L294.7 424.3M270.9 428.8L293.9 427.4M266 431.5L294.7 427.3M269.8 431.3L296 429.3M268 432.4L296.6 430.7M272.3 432.7L295.2 432.5M265.7 434.7L296.3 433.2M265.2 436.9L300.5 432.7M266.1 436.2L301.7 436M280.3 437.1L305.7 435.9M278.7 437.6L307.4 437.8M280.3 440L309.4 437.3M277 439.5L308.5 440.7M279 441.5L309.8 440.5M279.1 443.2L309 441M274.3 442.6L309.9 444.4M277.8 444.1L310.3 445M283.5 446.9L310.9 444M280.7 446L310.7 447.6M277.9 448.3L311.1 447.3M272 449.6L311.7 447.9M280.1 450.5L312.7 449.7M280.6 450.4L312 452.3M271.9 451.3L311.5 453.3M277 452.8L311.2 454.2M284.2 452.8L312.1 457.3M280.3 455.8L311.4 455.8M283 457.5L311.6 456.6M282.8 456.6L311.9 460.1M276.1 457.1L312.7 461.4M282.4 459.7L311.4 461.3M277.6 458.6L311.8 464.7M281 462.1L310.9 463.3M275.9 461.8L313.5 465.6M278.2 463.4L311.2 466.3M272.7 463.9L313 467.4M276 464.1L311.8 470.2M280.6 465.2L311.6 472.1M277.2 466.3L311.8 472.8M271.7 467L311.2 473.1M280.9 469.2L311.3 474.9M277.3 469L311.9 477.1M283.7 473.3L312.7 476M278.6 471.4L311.2 479.4M277.5 473.9L310.5 478.4M278 474L311.5 481.1M280.4 475L310.2 482.8M276 474.8L310.3 484.6M272.2 475.6L309.4 484.8M273 476.7L310.9 486.5M271 477.8L309.1 486.5M282.2 480.3L310.1 489.9M272.1 480.2L308.8 489M273.7 481.5L309.3 490.6M274 482.1L308.5 492.4M274.6 484L309.4 493.1M273.6 483.4L308.8 495.9M269.9 484.7L309.8 495.6M276.7 488.1L307.8 496.1M276.1 488.5L306.3 497.5M276 488L306.2 500.8M282.3 491L306 502.3M271.1 490L307.5 501.9M282 496L306 501.6M273.7 493.6L307.5 503.9M277 494.4L304.3 506M274.5 494.6L305.7 507.8M280.1 497.2L303.6 509.1M271.5 497.2L304.7 508.1M272.1 496.1L304.1 512.2M274.7 498.2L304.8 514M273.4 499.8L303.1 513.3M267.5 498.2L302.6 514.6M277.1 505L303.4 514.6M268.7 502.7L303.4 515.3M276 507.3L303.7 516.9M276 507L302.3 519.4M267.6 505.3L301 518.6M276 509L300.5 521.7M265.7 503.9L301.3 524.9M275.2 510.3L299.5 524.9M265.7 508.8L301.1 524.2M265.8 507.8L299.6 527.6M269.9 510.6L297.4 528.4M266.9 511.8L298.5 528.3M267.9 511.7L298.1 531.9M266.8 512.2L297.2 532.8M264.2 514.7L297.9 531.1M264.1 513.5L295.7 534.1M272.6 522L296.2 533.2M261.7 516.4L296 534.7M270.3 520.9L294.9 537.9M269.6 524.1L295.4 536.9M268.4 522.4L292.5 539.2M266.4 524.2L294.7 539.8M267.8 525.7L292.3 540.5M261.6 521.2L291.8 543.7M268.1 526.4L290.1 544.6M268.2 530.3L291.1 543.7M259.2 525.5L291.2 544.9M257.7 523.6L290.1 548.3M264.3 531.6L289.2 546.7M265.2 533.5L289.8 548.7M262.5 533.3L288.9 549.1M263.5 532.1L286.1 552.5M255.6 526.9L286 554.6M261 534.8L287.1 554M262.6 536.8L284.9 554.6M252.8 531.4L284.3 554.1M256.7 536.5L284.9 555.5M255.5 535.6L282.8 556.9M253.3 535.4L282.4 557.8M258.5 542.1L281.9 558M258.1 540L279.8 561.6M252.6 536.6L279.8 563.2M249.9 535.7L277.8 562.9M256.3 545.2L278.3 562.2M255 543.1L278.3 566.6M248.8 538.8L276.8 566.9M252.8 545.7L277.9 567.4M253.3 548.5L276.9 567.2M253.9 550.1L274.9 567.6M245.3 540.9L272.8 570M246.6 545.5L273.7 570.2M251.6 553L273.5 570.6M251.4 550.2L269.7 573.5M248 550.9L271.8 574.1M243.1 545.7L269.7 575.6M241.6 548.3L271.2 575.6M248.9 553.6L266.9 577.9M242 550.8L267.6 576.5M246.2 554.9L266.4 579.7M245.7 556.6L264.7 578.7M245.8 559.2L264.7 579.7M237.4 551.6L264.8 580.7" stroke="#4a2a18" stroke-width="1.4"/>
<path d="M146.5 446.7L145.8 447M146.1 445.6L145.2 445.6M146.3 444.5L145.4 444.1M146.7 443.5L146.2 442.8M147.6 442.7L147.3 441.8M148.7 442.2L148.7 441.3M149.9 442.2L150.2 441.3M150.9 442.8L151.6 441.8M152 443.3L152.9 442.6M152.8 444.1L153.7 443.8M152.8 445.3L154.5 445.2M153.3 446.5L154.6 446.6M153.4 447.7L154.6 448.2M152.7 448.6L154.5 449.8M152.9 450.1L153.9 451.3M151.8 450.8L153.1 452.5M151.3 452.1L151.9 453.6M150.2 452.4L150.5 454.4M149 452.3L149.2 454.9M147.9 453.1L147.6 455.3M146.9 452.5L146.2 455.1M145.6 453.1L144.7 454.9M144.2 452.9L143.3 454.7M143.9 451.6L141.9 454M142.5 451.6L140.8 452.9M141.9 450.5L139.6 452.2M140.5 450L138.8 450.9M140.5 448.8L138 449.6M140.5 447.7L137.4 448.3M138.8 446.7L137 447M139.6 445.6L136.7 445.5M138.9 444.4L136.5 444M139.5 443.3L136.7 442.6M139.8 442.2L137 441.2M140 441L137.6 439.9M140 439.8L138.4 438.6M141.6 439.5L139.1 437.4M141.7 438.1L140.2 436.3M142.3 436.8L141 435.3M144 437.5L142.3 434.4M144.6 436.4L143.6 433.7M145.6 435.5L144.8 432.9M146.8 436.2L146.3 432.4M147.9 435.7L147.6 432.4M149 434.7L149 432.1M150.1 434.4L150.6 432.1M151.3 434.4L152 432M152.5 435L153.2 432.2M153.5 435.2L154.8 432.7M154.2 436.4L156.1 433.2M155.7 436.3L157.4 433.8M156.9 436.6L158.5 434.8M156.8 438.2L159.6 435.8M157.9 438.8L160.5 436.7M159.2 439.2L161.6 437.9M160.2 440.2L162.4 438.9M160.3 441.4L163.1 440.1M159.9 442.6L163.7 441.6M161.6 443.4L164.3 442.8M161.9 444.6L164.8 444.1M162 445.7L164.9 445.6M162.3 447L165 446.9M161.7 447.9L165.2 448.6M162.4 449.3L165 449.9M162.3 450.7L165 451.2M162.1 451.9L164.6 452.6M162.2 453.2L164.4 454.2M161.3 454.1L164.1 455.7M161 455.3L163.5 457M160.3 456.2L162.6 458.3M159.6 457.4L161.9 459.3M159.1 458.3L160.8 460.6M157.7 458.3L160 462M156.6 459L159 462.7M156.3 460.3L157.8 464M155.4 461.5L156.8 464.7M154.4 462.6L155.7 465.5M153.6 463.1L154.1 466.3M152.1 463.1L153 466.6M150.9 463.3L151.8 467.2M150 464.8L150.1 467.5M148.8 464.4L148.7 468M147.8 463.5L147.1 467.9M146.4 463.8L146 467.7M145.3 463.9L144.5 468M143.9 463.8L143.2 468.1M143 463.5L141.7 467.4M141.8 463.3L140.4 467.1M140.2 463.8L139.1 467M139.3 463.4L137.4 466.4M137.9 463.1L136.4 465.7M137 462.2L135.3 465.1M136.1 461.8L133.7 464.2M135 461.3L132.6 463.4M134.2 460.1L131.6 462.7M134.4 458.3L130.3 462.1M132.3 458.9L129.1 460.8M131 458.1L128.3 459.8M132 456.2L127.5 458.5M129.6 456.1L126.6 457.5M129.7 454.5L126.2 456.4M129.1 453.6L125.4 455.1M128 452.5L124.8 454M128.7 451.5L124.2 452.3M128.1 450.3L123.8 451.1M127.2 449.1L123.4 449.9M126.6 448.1L123 448.4M127.1 446.9L122.7 447.1M126.3 445.6L122.5 445.8M126.8 444.4L122.5 444.5M127.7 443.7L122.5 442.6M126.9 442.1L122.4 441.6M126.2 440.9L122.5 440M126.8 439.8L122.6 438.6M126.5 438.2L122.8 437.4M128.7 437.8L123.2 436.1M128.9 437L123.9 434.4M127.6 434.8L124.3 433.4M127.8 433.7L124.6 431.7M128.5 432.7L125.5 430.6M130.6 432.9L126.2 429.2M130.5 431.2L126.9 428.2M131.6 430.8L127.6 426.7M132.7 430.3L128.8 425.8M132.4 427.7L129.2 425M133.7 428.2L130.4 423.4M134.3 426.9L131.5 422.7M135.2 426.4L132.5 421.5M136.1 425.2L133.4 420.7M136.5 423.8L134.8 419.9M137.5 422.8L135.9 419.5M138.7 422.5L137.1 418.7M140.1 422.2L138 418M141.2 422.6L139.7 417.6M141.9 421.3L141.1 416.6M143 419.9L142.2 416.1M144.7 422.2L143.6 416M145.5 421.6L145.3 415.7M146.6 421.2L146.5 415.3M147.8 420.4L147.8 415.2M149.3 419.2L148.8 415.1M150.2 418.7L150.6 414.8M151.4 419.2L152 414.7M152.7 419.6L153.3 414.3M153.6 419.9L154.9 414.8M154.6 421.3L156.2 415M156 421.4L157.4 414.7M157.5 418.8L159.4 414.8M158.3 421.2L160.3 415.2M159.1 421.7L161.9 415.8M160.1 421.9L163.4 416.3M162.5 420.6L164.5 416M162.4 422.3L166.2 417.2M164.5 421.6L167.2 417.5M165.4 422L168.6 418.5M166.6 423.1L169.5 418.9M166.9 424.5L170.8 419.5M168.8 424L172.2 420.3M168.3 426.2L173.4 421M170.8 425.6L174.5 421.8M170.2 427.6L175.4 422.9M170.5 428.5L176.8 424M172.6 428.9L177.2 424.7M173.7 428.9L179.1 425.8M174.8 429.6L179.7 427.2M175.3 431.3L180 427.9M176.5 431.5L181.3 429.4M175.2 433.8L182.3 430.1M176.6 433.9L183.1 431.8M179 434.5L183.3 433M178.9 436L184.6 433.8M179 437L185.3 435.4M178.6 438.5L185.8 436.4M178.4 439.4L186 438.2M180.1 440.7L186.2 439.1M180.3 441.3L186.6 441.1M180.3 442.6L186.9 442.3M178.5 444.2L187.1 443.3M181.5 445.4L187.4 444.6M180.5 446.5L187.5 446M181.5 447.2L187.9 448M180.8 448.3L187.6 449.4M180.3 449.4L188.2 451M180.8 450.8L188 452.2M180.4 452.2L187.4 453.1M179.6 453.3L187.3 454.4M181.3 454.6L187 456.2M179.4 455.1L186.6 457.7M179.8 456.7L186.5 458.9M178.9 457.6L186.1 460.2M180.6 459.2L185.7 461.9M178.5 460L185.4 462.8M177 460.1L184.6 464.6M176.4 461.4L184.7 465.7M177.8 463.7L183.7 466.5M177.3 464.3L182.7 468.1M177.7 466.4L182.2 469M177.1 467.6L181.8 470.3M175.7 468L181.1 471.5M174.6 468.5L179.9 472.5M174.9 470.3L179.6 474.3M173.4 470.4L178.2 474.9M171.3 470.2L177.6 475.9M170.4 470.9L176.5 476.8M171.9 473.5L175 478.4M170.5 474.7L174.7 479M170.1 476.2L173.6 479.9M168.9 476.1L172.1 480.7M167 475.1L170.8 481.6M166.5 476.8L170 482.6M166 478L168.5 483.1M164.9 478.9L167.5 483.7M164.3 479.7L165.9 484.6M162.8 479.6L164.8 485.3M161.2 479L163.9 486.5M159.9 479.9L162.8 486.4M158.9 480.6L161.7 487.4M158.4 481.9L159.9 487.7M156.3 480L159 488M156 480.6L156.8 488.5M154.5 482.8L156.2 488.3M153.7 481.6L154.2 489M152.7 483.9L153 489.1M151.3 482.2L151.7 489.5M149.9 483.4L150.6 489.4M148.7 484.9L149.3 489.8M147.6 484.8L147.7 489.6M146.6 484.2L146 490M145.5 482L144.8 490.2M143.9 483.6L143.7 489.5M143.1 484.4L141.6 489.9M142 481L140.9 489.3M140.2 483.9L139.5 489.3M139.2 483.8L137.8 489M138.1 484.3L136 489M136.9 482.5L135.3 488.3M135.4 483.4L133.9 487.8M135.9 479.7L132.2 487.3M134 480L131.5 486.9M132.7 480.3L130 486.4M131.1 481.1L128.6 486.1M129.8 480.1L127.6 485.9M130.3 477.8L126 484.7M127.7 479.4L125.1 484M127.8 476.8L123.8 483.8M126.2 477.5L122.3 483M124.5 477.5L121.7 481.9M124 476.1L120.5 481.2M124.2 474.5L119.1 480.1M123.1 474.2L117.9 479.1M121 474.8L116.8 478.2M119.7 473.6L116.2 477.8M120.1 472L115 476.5M119.1 470.9L114.3 475.8M118.9 469.5L113.1 475.1M118 469.5L111.8 473.3M117.9 467.8L111.5 472.3M115.4 467.9L110.5 471.6M114.3 467.5L109.8 470M113.5 466L109.4 469.3M114.7 464.6L108.1 467.7M113.5 463.7L107 466.9M112 463L106.5 465.8M110.4 462.9L106 463.8M110.2 460.8L105.7 463.4M110 460.1L104.8 461.6M111.1 458.7L103.9 460.2M110.4 457.3L103.7 459.2M108.2 456.5L103.6 458M109.8 454.8L103.1 456.8M109 453.6L102.8 455.6M107.8 453.4L102.1 453.4M107.7 452L102.1 452.2M109.9 450.2L101.5 451.3M107.1 449.4L101 449.9M109.1 448.2L101.4 448.2M107 447.2L101.1 446.7M108 445.8L101.1 445.6M107.4 444.9L101 443.9M107.5 443.5L100.5 442.7M105.7 441.6L100.9 442M108 440.7L100.9 440.6M107.4 439.6L100.7 439M106.3 438.6L100.6 437M107.3 437.2L100.4 436.1M107.2 436.1L100.5 434.4M107.7 434.8L100.8 433.2M107 433.8L101.4 431.5M107.8 432.4L101 430.4M106.9 431.3L101.8 428.6M108.1 429.9L102 427.8M107.5 428.7L102.1 425.9M107.2 427.5L102.2 424.2M109 426.3L102.5 423.5M109.5 425.4L103.3 422.2M109.7 423.9L103.8 421.1M110.5 423.7L104 418.9M112.3 423.3L104.8 417.8M111.9 421.1L105.1 417.1M112 419.9L105.4 415.4M110.9 418.3L106.2 413.5M112.5 417.3L106.6 412.8M112 415.1L107 411.6M112.4 414.2L108.3 410.4M113.7 413.8L108.7 408.7M116 414.2L109.8 408M115.8 412.9L111 406.6M116.1 410.8L111.3 405.7M119 412.1L111.9 404.5M117.8 408.3L112.3 403.4M120.3 410.6L114 402.1M121 408.8L114.5 401.5M120.3 406.7L115.9 400.1M120.9 406L116.8 398.5M121.9 403.7L117.2 398.3M122.1 403.4L119.1 396.9M123.9 402.4L119.5 396.7M125 402.6L120.5 394.8M126.5 402.3L121.6 394.6M127.3 402.7L123.2 393.1M127.6 399.4L123.8 392.4M127.8 397.6L125.4 391.8M129.1 397.1L126.5 391.4M131.5 399.2L127.3 390.5M131.4 397.4L129.4 389.7M132.3 396.2L130.4 388.7M134.4 396.5L130.9 388.5M135.1 395.2L132.2 387.3M136.8 397.5L133.6 386.5M137.5 398.1L135.7 385.8M138 394L136.8 385.7M139.6 396L138.2 385.2M141.1 395.6L139.1 385.1M141.3 393L141.1 384.7M142.7 393.7L142.3 383.7M144.4 393L142.9 383.9M145.6 395.7L144.5 382.8M146.5 393L146.1 383.3M147.7 392.5L147.3 383.1M148.7 391.8L149 382.3M149.9 390.8L150.4 382M151.3 391.1L151.5 382.8M152.2 390.6L153.3 381.9M153.9 390.7L154.2 382.5M154.2 392.1L156.5 381.8M155.9 394.2L156.9 382.3M157.4 391.8L158.3 382.1M158.5 392.9L159.6 382.7M160.4 390.1L160.8 382.2M161.4 390.8L162.5 382M160.9 394.6L164.9 382.3M163.3 390.1L166 383M164.4 391.9L167 382.9M165.9 391.7L168.3 383.2M166.3 393.4L169.8 384M168.3 391.7L171 384.5M169.4 392.8L172.2 384.5M170.3 392.7L174.1 384.8M170.4 394.8L176 384.8M173 393.5L176.2 385.7M173.7 393.6L177.9 386.7M174.4 396.8L178.8 385.7M176.3 395.6L179.9 386.8M177.1 396.7L181.1 387.6M178.7 395.5L183.1 387.9M180.1 394.8L184.6 388.8M178.3 399.5L186.1 389.8M182.1 395.9L187 390.7M181.3 399.9L188.1 390.8M183.2 399.6L188.7 392M184 399.5L190.7 392.9M185.4 400.6L191.1 393.4M187.4 399.3L192.9 394.3M187 402.1L193.6 395M189 402.4L194.8 394.9M189.2 402.7L196.3 396.9M192.2 402.6L196.6 397.2M188.2 406.9L198.6 398.7M191.1 405.9L199.8 399.3M193.6 405.5L200.2 400.3M193.6 408.1L200.5 400.9M194.1 408L202.3 402.5M197.2 408L202.9 402.8M194 411.1L204.5 404.4M197.5 410L205.1 405.5M195.8 413.5L205.5 405.8M197.9 413.4L207.3 406.4M201.3 412.3L207.8 408.1M199.4 415.4L208.4 408.8M200 416.6L208.8 410M201.9 416L210.2 411.8M202.4 417.8L210.4 412.5M203.6 417.7L212 414.2M204.1 418.9L212.3 415.4M205.3 419.6L213.2 416.6M203 422.7L213.9 417M202.4 424.2L214 418.3M206 424.2L214.8 419.4M204.5 425.9L215.5 420.7M205.9 426.7L216.1 421.8M206 427.8L217.2 423.1M207.9 428.6L218.1 424M207.1 429L218.5 426.6M209.1 430.5L218.5 427.1M209.9 431.5L219.6 428.3M207.2 433L219.6 430.1M211.6 433.1L220.2 431.6M211.3 435L221.1 432.1M212.6 435.8L220.8 433.8M209.1 437.5L221.7 435.1M212.8 438.3L221.4 436.5M212.1 438.6L222.1 438.9M211.9 441L222.4 438.9M213.7 442.1L222.5 440.3M210.4 442.3L223 443M212.9 443.9L223.6 443.8M214.6 445.2L223.7 445M210.3 446.8L224 445.8M215 447.2L223.6 448.3M210.5 449L224.3 448.8M212.3 450.3L224.4 450.1M212.6 451.2L224.3 451.8M212.7 452.1L224.8 453.6M210.6 452.8L225.1 455.3M212.2 454.4L225.1 456.4M213.1 455.6L226.2 458.1M215.7 457.1L225.8 459.6M215.6 459.2L226 460.1M214 460.2L225.5 461.3M217.1 461.6L226.1 463.4M213 461.4L225.7 465.3M215.5 463.6L225.3 466.2M214.6 464.4L225.8 468.1M215.4 465.7L225.3 469.6M210.9 466L225.8 470.7M213.8 468L225.1 472.1M212.3 468.4L224.9 473.9M214.3 470.9L224.9 474.8M212.9 471.2L224.2 476.6M213.3 472.7L224.8 478.2M214.4 475.5L224.9 478.6M208.1 473.3L224.3 480.6M211.1 476.7L224.8 481.6M212.8 477.8L223.1 483.6M208.4 477.5L224.1 484.8M209.3 478.2L222 486.7M209.2 479.8L222 487.8M209.1 481.6L222.7 489.2M206 480.1L220.9 491M206.4 482.8L221.3 491.5M206.1 484.2L220.4 492.3M209.2 486.8L219.6 494.5M204 485.2L219.3 495.3M208.3 490.3L219.1 496.2M205.9 489.5L217.9 497.6M204 489.5L217.3 498.9M204.6 491.6L216.8 500.2M205.4 493.4L216.4 502.2M205.2 494.8L214.6 502.6M204.6 495.4L213.8 504.3M202.3 495.3L212.7 504.7M199.1 494.8L212.3 505.1M200.2 497L210.7 506.2M199.3 496.7L208.9 507.7M199.6 499.5L208.4 508.2M196.7 499L208.1 508.9M195.6 498.6L206.2 510.1M192.2 496.6L205.5 511.2M194.8 500.9L203.1 511.2M194.9 502.6L201.6 511.9M191.5 501.5L201.3 512.2M191.8 503.1L199.8 513.5M188.1 499.7L198.6 514.8M189.5 504.9L197.6 514.3M186.1 500.6L193.9 513.2M185.1 500.5L192.7 514.7M185.1 504.6L192.7 514.9M184.1 505.1L190.8 514.6M182.4 504.1L189.7 516.1M181.2 503.8L187.9 516.4M179.8 504.6L187.2 516.9M178.7 503.9L185.8 518.6M177.5 505.7L185.1 518.2M177.6 508.8L183.9 518.8M176.6 507.7L181.7 519.6M174.8 506.6L180.5 520.2M174.2 509.9L179.8 520.2M172.8 509.4L178.4 520.5M171.9 510.7L177.3 521.5M169.8 507.9L175.9 522.2M169.8 507.9L173 522.4M167.7 507.1L172.4 522.5M167.1 508.5L170.8 522.9M166.9 513L169.9 523.8M164.3 510L169 523.4M163.7 509.5L167 524.3M162.1 510.5L166.2 523.8M162.4 513.2L163.8 523.9M161.1 512.5L162.4 524.5M158.7 510.8L162.1 524.5M157.9 512.4L160.6 525.4M157 510.9L158.5 524.7M156.1 514.6L157.3 525.2M155.1 514.9L155.7 525.8M153.5 513.9L154.6 524.8M151.9 514.1L153.6 524.6M150.5 510.5L152.4 525M149.8 514.4L150.5 524.5M148.8 513.3L148.9 524.4M146.9 514.6L148.2 524.2M146.1 513.6L146.4 524.4M145.8 513.6L144 524.1M143.5 511.3L144.1 523.6M143 510.4L141.9 523.9M141.4 511.7L140.9 523.2M140.7 510.5L139.1 522.9M139.8 510.6L137.5 522.3M139.1 509.5L135.8 521.8M137.1 511.6L135 521.9M135.6 511.6L133.8 522.1M134.8 508.6L132.9 521M133.4 510.8L131.2 520.5M132.4 510.5L129.7 520M132.1 507.2L128.1 520.1M129.6 510.5L127.3 519.4M129.8 507.1L125.3 519.2M128.6 507.8L123.9 518.3M126.4 508.4L123.4 517.9M126.1 504.9L122.4 517.7M124.6 508.6L119.8 517.1M123.5 505L119.9 516.6M122.1 507.3L117.7 515.7M121.1 505L117.1 515.6M119.4 507.2L115 515.2M118.7 504.2L114.8 514.3M117.6 504.7L113 513.5M117.3 504L111.4 512.4M115.9 502.1L111.1 512.3M114.9 503L108.8 511.7M114.9 499.1L108.4 511.6M111.4 502.3L107.6 510.3M111.2 501.3L106.2 509M110 500.5L105.1 508.5M109.3 500L103.5 507.7M108.7 498.8L102.1 507.3M108.2 496.7L101.4 506.7M107.8 495.4L100.7 505.2M106.1 497L98.6 504M106.4 494.4L98 503.1M105.8 492.9L97.3 502.2M103.1 494.1L95.8 501.8M101.2 494.1L95.4 500.5M103.2 490.9L93.8 499.5M101.5 491.2L92.6 498.5M101.8 488L92.6 498.2M97.6 491.1L91.4 496.2M97.6 489.3L90.1 495.7M99.5 486.1L89.7 494.3M98.7 485L88.4 493.9M95.6 486.5L87.5 492.1M97.5 484L86 491.1M93.7 484.4L85.9 490.4M96.5 481.7L85 488.5M92.8 482.6L84.6 487.3M92.1 480.5L83.7 487.5M93 479.4L83.1 485.4M92.1 478L82.6 484.7M90 478.1L81.3 483.5M90.6 477.4L80.3 481.2M90.5 475.9L79.3 480.5M87 476.5L78.6 479M86.7 475.1L78.7 477.7M87.7 473L78.2 476.8M86.2 471.7L77.1 476.4M89.2 469.6L76.1 474.8M84.9 469.5L76.2 473.9M84.5 468.6L75.5 472.4M85.6 466.6L74.6 471.6M87.1 465.3L74.2 469.8M82.7 466.4L73.8 467.4M83.3 464.1L73.2 467.1M85.9 461.8L73.2 466.1M81.5 461.7L72.9 464.8M85 460.7L71.7 462.4M82.5 460.1L71.7 460.8M82.5 457.6L71.7 460.9M80.3 457.7L71.2 458.5M80.1 456.6L70.6 457.2M83.4 454.7L69.7 456.1M78.8 454.6L69.3 454.2M79.9 452L69.6 454.2M80.3 451.2L69.8 452.2M78.7 450.9L69.2 450M82.5 448.6L68.4 449.7M79 447.7L69 448M81.3 446.7L69.1 446.4M78.9 445.1L68.1 445.5M78.6 443.7L68.1 444.3M80.7 442.6L67.8 442.9M82.3 442.3L68.2 440.6M79.7 440.3L68.8 440M80.4 439.2L68.6 438.6M77.1 438.2L68 436.4M78.5 437.2L68.6 435M79.2 435L68.4 434.9M80.1 434.6L67.8 432.6M78.7 433.3L68.4 431.1M78.7 431.3L68.4 430.6M80 431L68.8 428.4M80.7 429.3L69 427.7M81.1 428.8L68.6 425.5M79.9 427.3L69.6 424.4M79.2 425.2L68.8 423.5M83.1 425.4L69.5 421.8M81.5 423.6L70.3 420.7M82.4 422.9L70.7 419.1M80.7 421.2L70.1 417.2M80.6 420.2L70.6 415.5M81.1 418L70.8 415.3M83.2 417.9L71.3 413.8M81.8 415.6L71.4 412.7M85.7 416.3L71.9 411.1M82.7 414.8L73 408.7M83.3 412.6L72.9 408.5M86.2 412.8L73.6 407.2M86.2 411.5L74.2 405.9M84.5 410.3L74.9 403.5M86 408.6L74.7 403.1M84.6 406.6L75.6 401.7M83.9 405.6L76.9 400M87.3 405L76.5 399.6M85.5 402.3L76.6 398M87.7 404L78.1 395.4M90 403.6L78.5 394.8M91.2 402.1L79.1 394.6M88.3 399.3L80.4 392.8M88.2 398.3L81 390.7M89.1 396L81.3 390.9M92.2 396.7L81.2 389.4M91.1 394.5L82.2 388M91 392.8L83.4 387.2M93.6 393.3L84.1 386.2M93.6 391.9L84.5 384.4M93.2 389.7L85.8 383.8M97 392.8L86.7 381.6M93.9 388L87.5 380.3M96.2 389.3L89 379.1M96.3 386.4L89.7 379.2M96.9 386.6L91.3 377.5M98.8 385.9L91.5 376.7M98.8 383.9L91.9 375.1M100.4 383.2L93 375.2M101.6 382.7L93.4 373.5M103.5 384.2L95.1 372.3M102.5 381.6L96.4 371M105.5 382.3L96.8 370.7M104.4 379.1L98.1 369.7M105 376.7L98.8 369.4M107.8 378.6L99.7 368.5M108 378L101.5 367.3M108.1 375.6L101.9 365.4M108.2 373.1L103 364.8M109.2 374L105.2 364M111.5 375L105.6 362.7M112.4 372.9L106.3 362.4M112.3 371L107.7 361M112.9 370.1L109.3 360.3M116 373.1L110.1 359.7M116.1 368.4L110.7 359.8M116.9 367.3L111.9 358.8M118.6 368.6L113 357.7M118.3 365.7L114.7 356.9M120 368.5L116.6 356M121.1 365.6L116.8 355.1M121.9 364L118.2 354.9M122.8 365L119.8 353M123.9 363.3L120.8 352.8M124.8 363.3L122.5 352.2M126.4 366.2L124.3 351.3M126.9 362.9L125.3 350.5M129.4 362.7L124.9 349.3M129.6 360.5L127 349.1M130.3 361.3L129 348.4M132.5 362.3L129.4 347.7M133.1 360.6L130.8 346.4M134.5 357.9L131.4 345.6M135.3 356.2L132.9 345.1M136.5 356.8L134.3 344M136.8 357.3L136.8 343.8M138.7 360.5L137.9 343.8M140 356.5L138.5 342.5M141.6 354.7L139.3 342.7M143 355.5L140.4 341.3M142.5 354.1L143.7 341.8M145.6 358.8L143.2 341.1M146.7 353.9L144.4 340.2M146.5 357.7L147.6 339.9M148 355.5L148.6 340.7M149.1 355.2L150 339.9M151.1 354.8L150.5 339.1M150.9 357.4L153.4 339.7M152.5 352.4L154.5 339.7M153.5 354.1L156 339.8M155.3 353.7L156.8 338.8M156.8 353.6L157.9 338.3M157.7 351.8L159.8 338.7M158.9 355.4L160.7 339.3M160.4 353.8L162 339.2M161.1 352.3L164.4 338.4M162.6 354.9L164.9 339.3M164.3 352.5L166.3 338.9M165.7 352.9L167.5 338.3M166.8 352.6L168.8 339.6M168.7 351.5L169.8 339.3M169.2 353.6L171.4 339.8M169.8 355.9L173 339.5M172.5 353.1L173.7 339.5M172.4 354.4L176 340.1M172.9 358.2L177.3 339.3M174.6 354.3L179.4 340M175.6 354.6L181 339.9M175.2 358.6L182.9 340.3M178.6 353.4L183.7 340.1M178.3 358.5L185.1 340M179.8 358L186.2 340.6M181.3 358.4L187.3 340.5M183.1 355.9L189.1 340.7M184.3 353.9L191.3 341.4M184.7 356L193.2 340.8M186 356.2L194.6 340.9M189.4 355.4L194 340.9M190.4 353.2L197.1 340.8M192.6 354.8L197.2 340M191 358.7L199 341.7M193.5 357.1L200.3 341.4M194 359.3L201.2 342M194.2 359L204.1 342.3M197.3 357.5L205 341.6M195.4 361.2L207.4 342.7M199.9 357L207.7 343.2M200.7 356.4L210.6 343M200.5 360L211.3 343.4M203.1 357.9L212.7 343.9M202.1 361.6L214.5 343.8M203.4 362.6L215 344.6M207.5 357.1L218 344.4M208.2 359.2L218.2 345.3M208.4 359.5L220.6 346.1M210.2 360.5L220.9 346.5M208.8 363.8L222.7 347.1M213.9 360.9L223.3 346.2M214.3 363L224.3 346.5M214.3 363.5L227.1 346.9M216 362.7L228.7 347.8M218.2 362.5L229.4 348.7M218.5 363.4L230.6 350M221.5 362.8L231.5 350M219.7 366.8L233.4 349.6M219.7 367.2L235.4 351.2M218.6 369.7L236.4 352.8M223.3 366.4L238.5 352.5M222.2 368.8L238.8 354.7M227.6 367.9L239.1 353M225 369.4L241.1 356.1M224 374L241.5 355.4M224.7 374.8L242.5 356.4M231.9 368.7L244.6 357.5M231.9 371.3L245.8 357.3M234.3 371.3L246.9 357.5M234.1 370.4L249.3 360.5M234.2 372.1L250.9 360.9M237.1 372.6L251.3 360.6M237.6 374.1L251.6 361.8M232.1 378.4L253.5 364.1M233.6 381L254 362.6M236.4 380L255.9 363.2M237.3 379.7L256.8 365.6M241.6 379.3L257.8 365.1M237.1 382.5L259.3 367.4M242.7 379.7L261.5 368M244.7 380.5L260.9 369.3M245.7 381.8L263 369M242.5 384.8L262.9 371.3M243.7 384.6L264.8 372.7M249.1 383.3L266.3 372.6M249.9 383.6L266.9 374.6M242.4 389.6L268.3 375.3M249.7 386.1L268.6 377.4M248.1 389.4L270.3 376.8M248.9 389.2L272.1 378.7M251.8 390.8L271.9 378.3M245.5 394.8L272 380.7M254.4 391.1L273.7 381.8M251.3 393.9L273.2 383.8M254.5 392.7L275.3 385.4M254.3 395.6L274.8 385.4M250.6 399.2L275.4 385.9M254.4 397.3L276.5 388.7M258.3 396.3L277.9 390.2M254.8 401.5L277.8 388.9M255.9 399.8L279.5 392.8M252 403.7L281.1 392.5M258.6 403.5L279.5 393.2M261.8 403.7L282.4 393.4M258.9 406.1L281.4 395.1M258.7 407.2L283.2 396.3M262.6 406.2L283.2 398.8M255 409.8L285.2 399.8M259.9 408.4L286.4 402.1M264.6 408L286.1 403.8M261 412.1L285.6 403.3M262.7 411.9L286.7 405.5M268.2 412.9L286.7 405.4M265.1 413.2L287.9 408.7M263.1 416.8L289.1 407.6M263.3 416.4L290.4 410.6M269.7 415.3L289.9 413M267.1 418.4L289.5 413.1M268.7 419.6L289.5 414.1M266.4 421L291 415.7M272.2 421.3L290.8 416.8M272.1 422L292.4 418.6M263.8 424.9L293.5 419.6M268.9 425.8L292.7 420.5M266.2 427L293.5 422.3M261.3 427.7L293.9 425.3M270.8 428.8L293 425.1M266 429.9L294.1 427.2M272.2 430.4L294 428.5M272.6 431.7L296.4 429.5M265.4 434.9L294.4 429.6M274.2 435.4L295.4 430.8M273.3 434.8L300.1 434M277.7 435L301.8 436.1M271 439.1L304 434.3M274.7 437.7L305.9 438.5M273.1 438.8L308.9 440M278.1 441.2L309.3 439.5M278.9 440.8L309.2 442.8M275.8 442.2L309.6 444M281.9 443.2L311.3 445.4M286.8 446.8L310.8 443.9M284.2 445.6L311.7 448.2M274.4 446.6L312.2 449.8M282 448L310.4 451M282.5 448.9L310.6 452.7M284.2 450.5L312.6 453.8M278.8 451L311 455.7M281 452.3L311.2 457M283.5 455.5L313.6 456.3M279.5 455.2L310.5 459M281.6 458.1L313.8 458.7M275.1 458.9L313.6 459.8M282 459.7L311.2 462.3M281.9 460.6L311.5 464M284.7 462.3L312.3 465.3M287.3 463.2L311.3 467.3M286.5 465.4L311.2 467.4M282.3 465.8L311.3 469.2M283.1 467.4L310.7 470.1M285.6 467.1L312.1 474.1M279.8 469.5L311.7 472.8M285.7 470.9L312.7 475.5M283.4 471.5L311.7 477M286.2 474.3L309.9 476.8M283.8 472.6L310.4 481.3M279 473.4L309.7 481.8M282.7 475.9L310.2 482.8M281.1 476.7L309.1 484M276.2 477.8L310.5 484.4M279.9 478.3L310.1 487.7M281.7 480.2L310.7 489.1M278.5 480.1L308.6 490.6M283 484L309.7 490.6M273.8 482.3L309.4 492.3M273.1 482.5L307.7 494.2M278.5 487.2L308.7 493.7M283.8 489.2L308.1 496.1M280.5 489.3L308 497.7M276.2 490.1L306.8 497.5M271.7 489.1L308.3 500.3M277.2 491.3L306.6 502.4M280.1 493.9L305.2 503M270.7 492L307.6 504.9M271.5 492.6L305.5 506.7M277.9 495.3L305.1 509.3M280.4 498.9L306.1 509.6M276.8 499L305 510.3M269.7 496.8L305.1 512.4M275.3 500.7L305.2 513.8M280.7 505L302.9 513.6M275.4 503.7L304.2 515.9M270 503L302.1 515.9M279.4 506.9L302.6 519.8M278 508.9L301.6 519.4M275.9 509.6L301 520.1M275.4 509.2L300.9 523.4M276 510.7L300 524.7M268.5 509.9L300 524.2M267.3 510.9L300.5 525.4M274.3 515.9L298.7 526.3M277.3 517.8L298.7 529.4M274.9 517.7L297.8 530.6M274.2 517L295.5 532.9M265.9 514.7L295.4 533.1M265.2 516.8L295.6 533.3M266.6 517L294.1 536.5M272.2 522.8L294.4 537.1M267.9 520.5L294.2 540M262 519.5L294.2 539.7M268.7 523.6L291.7 541.9M269.1 526.4L293.2 543.3M266.5 525.3L289.7 543.5M259.6 523.2L291.2 544.7M268 530.5L291.1 546.3M262.5 529.2L289.8 545.7M264.5 529L288.7 550.4M263.6 529.9L286.5 550.3M260.9 531L288.3 551.5M267.1 538.2L286.3 550.7M260.9 532.1L284.5 554.3M256.2 531.6L284 553.5M265 539.6L283.3 555.5M260 537.9L283.6 556.6M262.6 541.6L282.4 557.5M260 540.3L282.3 560M255.6 539.5L281.9 559.7M259.2 544L280.2 560.4M254.5 538.9L278.2 563.6M253.5 541L278 563.3M250.5 540.5L278.7 565M251.3 543.9L277.7 564.7M257.1 548.8L276 567.7M254.8 549.5L275.7 567.9M256.3 550.5L273.2 570M246.8 544.2L273.5 570.5M249.8 546.9L270.5 571.9M252.9 552L271.4 574.3M249.2 552L270.9 573.4M252.9 554.9L268.2 575.9M241.4 547.7L269.7 575.2M250.3 558L267.1 575.9M246.1 555.5L267.2 577.7M246.8 557.9L266 578.8M241.9 552.6L265.5 582.1M239.5 554.5L266.1 581.4" stroke="#e89c72" stroke-width="0.85"/>
<path d="M150 445.9L150 446 150.1 446 150.1 446.1 150.1 446.2 150.2 446.3 150.2 446.3 150.2 446.4 150.2 446.5 150.2 446.6 150.2 446.7 150.2 446.8 150.2 446.9 150.1 447 150.1 447.1 150.1 447.2 150 447.3 150 447.4 149.9 447.5 149.9 447.5 149.8 447.6 149.7 447.7 149.6 447.8 149.6 447.9 149.5 448 149.4 448 149.3 448.1 149.2 448.2 149 448.2 148.9 448.3 148.8 448.3 148.7 448.3 148.5 448.4 148.4 448.4 148.3 448.4 148.1 448.4 148 448.4 147.8 448.4 147.7 448.4 147.5 448.4 147.4 448.3 147.3 448.3 147.1 448.2 147 448.2 146.8 448.1 146.7 448 146.5 447.9 146.4 447.8 146.3 447.7 146.1 447.6 146 447.5 145.9 447.4 145.8 447.2 145.7 447.1 145.6 446.9 145.5 446.8 145.4 446.6 145.4 446.4 145.3 446.3 145.2 446.1 145.2 445.9 145.2 445.7 145.1 445.5 145.1 445.3 145.1 445.1 145.1 444.9 145.1 444.7 145.2 444.5 145.2 444.3 145.3 444.1 145.3 443.9 145.4 443.7 145.5 443.5 145.6 443.3 145.7 443.1 145.8 442.9 146 442.7 146.1 442.6 146.3 442.4 146.4 442.2 146.6 442.1 146.8 441.9 147 441.8 147.2 441.7 147.4 441.6 147.6 441.5 147.8 441.4 148.1 441.3 148.3 441.2 148.6 441.1 148.8 441.1 149.1 441.1 149.3 441 149.6 441 149.8 441.1 150.1 441.1 150.4 441.1 150.6 441.2 150.9 441.3 151.1 441.3 151.4 441.4 151.6 441.5 151.9 441.7 152.1 441.8 152.3 442 152.6 442.1 152.8 442.3 153 442.5 153.2 442.7 153.4 442.9 153.6 443.1 153.7 443.4 153.9 443.6 154.1 443.9 154.2 444.1 154.3 444.4 154.5 444.7 154.6 445 154.7 445.3 154.7 445.6 154.8 445.9 154.9 446.2 154.9 446.5 154.9 446.9 155 447.2 155 447.6 155 447.9 155 448.3 154.9 448.6 154.9 449 154.8 449.4 154.7 449.7 154.6 450.1 154.5 450.5 154.3 450.9 154.2 451.3 154 451.6 153.7 452 153.5 452.4 153.2 452.7 152.9 453 152.6 453.4 152.3 453.7 151.9 454 151.5 454.2 151.1 454.5 150.7 454.7 150.2 454.9 149.8 455.1 149.3 455.3 148.8 455.4 148.3 455.5 147.8 455.6 147.3 455.6 146.7 455.6 146.2 455.6 145.7 455.6 145.1 455.5 144.6 455.4 144 455.2 143.5 455.1 143 454.9 142.4 454.6 141.9 454.4 141.4 454.1 140.9 453.8 140.5 453.4 140 453 139.6 452.6 139.1 452.2 138.7 451.7 138.4 451.2 138 450.7 137.7 450.2 137.4 449.6 137.1 449 136.9 448.4 136.7 447.8 136.5 447.2 136.4 446.6 136.3 445.9 136.2 445.2 136.2 444.6 136.2 443.9 136.3 443.2 136.4 442.6 136.5 441.9 136.7 441.3 136.9 440.6 137.1 440 137.4 439.3 137.7 438.7 138.1 438.1 138.5 437.5 138.9 437 139.3 436.4 139.8 435.9 140.3 435.4 140.8 434.9 141.4 434.5 142 434 142.6 433.6 143.2 433.3 143.8 433 144.5 432.7 145.2 432.4 145.9 432.2 146.6 432 147.3 431.8 148.1 431.7 148.8 431.6 149.6 431.6 150.3 431.5 151.1 431.6 151.8 431.6 152.6 431.8 153.3 431.9 154.1 432.1 154.8 432.3 155.6 432.6 156.3 432.9 157 433.3 157.7 433.7 158.4 434.1 159 434.6 159.6 435.1 160.3 435.6 160.8 436.2 161.4 436.8 161.9 437.4 162.4 438 162.9 438.7 163.3 439.4 163.7 440.2 164.1 440.9 164.4 441.7 164.7 442.5 165 443.3 165.2 444.2 165.4 445 165.5 445.9 165.6 446.8 165.7 447.7 165.7 448.6 165.7 449.5 165.6 450.4 165.5 451.3 165.4 452.3 165.2 453.2 165 454.1 164.7 455.1 164.3 456 164 456.9 163.5 457.8 163 458.7 162.5 459.6 161.9 460.5 161.3 461.3 160.6 462.1 159.8 462.9 159 463.7 158.2 464.4 157.3 465 156.4 465.6 155.4 466.2 154.4 466.7 153.3 467.2 152.2 467.6 151.1 467.9 150 468.2 148.8 468.4 147.6 468.5 146.4 468.6 145.2 468.6 144 468.5 142.8 468.4 141.5 468.2 140.3 467.9 139.1 467.6 137.9 467.2 136.8 466.7 135.6 466.2 134.5 465.6 133.4 464.9 132.3 464.2 131.3 463.4 130.3 462.6 129.3 461.7 128.4 460.7 127.5 459.7 126.7 458.7 125.9 457.5 125.2 456.4 124.6 455.2 124 454 123.5 452.7 123 451.4 122.6 450.1 122.3 448.7 122 447.3 121.8 445.9 121.7 444.5 121.6 443 121.7 441.6 121.8 440.2 122 438.7 122.2 437.3 122.6 435.8 123 434.4 123.5 433 124.1 431.6 124.7 430.3 125.5 428.9 126.3 427.6 127.1 426.4 128.1 425.2 129.1 424 130.1 422.9 131.3 421.8 132.5 420.8 133.7 419.8 135 418.9 136.4 418 137.8 417.3 139.3 416.6 140.8 415.9 142.3 415.4 143.9 414.9 145.5 414.5 147.1 414.1 148.8 413.9 150.5 413.7 152.2 413.6 153.9 413.6 155.6 413.7 157.4 413.9 159.1 414.1 160.9 414.4 162.6 414.9 164.3 415.4 166.1 416 167.8 416.7 169.4 417.5 171.1 418.4 172.7 419.4 174.3 420.4 175.8 421.6 177.2 422.9 178.6 424.2 180 425.6 181.3 427.2 182.4 428.8 183.5 430.4 184.6 432.2 185.5 434 186.3 435.8 187 437.8 187.6 439.7 188.1 441.8 188.5 443.8 188.8 445.9 188.9 448 189 450.1 188.9 452.3 188.7 454.4 188.4 456.5 188 458.6 187.4 460.7 186.7 462.8 186 464.8 185.1 466.8 184.1 468.8 183 470.7 181.7 472.6 180.4 474.4 179 476.1 177.5 477.8 175.9 479.3 174.2 480.8 172.4 482.3 170.6 483.6 168.6 484.8 166.6 485.9 164.6 486.9 162.4 487.8 160.3 488.6 158 489.3 155.8 489.9 153.5 490.4 151.1 490.7 148.8 490.9 146.4 491 144.1 490.9 141.7 490.8 139.3 490.4 137 490 134.7 489.4 132.4 488.7 130.1 487.9 127.9 487 125.7 485.9 123.6 484.8 121.5 483.5 119.5 482.1 117.6 480.6 115.7 479 114 477.3 112.3 475.5 110.7 473.6 109.2 471.6 107.8 469.6 106.5 467.5 105.3 465.3 104.2 463 103.2 460.7 102.4 458.3 101.6 455.9 101 453.5 100.5 451 100.1 448.5 99.8 445.9 99.6 443.3 99.6 440.7 99.6 438.1 99.7 435.5 99.9 432.8 100.3 430.1 100.7 427.4 101.3 424.7 102 422.1 102.8 419.4 103.8 416.7 104.9 414 106.2 411.4 107.6 408.8 109.1 406.2 110.8 403.7 112.7 401.3 114.7 399 116.9 396.7 119.2 394.5 121.6 392.5 124.2 390.6 126.9 388.8 129.7 387.1 132.7 385.6 135.7 384.3 138.9 383.2 142.1 382.2 145.4 381.5 148.8 380.9 152.2 380.5 155.7 380.4 159.2 380.4 162.7 380.7 166.1 381.2 169.6 381.8 173.1 382.7 176.5 383.7 179.9 385 183.2 386.4 186.4 388 189.6 389.8 192.6 391.8 195.6 393.9 198.5 396.2 201.3 398.6 204 401.2 206.5 404 208.9 406.9 211.2 409.9 213.4 413 215.4 416.3 217.2 419.6 218.9 423.1 220.5 426.7 221.9 430.4 223.1 434.1 224.2 438 225.1 441.9 225.8 445.9 226.5 450 227.1 454.1 227.7 458.4 228.1 462.7 228.2 467.2 228.1 471.7 227.5 476.1 226.8 480.6 225.9 485.2 224.7 489.7 223.1 494.2 221.1 498.5 218.7 502.5 215.7 506.1" stroke="#120904" stroke-width="3.2"/>
<path d="M150 445.9L150 446 150.1 446 150.1 446.1 150.1 446.2 150.2 446.3 150.2 446.3 150.2 446.4 150.2 446.5 150.2 446.6 150.2 446.7 150.2 446.8 150.2 446.9 150.1 447 150.1 447.1 150.1 447.2 150 447.3 150 447.4 149.9 447.5 149.9 447.5 149.8 447.6 149.7 447.7 149.6 447.8 149.6 447.9 149.5 448 149.4 448 149.3 448.1 149.2 448.2 149 448.2 148.9 448.3 148.8 448.3 148.7 448.3 148.5 448.4 148.4 448.4 148.3 448.4 148.1 448.4 148 448.4 147.8 448.4 147.7 448.4 147.5 448.4 147.4 448.3 147.3 448.3 147.1 448.2 147 448.2 146.8 448.1 146.7 448 146.5 447.9 146.4 447.8 146.3 447.7 146.1 447.6 146 447.5 145.9 447.4 145.8 447.2 145.7 447.1 145.6 446.9 145.5 446.8 145.4 446.6 145.4 446.4 145.3 446.3 145.2 446.1 145.2 445.9 145.2 445.7 145.1 445.5 145.1 445.3 145.1 445.1 145.1 444.9 145.1 444.7 145.2 444.5 145.2 444.3 145.3 444.1 145.3 443.9 145.4 443.7 145.5 443.5 145.6 443.3 145.7 443.1 145.8 442.9 146 442.7 146.1 442.6 146.3 442.4 146.4 442.2 146.6 442.1 146.8 441.9 147 441.8 147.2 441.7 147.4 441.6 147.6 441.5 147.8 441.4 148.1 441.3 148.3 441.2 148.6 441.1 148.8 441.1 149.1 441.1 149.3 441 149.6 441 149.8 441.1 150.1 441.1 150.4 441.1 150.6 441.2 150.9 441.3 151.1 441.3 151.4 441.4 151.6 441.5 151.9 441.7 152.1 441.8 152.3 442 152.6 442.1 152.8 442.3 153 442.5 153.2 442.7 153.4 442.9 153.6 443.1 153.7 443.4 153.9 443.6 154.1 443.9 154.2 444.1 154.3 444.4 154.5 444.7 154.6 445 154.7 445.3 154.7 445.6 154.8 445.9 154.9 446.2 154.9 446.5 154.9 446.9 155 447.2 155 447.6 155 447.9 155 448.3 154.9 448.6 154.9 449 154.8 449.4 154.7 449.7 154.6 450.1 154.5 450.5 154.3 450.9 154.2 451.3 154 451.6 153.7 452 153.5 452.4 153.2 452.7 152.9 453 152.6 453.4 152.3 453.7 151.9 454 151.5 454.2 151.1 454.5 150.7 454.7 150.2 454.9 149.8 455.1 149.3 455.3 148.8 455.4 148.3 455.5 147.8 455.6 147.3 455.6 146.7 455.6 146.2 455.6 145.7 455.6 145.1 455.5 144.6 455.4 144 455.2 143.5 455.1 143 454.9 142.4 454.6 141.9 454.4 141.4 454.1 140.9 453.8 140.5 453.4 140 453 139.6 452.6 139.1 452.2 138.7 451.7 138.4 451.2 138 450.7 137.7 450.2 137.4 449.6 137.1 449 136.9 448.4 136.7 447.8 136.5 447.2 136.4 446.6 136.3 445.9 136.2 445.2 136.2 444.6 136.2 443.9 136.3 443.2 136.4 442.6 136.5 441.9 136.7 441.3 136.9 440.6 137.1 440 137.4 439.3 137.7 438.7 138.1 438.1 138.5 437.5 138.9 437 139.3 436.4 139.8 435.9 140.3 435.4 140.8 434.9 141.4 434.5 142 434 142.6 433.6 143.2 433.3 143.8 433 144.5 432.7 145.2 432.4 145.9 432.2 146.6 432 147.3 431.8 148.1 431.7 148.8 431.6 149.6 431.6 150.3 431.5 151.1 431.6 151.8 431.6 152.6 431.8 153.3 431.9 154.1 432.1 154.8 432.3 155.6 432.6 156.3 432.9 157 433.3 157.7 433.7 158.4 434.1 159 434.6 159.6 435.1 160.3 435.6 160.8 436.2 161.4 436.8 161.9 437.4 162.4 438 162.9 438.7 163.3 439.4 163.7 440.2 164.1 440.9 164.4 441.7 164.7 442.5 165 443.3 165.2 444.2 165.4 445 165.5 445.9 165.6 446.8 165.7 447.7 165.7 448.6 165.7 449.5 165.6 450.4 165.5 451.3 165.4 452.3 165.2 453.2 165 454.1 164.7 455.1 164.3 456 164 456.9 163.5 457.8 163 458.7 162.5 459.6 161.9 460.5 161.3 461.3 160.6 462.1 159.8 462.9 159 463.7 158.2 464.4 157.3 465 156.4 465.6 155.4 466.2 154.4 466.7 153.3 467.2 152.2 467.6 151.1 467.9 150 468.2 148.8 468.4 147.6 468.5 146.4 468.6 145.2 468.6 144 468.5 142.8 468.4 141.5 468.2 140.3 467.9 139.1 467.6 137.9 467.2 136.8 466.7 135.6 466.2 134.5 465.6 133.4 464.9 132.3 464.2 131.3 463.4 130.3 462.6 129.3 461.7 128.4 460.7 127.5 459.7 126.7 458.7 125.9 457.5 125.2 456.4 124.6 455.2 124 454 123.5 452.7 123 451.4 122.6 450.1 122.3 448.7 122 447.3 121.8 445.9 121.7 444.5 121.6 443 121.7 441.6 121.8 440.2 122 438.7 122.2 437.3 122.6 435.8 123 434.4 123.5 433 124.1 431.6 124.7 430.3 125.5 428.9 126.3 427.6 127.1 426.4 128.1 425.2 129.1 424 130.1 422.9 131.3 421.8 132.5 420.8 133.7 419.8 135 418.9 136.4 418 137.8 417.3 139.3 416.6 140.8 415.9 142.3 415.4 143.9 414.9 145.5 414.5 147.1 414.1 148.8 413.9 150.5 413.7 152.2 413.6 153.9 413.6 155.6 413.7 157.4 413.9 159.1 414.1 160.9 414.4 162.6 414.9 164.3 415.4 166.1 416 167.8 416.7 169.4 417.5 171.1 418.4 172.7 419.4 174.3 420.4 175.8 421.6 177.2 422.9 178.6 424.2 180 425.6 181.3 427.2 182.4 428.8 183.5 430.4 184.6 432.2 185.5 434 186.3 435.8 187 437.8 187.6 439.7 188.1 441.8 188.5 443.8 188.8 445.9 188.9 448 189 450.1 188.9 452.3 188.7 454.4 188.4 456.5 188 458.6 187.4 460.7 186.7 462.8 186 464.8 185.1 466.8 184.1 468.8 183 470.7 181.7 472.6 180.4 474.4 179 476.1 177.5 477.8 175.9 479.3 174.2 480.8 172.4 482.3 170.6 483.6 168.6 484.8 166.6 485.9 164.6 486.9 162.4 487.8 160.3 488.6 158 489.3 155.8 489.9 153.5 490.4 151.1 490.7 148.8 490.9 146.4 491 144.1 490.9 141.7 490.8 139.3 490.4 137 490 134.7 489.4 132.4 488.7 130.1 487.9 127.9 487 125.7 485.9 123.6 484.8 121.5 483.5 119.5 482.1 117.6 480.6 115.7 479 114 477.3 112.3 475.5 110.7 473.6 109.2 471.6 107.8 469.6 106.5 467.5 105.3 465.3 104.2 463 103.2 460.7 102.4 458.3 101.6 455.9 101 453.5 100.5 451 100.1 448.5 99.8 445.9 99.6 443.3 99.6 440.7 99.6 438.1 99.7 435.5 99.9 432.8 100.3 430.1 100.7 427.4 101.3 424.7 102 422.1 102.8 419.4 103.8 416.7 104.9 414 106.2 411.4 107.6 408.8 109.1 406.2 110.8 403.7 112.7 401.3 114.7 399 116.9 396.7 119.2 394.5 121.6 392.5 124.2 390.6 126.9 388.8 129.7 387.1 132.7 385.6 135.7 384.3 138.9 383.2 142.1 382.2 145.4 381.5 148.8 380.9 152.2 380.5 155.7 380.4 159.2 380.4 162.7 380.7 166.1 381.2 169.6 381.8 173.1 382.7 176.5 383.7 179.9 385 183.2 386.4 186.4 388 189.6 389.8 192.6 391.8 195.6 393.9 198.5 396.2 201.3 398.6 204 401.2 206.5 404 208.9 406.9 211.2 409.9 213.4 413 215.4 416.3 217.2 419.6 218.9 423.1 220.5 426.7 221.9 430.4 223.1 434.1 224.2 438 225.1 441.9 225.8 445.9 226.5 450 227.1 454.1 227.7 458.4 228.1 462.7 228.2 467.2 228.1 471.7 227.5 476.1 226.8 480.6 225.9 485.2 224.7 489.7 223.1 494.2 221.1 498.5 218.7 502.5 215.7 506.1" stroke="#cf8652" stroke-width="1.7"/>
<path d="M199 517.6L196.4 519.1 193.7 520.6 191 522 188.3 523.4 185.5 524.6 182.7 525.8 179.9 526.8 177 527.8 174.1 528.6 171.2 529.4 168.2 530 165.2 530.5 162.3 530.9 159.3 531.2 156.3 531.3 153.3 531.2 150.3 531.1 147.3 530.8 144.4 530.4 141.5 529.8 138.6 529.2 135.7 528.5 132.9 527.8 130.1 527 127.3 526.2 124.5 525.3 121.8 524.4 119.1 523.4 116.4 522.3 113.7 521.1 111.1 519.9 108.6 518.5 106.1 517 103.6 515.5 101.2 513.9 98.8 512.2 96.6 510.4 94.3 508.5 92.2 506.6 90.1 504.6 88.1 502.5 86.2 500.4 84.3 498.2 82.5 495.9 80.7 493.6 79 491.2 77.4 488.8 75.8 486.4 74.3 483.9 72.9 481.3 71.5 478.7 70.2 476.1 69.1 473.4 67.9 470.6 66.9 467.8 66 465 65.2 462.2 64.4 459.3 63.8 456.3 63.2 453.4 62.8 450.4 62.4 447.4 62.2 444.4 62.1 441.4 62 438.3 62 435.2 62.2 432.2 62.4 429.1 62.7 426 63.1 422.9 63.6 419.9 64.2 416.8 65 413.7 65.8 410.7 66.7 407.6 67.7 404.6 68.8 401.6 70.1 398.6 71.4 395.6 72.8 392.7 74.4 389.8 76 387 77.8 384.2 79.7 381.4 81.6 378.7 83.7 376.1 85.9 373.5 88.1 371 90.5 368.5 92.9 366.1 95.5 363.8 98.1 361.5 100.8 359.3 103.6 357.1 106.4 355 109.4 353 112.4 351 115.5 349.1 118.6 347.1 121.8 345.2 125.1 343.2 128.5 341.4 132 339.6 135.5 337.9 139.2 336.5 143 335.2 146.9 334.3 150.8 333.6 154.7 333.2 158.7 333 162.7 333 166.7 333.1 170.7 333.4 174.7 333.7 178.8 334.1 182.9 334.4 187.1 334.7 191.4 334.9 195.8 335.2 200.2 335.7 204.6 336.3 209.1 337.1 213.6 338 218.2 339.1 222.7 340.4 227.1 342 231.5 343.8 235.8 345.8 240 348.1 244.2 350.5 248.4 353 252.6 355.6 256.8 358.5 260.8 361.5 264.7 364.7 268.4 368.2 271.8 372 275.1 375.9 278.2 380 281.1 384.2 283.9 388.6 286.5 393 289 397.6 291.3 402.3 293.4 407.1 295.3 412.1 296.9 417.1 298.3 422.2 299.6 427.4 300.5 433 305 434.5 312.6 438.3 314.4 443 314 447.3 308.8 460.2 298.2 475 283.6 489.5 266.8 501 250 508.3 231.2 512.5 212.6 515.6 200.3 518.5Z" stroke="#120904" stroke-width="16" stroke-linejoin="round"/>
<path d="M199 517.6L196.4 519.1 193.7 520.6 191 522 188.3 523.4 185.5 524.6 182.7 525.8 179.9 526.8 177 527.8 174.1 528.6 171.2 529.4 168.2 530 165.2 530.5 162.3 530.9 159.3 531.2 156.3 531.3 153.3 531.2 150.3 531.1 147.3 530.8 144.4 530.4 141.5 529.8 138.6 529.2 135.7 528.5 132.9 527.8 130.1 527 127.3 526.2 124.5 525.3 121.8 524.4 119.1 523.4 116.4 522.3 113.7 521.1 111.1 519.9 108.6 518.5 106.1 517 103.6 515.5 101.2 513.9 98.8 512.2 96.6 510.4 94.3 508.5 92.2 506.6 90.1 504.6 88.1 502.5 86.2 500.4 84.3 498.2 82.5 495.9 80.7 493.6 79 491.2 77.4 488.8 75.8 486.4 74.3 483.9 72.9 481.3 71.5 478.7 70.2 476.1 69.1 473.4 67.9 470.6 66.9 467.8 66 465 65.2 462.2 64.4 459.3 63.8 456.3 63.2 453.4 62.8 450.4 62.4 447.4 62.2 444.4 62.1 441.4 62 438.3 62 435.2 62.2 432.2 62.4 429.1 62.7 426 63.1 422.9 63.6 419.9 64.2 416.8 65 413.7 65.8 410.7 66.7 407.6 67.7 404.6 68.8 401.6 70.1 398.6 71.4 395.6 72.8 392.7 74.4 389.8 76 387 77.8 384.2 79.7 381.4 81.6 378.7 83.7 376.1 85.9 373.5 88.1 371 90.5 368.5 92.9 366.1 95.5 363.8 98.1 361.5 100.8 359.3 103.6 357.1 106.4 355 109.4 353 112.4 351 115.5 349.1 118.6 347.1 121.8 345.2 125.1 343.2 128.5 341.4 132 339.6 135.5 337.9 139.2 336.5 143 335.2 146.9 334.3 150.8 333.6 154.7 333.2 158.7 333 162.7 333 166.7 333.1 170.7 333.4 174.7 333.7 178.8 334.1 182.9 334.4 187.1 334.7 191.4 334.9 195.8 335.2 200.2 335.7 204.6 336.3 209.1 337.1 213.6 338 218.2 339.1 222.7 340.4 227.1 342 231.5 343.8 235.8 345.8 240 348.1 244.2 350.5 248.4 353 252.6 355.6 256.8 358.5 260.8 361.5 264.7 364.7 268.4 368.2 271.8 372 275.1 375.9 278.2 380 281.1 384.2 283.9 388.6 286.5 393 289 397.6 291.3 402.3 293.4 407.1 295.3 412.1 296.9 417.1 298.3 422.2 299.6 427.4 300.5 433 305 434.5 312.6 438.3 314.4 443 314 447.3 308.8 460.2 298.2 475 283.6 489.5 266.8 501 250 508.3 231.2 512.5 212.6 515.6 200.3 518.5Z" stroke="#cf8652" stroke-width="14.6" stroke-linejoin="round"/>
<path d="M199 517.6L196.4 519.1 193.7 520.6 191 522 188.3 523.4 185.5 524.6 182.7 525.8 179.9 526.8 177 527.8 174.1 528.6 171.2 529.4 168.2 530 165.2 530.5 162.3 530.9 159.3 531.2 156.3 531.3 153.3 531.2 150.3 531.1 147.3 530.8 144.4 530.4 141.5 529.8 138.6 529.2 135.7 528.5 132.9 527.8 130.1 527 127.3 526.2 124.5 525.3 121.8 524.4 119.1 523.4 116.4 522.3 113.7 521.1 111.1 519.9 108.6 518.5 106.1 517 103.6 515.5 101.2 513.9 98.8 512.2 96.6 510.4 94.3 508.5 92.2 506.6 90.1 504.6 88.1 502.5 86.2 500.4 84.3 498.2 82.5 495.9 80.7 493.6 79 491.2 77.4 488.8 75.8 486.4 74.3 483.9 72.9 481.3 71.5 478.7 70.2 476.1 69.1 473.4 67.9 470.6 66.9 467.8 66 465 65.2 462.2 64.4 459.3 63.8 456.3 63.2 453.4 62.8 450.4 62.4 447.4 62.2 444.4 62.1 441.4 62 438.3 62 435.2 62.2 432.2 62.4 429.1 62.7 426 63.1 422.9 63.6 419.9 64.2 416.8 65 413.7 65.8 410.7 66.7 407.6 67.7 404.6 68.8 401.6 70.1 398.6 71.4 395.6 72.8 392.7 74.4 389.8 76 387 77.8 384.2 79.7 381.4 81.6 378.7 83.7 376.1 85.9 373.5 88.1 371 90.5 368.5 92.9 366.1 95.5 363.8 98.1 361.5 100.8 359.3 103.6 357.1 106.4 355 109.4 353 112.4 351 115.5 349.1 118.6 347.1 121.8 345.2 125.1 343.2 128.5 341.4 132 339.6 135.5 337.9 139.2 336.5 143 335.2 146.9 334.3 150.8 333.6 154.7 333.2 158.7 333 162.7 333 166.7 333.1 170.7 333.4 174.7 333.7 178.8 334.1 182.9 334.4 187.1 334.7 191.4 334.9 195.8 335.2 200.2 335.7 204.6 336.3 209.1 337.1 213.6 338 218.2 339.1 222.7 340.4 227.1 342 231.5 343.8 235.8 345.8 240 348.1 244.2 350.5 248.4 353 252.6 355.6 256.8 358.5 260.8 361.5 264.7 364.7 268.4 368.2 271.8 372 275.1 375.9 278.2 380 281.1 384.2 283.9 388.6 286.5 393 289 397.6 291.3 402.3 293.4 407.1 295.3 412.1 296.9 417.1 298.3 422.2 299.6 427.4 300.5 433 305 434.5 312.6 438.3 314.4 443 314 447.3 308.8 460.2 298.2 475 283.6 489.5 266.8 501 250 508.3 231.2 512.5 212.6 515.6 200.3 518.5Z" stroke="#120904" stroke-width="12.4" stroke-linejoin="round"/>
<path d="M199 517.6L196.4 519.1 193.7 520.6 191 522 188.3 523.4 185.5 524.6 182.7 525.8 179.9 526.8 177 527.8 174.1 528.6 171.2 529.4 168.2 530 165.2 530.5 162.3 530.9 159.3 531.2 156.3 531.3 153.3 531.2 150.3 531.1 147.3 530.8 144.4 530.4 141.5 529.8 138.6 529.2 135.7 528.5 132.9 527.8 130.1 527 127.3 526.2 124.5 525.3 121.8 524.4 119.1 523.4 116.4 522.3 113.7 521.1 111.1 519.9 108.6 518.5 106.1 517 103.6 515.5 101.2 513.9 98.8 512.2 96.6 510.4 94.3 508.5 92.2 506.6 90.1 504.6 88.1 502.5 86.2 500.4 84.3 498.2 82.5 495.9 80.7 493.6 79 491.2 77.4 488.8 75.8 486.4 74.3 483.9 72.9 481.3 71.5 478.7 70.2 476.1 69.1 473.4 67.9 470.6 66.9 467.8 66 465 65.2 462.2 64.4 459.3 63.8 456.3 63.2 453.4 62.8 450.4 62.4 447.4 62.2 444.4 62.1 441.4 62 438.3 62 435.2 62.2 432.2 62.4 429.1 62.7 426 63.1 422.9 63.6 419.9 64.2 416.8 65 413.7 65.8 410.7 66.7 407.6 67.7 404.6 68.8 401.6 70.1 398.6 71.4 395.6 72.8 392.7 74.4 389.8 76 387 77.8 384.2 79.7 381.4 81.6 378.7 83.7 376.1 85.9 373.5 88.1 371 90.5 368.5 92.9 366.1 95.5 363.8 98.1 361.5 100.8 359.3 103.6 357.1 106.4 355 109.4 353 112.4 351 115.5 349.1 118.6 347.1 121.8 345.2 125.1 343.2 128.5 341.4 132 339.6 135.5 337.9 139.2 336.5 143 335.2 146.9 334.3 150.8 333.6 154.7 333.2 158.7 333 162.7 333 166.7 333.1 170.7 333.4 174.7 333.7 178.8 334.1 182.9 334.4 187.1 334.7 191.4 334.9 195.8 335.2 200.2 335.7 204.6 336.3 209.1 337.1 213.6 338 218.2 339.1 222.7 340.4 227.1 342 231.5 343.8 235.8 345.8 240 348.1 244.2 350.5 248.4 353 252.6 355.6 256.8 358.5 260.8 361.5 264.7 364.7 268.4 368.2 271.8 372 275.1 375.9 278.2 380 281.1 384.2 283.9 388.6 286.5 393 289 397.6 291.3 402.3 293.4 407.1 295.3 412.1 296.9 417.1 298.3 422.2 299.6 427.4 300.5 433 305 434.5 312.6 438.3 314.4 443 314 447.3 308.8 460.2 298.2 475 283.6 489.5 266.8 501 250 508.3 231.2 512.5 212.6 515.6 200.3 518.5Z" stroke="#dbc5b5" stroke-width="11.2" stroke-linejoin="round"/>
<path d="M198.3 517.6L194.4 513.6M196.9 518.5L192.8 514.5M195.6 519.2L191.6 515.2M194.9 519.6L191.3 515.3M192.8 520.8L189.2 516.5M191.5 521.5L188.4 516.9M190.5 522L187.4 517.4M189.1 522.7L185.6 518.2M188.1 523.1L185.2 518.4M186.5 523.8L182.9 519.4M184.7 524.6L182 519.8M183.3 525.2L180.6 520.3M182.1 525.7L179.6 520.7M181.2 526L177.9 521.4M179.6 526.6L177.2 521.6M177.5 527.3L174.4 522.5M176.7 527.6L173.6 522.7M175 528.1L172.2 523.1M173.8 528.4L171 523.4M171.9 528.9L169.1 523.9M170.3 529.2L168.4 524M169.3 529.5L167.5 524.2M168 529.7L166.5 524.4M166.4 530L164.3 524.8M165.2 530.2L163.3 524.9M163.4 530.5L161.9 525.1M161.5 530.7L160 525.3M160.5 530.8L158.9 525.4M158.6 530.9L157.9 525.4M156.9 531L156.2 525.5M154.9 531L153.6 525.5M153.3 530.9L152.2 525.4M149.7 530.7L149.1 525.1M147.3 530.5L147.6 524.9M144.1 530L143.5 524.3M141.2 529.5L141 523.8M137 528.6L136.8 522.8M135.2 528.1L135.7 522.6M132.1 527.3L132.3 521.6M130 526.7L130.3 521M126.1 525.5L126.3 519.8M124.6 525L124.8 519.3M121.7 524L122.8 518.6M118.2 522.7L118.8 517M116 521.8L116.8 516.1M113 520.4L114.7 515.1M110.8 519.3L112.7 514.1M108.6 518.2L110.8 513.1M105.2 516.2L106.8 510.6M103.5 515.1L106.1 510.2M100 512.6L102.3 507.6M98.5 511.5L101.3 506.7M96 509.5L98.4 504.4M94 507.8L96.9 503.1M92.3 506.3L95.1 501.3M90.3 504.3L93.5 499.8M87.3 501.2L91 497.1M85.6 499.2L88.7 494.4M83.8 497.1L87.2 492.6M82.6 495.6L86.4 491.4M80.8 493.2L84.4 488.8M78.9 490.6L82.9 486.7M76.7 487.2L80.5 483M75.2 484.7L79.4 481.1M74.1 483L78.3 479.2M72.7 480.4L77.2 477.2M71.5 477.9L76.2 475M70.2 475.3L74.6 471.6M68.7 471.7L73.3 468.5M67.9 469.7L72.8 467M67.2 467.6L72.1 465.1M65.9 463.6L70.8 460.6M65.3 461.5L70.3 458.8M64.4 457.8L69.5 455.4M63.9 455.7L69.1 453.4M63.7 454.5L68.9 452.2M63.5 453.1L68.8 451.3M63.2 451.2L68.4 449.1M63 450.1L68.3 448M62.8 448.3L68.2 446.5M62.7 447.4L68.1 445.9M62.6 445.6L68 444M62.5 444L67.9 442.3M62.4 442.3L67.8 440.6M62.3 441L67.8 439.7M62.3 439.1L67.8 437.6M62.3 438L67.8 436.6M62.3 436L67.8 434.8M62.4 434.4L67.9 433M62.4 433.2L68 432.4M62.5 432L68.1 431M62.6 429.8L68.2 429.2M62.8 428.5L68.4 427.8M62.9 426.9L68.5 426.8M63.1 425.3L68.7 424.9M63.3 423.9L68.9 423.7M63.5 422.4L69.2 422M63.8 420.9L69.4 420.5M63.9 419.9L69.5 420.3M64.3 418L69.9 417.9M64.6 416.7L70.2 416.7M65 414.7L70.5 415.4M65.4 413.4L70.9 414M65.7 412.2L71.1 413M66.1 410.5L71.6 411.4M66.6 409L72 410.1M67.1 407.3L72.6 408.2M67.7 405.6L73.2 406.3M68.1 404.5L73.7 405M68.5 403.2L74 404.2M69.2 401.4L74.7 402.7M69.8 400.1L75.4 400.9M70.5 398.4L75.7 400.2M71.2 396.7L76.5 398.4M71.9 395.3L77.2 396.9M72.6 393.8L78.3 394.8M73.5 392.1L78.8 393.9M74.3 390.7L79.7 392.2M74.8 389.7L79.9 391.9M75.8 388L81.1 389.8M76.8 386.3L82.3 387.9M77.5 385.2L82.6 387.4M78.5 383.6L83.4 386.3M79 382.9L84.2 385M80.3 381.1L85.1 383.8M81.3 379.7L86.6 381.8M82.1 378.6L87 381.2M83 377.4L87.9 380.2M84.6 375.5L89.4 378.4M85.6 374.2L90.8 376.6M86.5 373.2L91.1 376.3M87.9 371.7L92.7 374.6M88.6 370.9L93.2 374.1M90.2 369.2L94.9 372.3M90.9 368.5L95.5 371.7M92 367.4L96.7 370.5M93.5 366L97.8 369.5M95 364.6L99.8 367.7M95.7 364L100.1 367.4M97.2 362.7L101.9 365.8M98.9 361.2L103 364.9M99.8 360.4L103.8 364.2M101.8 358.8L105.8 362.7M102.9 358L107 361.7M104.3 356.9L108.5 360.7M105.8 355.8L109.6 359.9M107.3 354.8L111.1 358.8M108.5 353.9L112.4 357.9M109.8 353L113.7 357.1M111.4 352L115.2 356.1M113.2 350.8L117.1 354.9M114.1 350.3L117.7 354.6M116.1 349.1L120.2 353M118 347.9L121.9 352M118.8 347.4L122.8 351.4M120.8 346.2L124.6 350.3M122.7 345L126.5 349.2M124.1 344.2L128.2 348.2M125.6 343.3L129.1 347.6M127.8 342.1L131.1 346.5M128.9 341.5L132.7 345.7M130.4 340.7L134.2 345M132.8 339.5L136 344.1M134.2 338.9L137.7 343.3M136.7 337.8L139.3 342.7M138 337.3L141.1 342M139.9 336.6L142.4 341.5M141.4 336.1L144.2 341M144 335.3L145.9 340.5M145.3 335L148 340M147.8 334.4L150 339.6M148.9 334.2L151.1 339.4M152 333.8L154.1 339.1M153.6 333.6L154.7 339M155.7 333.4L156.7 338.9M157.5 333.4L159.3 338.8M159.5 333.3L160.2 338.8M161 333.3L162.5 338.8M162.8 333.3L163.8 338.8M165.1 333.4L165.6 338.9M167.4 333.5L167.6 339M168.8 333.6L169.4 339.1M170.7 333.7L170.9 339.2M173.4 333.9L174.2 339.5M175.7 334.1L175.9 339.6M177.2 334.2L177.6 339.8M179.5 334.4L180.1 340M182 334.6L182.4 340.2M182.9 334.7L183.9 340.3M185.2 334.8L186 340.4M187.7 335L188.9 340.6M190 335.1L190.8 340.7M191.7 335.2L192.5 340.8M193.9 335.4L194.8 340.9M196.4 335.6L196.5 341.1M198.3 335.8L198.6 341.3M201.1 336.1L201 341.7M203.3 336.4L203.7 342.1M204.7 336.6L204.9 342.3M206.2 336.9L205.9 342.4M208.1 337.2L207.9 342.8M209.8 337.5L209.8 343.1M210.9 337.7L211.1 343.4M212.1 338L212.3 343.6M213.6 338.3L213 343.8M215.9 338.8L215.9 344.5M216.8 339.1L216.1 344.5M219 339.6L218.6 345.2M220.3 340L219.4 345.5M221.7 340.4L221 345.9M222.8 340.8L221.7 346.2M224.6 341.4L223.6 346.9M225.9 341.9L224.6 347.3M227.7 342.6L226.7 348.1M229.1 343.2L227.9 348.6M230.6 343.8L229.5 349.3M231.8 344.3L230.5 349.8M233.4 345.1L231.9 350.4M234.3 345.5L232.4 350.7M235.8 346.2L233.7 351.3M237.8 347.2L236.2 352.6M239.1 347.9L237 353M240.3 348.6L238.9 354.1M241.8 349.4L239.9 354.7M243.1 350.1L240.9 355.2M244.2 350.8L242 355.8M245.8 351.7L243.8 356.9M247.6 352.8L245.4 357.9M248.5 353.4L246.2 358.4M249.8 354.2L247.6 359.3M251.3 355.1L249.2 360.3M252.5 355.9L250.6 361.3M254.1 357L252.3 362.4M255.8 358.2L253.7 363.4M257 359L254.9 364.3M258 359.8L255.7 364.9M259.5 360.9L257.2 366M261.2 362.2L258.2 366.9M262.1 362.9L259 367.5M263.4 364L260.3 368.6M264.8 365.2L262.2 370.3M266 366.4L262.8 370.9M267.3 367.6L264.1 372.2M268.7 369L265.5 373.7M269.4 369.8L265.9 374.1M270.9 371.4L267.9 376.3M272 372.7L268.4 376.9M273.3 374.2L269.4 378.1M273.8 374.8L270.5 379.4M275.1 376.4L271.1 380.2M276.2 377.9L272.8 382.5M277.3 379.2L273.4 383.2M278 380.2L273.8 383.8M279.5 382.3L275.5 386.3M280.5 383.7L276.2 387.3M281 384.6L276.7 388M282 386.2L277.7 389.6M282.9 387.5L278.7 391.2M283.8 389L279.3 392.2M284.5 390.2L280.6 394.4M285.5 391.8L281.3 395.6M286.5 393.5L282.1 397.1M287.1 394.8L282.7 398.1M288 396.3L283.7 399.9M289.2 398.6L284.7 402.1M289.9 400.1L285.3 403.2M290.3 400.9L285.8 404.3M291.2 402.9L286.7 406.2M291.9 404.4L287.3 407.7M292.8 406.4L288.3 409.9M293.3 407.6L288.5 410.5M294.1 409.7L289.3 412.4M294.5 410.7L289.7 413.4M295.1 412.2L290.2 415.2M295.8 414.7L290.9 417.1M296.2 415.6L291.1 417.9M296.7 417.4L291.5 419.4M297.2 419.3L292.2 421.8M297.6 420.8L292.4 422.8M298.2 423L293 425M298.5 424.2L293.4 426.4M299 426.1L293.8 428.1M299.4 427.9L294.1 429.6M299.8 430.1L294.5 432.1M300.1 432.2L294.8 434.2M301.1 433.5L300.4 439.1M302.3 433.9L301.9 439.6M304 434.5L303.7 440.2M305.5 435.1L304.2 440.6M306.6 435.7L305.4 441.2M308.3 436.5L306.4 441.7M309.5 437.1L307.6 442.3M311.2 437.9L309.8 443.4M312.4 438.7L307.5 441.2M313.2 440.7L308.5 443.7M313.5 441.6L308.6 444.1M314.1 443.1L308.5 443.5M313.8 446.2L308.2 447.3M313.5 447.7L308.1 446.4M313 449L307.6 447.8M312.5 450.3L307.2 448.8M311.8 452L306.2 451.2M311.2 453.5L305.8 452.1M310.6 454.8L305.3 453.4M310 456.4L304.5 455.3M309.4 458L303.7 457.2M309.1 458.8L303.6 457.5M308.1 460.7L303 458.3M307.4 461.6L302.4 459.2M306.4 463.1L301 461.1M305.6 464.1L300.2 462.2M304.7 465.4L299.9 462.7M303.7 466.8L298.7 464.4M303.2 467.5L297.8 465.5M302.4 468.7L297.2 466.4M301.2 470.2L295.9 468.2M300.4 471.4L295.5 468.8M299.6 472.6L294.7 469.9M298.5 474L293.6 471.5M297.5 475.3L293.1 471.9M296.6 476.1L292.2 472.8M295.1 477.7L290.2 474.8M294 478.7L289.3 475.6M293.2 479.5L288.9 476.1M291.8 480.9L287.2 477.8M291.2 481.5L286.9 478.1M290.1 482.7L285.3 479.7M288.4 484.3L284 480.9M287.3 485.4L282.9 482.1M286.3 486.4L281.4 483.5M285.2 487.5L280.4 484.5M284.3 488.4L280 484.9M283 489.5L279 485.6M282 490.2L278.1 486.2M280.6 491.2L277.1 487M279.3 492.1L275.4 488.1M277.9 493L273.7 489.2M276.7 493.9L272.2 490.2M275 495L270.7 491.3M273.8 495.8L269.7 492M272.7 496.6L268.4 492.9M271.5 497.4L267.5 493.5M270 498.5L266 494.5M269 499.1L265.4 494.9M267.9 499.9L264 495.9M266.2 500.9L262.8 496.4M264.7 501.6L261.7 496.9M263.1 502.3L260.2 497.6M261.9 502.8L259.2 498M260.4 503.4L257.1 498.9M258.9 504.1L255.3 499.7M257.7 504.6L254.2 500.1M256.3 505.3L253 500.7M255.3 505.7L252.1 501M253.3 506.5L250.4 501.8M251.9 507.2L248.7 502.6M250.9 507.6L248.3 502.7M249.6 508.1L247.7 502.9M247.8 508.5L245.1 503.5M245.9 508.9L243.6 503.8M244.9 509.1L243.1 503.9M243 509.6L240.7 504.4M241.4 509.9L239.3 504.7M239.7 510.3L237.8 505.1M238.7 510.5L236.7 505.3M236.8 510.9L234.2 505.9M235.7 511.2L233.3 506.1M233.5 511.7L231.6 506.5M232.6 511.9L230.3 506.7M230.4 512.3L228 507.1M228.9 512.6L227.1 507.3M227.7 512.8L225.7 507.5M225.7 513.1L223.9 507.8M224.7 513.3L222.6 508M222.5 513.6L220.9 508.3M221.8 513.8L220.3 508.4M219.8 514.1L217.7 508.9M218.6 514.3L217 509M216.6 514.6L214.5 509.4M215 514.9L212.8 509.7M214 515.1L212.1 509.8M211.8 515.5L209 510.5M210.7 515.7L208 510.7M208.9 516.2L206.1 511.2M207.7 516.4L205.2 511.4M205.6 516.9L203.3 511.8M204.8 517.1L202.8 512M203.2 517.5L201.3 512.3M201.6 517.9L199.2 512.8M200.4 518.2L202.5 512.9" stroke="#8f786a" stroke-width="0.55"/>
</g>
<g font-family="'Liberation Sans',sans-serif" fill="#e6e2de"><text transform="matrix(1.1 0 -0.1317 1 0 322.3)" x="92.5 124.5 159.2 188 212.6 251.7 286.8 317.5" y="0" font-size="50" text-anchor="middle">ВСЁ ИДЁТ</text><text transform="matrix(1.24 0 -0.1317 1 0 640.7)" x="80 110.4 136 158.1 186.8 220 252.9 282.8" y="0" font-size="46.5" text-anchor="middle">ПО ПЛАНУ</text></g>
<rect x="15" y="104.9" width="647" height="1.15" fill="#0a0a0a"/>
<rect x="428.9" y="7" width="1.3" height="98" fill="#0a0a0a"/>
<rect x="539.5" y="7" width="1.3" height="98" fill="#0a0a0a"/>
<rect x="451.2" y="105" width="1.5" height="705.5" fill="#2a2a2a"/>
<rect x="15" y="810" width="647" height="1.35" fill="#0a0a0a"/>
<rect x="452" y="337" width="209" height="1.1" fill="#0a0a0a"/>
<rect x="452" y="432" width="209" height="1.1" fill="#0a0a0a"/>
<rect x="15.95" y="7.85" width="645.1" height="837.8" rx="2" fill="none" stroke="#151515" stroke-width="1.55"/>
<g>
<rect x="70" y="105.5" width="1.25" height="704.7" fill="#00ee00"/>
<rect x="16.3" y="547" width="435" height="2" fill="#00e600" fill-opacity="0.72"/>
<rect x="368" y="105.5" width="2" height="704.7" fill="#ff0000" fill-opacity="0.58"/>
<rect x="16.3" y="605.5" width="435" height="1.5" fill="#e60000" fill-opacity="0.9"/>
</g>
<path d="M20.60 42.0h0.73v19.3h-0.73zM23.14 42.0h0.73v19.3h-0.73zM24.59 42.0h1.81v19.3h-1.81zM27.13 42.0h1.81v19.3h-1.81zM29.67 42.0h0.73v19.3h-0.73zM31.12 42.0h1.81v19.3h-1.81zM33.65 42.0h0.73v19.3h-0.73zM35.11 42.0h1.81v19.3h-1.81zM38.73 42.0h0.73v19.3h-0.73zM40.18 42.0h0.73v19.3h-0.73zM41.63 42.0h1.81v19.3h-1.81zM44.17 42.0h1.81v19.3h-1.81zM46.71 42.0h0.73v19.3h-0.73zM48.16 42.0h0.73v19.3h-0.73zM50.70 42.0h0.73v19.3h-0.73zM52.15 42.0h0.73v19.3h-0.73zM53.60 42.0h1.81v19.3h-1.81zM56.14 42.0h0.73v19.3h-0.73zM58.68 42.0h0.73v19.3h-0.73zM60.13 42.0h1.81v19.3h-1.81zM62.67 42.0h1.81v19.3h-1.81zM65.20 42.0h0.73v19.3h-0.73zM66.65 42.0h0.73v19.3h-0.73zM68.10 42.0h1.81v19.3h-1.81zM71.73 42.0h0.73v19.3h-0.73zM73.18 42.0h1.81v19.3h-1.81zM75.72 42.0h0.73v19.3h-0.73zM77.17 42.0h1.81v19.3h-1.81zM79.71 42.0h0.73v19.3h-0.73zM82.25 42.0h0.73v19.3h-0.73zM83.70 42.0h0.73v19.3h-0.73zM85.15 42.0h1.81v19.3h-1.81zM87.69 42.0h0.73v19.3h-0.73zM90.23 42.0h1.81v19.3h-1.81zM92.76 42.0h0.73v19.3h-0.73zM94.21 42.0h0.73v19.3h-0.73zM95.67 42.0h0.73v19.3h-0.73zM97.12 42.0h1.81v19.3h-1.81zM100.74 42.0h0.73v19.3h-0.73zM102.19 42.0h1.81v19.3h-1.81zM104.73 42.0h1.81v19.3h-1.81zM107.27 42.0h0.73v19.3h-0.73zM108.72 42.0h1.81v19.3h-1.81zM112.35 42.0h0.73v19.3h-0.73zM113.80 42.0h0.73v19.3h-0.73zM115.25 42.0h1.81v19.3h-1.81zM117.79 42.0h0.73v19.3h-0.73zM119.24 42.0h0.73v19.3h-0.73zM120.69 42.0h1.81v19.3h-1.81zM124.31 42.0h0.73v19.3h-0.73zM125.76 42.0h1.81v19.3h-1.81zM129.39 42.0h0.73v19.3h-0.73zM130.84 42.0h1.81v19.3h-1.81zM133.38 42.0h0.73v19.3h-0.73zM134.83 42.0h0.73v19.3h-0.73zM136.28 42.0h1.81v19.3h-1.81zM138.82 42.0h0.73v19.3h-0.73zM140.27 42.0h0.73v19.3h-0.73zM142.81 42.0h0.73v19.3h-0.73zM144.26 42.0h1.81v19.3h-1.81zM146.80 42.0h0.73v19.3h-0.73zM148.25 42.0h1.81v19.3h-1.81zM150.79 42.0h0.73v19.3h-0.73zM153.32 42.0h1.81v19.3h-1.81zM155.86 42.0h0.73v19.3h-0.73zM157.31 42.0h0.73v19.3h-0.73zM159.85 42.0h0.73v19.3h-0.73zM161.30 42.0h0.73v19.3h-0.73zM162.75 42.0h1.81v19.3h-1.81zM165.29 42.0h1.81v19.3h-1.81zM167.83 42.0h0.73v19.3h-0.73zM169.28 42.0h1.81v19.3h-1.81zM171.82 42.0h0.73v19.3h-0.73zM173.27 42.0h1.81v19.3h-1.81zM176.89 42.0h0.73v19.3h-0.73zM178.35 42.0h1.81v19.3h-1.81zM180.88 42.0h1.81v19.3h-1.81zM183.42 42.0h0.73v19.3h-0.73zM184.87 42.0h0.73v19.3h-0.73zM187.41 42.0h0.73v19.3h-0.73zM188.86 42.0h0.73v19.3h-0.73zM191.40 42.0h0.73v19.3h-0.73zM192.85 42.0h0.73v19.3h-0.73zM194.30 42.0h1.81v19.3h-1.81zM196.84 42.0h1.81v19.3h-1.81zM199.38 42.0h0.73v19.3h-0.73zM200.83 42.0h1.81v19.3h-1.81zM203.37 42.0h1.81v19.3h-1.81zM205.91 42.0h0.73v19.3h-0.73zM208.44 42.0h0.73v19.3h-0.73zM209.89 42.0h1.81v19.3h-1.81zM212.43 42.0h0.73v19.3h-0.73zM213.88 42.0h1.81v19.3h-1.81zM216.42 42.0h0.73v19.3h-0.73zM218.96 42.0h0.73v19.3h-0.73zM220.41 42.0h0.73v19.3h-0.73zM222.95 42.0h1.81v19.3h-1.81zM225.49 42.0h0.73v19.3h-0.73zM226.94 42.0h1.81v19.3h-1.81zM229.48 42.0h0.73v19.3h-0.73zM230.93 42.0h0.73v19.3h-0.73zM232.38 42.0h1.81v19.3h-1.81zM234.92 42.0h1.81v19.3h-1.81zM237.45 42.0h0.73v19.3h-0.73zM239.99 42.0h0.73v19.3h-0.73zM241.44 42.0h0.73v19.3h-0.73zM242.89 42.0h1.81v19.3h-1.81zM245.43 42.0h0.73v19.3h-0.73zM246.88 42.0h0.73v19.3h-0.73zM249.42 42.0h1.81v19.3h-1.81zM251.96 42.0h1.81v19.3h-1.81zM254.50 42.0h0.73v19.3h-0.73zM255.95 42.0h0.73v19.3h-0.73zM258.49 42.0h0.73v19.3h-0.73zM259.94 42.0h1.81v19.3h-1.81zM262.48 42.0h0.73v19.3h-0.73zM263.93 42.0h0.73v19.3h-0.73zM265.38 42.0h1.81v19.3h-1.81zM267.92 42.0h0.73v19.3h-0.73zM270.45 42.0h1.81v19.3h-1.81zM272.99 42.0h1.81v19.3h-1.81zM276.62 42.0h0.73v19.3h-0.73zM278.07 42.0h0.73v19.3h-0.73zM279.52 42.0h0.73v19.3h-0.73zM280.97 42.0h1.81v19.3h-1.81zM283.51 42.0h0.73v19.3h-0.73zM286.05 42.0h0.73v19.3h-0.73zM287.50 42.0h1.81v19.3h-1.81zM290.04 42.0h1.81v19.3h-1.81zM292.57 42.0h0.73v19.3h-0.73z" fill="#141018"/>
<defs>
<radialGradient id="rbg" cx="0.5" cy="0.45" r="0.75"><stop offset="0" stop-color="#f7f5f5"/><stop offset="0.6" stop-color="#efecec"/><stop offset="1" stop-color="#e4e1e1"/></radialGradient>
<radialGradient id="rhead" cx="0.4" cy="0.3" r="0.8"><stop offset="0" stop-color="#3d9fe6"/><stop offset="0.55" stop-color="#1f7cc9"/><stop offset="1" stop-color="#145594"/></radialGradient>
<linearGradient id="rbody" x1="0" y1="0" x2="1" y2="1"><stop offset="0" stop-color="#2f92dd"/><stop offset="1" stop-color="#15589a"/></linearGradient>
<filter id="rblur" x="-10%" y="-10%" width="120%" height="120%"><feGaussianBlur stdDeviation="0.45"/></filter>
<filter id="rblur2" x="-30%" y="-80%" width="160%" height="260%"><feGaussianBlur stdDeviation="2"/></filter>
</defs>
<rect x="558.2" y="9.4" width="85.3" height="88" rx="15" fill="url(#rbg)"/>
<ellipse cx="583" cy="87.5" rx="20" ry="4.5" fill="#8f8d8d" opacity="0.5" filter="url(#rblur2)"/>
<g filter="url(#rblur)">
<path d="M578 19Q580 28 575.5 34Q569.5 41 573 48Q578 55.5 589 58" fill="none" stroke="#b8772e" stroke-width="1.6"/>
<path d="M625.5 20Q624.5 29 629 34Q634 41 627.5 48.5Q621 54 614 57" fill="none" stroke="#b8772e" stroke-width="1.6"/>
<path d="M601.3 12.5L601.3 18" stroke="#1f6eb5" stroke-width="1.2"/>
<ellipse cx="581.5" cy="36.5" rx="4.2" ry="6.5" fill="#ee8f1c"/>
<ellipse cx="621.3" cy="35" rx="4.2" ry="6.5" fill="#ee8f1c"/>
<circle cx="601.5" cy="35" r="18.6" fill="url(#rhead)"/>
<circle cx="591.6" cy="37.2" r="5" fill="#e9a227"/><circle cx="591.6" cy="37.2" r="3.2" fill="#3a1208"/>
<circle cx="610.5" cy="36.7" r="4.8" fill="#e9a227"/><circle cx="610.5" cy="36.7" r="3" fill="#3a1208"/>
<path d="M594.5 45.5Q601 50.5 607.5 45.5Q601 48 594.5 45.5Z" fill="#e8eef2" stroke="#e8eef2" stroke-width="1.4" stroke-linejoin="round"/>
<path d="M589.5 54.5Q601 50.5 613 55" stroke="#123f70" stroke-width="2.4" fill="none"/>
<path d="M590.5 56Q601.3 52.5 612 56.5L611 70Q601.3 78 592 70Z" fill="url(#rbody)"/>
<ellipse cx="601.3" cy="66.3" rx="7.5" ry="3" fill="#ee8f1c"/>
<path d="M588 57.5Q582 58 581 66L580 72L585 73L587.5 66Q590 62 590.5 58Z" fill="#1f7cc9"/>
<path d="M614.5 58Q621 59 621.5 66L623 72L618 74L615.5 67Q613 63 613 59Z" fill="#1f7cc9"/>
<circle cx="582.5" cy="73.5" r="3" fill="#e99a3a"/><circle cx="621" cy="74.5" r="3" fill="#e99a3a"/>
<path d="M593.5 71L598.5 72L596 81L590 80Z" fill="#ee8f1c"/><path d="M604.5 72L609.5 71L613 80L607 81Z" fill="#ee8f1c"/>
<path d="M587 79.5Q591 77.5 597 79.5L598 90.5L583 90.5Z" fill="#1f7cc9"/>
<path d="M606 79.5Q611 77.5 615 79.5L618.5 90.5L605.5 90.5Z" fill="#1f7cc9"/>
<path d="M582.5 90L598.5 90L598.5 92.6L582.5 92.6Z" fill="#ee8f1c"/><path d="M605 90L619 90L619 92.6L605 92.6Z" fill="#ee8f1c"/>
<ellipse cx="595" cy="24" rx="5" ry="3" fill="#6ec0f5" opacity="0.6" transform="rotate(-30 595 24)"/>
<ellipse cx="611" cy="25" rx="3" ry="1.8" fill="#6ec0f5" opacity="0.5" transform="rotate(25 611 25)"/>
</g>
<rect x="483.9" y="365.4" width="28.4" height="9.2" fill="#e3c3b0" stroke="#111" stroke-width="1"/>
<rect x="483.9" y="378.4" width="28.4" height="9.2" fill="#000000" stroke="#111" stroke-width="1"/>
<rect x="483.9" y="392.4" width="28.4" height="9.2" fill="#d98a5c" stroke="#111" stroke-width="1"/>
<rect x="483.9" y="405.4" width="28.4" height="9.2" fill="#e3c3b0" stroke="#111" stroke-width="1"/>
<rect x="483.9" y="419.4" width="28.4" height="9.2" fill="#ffffff" stroke="#111" stroke-width="1"/>
</svg>
<div class="t" style="left:19px;top:9.80px;font-size:15px;letter-spacing:0.05px;transform:scaleY(1.06);transform-origin:0 84.65%">Технологическая карта</div>
<div class="t" style="left:18px;top:29.27px;font-size:9.6px;letter-spacing:0.04px">Wilcom EmbroideryStudio - Designing</div>
<div class="t" style="left:18px;top:68.22px;font-size:9.9px;">Дизайн:</div>
<div class="t" style="left:71.2px;top:67.89px;font-size:14.9px;transform:scaleY(1.04);transform-origin:0 84.65%">EMBROIDERYAI-SM-PO PLANU</div>
<div class="t" style="left:18px;top:88.02px;font-size:9.9px;">Заголовок</div>
<div class="t" style="left:71.2px;top:87.89px;font-size:14.9px;letter-spacing:0.13px;transform:scaleY(1.04);transform-origin:0 84.65%">https://boosty.to/embroiderydesingn</div>
<div class="t" style="left:432px;top:10.04px;font-size:10px;letter-spacing:-0.08px">Стежки:</div>
<div class="t" style="left:488.4px;top:10.04px;font-size:10px;letter-spacing:-0.2px">17 226</div>
<div class="t" style="left:432px;top:23.04px;font-size:10px;letter-spacing:-0.08px">Высота:</div>
<div class="t" style="left:488.4px;top:23.04px;font-size:10px;letter-spacing:-0.2px">172.3 мм</div>
<div class="t" style="left:432px;top:37.03px;font-size:10px;letter-spacing:-0.08px">Ширина:</div>
<div class="t" style="left:488.4px;top:37.03px;font-size:10px;letter-spacing:-0.2px">169.1 мм</div>
<div class="t" style="left:432px;top:50.03px;font-size:10px;letter-spacing:-0.08px">Цвета:</div>
<div class="t" style="left:488.4px;top:50.03px;font-size:10px;letter-spacing:-0.2px">4</div>
<div class="t" style="left:432px;top:64.03px;font-size:10px;letter-spacing:-0.08px">Цветоряд:</div>
<div class="t" style="left:488.4px;top:64.03px;font-size:10px;letter-spacing:-0.2px">Colorway 1</div>
<div class="t" style="left:432px;top:78.03px;font-size:10px;letter-spacing:-0.08px">Увеличить:</div>
<div class="t" style="left:488.4px;top:78.03px;font-size:10px;letter-spacing:-0.2px">0.70</div>
<div class="t" style="left:454.5px;top:108.03px;font-size:10px;letter-spacing:-0.15px">Машинный формат:</div>
<div class="t" style="left:551.6px;top:108.03px;font-size:10px;">Tajima TBF</div>
<div class="t" style="left:454.5px;top:121.03px;font-size:10px;letter-spacing:-0.15px">Смены цвета:</div>
<div class="t" style="left:551.6px;top:121.03px;font-size:10px;">4</div>
<div class="t" style="left:454.5px;top:135.03px;font-size:10px;letter-spacing:-0.15px">Остановы:</div>
<div class="t" style="left:551.6px;top:135.03px;font-size:10px;">5</div>
<div class="t" style="left:454.5px;top:149.03px;font-size:10px;letter-spacing:-0.15px">Обрезки:</div>
<div class="t" style="left:551.6px;top:149.03px;font-size:10px;">27</div>
<div class="t" style="left:454.5px;top:162.03px;font-size:10px;letter-spacing:-0.15px">Аппликации:</div>
<div class="t" style="left:551.6px;top:162.03px;font-size:10px;">0</div>
<div class="t" style="left:454.5px;top:176.03px;font-size:10px;letter-spacing:-0.15px">Влево:</div>
<div class="t" style="left:551.6px;top:176.03px;font-size:10px;">11.1 мм</div>
<div class="t" style="left:454.5px;top:189.03px;font-size:10px;letter-spacing:-0.15px">Правое:</div>
<div class="t" style="left:551.6px;top:189.03px;font-size:10px;">158.0 мм</div>
<div class="t" style="left:454.5px;top:203.03px;font-size:10px;letter-spacing:-0.15px">Верхних край:</div>
<div class="t" style="left:551.6px;top:203.03px;font-size:10px;">126.9 мм</div>
<div class="t" style="left:454.5px;top:216.03px;font-size:10px;letter-spacing:-0.15px">Нижний край:</div>
<div class="t" style="left:551.6px;top:216.03px;font-size:10px;">45.4 мм</div>
<div class="t" style="left:454.5px;top:230.03px;font-size:10px;letter-spacing:-0.15px">Конец X:</div>
<div class="t" style="left:551.6px;top:230.03px;font-size:10px;">140.9 мм</div>
<div class="t" style="left:454.5px;top:244.03px;font-size:10px;letter-spacing:-0.15px">Конец Y:</div>
<div class="t" style="left:551.6px;top:244.03px;font-size:10px;">-27.4 мм</div>
<div class="t" style="left:454.5px;top:257.04px;font-size:10px;letter-spacing:-0.15px">Область</div>
<div class="t" style="left:551.6px;top:257.04px;font-size:10px;">29136.0 кв.мм</div>
<div class="t" style="left:454.5px;top:271.04px;font-size:10px;letter-spacing:-0.15px">Макс. стежок:</div>
<div class="t" style="left:551.6px;top:271.04px;font-size:10px;">9.6 мм</div>
<div class="t" style="left:454.5px;top:284.04px;font-size:10px;letter-spacing:-0.15px">Мин. стежок:</div>
<div class="t" style="left:551.6px;top:284.04px;font-size:10px;">0.2 мм</div>
<div class="t" style="left:454.5px;top:298.04px;font-size:10px;letter-spacing:-0.15px">Макс. скачок:</div>
<div class="t" style="left:551.6px;top:298.04px;font-size:10px;">9.6 мм</div>
<div class="t" style="left:454.5px;top:311.04px;font-size:10px;letter-spacing:-0.15px">Всего нити:</div>
<div class="t" style="left:551.6px;top:311.04px;font-size:10px;">95.36м</div>
<div class="t" style="left:454.5px;top:325.04px;font-size:10px;letter-spacing:-0.15px">Всего шпулечной:</div>
<div class="t" style="left:551.6px;top:325.04px;font-size:10px;">35.79м</div>
<div class="t" style="left:454.5px;top:340.04px;font-size:10px;letter-spacing:-0.1px">Стоп последовательность:</div>
<div class="t u" style="left:454.5px;top:353.04px;font-size:10px;letter-spacing:0.12px">#</div>
<div class="t u" style="left:467px;top:353.04px;font-size:10px;letter-spacing:0.12px">N#</div>
<div class="t u" style="left:484.5px;top:353.04px;font-size:10px;letter-spacing:0.12px">Цвет</div>
<div class="t u" style="left:515.7px;top:353.04px;font-size:10px;letter-spacing:0.12px">Стежки</div>
<div class="t u" style="left:555.4px;top:353.04px;font-size:10px;letter-spacing:0.12px">Код</div>
<div class="t u" style="left:578.5px;top:353.04px;font-size:10px;letter-spacing:0.12px">Имя</div>
<div class="t u" style="left:627px;top:353.04px;font-size:10px;letter-spacing:0.12px">Карта</div>
<div class="t" style="left:454.5px;top:367.04px;font-size:10px;">1.</div>
<div class="t" style="left:467.5px;top:367.04px;font-size:10px;">11</div>
<div class="t" style="right:130.5px;top:367.04px;font-size:10px;">6 898</div>
<div class="t" style="right:108px;top:367.04px;font-size:10px;">11</div>
<div class="t" style="left:579px;top:367.04px;font-size:10px;letter-spacing:-0.2px">Dark Red</div>
<div class="t" style="left:627.5px;top:367.04px;font-size:10px;letter-spacing:-0.15px">Default</div>
<div class="t" style="left:454.5px;top:380.04px;font-size:10px;">2.</div>
<div class="t" style="left:467.5px;top:380.04px;font-size:10px;">8</div>
<div class="t" style="right:130.5px;top:380.04px;font-size:10px;">296</div>
<div class="t" style="right:108px;top:380.04px;font-size:10px;">8</div>
<div class="t" style="left:579px;top:380.04px;font-size:10px;letter-spacing:-0.2px">Black</div>
<div class="t" style="left:627.5px;top:380.04px;font-size:10px;letter-spacing:-0.15px">Default</div>
<div class="t" style="left:454.5px;top:394.04px;font-size:10px;">3.</div>
<div class="t" style="left:467.5px;top:394.04px;font-size:10px;">10</div>
<div class="t" style="right:130.5px;top:394.04px;font-size:10px;">4 144</div>
<div class="t" style="right:108px;top:394.04px;font-size:10px;">10</div>
<div class="t" style="left:579px;top:394.04px;font-size:10px;letter-spacing:-0.2px">Dark Blue</div>
<div class="t" style="left:627.5px;top:394.04px;font-size:10px;letter-spacing:-0.15px">Default</div>
<div class="t" style="left:454.5px;top:407.04px;font-size:10px;">4.</div>
<div class="t" style="left:467.5px;top:407.04px;font-size:10px;">11</div>
<div class="t" style="right:130.5px;top:407.04px;font-size:10px;">2 337</div>
<div class="t" style="right:108px;top:407.04px;font-size:10px;">11</div>
<div class="t" style="left:579px;top:407.04px;font-size:10px;letter-spacing:-0.2px">Dark Red</div>
<div class="t" style="left:627.5px;top:407.04px;font-size:10px;letter-spacing:-0.15px">Default</div>
<div class="t" style="left:454.5px;top:421.04px;font-size:10px;">5.</div>
<div class="t" style="left:467.5px;top:421.04px;font-size:10px;">9</div>
<div class="t" style="right:130.5px;top:421.04px;font-size:10px;">3 550</div>
<div class="t" style="right:108px;top:421.04px;font-size:10px;">9</div>
<div class="t" style="left:579px;top:421.04px;font-size:10px;letter-spacing:-0.2px">White</div>
<div class="t" style="left:627.5px;top:421.04px;font-size:10px;letter-spacing:-0.15px">Default</div>
<div class="t" style="left:73.2px;top:105.03px;font-size:10px;color:#55dd00">1</div>
<div class="t" style="left:17.6px;top:538.03px;font-size:10px;color:#55dd00">1</div>
<div class="t" style="left:371.2px;top:800.03px;font-size:10px;color:#f01010">2</div>
<div class="t" style="left:444px;top:596.03px;font-size:10px;color:#f01010">2</div>
<div class="t" style="left:18px;top:812.20px;font-size:9.8px;">Авторы: https://vk.com/market-</div>
<div class="t" style="left:18px;top:823.20px;font-size:9.8px;">26308554?</div>
<div class="t" style="left:18px;top:834.20px;font-size:9.8px;">screen=group&amp;section=album_17</div>
<div class="t" style="left:191px;top:812.20px;font-size:9.8px;">Дата сохранения: 23.02.2026</div>
<div class="t" style="left:239px;top:823.20px;font-size:9.8px;">16:06:50</div>
<div class="t" style="left:344px;top:812.20px;font-size:9.8px;">Дата печати: 23.02.2026 16:14:08</div>
<div class="t" style="right:22.5px;top:812.20px;font-size:9.8px;">лист 1 of 2</div>
</body>
</html>
